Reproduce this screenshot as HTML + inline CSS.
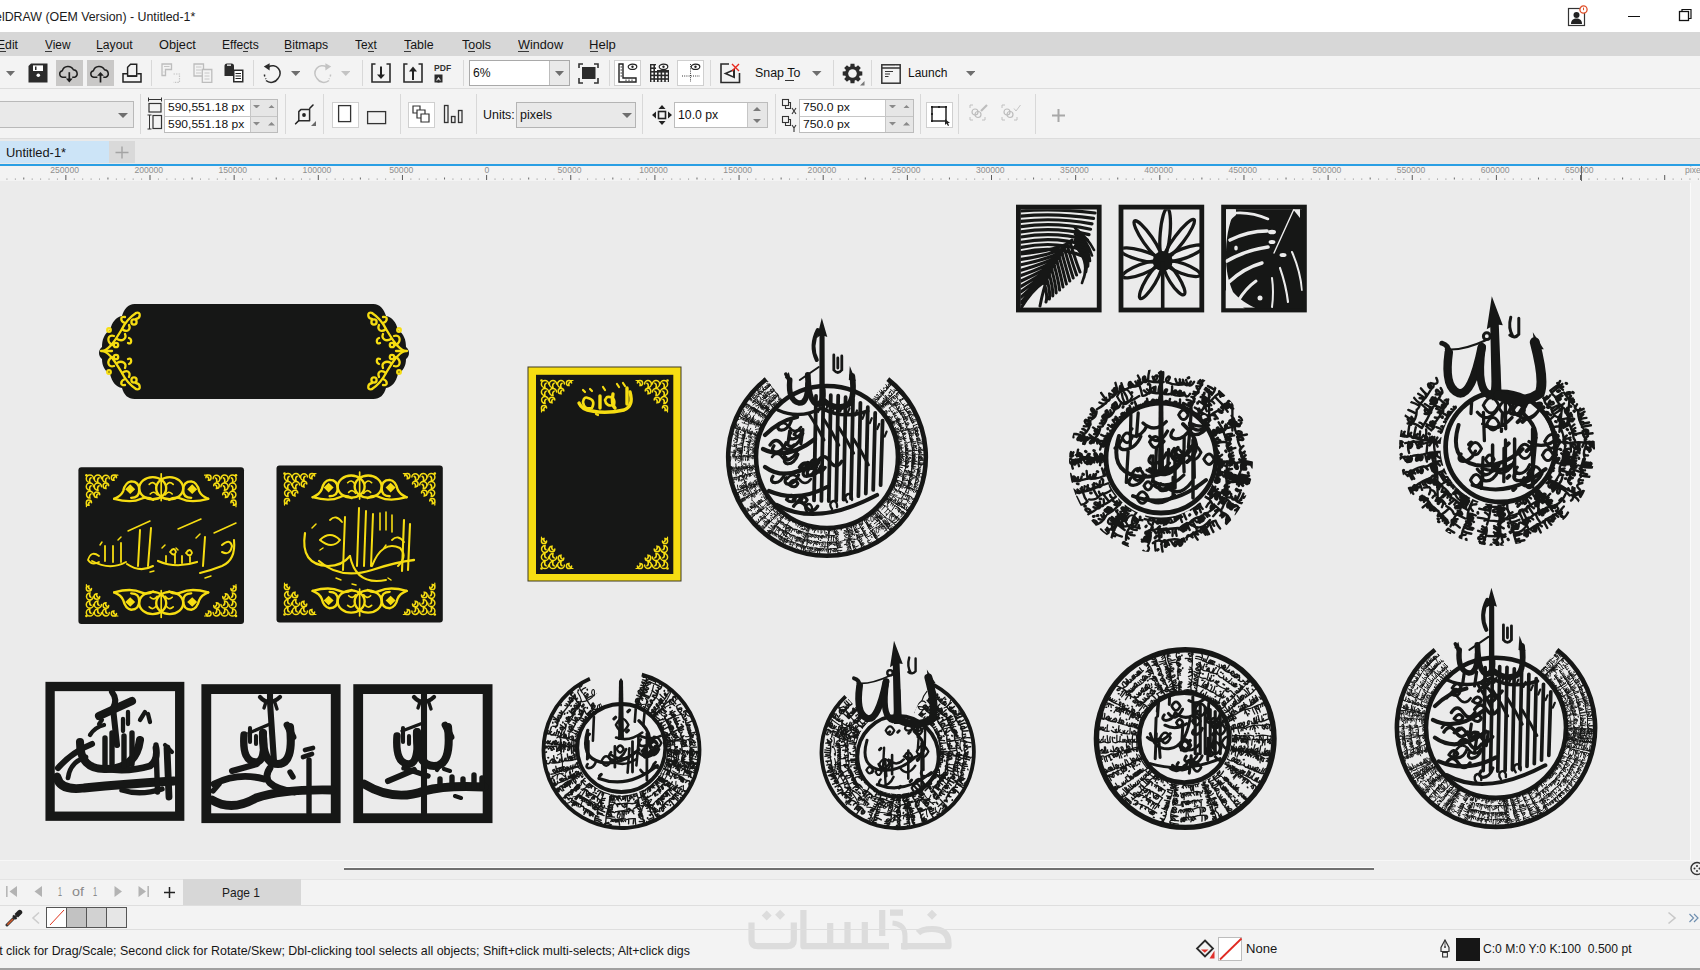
<!DOCTYPE html>
<html><head><meta charset="utf-8">
<style>
*{margin:0;padding:0;box-sizing:border-box}
html,body{width:1700px;height:970px;overflow:hidden;background:#ebebeb;font-family:"Liberation Sans",sans-serif;color:#1a1a1a}
.a{position:absolute;display:block}
.t{position:absolute;white-space:nowrap;line-height:1;transform-origin:0 0}
</style></head><body>
<div class="a" style="left:0px;top:0px;width:1700px;height:32px;background:#ffffff;"></div>
<div class="a" style="left:0px;top:32px;width:1700px;height:24px;background:#d7d7d7;"></div>
<div class="a" style="left:0px;top:56px;width:1700px;height:33px;background:#f3f3f3;"></div>
<div class="a" style="left:0px;top:88px;width:1700px;height:1px;background:#dcdcdc;"></div>
<div class="a" style="left:0px;top:89px;width:1700px;height:50px;background:#f3f3f3;"></div>
<div class="a" style="left:0px;top:138px;width:1700px;height:1px;background:#dcdcdc;"></div>
<div class="a" style="left:0px;top:139px;width:1700px;height:25px;background:#e9e9e9;"></div>
<div class="a" style="left:0px;top:164px;width:1700px;height:2px;background:#2a9fe4;"></div>
<div class="a" style="left:0px;top:166px;width:1700px;height:15px;background:#f3f3f3;"></div>
<div class="a" style="left:0px;top:860px;width:1700px;height:1px;background:#f7f7f7;"></div>
<div class="a" style="left:0px;top:861px;width:1700px;height:18px;background:#efefef;"></div>
<div class="a" style="left:0px;top:879px;width:1700px;height:26px;background:#f3f3f3;"></div>
<div class="a" style="left:0px;top:879px;width:1700px;height:1px;background:#e4e4e4;"></div>
<div class="a" style="left:0px;top:905px;width:1700px;height:1px;background:#dedede;"></div>
<div class="a" style="left:0px;top:906px;width:1700px;height:23px;background:#f3f3f3;"></div>
<div class="a" style="left:0px;top:929px;width:1700px;height:1px;background:#dedede;"></div>
<div class="a" style="left:0px;top:930px;width:1700px;height:38px;background:#f3f3f3;"></div>
<div class="a" style="left:0px;top:968px;width:1700px;height:2px;background:#a0a0a0;"></div>
<div class="t" style="left:-4.79px;top:10.20px;font-size:13px;color:#1b1b1b;transform:scaleX(0.9518);">elDRAW (OEM Version) - Untitled-1*</div>
<svg class="a" style="left:1566px;top:5px;" width="24" height="22" viewBox="0 0 24 22"><rect x="2.5" y="3.5" width="16" height="17" fill="none" stroke="#333" stroke-width="1.2"/><circle cx="10.5" cy="10" r="3" fill="#222"/><path d="M5 19c0-4 2.5-5.5 5.5-5.5S16 15 16 19z" fill="#222"/><circle cx="17.5" cy="4.5" r="3.6" fill="#fff" stroke="#e0502a" stroke-width="1.3"/><rect x="17" y="2.6" width="1" height="2.6" fill="#e0502a"/></svg>
<div class="a" style="left:1628px;top:16px;width:12px;height:1px;background:#111;"></div>
<svg class="a" style="left:1678px;top:8px;" width="16" height="14" viewBox="0 0 16 14"><rect x="1.5" y="3.5" width="9" height="9" fill="none" stroke="#111" stroke-width="1.3"/><path d="M4 3.5V1.5h9v9h-2" fill="none" stroke="#111" stroke-width="1.2"/></svg>
<div class="t" style="left:-2.97px;top:38.82px;font-size:12.5px;color:#141414;transform:scaleX(0.9737);">Edit</div>
<div class="t" style="left:44.54px;top:38.82px;font-size:12.5px;color:#141414;transform:scaleX(0.9473);">View</div>
<div class="t" style="left:96.02px;top:38.82px;font-size:12.5px;color:#141414;transform:scaleX(0.9798);">Layout</div>
<div class="t" style="left:159.03px;top:38.82px;font-size:12.5px;color:#141414;transform:scaleX(1.0215);">Object</div>
<div class="t" style="left:221.53px;top:38.82px;font-size:12.5px;color:#141414;transform:scaleX(0.9682);">Effects</div>
<div class="t" style="left:284.22px;top:38.82px;font-size:12.5px;color:#141414;transform:scaleX(0.9797);">Bitmaps</div>
<div class="t" style="left:355.16px;top:38.82px;font-size:12.5px;color:#141414;transform:scaleX(0.9485);">Text</div>
<div class="t" style="left:404.45px;top:38.82px;font-size:12.5px;color:#141414;transform:scaleX(0.9910);">Table</div>
<div class="t" style="left:461.75px;top:38.82px;font-size:12.5px;color:#141414;transform:scaleX(0.9965);">Tools</div>
<div class="t" style="left:518.14px;top:38.82px;font-size:12.5px;color:#141414;transform:scaleX(1.0127);">Window</div>
<div class="t" style="left:588.65px;top:38.82px;font-size:12.5px;color:#141414;transform:scaleX(1.0460);">Help</div>
<div class="a" style="left:0px;top:51px;width:6px;height:1px;background:#3a3a3a;"></div>
<div class="a" style="left:45px;top:51px;width:7px;height:1px;background:#3a3a3a;"></div>
<div class="a" style="left:97px;top:51px;width:6px;height:1px;background:#3a3a3a;"></div>
<div class="a" style="left:176px;top:51px;width:4px;height:1px;background:#3a3a3a;"></div>
<div class="a" style="left:243px;top:51px;width:5px;height:1px;background:#3a3a3a;"></div>
<div class="a" style="left:285px;top:51px;width:7px;height:1px;background:#3a3a3a;"></div>
<div class="a" style="left:368px;top:51px;width:6px;height:1px;background:#3a3a3a;"></div>
<div class="a" style="left:404px;top:51px;width:7px;height:1px;background:#3a3a3a;"></div>
<div class="a" style="left:468px;top:51px;width:7px;height:1px;background:#3a3a3a;"></div>
<div class="a" style="left:518px;top:51px;width:11px;height:1px;background:#3a3a3a;"></div>
<div class="a" style="left:590px;top:51px;width:8px;height:1px;background:#3a3a3a;"></div>
<svg class="a" style="left:5.800000000000001px;top:70.8px;" width="9" height="5" viewBox="0 0 9 5"><path d="M0 0H9L4.5 5Z" fill="#6e6e6e"/></svg>
<svg class="a" style="left:28px;top:63px;" width="20" height="20" viewBox="0 0 20 20"><path d="M3 0.5H19.5V19.5H0.5V3Z" fill="#2b2b2b"/><rect x="5" y="2.4" width="10" height="5.6" fill="#fff"/><rect x="7" y="3.5" width="1.5" height="3.5" fill="#2b2b2b"/><circle cx="10.3" cy="12.3" r="1.8" fill="#fff"/></svg>
<div class="a" style="left:56px;top:60px;width:27px;height:26px;background:#c9c8c7;"></div>
<div class="a" style="left:87px;top:60px;width:27px;height:26px;background:#c9c8c7;"></div>
<svg class="a" style="left:56px;top:60px;" width="27" height="26" viewBox="56 60 27 26"><path d="M66.3 77.2H62.6A3.3 3.3 0 0 1 62.3 70.7A6 6 0 0 1 73.4 69.8A3.9 3.9 0 0 1 75 77.2H72.2" fill="none" stroke="#1e1e1e" stroke-width="1.45"/><path d="M69.3 72.2V79.5" stroke="#1e1e1e" stroke-width="1.7"/><path d="M65.9 78.6H72.7L69.3 82.6Z" fill="#1e1e1e"/></svg>
<svg class="a" style="left:87px;top:60px;" width="27" height="26" viewBox="87 60 27 26"><path d="M97.4 77.2H93.7A3.3 3.3 0 0 1 93.4 70.7A6 6 0 0 1 104.5 69.8A3.9 3.9 0 0 1 106.1 77.2H103.3" fill="none" stroke="#1e1e1e" stroke-width="1.45"/><path d="M100.5 74.5V82.5" stroke="#1e1e1e" stroke-width="1.7"/><path d="M97.1 75.8H103.9L100.5 71.9Z" fill="#1e1e1e"/></svg>
<svg class="a" style="left:120px;top:61px;" width="24" height="24" viewBox="120 61 24 24"><path d="M127.6 76V67.2L130.6 64.2H136.7V76Z" fill="#f3f3f3" stroke="#222" stroke-width="1.45"/><path d="M127.2 73.7H123V82.1H141V73.7H137.2" fill="none" stroke="#222" stroke-width="1.5"/><path d="M127.4 76.2H137" stroke="#222" stroke-width="1.5"/></svg>
<div class="a" style="left:151px;top:60px;width:1px;height:26px;background:#d8d8d8;"></div>
<svg class="a" style="left:161px;top:63px;" width="20" height="20" viewBox="0 0 20 20"><path d="M1 1H10.5V6.5H4.5V12.5H1Z" fill="none" stroke="#bdbdbd" stroke-width="1.3"/><path d="M3 3.5H8.5M2.5 9H3.5" stroke="#c5c5c5" stroke-width="1"/><path d="M12.5 11H18.5V19.3H12.5" fill="none" stroke="#c5c5c5" stroke-width="1.2" stroke-dasharray="1.5 1"/></svg>
<svg class="a" style="left:192.5px;top:63px;" width="20" height="20" viewBox="0 0 20 20"><path d="M1 1H10.5V13H1Z" fill="none" stroke="#bdbdbd" stroke-width="1.3"/><path d="M3 4H8.5M3 7H8.5M3 10H8.5" stroke="#c8c8c8"/><path d="M9.3 6.5H18.8V19.3H9.3Z" fill="#f3f3f3" stroke="#bdbdbd" stroke-width="1.3"/><path d="M11.5 10H16.5M11.5 13H16.5M11.5 16H16.5" stroke="#c8c8c8"/></svg>
<svg class="a" style="left:224px;top:63px;" width="20" height="20" viewBox="0 0 20 20"><path d="M0.5 3A2.5 2.5 0 0 1 3 0.5H7.5A2.5 2.5 0 0 1 10 3V13H0.5Z" fill="#2b2b2b"/><rect x="3" y="1.5" width="4" height="1.3" fill="#fff"/><path d="M9 6.5H19.5V19.5H9Z" fill="#2b2b2b"/><rect x="10.5" y="8" width="7.5" height="10" fill="#fff"/><path d="M11.5 10.5H17M11.5 13H17M11.5 15.5H17" stroke="#222" stroke-width="1.2"/></svg>
<div class="a" style="left:252.5px;top:60px;width:1px;height:26px;background:#d8d8d8;"></div>
<svg class="a" style="left:262px;top:63px;" width="20" height="21" viewBox="0 0 20 21"><path d="M4 17.5A8 8 0 0 0 16 15.5 7.5 7.5 0 0 0 6.5 4" fill="none" stroke="#2b2b2b" stroke-width="1.5"/><path d="M2.5 11.5A7 7 0 0 0 4 16" fill="none" stroke="#2b2b2b" stroke-width="1.5" stroke-dasharray="2 2"/><path d="M1.8 3.5L7.6 0.3V7.6Z" fill="#2b2b2b"/></svg>
<svg class="a" style="left:290.65px;top:71.0px;" width="9.5" height="5" viewBox="0 0 9.5 5"><path d="M0 0H9.5L4.75 5Z" fill="#6e6e6e"/></svg>
<svg class="a" style="left:312.5px;top:63px;" width="20" height="21" viewBox="0 0 20 21"><path d="M16 17.5A8 8 0 0 1 4 15.5 7.5 7.5 0 0 1 13.5 4" fill="none" stroke="#c3c3c3" stroke-width="1.5"/><path d="M17.5 11.5A7 7 0 0 1 16 16" fill="none" stroke="#c3c3c3" stroke-width="1.5" stroke-dasharray="2 2"/><path d="M18.2 3.5L12.4 0.3V7.6Z" fill="#c3c3c3"/></svg>
<svg class="a" style="left:340.95px;top:71.0px;" width="9.5" height="5" viewBox="0 0 9.5 5"><path d="M0 0H9.5L4.75 5Z" fill="#c3c3c3"/></svg>
<div class="a" style="left:361.5px;top:60px;width:1px;height:26px;background:#d8d8d8;"></div>
<svg class="a" style="left:371px;top:63px;" width="20" height="20" viewBox="0 0 20 20"><path d="M4.5 1H1V19H19V1H15.5" fill="none" stroke="#2b2b2b" stroke-width="1.6"/><path d="M10 3.5V13" stroke="#222" stroke-width="2"/><path d="M6 11.5H14L10 16Z" fill="#222"/></svg>
<svg class="a" style="left:402.5px;top:63px;" width="20" height="20" viewBox="0 0 20 20"><path d="M4.5 1H1V19H19V1H15.5" fill="none" stroke="#2b2b2b" stroke-width="1.6"/><path d="M10 7V17" stroke="#222" stroke-width="2"/><path d="M6 8.5H14L10 3.5Z" fill="#222"/></svg>
<div class="t" style="left:433.5px;top:64px;font-size:9px;font-weight:bold;color:#333;transform:scaleX(0.95)">PDF</div>
<svg class="a" style="left:434px;top:74px;" width="9" height="9" viewBox="0 0 9 9"><rect x="0.5" y="0.5" width="8" height="8" fill="#2b2b2b"/><path d="M2 6.5L4.5 3 7 6.5Z" fill="#fff"/><rect x="3.5" y="5.5" width="2" height="3" fill="#2b2b2b"/></svg>
<div class="a" style="left:462.5px;top:60px;width:1px;height:26px;background:#d8d8d8;"></div>
<div class="a" style="left:469px;top:60px;width:101px;height:26px;background:#ffffff;border:1px solid #a9a9a9;"></div>
<div class="a" style="left:549px;top:61px;width:20px;height:24px;background:#e9e9e9;border-left:1px solid #bdbdbd;"></div>
<svg class="a" style="left:555.0px;top:70.8px;" width="9" height="5" viewBox="0 0 9 5"><path d="M0 0H9L4.5 5Z" fill="#6e6e6e"/></svg>
<div class="t" style="left:473.19px;top:67.32px;font-size:12.5px;color:#111;transform:scaleX(0.9706);">6%</div>
<svg class="a" style="left:578px;top:63px;" width="22" height="21" viewBox="0 0 22 21"><path d="M1 5V1H5M16 1H20V5M20 15V20H16M5 20H1V15" fill="none" stroke="#333" stroke-width="1.6"/><rect x="4" y="4" width="13.5" height="12" fill="#2b2b2b"/></svg>
<div class="a" style="left:608.5px;top:60px;width:1px;height:26px;background:#d8d8d8;"></div>
<div class="a" style="left:614px;top:60px;width:27px;height:26px;background:#ffffff;border:1px solid #cfcfcf;"></div>
<svg class="a" style="left:618px;top:63px;" width="20" height="20" viewBox="0 0 20 20"><path d="M1 1H5V15H18V19H1Z" fill="none" stroke="#222" stroke-width="1.4"/><path d="M2.5 4H4M2.5 7H4M2.5 10H4M2.5 13H4M8 16.5V18M11 16.5V18M14 16.5V18" stroke="#222" stroke-width="0.9"/><ellipse cx="14.5" cy="3.8" rx="4.3" ry="2.6" fill="none" stroke="#222" stroke-width="1.2"/><circle cx="14.5" cy="3.8" r="1.2" fill="#222"/></svg>
<svg class="a" style="left:649px;top:63px;" width="21" height="20" viewBox="0 0 21 20"><path d="M1 1H7V7H20V19H1Z" fill="#2b2b2b"/><rect x="2.4" y="2.4" width="2" height="2" fill="#fff"/><rect x="6.0" y="2.4" width="2" height="2" fill="#fff"/><rect x="2.4" y="6.0" width="2" height="2" fill="#fff"/><rect x="6.0" y="6.0" width="2" height="2" fill="#fff"/><rect x="2.4" y="9.6" width="2" height="2" fill="#fff"/><rect x="6.0" y="9.6" width="2" height="2" fill="#fff"/><rect x="9.6" y="9.6" width="2" height="2" fill="#fff"/><rect x="13.2" y="9.6" width="2" height="2" fill="#fff"/><rect x="16.8" y="9.6" width="2" height="2" fill="#fff"/><rect x="2.4" y="13.2" width="2" height="2" fill="#fff"/><rect x="6.0" y="13.2" width="2" height="2" fill="#fff"/><rect x="9.6" y="13.2" width="2" height="2" fill="#fff"/><rect x="13.2" y="13.2" width="2" height="2" fill="#fff"/><rect x="16.8" y="13.2" width="2" height="2" fill="#fff"/><rect x="2.4" y="16.8" width="2" height="2" fill="#fff"/><rect x="6.0" y="16.8" width="2" height="2" fill="#fff"/><rect x="9.6" y="16.8" width="2" height="2" fill="#fff"/><rect x="13.2" y="16.8" width="2" height="2" fill="#fff"/><rect x="16.8" y="16.8" width="2" height="2" fill="#fff"/><ellipse cx="14.5" cy="3.8" rx="4.3" ry="2.6" fill="#fff" stroke="#222" stroke-width="1.2"/><circle cx="14.5" cy="3.8" r="1.2" fill="#222"/></svg>
<div class="a" style="left:677px;top:60px;width:27px;height:26px;background:#ffffff;border:1px solid #cfcfcf;"></div>
<svg class="a" style="left:681px;top:63px;" width="20" height="20" viewBox="0 0 20 20"><path d="M9.5 1V19M1 13H19" stroke="#333" stroke-width="1" stroke-dasharray="1 1.2"/><ellipse cx="14.5" cy="3.8" rx="4.3" ry="2.6" fill="#fff" stroke="#222" stroke-width="1.2"/><circle cx="14.5" cy="3.8" r="1.2" fill="#222"/></svg>
<div class="a" style="left:710px;top:60px;width:1px;height:26px;background:#d8d8d8;"></div>
<svg class="a" style="left:719.5px;top:63px;" width="21" height="21" viewBox="0 0 21 21"><path d="M9 1H1V19.5H19.5V10" fill="none" stroke="#2b2b2b" stroke-width="1.6"/><path d="M3.5 10.5L15 5.5V15.5Z" fill="#2b2b2b"/><path d="M7.5 10.5L13 8V13Z" fill="#fff"/><path d="M12 1L19 8M19 1L12 8" stroke="#e8281e" stroke-width="1.4"/></svg>
<div class="t" style="left:754.54px;top:67.32px;font-size:12.5px;color:#111;transform:scaleX(0.9919);">Snap To</div>
<div class="a" style="left:785px;top:80px;width:9px;height:1px;background:#333;"></div>
<svg class="a" style="left:812.05px;top:71.0px;" width="9.5" height="5" viewBox="0 0 9.5 5"><path d="M0 0H9.5L4.75 5Z" fill="#6e6e6e"/></svg>
<div class="a" style="left:832.5px;top:60px;width:1px;height:26px;background:#d8d8d8;"></div>
<svg class="a" style="left:841.5px;top:62.5px;" width="23" height="23" viewBox="0 0 23 23"><path d="M20.30 8.51 L20.30 12.49 L17.57 12.69 L17.05 13.95 L18.83 16.03 L16.03 18.83 L13.95 17.05 L12.69 17.57 L12.49 20.30 L8.51 20.30 L8.31 17.57 L7.05 17.05 L4.97 18.83 L2.17 16.03 L3.95 13.95 L3.43 12.69 L0.70 12.49 L0.70 8.51 L3.43 8.31 L3.95 7.05 L2.17 4.97 L4.97 2.17 L7.05 3.95 L8.31 3.43 L8.51 0.70 L12.49 0.70 L12.69 3.43 L13.95 3.95 L16.03 2.17 L18.83 4.97 L17.05 7.05 L17.57 8.31Z" fill="#2b2b2b"/><circle cx="10.5" cy="10.5" r="4.3" fill="#f3f3f3"/><path d="M22.5 18V22.5H18Z" fill="#777"/></svg>
<div class="a" style="left:871.3px;top:60px;width:1px;height:26px;background:#d8d8d8;"></div>
<svg class="a" style="left:881px;top:63.5px;" width="20" height="20" viewBox="0 0 20 20"><rect x="0.8" y="0.8" width="18.4" height="18.4" fill="none" stroke="#333" stroke-width="1.5"/><path d="M1 4H19" stroke="#333" stroke-width="1.5"/><path d="M14 2.3H18" stroke="#fff" stroke-width="0.8" stroke-dasharray="1 0.5"/><path d="M4 7.5H12M4 10H9M4 12.5H7.5" stroke="#333" stroke-width="1.2"/></svg>
<div class="t" style="left:908.04px;top:67.32px;font-size:12.5px;color:#111;transform:scaleX(0.9595);">Launch</div>
<svg class="a" style="left:965.75px;top:71.0px;" width="9.5" height="5" viewBox="0 0 9.5 5"><path d="M0 0H9.5L4.75 5Z" fill="#6e6e6e"/></svg>
<div class="a" style="left:0px;top:101px;width:134px;height:27px;background:#e9e9e9;border:1px solid #b9b9b9;border-left:none;"></div>
<svg class="a" style="left:118.0px;top:113.0px;" width="10" height="5" viewBox="0 0 10 5"><path d="M0 0H10L5.0 5Z" fill="#6e6e6e"/></svg>
<div class="a" style="left:139.5px;top:94px;width:1px;height:40px;background:#d8d8d8;"></div>
<svg class="a" style="left:147px;top:96px;" width="16" height="36" viewBox="0 0 16 36"><path d="M1.5 3.5H14.5" stroke="#333" stroke-width="1"/><path d="M1.5 1.5V5.5M14.5 1.5V5.5" stroke="#333" stroke-width="1"/><rect x="2" y="7.5" width="12" height="8.5" fill="none" stroke="#333" stroke-width="1.2"/><path d="M2.5 19V33" stroke="#333" stroke-width="1"/><path d="M0.5 19H4.5M0.5 33H4.5" stroke="#333"/><rect x="6" y="19.5" width="8.5" height="13" fill="none" stroke="#333" stroke-width="1.2"/></svg>
<div class="a" style="left:163.5px;top:98.5px;width:114.5px;height:34.5px;background:#ffffff;border:1px solid #bcbcbc;"></div>
<div class="a" style="left:249.5px;top:99.5px;width:27.5px;height:32.5px;background:#e6e6e6;border-left:1px solid #c6c6c6;"></div>
<div class="a" style="left:164.5px;top:115.5px;width:112.5px;height:1px;background:#c6c6c6;"></div>
<div class="t" style="left:168.02px;top:101.97px;font-size:11.5px;color:#111;transform:scaleX(1.0451);">590,551.18 px</div>
<div class="t" style="left:168.02px;top:119.07px;font-size:11.5px;color:#111;transform:scaleX(1.0451);">590,551.18 px</div>
<svg class="a" style="left:253.3px;top:104.75px;" width="7" height="3.5" viewBox="0 0 7 3.5"><path d="M0 0H7L3.5 3.5Z" fill="#8a8a8a"/></svg>
<svg class="a" style="left:267.5px;top:104.75px;" width="7" height="3.5" viewBox="0 0 7 3.5"><path d="M0 3.5H7L3.5 0Z" fill="#8a8a8a"/></svg>
<svg class="a" style="left:253.3px;top:122.05px;" width="7" height="3.5" viewBox="0 0 7 3.5"><path d="M0 0H7L3.5 3.5Z" fill="#8a8a8a"/></svg>
<svg class="a" style="left:267.5px;top:122.05px;" width="7" height="3.5" viewBox="0 0 7 3.5"><path d="M0 3.5H7L3.5 0Z" fill="#8a8a8a"/></svg>
<div class="a" style="left:284.5px;top:94px;width:1px;height:40px;background:#d8d8d8;"></div>
<svg class="a" style="left:292px;top:102px;" width="26" height="26" viewBox="292 102 26 26"><path d="M300.8 109.6H309.6V120.8H298.8V111.6Z" fill="none" stroke="#2b2b2b" stroke-width="1.5" stroke-linejoin="round"/><circle cx="304" cy="115" r="1.9" fill="#222"/><path d="M295.6 123.8L298.6 120.8M309.8 108.2L313 105" stroke="#222" stroke-width="1.6" stroke-linecap="round"/><path d="M316 121V126H311Z" fill="#6a6a6a"/></svg>
<div class="a" style="left:323px;top:94px;width:1px;height:40px;background:#d8d8d8;"></div>
<div class="a" style="left:332px;top:101.5px;width:27px;height:26.5px;background:#ffffff;border:1px solid #cfcfcf;"></div>
<svg class="a" style="left:337px;top:104px;" width="16" height="20" viewBox="0 0 16 20"><rect x="1.6" y="1.6" width="12" height="16" fill="none" stroke="#333" stroke-width="1.3"/></svg>
<svg class="a" style="left:366px;top:109px;" width="22" height="17" viewBox="0 0 22 17"><rect x="1.6" y="2.6" width="18" height="12" fill="none" stroke="#333" stroke-width="1.3"/></svg>
<div class="a" style="left:399.5px;top:94px;width:1px;height:40px;background:#d8d8d8;"></div>
<div class="a" style="left:408px;top:101.5px;width:27px;height:26.5px;background:#ffffff;border:1px solid #cfcfcf;"></div>
<svg class="a" style="left:411px;top:104px;" width="22" height="22" viewBox="0 0 22 22"><path d="M2 2H9V9H2Z" fill="none" stroke="#333" stroke-width="1.2"/><path d="M6 6H14V14H6Z" fill="#fff" stroke="#333" stroke-width="1.2"/><path d="M10 10H18V18H10Z" fill="#fff" stroke="#333" stroke-width="1.2"/></svg>
<svg class="a" style="left:442px;top:104px;" width="22" height="22" viewBox="0 0 22 22"><rect x="2.5" y="1.5" width="3.5" height="17" fill="none" stroke="#333" stroke-width="1.3"/><rect x="9.5" y="12.5" width="3.5" height="6" fill="none" stroke="#333" stroke-width="1.3"/><rect x="16.5" y="6.5" width="3.5" height="12" fill="none" stroke="#333" stroke-width="1.3"/></svg>
<div class="a" style="left:475.8px;top:94px;width:1px;height:40px;background:#d8d8d8;"></div>
<div class="t" style="left:482.87px;top:108.92px;font-size:12.5px;color:#111;transform:scaleX(0.9941);">Units:</div>
<div class="a" style="left:516px;top:102px;width:120px;height:26px;background:#e9e9e9;border:1px solid #b4b4b4;"></div>
<div class="t" style="left:519.99px;top:108.92px;font-size:12.5px;color:#111;transform:scaleX(1.0004);">pixels</div>
<svg class="a" style="left:621.8px;top:113.0px;" width="10" height="5" viewBox="0 0 10 5"><path d="M0 0H10L5.0 5Z" fill="#6e6e6e"/></svg>
<div class="a" style="left:642.4px;top:94px;width:1px;height:40px;background:#d8d8d8;"></div>
<svg class="a" style="left:651px;top:104px;" width="22" height="22" viewBox="0 0 22 22"><path d="M11 1L7.5 5H14.5Z M11 21L7.5 17H14.5Z M1 11L5 7.5V14.5Z M21 11L17 7.5V14.5Z" fill="#222"/><rect x="7.5" y="7.5" width="7" height="7" fill="none" stroke="#222" stroke-width="1.6"/></svg>
<div class="a" style="left:673.5px;top:102px;width:94.5px;height:25.5px;background:#ffffff;border:1px solid #bcbcbc;"></div>
<div class="a" style="left:747px;top:103px;width:20px;height:23.5px;background:#e6e6e6;border-left:1px solid #c6c6c6;"></div>
<svg class="a" style="left:752.8px;top:107.0px;" width="8" height="4" viewBox="0 0 8 4"><path d="M0 4H8L4.0 0Z" fill="#7a7a7a"/></svg>
<svg class="a" style="left:752.8px;top:119.3px;" width="8" height="4" viewBox="0 0 8 4"><path d="M0 0H8L4.0 4Z" fill="#7a7a7a"/></svg>
<div class="t" style="left:677.78px;top:109.32px;font-size:12.5px;color:#111;transform:scaleX(0.9815);">10.0 px</div>
<div class="a" style="left:774.5px;top:94px;width:1px;height:40px;background:#d8d8d8;"></div>
<svg class="a" style="left:781px;top:98px;" width="18" height="17" viewBox="0 0 18 17"><rect x="1.5" y="1.5" width="6" height="6" fill="none" stroke="#333" stroke-width="1.1"/><path d="M4.5 7.5V10.5H9.5V4.5H7.5" fill="none" stroke="#333" stroke-width="1.1"/><path d="M11 10L15 16M15 10L11 16" stroke="#333" stroke-width="1.1"/></svg>
<svg class="a" style="left:781px;top:115px;" width="18" height="18" viewBox="0 0 18 18"><rect x="1.5" y="1.5" width="6" height="6" fill="none" stroke="#333" stroke-width="1.1"/><path d="M4.5 7.5V10.5H9.5V4.5H7.5" fill="none" stroke="#333" stroke-width="1.1"/><path d="M11 10L13 13L15 10M13 13V17" fill="none" stroke="#333" stroke-width="1.1"/></svg>
<div class="a" style="left:799px;top:98.5px;width:115px;height:34.5px;background:#ffffff;border:1px solid #bcbcbc;"></div>
<div class="a" style="left:884.6px;top:99.5px;width:28.399999999999977px;height:32.5px;background:#e6e6e6;border-left:1px solid #c6c6c6;"></div>
<div class="a" style="left:800px;top:115.5px;width:113px;height:1px;background:#c6c6c6;"></div>
<div class="t" style="left:803.29px;top:102.27px;font-size:11.5px;color:#111;transform:scaleX(1.0619);">750.0 px</div>
<div class="t" style="left:803.29px;top:119.27px;font-size:11.5px;color:#111;transform:scaleX(1.0619);">750.0 px</div>
<svg class="a" style="left:888.5px;top:104.75px;" width="7" height="3.5" viewBox="0 0 7 3.5"><path d="M0 0H7L3.5 3.5Z" fill="#8a8a8a"/></svg>
<svg class="a" style="left:903.0px;top:104.75px;" width="7" height="3.5" viewBox="0 0 7 3.5"><path d="M0 3.5H7L3.5 0Z" fill="#8a8a8a"/></svg>
<svg class="a" style="left:888.5px;top:122.05px;" width="7" height="3.5" viewBox="0 0 7 3.5"><path d="M0 0H7L3.5 3.5Z" fill="#8a8a8a"/></svg>
<svg class="a" style="left:903.0px;top:122.05px;" width="7" height="3.5" viewBox="0 0 7 3.5"><path d="M0 3.5H7L3.5 0Z" fill="#8a8a8a"/></svg>
<div class="a" style="left:919.5px;top:94px;width:1px;height:40px;background:#d8d8d8;"></div>
<div class="a" style="left:926px;top:101.5px;width:27px;height:26.5px;background:#ffffff;border:1px solid #cfcfcf;"></div>
<svg class="a" style="left:929px;top:104px;" width="22" height="22" viewBox="0 0 22 22"><rect x="3" y="3" width="14" height="14" fill="none" stroke="#222" stroke-width="1.5"/><path d="M2 2h2v2H2zM16 2h2v2h-2zM2 16h2v2H2zM9 2h2v2H9zM2 9h2v2H2z" fill="#222"/><path d="M16 15L16 21L17.5 19.5L19 22L20 21.5L19 19L21 19Z" fill="#222"/></svg>
<div class="a" style="left:958.3px;top:94px;width:1px;height:40px;background:#d8d8d8;"></div>
<svg class="a" style="left:969px;top:104px;" width="22" height="20" viewBox="0 0 22 20"><path d="M1 4V1H4M1 13V16H4M13 16H16V13" fill="none" stroke="#c0c0c0" stroke-width="1"/><circle cx="6" cy="8" r="3" fill="none" stroke="#bdbdbd" stroke-width="1.2"/><circle cx="9" cy="10.5" r="3" fill="none" stroke="#bdbdbd" stroke-width="1.2"/><path d="M12 7L18 1" stroke="#bdbdbd" stroke-width="2.2"/></svg>
<svg class="a" style="left:1001px;top:104px;" width="22" height="20" viewBox="0 0 22 20"><path d="M1 4V1H4M1 13V16H4M13 16H16V13" fill="none" stroke="#c0c0c0" stroke-width="1"/><circle cx="6" cy="8" r="3" fill="none" stroke="#bdbdbd" stroke-width="1.2"/><circle cx="9" cy="10.5" r="3" fill="none" stroke="#bdbdbd" stroke-width="1.2"/><path d="M13 4.5L15 7L19.5 1" fill="none" stroke="#c5c5c5" stroke-width="1"/></svg>
<div class="a" style="left:1034.5px;top:94px;width:1px;height:40px;background:#d8d8d8;"></div>
<svg class="a" style="left:1051px;top:108px;" width="15" height="15" viewBox="0 0 15 15"><path d="M7.5 1V14M1 7.5H14" stroke="#a8a8a8" stroke-width="2"/></svg>
<div class="a" style="left:0px;top:141px;width:109px;height:22px;background:#cce4f7;"></div>
<div class="a" style="left:109px;top:141px;width:26px;height:22px;background:#d9d9d9;"></div>
<svg class="a" style="left:113px;top:145px;" width="18" height="15" viewBox="0 0 18 15"><path d="M9 1.5V13.5M2.5 7.5H15.5" stroke="#a3a3a3" stroke-width="1.4"/></svg>
<div class="t" style="left:6.03px;top:147.37px;font-size:12.2px;color:#161616;transform:scaleX(1.0553);">Untitled-1*</div>
<svg class="a" style="left:0px;top:166px;" width="1700" height="15" viewBox="0 0 1700 15"><rect x="6.44" y="12.5" width="1" height="1.2" fill="#9a9a9a"/><rect x="14.86" y="12.5" width="1" height="1.2" fill="#9a9a9a"/><rect x="23.27" y="11.5" width="1" height="2" fill="#6a6a6a"/><rect x="31.69" y="12.5" width="1" height="1.2" fill="#9a9a9a"/><rect x="40.10" y="12.5" width="1" height="1.2" fill="#9a9a9a"/><rect x="48.52" y="12.5" width="1" height="1.2" fill="#9a9a9a"/><rect x="56.93" y="12.5" width="1" height="1.2" fill="#9a9a9a"/><rect x="65.35" y="9" width="1" height="5" fill="#5a5a5a"/><rect x="73.77" y="12.5" width="1" height="1.2" fill="#9a9a9a"/><rect x="82.18" y="12.5" width="1" height="1.2" fill="#9a9a9a"/><rect x="90.60" y="12.5" width="1" height="1.2" fill="#9a9a9a"/><rect x="99.01" y="12.5" width="1" height="1.2" fill="#9a9a9a"/><rect x="107.43" y="11.5" width="1" height="2" fill="#6a6a6a"/><rect x="115.84" y="12.5" width="1" height="1.2" fill="#9a9a9a"/><rect x="124.26" y="12.5" width="1" height="1.2" fill="#9a9a9a"/><rect x="132.67" y="12.5" width="1" height="1.2" fill="#9a9a9a"/><rect x="141.09" y="12.5" width="1" height="1.2" fill="#9a9a9a"/><rect x="149.50" y="9" width="1" height="5" fill="#5a5a5a"/><rect x="157.91" y="12.5" width="1" height="1.2" fill="#9a9a9a"/><rect x="166.33" y="12.5" width="1" height="1.2" fill="#9a9a9a"/><rect x="174.75" y="12.5" width="1" height="1.2" fill="#9a9a9a"/><rect x="183.16" y="12.5" width="1" height="1.2" fill="#9a9a9a"/><rect x="191.57" y="11.5" width="1" height="2" fill="#6a6a6a"/><rect x="199.99" y="12.5" width="1" height="1.2" fill="#9a9a9a"/><rect x="208.41" y="12.5" width="1" height="1.2" fill="#9a9a9a"/><rect x="216.82" y="12.5" width="1" height="1.2" fill="#9a9a9a"/><rect x="225.24" y="12.5" width="1" height="1.2" fill="#9a9a9a"/><rect x="233.65" y="9" width="1" height="5" fill="#5a5a5a"/><rect x="242.06" y="12.5" width="1" height="1.2" fill="#9a9a9a"/><rect x="250.48" y="12.5" width="1" height="1.2" fill="#9a9a9a"/><rect x="258.89" y="12.5" width="1" height="1.2" fill="#9a9a9a"/><rect x="267.31" y="12.5" width="1" height="1.2" fill="#9a9a9a"/><rect x="275.73" y="11.5" width="1" height="2" fill="#6a6a6a"/><rect x="284.14" y="12.5" width="1" height="1.2" fill="#9a9a9a"/><rect x="292.56" y="12.5" width="1" height="1.2" fill="#9a9a9a"/><rect x="300.97" y="12.5" width="1" height="1.2" fill="#9a9a9a"/><rect x="309.38" y="12.5" width="1" height="1.2" fill="#9a9a9a"/><rect x="317.80" y="9" width="1" height="5" fill="#5a5a5a"/><rect x="326.22" y="12.5" width="1" height="1.2" fill="#9a9a9a"/><rect x="334.63" y="12.5" width="1" height="1.2" fill="#9a9a9a"/><rect x="343.05" y="12.5" width="1" height="1.2" fill="#9a9a9a"/><rect x="351.46" y="12.5" width="1" height="1.2" fill="#9a9a9a"/><rect x="359.88" y="11.5" width="1" height="2" fill="#6a6a6a"/><rect x="368.29" y="12.5" width="1" height="1.2" fill="#9a9a9a"/><rect x="376.71" y="12.5" width="1" height="1.2" fill="#9a9a9a"/><rect x="385.12" y="12.5" width="1" height="1.2" fill="#9a9a9a"/><rect x="393.54" y="12.5" width="1" height="1.2" fill="#9a9a9a"/><rect x="401.95" y="9" width="1" height="5" fill="#5a5a5a"/><rect x="410.37" y="12.5" width="1" height="1.2" fill="#9a9a9a"/><rect x="418.78" y="12.5" width="1" height="1.2" fill="#9a9a9a"/><rect x="427.20" y="12.5" width="1" height="1.2" fill="#9a9a9a"/><rect x="435.61" y="12.5" width="1" height="1.2" fill="#9a9a9a"/><rect x="444.03" y="11.5" width="1" height="2" fill="#6a6a6a"/><rect x="452.44" y="12.5" width="1" height="1.2" fill="#9a9a9a"/><rect x="460.86" y="12.5" width="1" height="1.2" fill="#9a9a9a"/><rect x="469.27" y="12.5" width="1" height="1.2" fill="#9a9a9a"/><rect x="477.69" y="12.5" width="1" height="1.2" fill="#9a9a9a"/><rect x="486.10" y="9" width="1" height="5" fill="#5a5a5a"/><rect x="494.52" y="12.5" width="1" height="1.2" fill="#9a9a9a"/><rect x="502.93" y="12.5" width="1" height="1.2" fill="#9a9a9a"/><rect x="511.35" y="12.5" width="1" height="1.2" fill="#9a9a9a"/><rect x="519.76" y="12.5" width="1" height="1.2" fill="#9a9a9a"/><rect x="528.18" y="11.5" width="1" height="2" fill="#6a6a6a"/><rect x="536.59" y="12.5" width="1" height="1.2" fill="#9a9a9a"/><rect x="545.00" y="12.5" width="1" height="1.2" fill="#9a9a9a"/><rect x="553.42" y="12.5" width="1" height="1.2" fill="#9a9a9a"/><rect x="561.84" y="12.5" width="1" height="1.2" fill="#9a9a9a"/><rect x="570.25" y="9" width="1" height="5" fill="#5a5a5a"/><rect x="578.66" y="12.5" width="1" height="1.2" fill="#9a9a9a"/><rect x="587.08" y="12.5" width="1" height="1.2" fill="#9a9a9a"/><rect x="595.50" y="12.5" width="1" height="1.2" fill="#9a9a9a"/><rect x="603.91" y="12.5" width="1" height="1.2" fill="#9a9a9a"/><rect x="612.33" y="11.5" width="1" height="2" fill="#6a6a6a"/><rect x="620.74" y="12.5" width="1" height="1.2" fill="#9a9a9a"/><rect x="629.15" y="12.5" width="1" height="1.2" fill="#9a9a9a"/><rect x="637.57" y="12.5" width="1" height="1.2" fill="#9a9a9a"/><rect x="645.99" y="12.5" width="1" height="1.2" fill="#9a9a9a"/><rect x="654.40" y="9" width="1" height="5" fill="#5a5a5a"/><rect x="662.82" y="12.5" width="1" height="1.2" fill="#9a9a9a"/><rect x="671.23" y="12.5" width="1" height="1.2" fill="#9a9a9a"/><rect x="679.65" y="12.5" width="1" height="1.2" fill="#9a9a9a"/><rect x="688.06" y="12.5" width="1" height="1.2" fill="#9a9a9a"/><rect x="696.48" y="11.5" width="1" height="2" fill="#6a6a6a"/><rect x="704.89" y="12.5" width="1" height="1.2" fill="#9a9a9a"/><rect x="713.31" y="12.5" width="1" height="1.2" fill="#9a9a9a"/><rect x="721.72" y="12.5" width="1" height="1.2" fill="#9a9a9a"/><rect x="730.14" y="12.5" width="1" height="1.2" fill="#9a9a9a"/><rect x="738.55" y="9" width="1" height="5" fill="#5a5a5a"/><rect x="746.97" y="12.5" width="1" height="1.2" fill="#9a9a9a"/><rect x="755.38" y="12.5" width="1" height="1.2" fill="#9a9a9a"/><rect x="763.80" y="12.5" width="1" height="1.2" fill="#9a9a9a"/><rect x="772.21" y="12.5" width="1" height="1.2" fill="#9a9a9a"/><rect x="780.63" y="11.5" width="1" height="2" fill="#6a6a6a"/><rect x="789.04" y="12.5" width="1" height="1.2" fill="#9a9a9a"/><rect x="797.46" y="12.5" width="1" height="1.2" fill="#9a9a9a"/><rect x="805.87" y="12.5" width="1" height="1.2" fill="#9a9a9a"/><rect x="814.29" y="12.5" width="1" height="1.2" fill="#9a9a9a"/><rect x="822.70" y="9" width="1" height="5" fill="#5a5a5a"/><rect x="831.12" y="12.5" width="1" height="1.2" fill="#9a9a9a"/><rect x="839.53" y="12.5" width="1" height="1.2" fill="#9a9a9a"/><rect x="847.95" y="12.5" width="1" height="1.2" fill="#9a9a9a"/><rect x="856.36" y="12.5" width="1" height="1.2" fill="#9a9a9a"/><rect x="864.78" y="11.5" width="1" height="2" fill="#6a6a6a"/><rect x="873.19" y="12.5" width="1" height="1.2" fill="#9a9a9a"/><rect x="881.61" y="12.5" width="1" height="1.2" fill="#9a9a9a"/><rect x="890.02" y="12.5" width="1" height="1.2" fill="#9a9a9a"/><rect x="898.44" y="12.5" width="1" height="1.2" fill="#9a9a9a"/><rect x="906.85" y="9" width="1" height="5" fill="#5a5a5a"/><rect x="915.26" y="12.5" width="1" height="1.2" fill="#9a9a9a"/><rect x="923.68" y="12.5" width="1" height="1.2" fill="#9a9a9a"/><rect x="932.10" y="12.5" width="1" height="1.2" fill="#9a9a9a"/><rect x="940.51" y="12.5" width="1" height="1.2" fill="#9a9a9a"/><rect x="948.93" y="11.5" width="1" height="2" fill="#6a6a6a"/><rect x="957.34" y="12.5" width="1" height="1.2" fill="#9a9a9a"/><rect x="965.75" y="12.5" width="1" height="1.2" fill="#9a9a9a"/><rect x="974.17" y="12.5" width="1" height="1.2" fill="#9a9a9a"/><rect x="982.59" y="12.5" width="1" height="1.2" fill="#9a9a9a"/><rect x="991.00" y="9" width="1" height="5" fill="#5a5a5a"/><rect x="999.41" y="12.5" width="1" height="1.2" fill="#9a9a9a"/><rect x="1007.83" y="12.5" width="1" height="1.2" fill="#9a9a9a"/><rect x="1016.25" y="12.5" width="1" height="1.2" fill="#9a9a9a"/><rect x="1024.66" y="12.5" width="1" height="1.2" fill="#9a9a9a"/><rect x="1033.08" y="11.5" width="1" height="2" fill="#6a6a6a"/><rect x="1041.49" y="12.5" width="1" height="1.2" fill="#9a9a9a"/><rect x="1049.90" y="12.5" width="1" height="1.2" fill="#9a9a9a"/><rect x="1058.32" y="12.5" width="1" height="1.2" fill="#9a9a9a"/><rect x="1066.73" y="12.5" width="1" height="1.2" fill="#9a9a9a"/><rect x="1075.15" y="9" width="1" height="5" fill="#5a5a5a"/><rect x="1083.57" y="12.5" width="1" height="1.2" fill="#9a9a9a"/><rect x="1091.98" y="12.5" width="1" height="1.2" fill="#9a9a9a"/><rect x="1100.39" y="12.5" width="1" height="1.2" fill="#9a9a9a"/><rect x="1108.81" y="12.5" width="1" height="1.2" fill="#9a9a9a"/><rect x="1117.23" y="11.5" width="1" height="2" fill="#6a6a6a"/><rect x="1125.64" y="12.5" width="1" height="1.2" fill="#9a9a9a"/><rect x="1134.06" y="12.5" width="1" height="1.2" fill="#9a9a9a"/><rect x="1142.47" y="12.5" width="1" height="1.2" fill="#9a9a9a"/><rect x="1150.88" y="12.5" width="1" height="1.2" fill="#9a9a9a"/><rect x="1159.30" y="9" width="1" height="5" fill="#5a5a5a"/><rect x="1167.72" y="12.5" width="1" height="1.2" fill="#9a9a9a"/><rect x="1176.13" y="12.5" width="1" height="1.2" fill="#9a9a9a"/><rect x="1184.55" y="12.5" width="1" height="1.2" fill="#9a9a9a"/><rect x="1192.96" y="12.5" width="1" height="1.2" fill="#9a9a9a"/><rect x="1201.38" y="11.5" width="1" height="2" fill="#6a6a6a"/><rect x="1209.79" y="12.5" width="1" height="1.2" fill="#9a9a9a"/><rect x="1218.21" y="12.5" width="1" height="1.2" fill="#9a9a9a"/><rect x="1226.62" y="12.5" width="1" height="1.2" fill="#9a9a9a"/><rect x="1235.04" y="12.5" width="1" height="1.2" fill="#9a9a9a"/><rect x="1243.45" y="9" width="1" height="5" fill="#5a5a5a"/><rect x="1251.87" y="12.5" width="1" height="1.2" fill="#9a9a9a"/><rect x="1260.28" y="12.5" width="1" height="1.2" fill="#9a9a9a"/><rect x="1268.69" y="12.5" width="1" height="1.2" fill="#9a9a9a"/><rect x="1277.11" y="12.5" width="1" height="1.2" fill="#9a9a9a"/><rect x="1285.53" y="11.5" width="1" height="2" fill="#6a6a6a"/><rect x="1293.94" y="12.5" width="1" height="1.2" fill="#9a9a9a"/><rect x="1302.36" y="12.5" width="1" height="1.2" fill="#9a9a9a"/><rect x="1310.77" y="12.5" width="1" height="1.2" fill="#9a9a9a"/><rect x="1319.18" y="12.5" width="1" height="1.2" fill="#9a9a9a"/><rect x="1327.60" y="9" width="1" height="5" fill="#5a5a5a"/><rect x="1336.01" y="12.5" width="1" height="1.2" fill="#9a9a9a"/><rect x="1344.43" y="12.5" width="1" height="1.2" fill="#9a9a9a"/><rect x="1352.84" y="12.5" width="1" height="1.2" fill="#9a9a9a"/><rect x="1361.26" y="12.5" width="1" height="1.2" fill="#9a9a9a"/><rect x="1369.67" y="11.5" width="1" height="2" fill="#6a6a6a"/><rect x="1378.09" y="12.5" width="1" height="1.2" fill="#9a9a9a"/><rect x="1386.50" y="12.5" width="1" height="1.2" fill="#9a9a9a"/><rect x="1394.92" y="12.5" width="1" height="1.2" fill="#9a9a9a"/><rect x="1403.33" y="12.5" width="1" height="1.2" fill="#9a9a9a"/><rect x="1411.75" y="9" width="1" height="5" fill="#5a5a5a"/><rect x="1420.16" y="12.5" width="1" height="1.2" fill="#9a9a9a"/><rect x="1428.58" y="12.5" width="1" height="1.2" fill="#9a9a9a"/><rect x="1436.99" y="12.5" width="1" height="1.2" fill="#9a9a9a"/><rect x="1445.41" y="12.5" width="1" height="1.2" fill="#9a9a9a"/><rect x="1453.83" y="11.5" width="1" height="2" fill="#6a6a6a"/><rect x="1462.24" y="12.5" width="1" height="1.2" fill="#9a9a9a"/><rect x="1470.65" y="12.5" width="1" height="1.2" fill="#9a9a9a"/><rect x="1479.07" y="12.5" width="1" height="1.2" fill="#9a9a9a"/><rect x="1487.48" y="12.5" width="1" height="1.2" fill="#9a9a9a"/><rect x="1495.90" y="9" width="1" height="5" fill="#5a5a5a"/><rect x="1504.32" y="12.5" width="1" height="1.2" fill="#9a9a9a"/><rect x="1512.73" y="12.5" width="1" height="1.2" fill="#9a9a9a"/><rect x="1521.14" y="12.5" width="1" height="1.2" fill="#9a9a9a"/><rect x="1529.56" y="12.5" width="1" height="1.2" fill="#9a9a9a"/><rect x="1537.98" y="11.5" width="1" height="2" fill="#6a6a6a"/><rect x="1546.39" y="12.5" width="1" height="1.2" fill="#9a9a9a"/><rect x="1554.81" y="12.5" width="1" height="1.2" fill="#9a9a9a"/><rect x="1563.22" y="12.5" width="1" height="1.2" fill="#9a9a9a"/><rect x="1571.63" y="12.5" width="1" height="1.2" fill="#9a9a9a"/><rect x="1580.05" y="9" width="1" height="5" fill="#5a5a5a"/><rect x="1588.47" y="12.5" width="1" height="1.2" fill="#9a9a9a"/><rect x="1596.88" y="12.5" width="1" height="1.2" fill="#9a9a9a"/><rect x="1605.30" y="12.5" width="1" height="1.2" fill="#9a9a9a"/><rect x="1613.71" y="12.5" width="1" height="1.2" fill="#9a9a9a"/><rect x="1622.13" y="11.5" width="1" height="2" fill="#6a6a6a"/><rect x="1630.54" y="12.5" width="1" height="1.2" fill="#9a9a9a"/><rect x="1638.96" y="12.5" width="1" height="1.2" fill="#9a9a9a"/><rect x="1647.37" y="12.5" width="1" height="1.2" fill="#9a9a9a"/><rect x="1655.79" y="12.5" width="1" height="1.2" fill="#9a9a9a"/><rect x="1664.20" y="9" width="1" height="5" fill="#5a5a5a"/><rect x="1672.62" y="12.5" width="1" height="1.2" fill="#9a9a9a"/><rect x="1681.03" y="12.5" width="1" height="1.2" fill="#9a9a9a"/><rect x="1689.45" y="12.5" width="1" height="1.2" fill="#9a9a9a"/><rect x="1697.86" y="12.5" width="1" height="1.2" fill="#9a9a9a"/></svg>
<div class="t" style="left:-33.84px;top:166.32px;font-size:8.6px;color:#8e8e8e;transform:scaleX(1.0000);">300000</div>
<div class="t" style="left:50.27px;top:166.32px;font-size:8.6px;color:#8e8e8e;transform:scaleX(1.0000);">250000</div>
<div class="t" style="left:134.42px;top:166.32px;font-size:8.6px;color:#8e8e8e;transform:scaleX(1.0000);">200000</div>
<div class="t" style="left:218.46px;top:166.32px;font-size:8.6px;color:#8e8e8e;transform:scaleX(1.0000);">150000</div>
<div class="t" style="left:302.61px;top:166.32px;font-size:8.6px;color:#8e8e8e;transform:scaleX(1.0000);">100000</div>
<div class="t" style="left:389.30px;top:166.32px;font-size:8.6px;color:#8e8e8e;transform:scaleX(1.0000);">50000</div>
<div class="t" style="left:484.61px;top:166.32px;font-size:8.6px;color:#8e8e8e;transform:scaleX(1.0000);">0</div>
<div class="t" style="left:557.60px;top:166.32px;font-size:8.6px;color:#8e8e8e;transform:scaleX(1.0000);">50000</div>
<div class="t" style="left:639.21px;top:166.32px;font-size:8.6px;color:#8e8e8e;transform:scaleX(1.0000);">100000</div>
<div class="t" style="left:723.36px;top:166.32px;font-size:8.6px;color:#8e8e8e;transform:scaleX(1.0000);">150000</div>
<div class="t" style="left:807.62px;top:166.32px;font-size:8.6px;color:#8e8e8e;transform:scaleX(1.0000);">200000</div>
<div class="t" style="left:891.77px;top:166.32px;font-size:8.6px;color:#8e8e8e;transform:scaleX(1.0000);">250000</div>
<div class="t" style="left:975.96px;top:166.32px;font-size:8.6px;color:#8e8e8e;transform:scaleX(1.0000);">300000</div>
<div class="t" style="left:1060.11px;top:166.32px;font-size:8.6px;color:#8e8e8e;transform:scaleX(1.0000);">350000</div>
<div class="t" style="left:1144.32px;top:166.32px;font-size:8.6px;color:#8e8e8e;transform:scaleX(1.0000);">400000</div>
<div class="t" style="left:1228.47px;top:166.32px;font-size:8.6px;color:#8e8e8e;transform:scaleX(1.0000);">450000</div>
<div class="t" style="left:1312.56px;top:166.32px;font-size:8.6px;color:#8e8e8e;transform:scaleX(1.0000);">500000</div>
<div class="t" style="left:1396.71px;top:166.32px;font-size:8.6px;color:#8e8e8e;transform:scaleX(1.0000);">550000</div>
<div class="t" style="left:1480.82px;top:166.32px;font-size:8.6px;color:#8e8e8e;transform:scaleX(1.0000);">600000</div>
<div class="t" style="left:1564.97px;top:166.32px;font-size:8.6px;color:#8e8e8e;transform:scaleX(1.0000);">650000</div>
<div class="t" style="left:1685px;top:166.3px;font-size:8.6px;color:#8e8e8e">pixels</div>
<div class="a" style="left:1580.5px;top:166px;width:1px;height:15px;background:#666;"></div>
<div class="a" style="left:1690px;top:181px;width:10px;height:679px;background:#f1f1f1;"></div>
<div class="a" style="left:1690px;top:183px;width:1px;height:677px;background:#fafafa;"></div>
<div class="a" style="left:0px;top:181px;width:1690px;height:2px;background:#ebebeb;"></div>
<div class="a" style="left:344px;top:867px;width:1030px;height:1px;background:#fbfbfb;"></div>
<div class="a" style="left:344px;top:868px;width:1030px;height:2px;background:#707070;"></div>
<svg class="a" style="left:1688px;top:861px;" width="12" height="16" viewBox="0 0 12 16"><circle cx="9" cy="7.5" r="6" fill="none" stroke="#333" stroke-width="1.4"/><circle cx="9" cy="5" r="1" fill="#333"/><circle cx="9" cy="10" r="1" fill="#333"/><circle cx="6.5" cy="7.5" r="1" fill="#333"/><circle cx="11.5" cy="7.5" r="1" fill="#333"/></svg>
<svg class="a" style="left:5px;top:885px;" width="14" height="13" viewBox="0 0 14 13"><rect x="1.2" y="1" width="1.3" height="11" fill="#a9a9a9"/><path d="M12 1V12L4.5 6.5Z" fill="#b3b3b3"/></svg>
<svg class="a" style="left:32px;top:885px;" width="12" height="13" viewBox="0 0 12 13"><path d="M10 1V12L2.5 6.5Z" fill="#b3b3b3"/></svg>
<div class="t" style="left:57.87px;top:886.47px;font-size:12.2px;color:#8a8a8a;transform:scaleX(0.5841);">1</div>
<div class="t" style="left:72.03px;top:886.47px;font-size:12.2px;color:#8a8a8a;transform:scaleX(1.1754);">of</div>
<div class="t" style="left:92.95px;top:886.47px;font-size:12.2px;color:#8a8a8a;transform:scaleX(0.6030);">1</div>
<svg class="a" style="left:113px;top:885px;" width="12" height="13" viewBox="0 0 12 13"><path d="M1.5 1V12L9 6.5Z" fill="#b3b3b3"/></svg>
<svg class="a" style="left:137px;top:885px;" width="14" height="13" viewBox="0 0 14 13"><path d="M1.5 1V12L9 6.5Z" fill="#b3b3b3"/><rect x="10.5" y="1" width="1.3" height="11" fill="#a9a9a9"/></svg>
<svg class="a" style="left:163px;top:886px;" width="13" height="13" viewBox="0 0 13 13"><path d="M6.5 1V12M1 6.5H12" stroke="#222" stroke-width="1.5"/></svg>
<div class="a" style="left:182.5px;top:879px;width:118.5px;height:26px;background:#d7d7d7;"></div>
<div class="t" style="left:221.64px;top:886.87px;font-size:12.2px;color:#1b1b1b;transform:scaleX(0.9825);">Page 1</div>
<svg class="a" style="left:5px;top:909px;" width="18" height="18" viewBox="0 0 18 18"><path d="M2 16L10.5 7.5" stroke="#333" stroke-width="3" stroke-linecap="round"/><path d="M2.8 15.2L7.5 10.5" stroke="#d35a2a" stroke-width="1.6" stroke-linecap="round"/><path d="M9.5 5L13 1.5A2 2 0 0 1 16.5 5L13 8.5Z" fill="#222"/><path d="M8 6.5L11.5 10" stroke="#222" stroke-width="2"/></svg>
<svg class="a" style="left:30px;top:911px;" width="11" height="14" viewBox="0 0 11 14"><path d="M9 1.5L3 7L9 12.5" fill="none" stroke="#cdcdcd" stroke-width="1.6"/></svg>
<div class="a" style="left:45.5px;top:907px;width:81px;height:21px;background:#555;"></div>
<div class="a" style="left:46.5px;top:908px;width:19.5px;height:19px;background:#ffffff;"></div>
<svg class="a" style="left:46.5px;top:908px;" width="20" height="19" viewBox="0 0 20 19"><path d="M3 17L17 2" stroke="#e0341e" stroke-width="1"/></svg>
<div class="a" style="left:67px;top:908px;width:19px;height:19px;background:#c2c2c2;"></div>
<div class="a" style="left:87px;top:908px;width:18.5px;height:19px;background:#d2d2d2;"></div>
<div class="a" style="left:106.5px;top:908px;width:19px;height:19px;background:#e6e6e6;"></div>
<svg class="a" style="left:1666px;top:911px;" width="12" height="14" viewBox="0 0 12 14"><path d="M2.5 1.5L9 7L2.5 12.5" fill="none" stroke="#c8c8c8" stroke-width="1.6"/></svg>
<svg class="a" style="left:1688px;top:912px;" width="12" height="12" viewBox="0 0 12 12"><path d="M1.5 2L5.5 6L1.5 10M6 2L10 6L6 10" fill="none" stroke="#6f8fb0" stroke-width="1.2"/></svg>
<svg class="a" style="left:0px;top:0px;pointer-events:none" width="1700" height="970" viewBox="0 0 1700 970"><g fill="none" stroke="#dcdcdc" stroke-width="6.2" stroke-linejoin="round"><path d="M751.5 922.5V940Q751.5 946.2 758 946.2H787Q793.8 946.2 793.8 940V922.5"/><path d="M803.4 910V946.2H889"/><path d="M830.2 923V943M847.5 922V943M864.8 922V943"/><path d="M882.2 910V936M890 912.6H903"/><path d="M892.5 923Q905 924 905 936V949.4" stroke-width="5"/><path d="M901 946.2H948.5V943Q948.5 929 932 929Q922 929 918 933" /></g><g fill="#dcdcdc"><path d="M766.7 910.5l5 5-5 5-5-5zM780.1 909.8l5 5-5 5-5-5zM932 909.8l5 5-5 5-5-5z"/></g></svg>
<div class="a" style="left:0px;top:929px;width:1700px;height:1px;background:#dedede;"></div>
<div class="a" style="left:0px;top:905px;width:1700px;height:1px;background:#dedede;"></div>
<div class="t" style="left:-6.61px;top:944.56px;font-size:12.8px;color:#161616;transform:scaleX(0.9702);">xt click for Drag/Scale; Second click for Rotate/Skew; Dbl-clicking tool selects all objects; Shift+click multi-selects; Alt+click digs</div>
<svg class="a" style="left:1195px;top:939px;" width="21" height="21" viewBox="0 0 21 21"><path d="M10 1.5L18 9.5L10 17.5L2 9.5Z" fill="none" stroke="#2b2b2b" stroke-width="1.8"/><path d="M6 10.5H13.5L9.8 13.8Z" fill="#e0302a"/><path d="M19.5 11.5V19.5H14.5Z" fill="#e0302a"/></svg>
<div class="a" style="left:1217.5px;top:937px;width:24.5px;height:24px;background:#ffffff;border:1px solid #bdbdbd;"></div>
<svg class="a" style="left:1217.5px;top:937px;" width="25" height="24" viewBox="0 0 25 24"><path d="M2 22.5L23.5 1.5" stroke="#e02a22" stroke-width="1.8"/></svg>
<div class="t" style="left:1245.55px;top:943.16px;font-size:12.8px;color:#161616;transform:scaleX(1.0210);">None</div>
<svg class="a" style="left:1439px;top:939px;" width="12" height="20" viewBox="0 0 12 20"><path d="M6 1L10 8.5V12.5H2V8.5Z" fill="none" stroke="#333" stroke-width="1.2"/><circle cx="6" cy="8" r="1" fill="#333"/><path d="M6 1V7" stroke="#333" stroke-width="0.8"/><rect x="3.6" y="13.5" width="4.8" height="4.5" fill="none" stroke="#333" stroke-width="1.1"/></svg>
<div class="a" style="left:1455.5px;top:937.5px;width:24px;height:23.5px;background:#161616;"></div>
<div class="t" style="left:1483.09px;top:943.16px;font-size:12.8px;color:#161616;transform:scaleX(0.9463);white-space:pre;">C:0 M:0 Y:0 K:100  0.500 pt</div>
<svg class="a" style="left:0;top:0" width="1700" height="970" viewBox="0 0 1700 970"><defs><clipPath id="pl0"><rect x="1020.5" y="209.2" width="77" height="99"/></clipPath><clipPath id="pl1"><rect x="1123.1" y="209.2" width="77" height="99"/></clipPath><clipPath id="pl2"><rect x="1225.7" y="209.2" width="77" height="99"/></clipPath><clipPath id="k1a"><path d="M887.3 379.8A98 98 0 1 1 766.7 379.8L782.7 400.3A72 72 0 1 0 871.3 400.3Z"/></clipPath><clipPath id="k1b"><circle cx="827" cy="457" r="69.5"/></clipPath><clipPath id="k2a"><path d="M1556.5 650.3A98.3 98.3 0 1 1 1435.5 650.3L1452.3 671.9A71 71 0 1 0 1539.7 671.9Z"/></clipPath><clipPath id="k2b"><circle cx="1496" cy="727.8" r="68.5"/></clipPath><clipPath id="f1a"><path clip-rule="evenodd" d="M1069 461a92 92 0 1 0 184 0a92 92 0 1 0 -184 0ZM1104.5 461a56.5 56.5 0 1 0 113 0a56.5 56.5 0 1 0 -113 0Z"/></clipPath><clipPath id="f1b"><circle cx="1161" cy="458" r="53.5"/></clipPath><clipPath id="i1a"><path clip-rule="evenodd" d="M1399 448a98 98 0 1 0 196 0a98 98 0 1 0 -196 0ZM1440.5 448a56.5 56.5 0 1 0 113 0a56.5 56.5 0 1 0 -113 0Z"/></clipPath><clipPath id="i1b"><circle cx="1500.6" cy="447" r="53.5"/></clipPath><clipPath id="f2a"><path d="M641.5 675.6A77 77 0 1 1 590.3 679.7L603.1 708.4A45.5 45.5 0 1 0 633.4 706.1Z"/></clipPath><clipPath id="f2b"><circle cx="621.3" cy="748" r="42.5"/></clipPath><clipPath id="i2a"><path d="M927.1 682.8A75.2 75.2 0 1 1 846.4 697L869 721.2A42.1 42.1 0 1 0 914.1 713.2Z"/></clipPath><clipPath id="i2b"><circle cx="898" cy="756.5" r="39.1"/></clipPath><clipPath id="fta"><path clip-rule="evenodd" d="M1098.2 738.6a87 87 0 1 0 174 0a87 87 0 1 0 -174 0ZM1138.7 738.6a46.5 46.5 0 1 0 93 0a46.5 46.5 0 1 0 -93 0Z"/></clipPath><clipPath id="ftb"><circle cx="1184.2" cy="737.6" r="43.5"/></clipPath></defs><path d="M134.6 304H373.4C380 304 384 309 386 316C392 317 396 322 398 330C404 334 406 340 406 347C410 350 410 356 406 359C406 366 403 371 398 374C396 382 392 387 386 388C384 395 380 399 373.4 399H134.6C128 399 124 395 122 388C116 387 112 382 110 374C105 371 102 366 102 359C98 356 98 350 102 347C102 340 104 334 110 330C112 322 116 317 122 316C124 309 128 304 134.6 304Z" fill="#161716"/><g transform="translate(120 351) scale(1 1)" fill="none" stroke="#f6dd12" stroke-width="2.3" stroke-linecap="round"><path d="M-17 0C-10 -2 -4 -12 2 -22C6 -30 10 -34 16 -38"/><path d="M-17 0C-10 2 -4 12 2 22C6 30 10 34 16 38"/><path d="M-19 0H-8"/><path d="M16 -38C21 -40 21 -33 16 -32"/><path d="M-8 -6C-14 -10 -12 -17 -6 -15"/><path d="M2 -22C7 -18 11 -21 9 -26"/><path d="M5 -28C0 -30 0 -35 5 -34"/><path d="M-3 -12C2 -9 7 -12 5 -17"/><circle cx="14" cy="-29" r="2.6"/><circle cx="-11" cy="-21" r="1.8"/><circle cx="-4" cy="-6" r="2.2"/><path d="M8 -8C12 -6 12 -12 9 -13"/><path d="M16 38C21 40 21 33 16 32"/><path d="M-8 6C-14 10 -12 17 -6 15"/><path d="M2 22C7 18 11 21 9 26"/><path d="M5 28C0 30 0 35 5 34"/><path d="M-3 12C2 9 7 12 5 17"/><circle cx="14" cy="29" r="2.6"/><circle cx="-11" cy="21" r="1.8"/><circle cx="-4" cy="6" r="2.2"/><path d="M8 8C12 6 12 12 9 13"/></g><g transform="translate(388 351) scale(-1 1)" fill="none" stroke="#f6dd12" stroke-width="2.3" stroke-linecap="round"><path d="M-17 0C-10 -2 -4 -12 2 -22C6 -30 10 -34 16 -38"/><path d="M-17 0C-10 2 -4 12 2 22C6 30 10 34 16 38"/><path d="M-19 0H-8"/><path d="M16 -38C21 -40 21 -33 16 -32"/><path d="M-8 -6C-14 -10 -12 -17 -6 -15"/><path d="M2 -22C7 -18 11 -21 9 -26"/><path d="M5 -28C0 -30 0 -35 5 -34"/><path d="M-3 -12C2 -9 7 -12 5 -17"/><circle cx="14" cy="-29" r="2.6"/><circle cx="-11" cy="-21" r="1.8"/><circle cx="-4" cy="-6" r="2.2"/><path d="M8 -8C12 -6 12 -12 9 -13"/><path d="M16 38C21 40 21 33 16 32"/><path d="M-8 6C-14 10 -12 17 -6 15"/><path d="M2 22C7 18 11 21 9 26"/><path d="M5 28C0 30 0 35 5 34"/><path d="M-3 12C2 9 7 12 5 17"/><circle cx="14" cy="29" r="2.6"/><circle cx="-11" cy="21" r="1.8"/><circle cx="-4" cy="6" r="2.2"/><path d="M8 8C12 6 12 12 9 13"/></g><rect x="78.4" y="467.2" width="165.6" height="156.8" rx="3" fill="#161716"/><rect x="276.5" y="465.6" width="166.3" height="156.9" rx="3" fill="#161716"/><g transform="translate(84.9 473.7) scale(1.000 1.000)" fill="none" stroke="#f6dd12" stroke-width="1.5" stroke-linecap="round"><path d="M8.6 5A3.6 3.6 0 1 0 5 8.6Q3.92 5 6.26 4.1"/><path d="M16.6 5A3.6 3.6 0 1 0 13 8.6Q11.92 5 14.26 4.1"/><path d="M24.4 5A3.4 3.4 0 1 0 21 8.4Q19.98 5 22.19 4.15"/><path d="M31.6 4A2.6 2.6 0 1 0 29 6.6Q28.22 4 29.91 3.35"/><path d="M8.6 13A3.6 3.6 0 1 0 5 16.6Q3.92 13 6.26 12.1"/><path d="M16.6 13A3.6 3.6 0 1 0 13 16.6Q11.92 13 14.26 12.1"/><path d="M23.8 12A2.8 2.8 0 1 0 21 14.8Q20.16 12 21.98 11.3"/><path d="M8.4 21A3.4 3.4 0 1 0 5 24.4Q3.98 21 6.1899999999999995 20.15"/><path d="M14.8 21A2.8 2.8 0 1 0 12 23.8Q11.16 21 12.98 20.3"/><path d="M6.6 29A2.6 2.6 0 1 0 4 31.6Q3.2199999999999998 29 4.91 28.35"/><circle cx="1.5" cy="1.5" r="1.3" fill="#f6dd12" stroke="none"/><path d="M33 1.5H30M1.5 33V30" stroke-width="1.2"/></g><g transform="translate(237.5 473.7) scale(-1.000 1.000)" fill="none" stroke="#f6dd12" stroke-width="1.5" stroke-linecap="round"><path d="M8.6 5A3.6 3.6 0 1 0 5 8.6Q3.92 5 6.26 4.1"/><path d="M16.6 5A3.6 3.6 0 1 0 13 8.6Q11.92 5 14.26 4.1"/><path d="M24.4 5A3.4 3.4 0 1 0 21 8.4Q19.98 5 22.19 4.15"/><path d="M31.6 4A2.6 2.6 0 1 0 29 6.6Q28.22 4 29.91 3.35"/><path d="M8.6 13A3.6 3.6 0 1 0 5 16.6Q3.92 13 6.26 12.1"/><path d="M16.6 13A3.6 3.6 0 1 0 13 16.6Q11.92 13 14.26 12.1"/><path d="M23.8 12A2.8 2.8 0 1 0 21 14.8Q20.16 12 21.98 11.3"/><path d="M8.4 21A3.4 3.4 0 1 0 5 24.4Q3.98 21 6.1899999999999995 20.15"/><path d="M14.8 21A2.8 2.8 0 1 0 12 23.8Q11.16 21 12.98 20.3"/><path d="M6.6 29A2.6 2.6 0 1 0 4 31.6Q3.2199999999999998 29 4.91 28.35"/><circle cx="1.5" cy="1.5" r="1.3" fill="#f6dd12" stroke="none"/><path d="M33 1.5H30M1.5 33V30" stroke-width="1.2"/></g><g transform="translate(84.9 617.5) scale(1.000 -1.000)" fill="none" stroke="#f6dd12" stroke-width="1.5" stroke-linecap="round"><path d="M8.6 5A3.6 3.6 0 1 0 5 8.6Q3.92 5 6.26 4.1"/><path d="M16.6 5A3.6 3.6 0 1 0 13 8.6Q11.92 5 14.26 4.1"/><path d="M24.4 5A3.4 3.4 0 1 0 21 8.4Q19.98 5 22.19 4.15"/><path d="M31.6 4A2.6 2.6 0 1 0 29 6.6Q28.22 4 29.91 3.35"/><path d="M8.6 13A3.6 3.6 0 1 0 5 16.6Q3.92 13 6.26 12.1"/><path d="M16.6 13A3.6 3.6 0 1 0 13 16.6Q11.92 13 14.26 12.1"/><path d="M23.8 12A2.8 2.8 0 1 0 21 14.8Q20.16 12 21.98 11.3"/><path d="M8.4 21A3.4 3.4 0 1 0 5 24.4Q3.98 21 6.1899999999999995 20.15"/><path d="M14.8 21A2.8 2.8 0 1 0 12 23.8Q11.16 21 12.98 20.3"/><path d="M6.6 29A2.6 2.6 0 1 0 4 31.6Q3.2199999999999998 29 4.91 28.35"/><circle cx="1.5" cy="1.5" r="1.3" fill="#f6dd12" stroke="none"/><path d="M33 1.5H30M1.5 33V30" stroke-width="1.2"/></g><g transform="translate(237.5 617.5) scale(-1.000 -1.000)" fill="none" stroke="#f6dd12" stroke-width="1.5" stroke-linecap="round"><path d="M8.6 5A3.6 3.6 0 1 0 5 8.6Q3.92 5 6.26 4.1"/><path d="M16.6 5A3.6 3.6 0 1 0 13 8.6Q11.92 5 14.26 4.1"/><path d="M24.4 5A3.4 3.4 0 1 0 21 8.4Q19.98 5 22.19 4.15"/><path d="M31.6 4A2.6 2.6 0 1 0 29 6.6Q28.22 4 29.91 3.35"/><path d="M8.6 13A3.6 3.6 0 1 0 5 16.6Q3.92 13 6.26 12.1"/><path d="M16.6 13A3.6 3.6 0 1 0 13 16.6Q11.92 13 14.26 12.1"/><path d="M23.8 12A2.8 2.8 0 1 0 21 14.8Q20.16 12 21.98 11.3"/><path d="M8.4 21A3.4 3.4 0 1 0 5 24.4Q3.98 21 6.1899999999999995 20.15"/><path d="M14.8 21A2.8 2.8 0 1 0 12 23.8Q11.16 21 12.98 20.3"/><path d="M6.6 29A2.6 2.6 0 1 0 4 31.6Q3.2199999999999998 29 4.91 28.35"/><circle cx="1.5" cy="1.5" r="1.3" fill="#f6dd12" stroke="none"/><path d="M33 1.5H30M1.5 33V30" stroke-width="1.2"/></g><g transform="translate(161.2 488.2) scale(1.000 0.963)" fill="none" stroke="#f6dd12" stroke-width="2.4" stroke-linecap="round"><path d="M-47 11Q-40 8 -38 3Q-36 -6 -30 -7Q-22 -7 -22 2Q-22 10 -30 10"/><path d="M47 11Q40 8 38 3Q36 -6 30 -7Q22 -7 22 2Q22 10 30 10"/><path d="M-47 11Q-30 16 -20 11Q-14 8 -8 12M47 11Q30 16 20 11Q14 8 8 12"/><ellipse cx="-8.5" cy="0" rx="13.5" ry="11.5"/><ellipse cx="8.5" cy="0" rx="13.5" ry="11.5"/><path d="M0 -15V13M-12 -4Q-8 -8 -5 -3M12 -4Q8 -8 5 -3M-11 6Q-7 2 -4 7M11 6Q7 2 4 7" stroke-width="1.7"/><path d="M-31 -4L-26 1L-31 6L-36 1Z" fill="#f6dd12" stroke="none"/><path d="M31 -4L26 1L31 6L36 1Z" fill="#f6dd12" stroke="none"/></g><g transform="translate(161.2 603.0) scale(1.000 -0.963)" fill="none" stroke="#f6dd12" stroke-width="2.4" stroke-linecap="round"><path d="M-47 11Q-40 8 -38 3Q-36 -6 -30 -7Q-22 -7 -22 2Q-22 10 -30 10"/><path d="M47 11Q40 8 38 3Q36 -6 30 -7Q22 -7 22 2Q22 10 30 10"/><path d="M-47 11Q-30 16 -20 11Q-14 8 -8 12M47 11Q30 16 20 11Q14 8 8 12"/><ellipse cx="-8.5" cy="0" rx="13.5" ry="11.5"/><ellipse cx="8.5" cy="0" rx="13.5" ry="11.5"/><path d="M0 -15V13M-12 -4Q-8 -8 -5 -3M12 -4Q8 -8 5 -3M-11 6Q-7 2 -4 7M11 6Q7 2 4 7" stroke-width="1.7"/><path d="M-31 -4L-26 1L-31 6L-36 1Z" fill="#f6dd12" stroke="none"/><path d="M31 -4L26 1L31 6L36 1Z" fill="#f6dd12" stroke="none"/></g><g fill="none" stroke="#f6dd12" stroke-linecap="round" stroke-linejoin="round"><path stroke-width="1.4" d="M205 578l6 -2M150 572l4 -1M176 548l2 2"/><path stroke-width="1.5" d="M128 531L150 521M178 529L201 519M214 533L236 523M196 538l4 -4M162 548l3 -3M118 540l3 -3M100 545l2 -3"/><path stroke-width="1.8" d="M190 562V555M182 563V556M175 563V554M166 562V556M186 553Q190 547 192 553Q190 558 186 553M170 552Q174 546 176 552Q174 557 170 552M121 543V562M113 546V562M105 546V561M99 556Q91 550 88 560Q92 566 99 562"/><path stroke-width="2" d="M222 545Q230 538 232 546Q230 556 222 552M205 537L203 566M151 528L148 566M140 530L138 566M126 562Q110 571 92 561"/><path stroke-width="2.1" d="M234 540Q236 560 222 566Q212 570 200 573M153 566Q140 573 127 564"/><path stroke-width="2.2" d="M197 562Q176 569 158 561"/></g><g transform="translate(283.0 472.1) scale(1.000 1.000)" fill="none" stroke="#f6dd12" stroke-width="1.5" stroke-linecap="round"><path d="M8.6 5A3.6 3.6 0 1 0 5 8.6Q3.92 5 6.26 4.1"/><path d="M16.6 5A3.6 3.6 0 1 0 13 8.6Q11.92 5 14.26 4.1"/><path d="M24.4 5A3.4 3.4 0 1 0 21 8.4Q19.98 5 22.19 4.15"/><path d="M31.6 4A2.6 2.6 0 1 0 29 6.6Q28.22 4 29.91 3.35"/><path d="M8.6 13A3.6 3.6 0 1 0 5 16.6Q3.92 13 6.26 12.1"/><path d="M16.6 13A3.6 3.6 0 1 0 13 16.6Q11.92 13 14.26 12.1"/><path d="M23.8 12A2.8 2.8 0 1 0 21 14.8Q20.16 12 21.98 11.3"/><path d="M8.4 21A3.4 3.4 0 1 0 5 24.4Q3.98 21 6.1899999999999995 20.15"/><path d="M14.8 21A2.8 2.8 0 1 0 12 23.8Q11.16 21 12.98 20.3"/><path d="M6.6 29A2.6 2.6 0 1 0 4 31.6Q3.2199999999999998 29 4.91 28.35"/><circle cx="1.5" cy="1.5" r="1.3" fill="#f6dd12" stroke="none"/><path d="M33 1.5H30M1.5 33V30" stroke-width="1.2"/></g><g transform="translate(436.3 472.1) scale(-1.000 1.000)" fill="none" stroke="#f6dd12" stroke-width="1.5" stroke-linecap="round"><path d="M8.6 5A3.6 3.6 0 1 0 5 8.6Q3.92 5 6.26 4.1"/><path d="M16.6 5A3.6 3.6 0 1 0 13 8.6Q11.92 5 14.26 4.1"/><path d="M24.4 5A3.4 3.4 0 1 0 21 8.4Q19.98 5 22.19 4.15"/><path d="M31.6 4A2.6 2.6 0 1 0 29 6.6Q28.22 4 29.91 3.35"/><path d="M8.6 13A3.6 3.6 0 1 0 5 16.6Q3.92 13 6.26 12.1"/><path d="M16.6 13A3.6 3.6 0 1 0 13 16.6Q11.92 13 14.26 12.1"/><path d="M23.8 12A2.8 2.8 0 1 0 21 14.8Q20.16 12 21.98 11.3"/><path d="M8.4 21A3.4 3.4 0 1 0 5 24.4Q3.98 21 6.1899999999999995 20.15"/><path d="M14.8 21A2.8 2.8 0 1 0 12 23.8Q11.16 21 12.98 20.3"/><path d="M6.6 29A2.6 2.6 0 1 0 4 31.6Q3.2199999999999998 29 4.91 28.35"/><circle cx="1.5" cy="1.5" r="1.3" fill="#f6dd12" stroke="none"/><path d="M33 1.5H30M1.5 33V30" stroke-width="1.2"/></g><g transform="translate(283.0 616.0) scale(1.000 -1.000)" fill="none" stroke="#f6dd12" stroke-width="1.5" stroke-linecap="round"><path d="M8.6 5A3.6 3.6 0 1 0 5 8.6Q3.92 5 6.26 4.1"/><path d="M16.6 5A3.6 3.6 0 1 0 13 8.6Q11.92 5 14.26 4.1"/><path d="M24.4 5A3.4 3.4 0 1 0 21 8.4Q19.98 5 22.19 4.15"/><path d="M31.6 4A2.6 2.6 0 1 0 29 6.6Q28.22 4 29.91 3.35"/><path d="M8.6 13A3.6 3.6 0 1 0 5 16.6Q3.92 13 6.26 12.1"/><path d="M16.6 13A3.6 3.6 0 1 0 13 16.6Q11.92 13 14.26 12.1"/><path d="M23.8 12A2.8 2.8 0 1 0 21 14.8Q20.16 12 21.98 11.3"/><path d="M8.4 21A3.4 3.4 0 1 0 5 24.4Q3.98 21 6.1899999999999995 20.15"/><path d="M14.8 21A2.8 2.8 0 1 0 12 23.8Q11.16 21 12.98 20.3"/><path d="M6.6 29A2.6 2.6 0 1 0 4 31.6Q3.2199999999999998 29 4.91 28.35"/><circle cx="1.5" cy="1.5" r="1.3" fill="#f6dd12" stroke="none"/><path d="M33 1.5H30M1.5 33V30" stroke-width="1.2"/></g><g transform="translate(436.3 616.0) scale(-1.000 -1.000)" fill="none" stroke="#f6dd12" stroke-width="1.5" stroke-linecap="round"><path d="M8.6 5A3.6 3.6 0 1 0 5 8.6Q3.92 5 6.26 4.1"/><path d="M16.6 5A3.6 3.6 0 1 0 13 8.6Q11.92 5 14.26 4.1"/><path d="M24.4 5A3.4 3.4 0 1 0 21 8.4Q19.98 5 22.19 4.15"/><path d="M31.6 4A2.6 2.6 0 1 0 29 6.6Q28.22 4 29.91 3.35"/><path d="M8.6 13A3.6 3.6 0 1 0 5 16.6Q3.92 13 6.26 12.1"/><path d="M16.6 13A3.6 3.6 0 1 0 13 16.6Q11.92 13 14.26 12.1"/><path d="M23.8 12A2.8 2.8 0 1 0 21 14.8Q20.16 12 21.98 11.3"/><path d="M8.4 21A3.4 3.4 0 1 0 5 24.4Q3.98 21 6.1899999999999995 20.15"/><path d="M14.8 21A2.8 2.8 0 1 0 12 23.8Q11.16 21 12.98 20.3"/><path d="M6.6 29A2.6 2.6 0 1 0 4 31.6Q3.2199999999999998 29 4.91 28.35"/><circle cx="1.5" cy="1.5" r="1.3" fill="#f6dd12" stroke="none"/><path d="M33 1.5H30M1.5 33V30" stroke-width="1.2"/></g><g transform="translate(359.65 486.6) scale(1.000 0.963)" fill="none" stroke="#f6dd12" stroke-width="2.4" stroke-linecap="round"><path d="M-47 11Q-40 8 -38 3Q-36 -6 -30 -7Q-22 -7 -22 2Q-22 10 -30 10"/><path d="M47 11Q40 8 38 3Q36 -6 30 -7Q22 -7 22 2Q22 10 30 10"/><path d="M-47 11Q-30 16 -20 11Q-14 8 -8 12M47 11Q30 16 20 11Q14 8 8 12"/><ellipse cx="-8.5" cy="0" rx="13.5" ry="11.5"/><ellipse cx="8.5" cy="0" rx="13.5" ry="11.5"/><path d="M0 -15V13M-12 -4Q-8 -8 -5 -3M12 -4Q8 -8 5 -3M-11 6Q-7 2 -4 7M11 6Q7 2 4 7" stroke-width="1.7"/><path d="M-31 -4L-26 1L-31 6L-36 1Z" fill="#f6dd12" stroke="none"/><path d="M31 -4L26 1L31 6L36 1Z" fill="#f6dd12" stroke="none"/></g><g transform="translate(359.65 601.5) scale(1.000 -0.963)" fill="none" stroke="#f6dd12" stroke-width="2.4" stroke-linecap="round"><path d="M-47 11Q-40 8 -38 3Q-36 -6 -30 -7Q-22 -7 -22 2Q-22 10 -30 10"/><path d="M47 11Q40 8 38 3Q36 -6 30 -7Q22 -7 22 2Q22 10 30 10"/><path d="M-47 11Q-30 16 -20 11Q-14 8 -8 12M47 11Q30 16 20 11Q14 8 8 12"/><ellipse cx="-8.5" cy="0" rx="13.5" ry="11.5"/><ellipse cx="8.5" cy="0" rx="13.5" ry="11.5"/><path d="M0 -15V13M-12 -4Q-8 -8 -5 -3M12 -4Q8 -8 5 -3M-11 6Q-7 2 -4 7M11 6Q7 2 4 7" stroke-width="1.7"/><path d="M-31 -4L-26 1L-31 6L-36 1Z" fill="#f6dd12" stroke="none"/><path d="M31 -4L26 1L31 6L36 1Z" fill="#f6dd12" stroke="none"/></g><g fill="none" stroke="#f6dd12" stroke-linecap="round" stroke-linejoin="round"><path stroke-width="1.5" d="M312 528l4 -4M336 578l5 2M352 584l4 1M388 578l3 2M320 550l3 -2M384 548l2 -3"/><path stroke-width="1.6" d="M380 513V530M386 512V530M392 515V532"/><path stroke-width="1.8" d="M330 520Q336 514 342 522M392 540Q398 534 404 542"/><path stroke-width="2" d="M345 517L343 570M359 508L357 566M366 511L364 566M373 514L371 566M320 540Q330 530 340 540Q332 550 320 540M372 566Q382 540 400 548Q408 556 398 566M350 556Q356 586 386 580"/><path stroke-width="2.1" d="M404 520L402 571M410 524L408 570"/><path stroke-width="2.2" d="M305 533Q300 565 328 566Q342 566 350 556"/><path stroke-width="2.3" d="M319 561Q340 580 372 570Q396 562 414 560"/></g><rect x="528" y="367" width="153" height="214" fill="#f6dd12" stroke="#3e3b22" stroke-width="1"/><rect x="536" y="374.8" width="137.3" height="199.2" fill="#161716"/><g transform="translate(540 379) scale(1.000 1.000)" fill="none" stroke="#f6dd12" stroke-width="1.5" stroke-linecap="round"><path d="M8.6 5A3.6 3.6 0 1 0 5 8.6Q3.92 5 6.26 4.1"/><path d="M16.6 5A3.6 3.6 0 1 0 13 8.6Q11.92 5 14.26 4.1"/><path d="M24.4 5A3.4 3.4 0 1 0 21 8.4Q19.98 5 22.19 4.15"/><path d="M31.6 4A2.6 2.6 0 1 0 29 6.6Q28.22 4 29.91 3.35"/><path d="M8.6 13A3.6 3.6 0 1 0 5 16.6Q3.92 13 6.26 12.1"/><path d="M16.6 13A3.6 3.6 0 1 0 13 16.6Q11.92 13 14.26 12.1"/><path d="M23.8 12A2.8 2.8 0 1 0 21 14.8Q20.16 12 21.98 11.3"/><path d="M8.4 21A3.4 3.4 0 1 0 5 24.4Q3.98 21 6.1899999999999995 20.15"/><path d="M14.8 21A2.8 2.8 0 1 0 12 23.8Q11.16 21 12.98 20.3"/><path d="M6.6 29A2.6 2.6 0 1 0 4 31.6Q3.2199999999999998 29 4.91 28.35"/><circle cx="1.5" cy="1.5" r="1.3" fill="#f6dd12" stroke="none"/><path d="M33 1.5H30M1.5 33V30" stroke-width="1.2"/></g><g transform="translate(669 379) scale(-1.000 1.000)" fill="none" stroke="#f6dd12" stroke-width="1.5" stroke-linecap="round"><path d="M8.6 5A3.6 3.6 0 1 0 5 8.6Q3.92 5 6.26 4.1"/><path d="M16.6 5A3.6 3.6 0 1 0 13 8.6Q11.92 5 14.26 4.1"/><path d="M24.4 5A3.4 3.4 0 1 0 21 8.4Q19.98 5 22.19 4.15"/><path d="M31.6 4A2.6 2.6 0 1 0 29 6.6Q28.22 4 29.91 3.35"/><path d="M8.6 13A3.6 3.6 0 1 0 5 16.6Q3.92 13 6.26 12.1"/><path d="M16.6 13A3.6 3.6 0 1 0 13 16.6Q11.92 13 14.26 12.1"/><path d="M23.8 12A2.8 2.8 0 1 0 21 14.8Q20.16 12 21.98 11.3"/><path d="M8.4 21A3.4 3.4 0 1 0 5 24.4Q3.98 21 6.1899999999999995 20.15"/><path d="M14.8 21A2.8 2.8 0 1 0 12 23.8Q11.16 21 12.98 20.3"/><path d="M6.6 29A2.6 2.6 0 1 0 4 31.6Q3.2199999999999998 29 4.91 28.35"/><circle cx="1.5" cy="1.5" r="1.3" fill="#f6dd12" stroke="none"/><path d="M33 1.5H30M1.5 33V30" stroke-width="1.2"/></g><g transform="translate(540 570) scale(1.000 -1.000)" fill="none" stroke="#f6dd12" stroke-width="1.5" stroke-linecap="round"><path d="M8.6 5A3.6 3.6 0 1 0 5 8.6Q3.92 5 6.26 4.1"/><path d="M16.6 5A3.6 3.6 0 1 0 13 8.6Q11.92 5 14.26 4.1"/><path d="M24.4 5A3.4 3.4 0 1 0 21 8.4Q19.98 5 22.19 4.15"/><path d="M31.6 4A2.6 2.6 0 1 0 29 6.6Q28.22 4 29.91 3.35"/><path d="M8.6 13A3.6 3.6 0 1 0 5 16.6Q3.92 13 6.26 12.1"/><path d="M16.6 13A3.6 3.6 0 1 0 13 16.6Q11.92 13 14.26 12.1"/><path d="M23.8 12A2.8 2.8 0 1 0 21 14.8Q20.16 12 21.98 11.3"/><path d="M8.4 21A3.4 3.4 0 1 0 5 24.4Q3.98 21 6.1899999999999995 20.15"/><path d="M14.8 21A2.8 2.8 0 1 0 12 23.8Q11.16 21 12.98 20.3"/><path d="M6.6 29A2.6 2.6 0 1 0 4 31.6Q3.2199999999999998 29 4.91 28.35"/><circle cx="1.5" cy="1.5" r="1.3" fill="#f6dd12" stroke="none"/><path d="M33 1.5H30M1.5 33V30" stroke-width="1.2"/></g><g transform="translate(669 570) scale(-1.000 -1.000)" fill="none" stroke="#f6dd12" stroke-width="1.5" stroke-linecap="round"><path d="M8.6 5A3.6 3.6 0 1 0 5 8.6Q3.92 5 6.26 4.1"/><path d="M16.6 5A3.6 3.6 0 1 0 13 8.6Q11.92 5 14.26 4.1"/><path d="M24.4 5A3.4 3.4 0 1 0 21 8.4Q19.98 5 22.19 4.15"/><path d="M31.6 4A2.6 2.6 0 1 0 29 6.6Q28.22 4 29.91 3.35"/><path d="M8.6 13A3.6 3.6 0 1 0 5 16.6Q3.92 13 6.26 12.1"/><path d="M16.6 13A3.6 3.6 0 1 0 13 16.6Q11.92 13 14.26 12.1"/><path d="M23.8 12A2.8 2.8 0 1 0 21 14.8Q20.16 12 21.98 11.3"/><path d="M8.4 21A3.4 3.4 0 1 0 5 24.4Q3.98 21 6.1899999999999995 20.15"/><path d="M14.8 21A2.8 2.8 0 1 0 12 23.8Q11.16 21 12.98 20.3"/><path d="M6.6 29A2.6 2.6 0 1 0 4 31.6Q3.2199999999999998 29 4.91 28.35"/><circle cx="1.5" cy="1.5" r="1.3" fill="#f6dd12" stroke="none"/><path d="M33 1.5H30M1.5 33V30" stroke-width="1.2"/></g><g fill="none" stroke="#f6dd12" stroke-width="3.4" stroke-linecap="round" stroke-linejoin="round"><path d="M630 392Q634 406 624 410Q606 414 592 411Q582 410 579 403"/><path d="M627 388V404M613 394Q611 404 615 408M600 396V408"/><path d="M607 397Q616 396 614 405Q606 407 605 400Z" stroke-width="2.6"/><path d="M588 398Q596 400 592 408Q584 410 583 402Q584 396 588 398Z" stroke-width="2.6"/><path d="M617 384l2 3M623 383l2 3M603 387l2 3M590 389l2 2M583 390l2 2M596 414l2 1" stroke-width="2.2"/></g><rect x="1018.4" y="207.1" width="80.8" height="102.9" fill="none" stroke="#161716" stroke-width="4.8"/><rect x="1121" y="207.1" width="80.8" height="102.9" fill="none" stroke="#161716" stroke-width="4.8"/><rect x="1223.6" y="207.1" width="80.8" height="102.9" fill="none" stroke="#161716" stroke-width="4.8"/><g fill="none" stroke="#161716" stroke-linecap="round" stroke-linejoin="round" clip-path="url(#pl0)"><path stroke-width="2.6" d="M1075 228Q1088 238 1094 250M1075 231Q1088.5 242 1092 255.5M1075 234Q1089 246 1090 261M1075 237Q1089.5 250 1088 266.5M1075 240Q1090 254 1086 272M1075 243Q1090.5 258 1084 277.5M1075 246Q1091 262 1082 283"/><path stroke-width="3" d="M1072 240Q1050 255 1040 306M1070 242Q1074 256 1080 272M1067.4 246Q1071.4 260 1076.6 275M1064.8 250Q1068.8 264 1073.2 278M1062.2 254Q1066.2 268 1069.8 281M1059.6 258Q1063.6 272 1066.4 284M1057 262Q1061 276 1063 287M1054.4 266Q1058.4 280 1059.6 290M1051.8 270Q1055.8 284 1056.2 293M1049.2 274Q1053.2 288 1052.8 296M1046.6 278Q1050.6 292 1049.4 299M1044 282Q1048 296 1046 302"/><path stroke-width="3.2" d="M1021 211Q1055 208 1095 213M1021 216.2Q1055 212.6 1093.5 218.4M1021 221.4Q1055 217.2 1092 223.8M1021 226.6Q1055 221.8 1090.5 229.2M1021 231.8Q1055 226.4 1089 234.6M1021 237Q1055 231 1087.5 240M1021 242.2Q1055 235.6 1086 245.4M1021 247.4Q1055 240.2 1084.5 250.8M1021 252.6Q1055 244.8 1083 256.2M1070 242Q1058 250 1021 254M1067.4 246Q1055.4 254 1021 259.4M1064.8 250Q1052.8 258 1021 264.8M1062.2 254Q1050.2 262 1021 270.2M1059.6 258Q1047.6 266 1021 275.6M1057 262Q1045 270 1021 281M1054.4 266Q1042.4 274 1021 286.4M1051.8 270Q1039.8 278 1021 291.8M1049.2 274Q1037.2 282 1021 297.2M1046.6 278Q1034.6 286 1021 302.6M1044 282Q1032 290 1021 308"/></g><g fill="none" stroke="#161716" stroke-width="3.3" clip-path="url(#pl1)"><ellipse cx="28" cy="0" rx="25" ry="4.9" transform="translate(1162.7 261.1) rotate(-85)"/><ellipse cx="26" cy="0" rx="23" ry="4.9" transform="translate(1162.7 261.1) rotate(-125)"/><ellipse cx="27.5" cy="0" rx="24.5" ry="4.9" transform="translate(1162.7 261.1) rotate(-53)"/><ellipse cx="23.5" cy="0" rx="20.5" ry="4.9" transform="translate(1162.7 261.1) rotate(-165)"/><ellipse cx="23" cy="0" rx="20" ry="4.9" transform="translate(1162.7 261.1) rotate(-20)"/><ellipse cx="23" cy="0" rx="20" ry="4.9" transform="translate(1162.7 261.1) rotate(159)"/><ellipse cx="21.5" cy="0" rx="18.5" ry="4.9" transform="translate(1162.7 261.1) rotate(20.5)"/><ellipse cx="23.3" cy="0" rx="20.3" ry="4.9" transform="translate(1162.7 261.1) rotate(121)"/><ellipse cx="21.4" cy="0" rx="18.4" ry="4.9" transform="translate(1162.7 261.1) rotate(57.5)"/></g><circle cx="1162.7" cy="261.1" r="10" fill="#161716"/><path d="M1162.7 261.1V309" stroke="#161716" stroke-width="3.6"/><g clip-path="url(#pl2)"><path d="M1235 208H1304V311H1262C1250 306 1240 300 1233 292C1228 280 1226 270 1226 255C1226 240 1228 225 1235 210Z" fill="#161716"/><g fill="none" stroke="#ebebeb" stroke-linecap="round"><path d="M1230 240Q1248 231 1267 231" stroke-width="3.6"/><path d="M1227 261Q1246 250 1268 247" stroke-width="3.6"/><path d="M1229 282Q1244 268 1262 263" stroke-width="3.4"/><path d="M1238 301Q1246 288 1256 281" stroke-width="3"/><path d="M1236 213Q1252 212 1268 219" stroke-width="2.6"/><path d="M1294 209L1274 253" stroke-width="1.4"/><path d="M1292 252Q1300 270 1302 290" stroke-width="2"/><path d="M1280 268Q1286 285 1288 302" stroke-width="2.2"/><path d="M1272 278Q1274 292 1272 307" stroke-width="2"/></g><g fill="#ebebeb"><ellipse cx="1272" cy="232" rx="4" ry="2.3"/><ellipse cx="1272" cy="242" rx="3.4" ry="2"/><ellipse cx="1283" cy="255" rx="3.5" ry="2"/><ellipse cx="1236" cy="248" rx="1.8" ry="2.5"/><ellipse cx="1260" cy="298" rx="2.5" ry="2.5"/><path d="M1292 208H1300V218Z"/><path d="M1226 209H1236V215L1228 222Z"/><path d="M1225 290Q1236 300 1245 309H1225Z"/></g></g><path d="M887.8 379.1A98.8 98.8 0 1 1 766.2 379.1" fill="none" stroke="#161716" stroke-width="4.6"/><circle cx="827" cy="457" r="71" fill="none" stroke="#161716" stroke-width="4.6"/><g fill="none" stroke="#161716" stroke-linecap="round" stroke-linejoin="round" clip-path="url(#k1a)"><path stroke-width="0.8" d="M901.3 457.3Q898.5 461.4 897.8 466.2M899.6 459.6Q903.3 460.8 906.8 462.5M903 462.7Q893.1 463.7 899.9 469.8M898.5 463.6Q902.4 464.9 906.1 466.9M897.8 469.4Q892.5 476.6 892.8 485.3M896.9 469.2Q902.2 474.9 902.2 471.2Q900.1 467.4 896.9 469.2M896.1 472.2Q901.1 473.8 906.3 474.6M897.9 481.1Q888 482 894.8 488.2M892.6 484.5Q897.8 485.6 902.5 488.3M891.9 486.4Q888.9 490.1 890.1 495M890.4 492.7Q893.5 494.9 897.1 495.5M913.6 457Q911 466.2 911.8 475.8M917 457.5Q908.2 459.6 915.1 464.4M912.8 460.4Q914.5 462 916.5 461.4M912.4 463.3Q916.9 465 921.7 464M911.8 468Q915.5 469.8 919.4 469.7M915.1 471.8Q906.3 473.9 913.2 478.6M910.8 475.6Q916.3 480.1 915.8 476.7Q913.4 473.6 910.8 475.6M910.2 477Q907.9 478.3 911.3 480.3M914.3 477.6Q905.5 479.7 912.4 484.4M910.9 480.4Q906.7 486.9 904.6 494.2M908.8 483.1Q910 485.2 912.1 485.1M905.3 491.4Q906.4 493.5 908.5 493.3M904.2 494.8Q900 497.1 901.4 501.8M902.5 497.8Q906.5 499.3 910 501.7M888.5 494.6Q894.9 495.6 897.7 501.8M895.6 499.2Q895.7 501.8 893.7 502.9M900 502.5Q906.6 503.6 909.7 509.7M897.8 505.7Q906 500.2 904.7 509.3M907.5 512.5Q915.7 506.9 914.4 516M877.2 508.9Q882.6 516.8 891.2 521.2M877.3 508.7Q880.1 506 882.1 502.5M890 515.3Q886.9 523.5 894.4 520.6M891.7 516.8Q888.5 525 896.1 522.1M892.3 521.7Q893.2 525.3 897.3 525.4M892 522.1Q894.7 518 898.8 515.4M876.4 509.5Q886 515.2 889.9 525.7M874.1 511.5Q883.1 508.4 879.6 516.5M889.8 523.8Q887.4 531 886 527.7Q886.3 523.5 889.8 523.8M891.9 526.8Q894.8 526.1 893.9 528.8M870.7 515.7Q862.6 518.1 856.5 524.2M870.8 515.8Q870.3 523.8 873.1 521.2Q874.4 516.9 870.8 515.8M869.7 521.1Q862 514.5 862.2 523.9M865.4 518.7Q866.8 522.1 868.2 525.6M853.8 525.9Q851.2 523.6 851.4 526.4M851.3 526.2Q845.4 526.4 840 528.8M851.3 526.2Q852.2 530.5 852.4 535.1M838.2 528.2Q833.7 528.2 829.6 530.7M834.6 529.3Q833.6 531.4 834.8 533M878.8 526.6Q872.9 527.5 869.3 532.8M878.6 526.2Q878.2 528.7 880 530M876.3 527.4Q875.8 535 878.4 532.5Q879.7 528.5 876.3 527.4M872.6 529.3Q872.2 537 874.8 534.4Q876 530.4 872.6 529.3M866 533.4Q859.5 533.6 856.2 539.5M859.4 536.4Q858.9 544 861.5 541.5Q862.7 537.5 859.4 536.4M857.1 537.6Q856.8 540.1 858.6 541.4M855.7 539.3Q846 538 837.5 543.2M847.3 540Q844.5 547.1 847.8 545.5Q850.2 542 847.3 540M840.2 541.3Q839.1 543.6 840.5 545.4M836.5 542.9Q832.6 539.8 830.3 544.7M829.1 529.1Q830.6 534.1 827.9 538.9M825.6 529Q832.8 532.1 826.2 535.1M828.7 534.4Q827 535.5 825.4 534.7M827.6 541.2Q828.7 546.3 827.1 551.2M828.2 546.7Q824.1 546.6 820 546.8M827.6 551.7Q828.7 553.5 827.3 555.1M809.4 527Q806.8 535.2 807.1 543.9M806.7 545.2Q803.2 548.4 806.3 552.8M805.5 550.5Q810.2 550.8 814.7 551.8M808.9 526.9Q806.5 535.8 801.8 544M807.4 530.2Q804.2 529.4 800.8 529M801.9 535.5Q808.5 541.1 800.6 542.2M800.7 539.2Q807.3 544.7 799.4 545.9M803.3 542.6Q799.5 540.8 795.1 540.5M801.6 546.4Q802.4 549.4 800.2 551.4M797.6 548.5Q804.3 554 796.3 555.1M791 519.5Q785.3 524.5 785.9 532.6M791.5 527.5Q781.4 526.6 787 534M790.1 530.3Q780.1 529.3 785.7 536.8M785 531.2Q789 532.4 791.9 535.7M784 534.9Q779.8 537.9 779.9 543M783.3 534.5Q787.5 536 790.6 539.5M782 537.1Q783.2 539.4 785.5 539.4M781 539.2Q782.1 541.6 784.4 541.6M789.5 520.3Q783 511.8 773.7 506.1M782.1 512.4Q777.5 515.1 774.4 519.3M779.2 509.5Q775.2 512.6 771.4 515.7M777.8 508.1Q775.3 508.4 774.6 510.5M773.2 504.1Q771.1 498.5 765.2 496.6M771.4 501.6Q768.9 501.9 768.2 504.1M769.8 500Q766.3 502.9 763.7 506.5M765 495.3Q766.4 492.4 762.6 494.7M782.6 531.9Q775.3 523.3 765.5 518.1M778.5 533.2Q781.5 523.2 772.8 527.4M769.1 520.4Q761.5 523.3 765.1 524.8Q769.6 524.2 769.1 520.4M765.1 518.2Q764.6 511.9 758.9 509.6M765.7 517.8Q761.8 519.1 758.9 521.6M757.6 513.5Q762.4 505.5 753.9 507.1M757.7 507.1Q755.6 503.2 752.2 500.3M754.5 509.5Q759.4 501.5 750.9 503.2M763.9 493.7Q764.1 489.1 761 485.3M760 494.6Q767.3 489.6 759.3 487.7M759.3 491.7Q766.6 486.6 758.6 484.7M761.5 483.3Q761.1 474.7 757.2 466.9M760.5 480.7Q753.9 478.5 755.5 481.4Q758.8 483.5 760.5 480.7M759.5 476.2Q752.8 473.9 754.5 476.9Q757.8 478.9 759.5 476.2M756.8 464.9Q758.4 459.7 754.7 455.9M753.7 453Q755.7 452.1 753.9 452M750.5 453.8Q757.8 448.8 749.8 446.9M751.9 500.4Q752.7 494.6 747.6 491.1M747.2 496.5Q753.2 491 745.7 490.3M749.6 493.3Q746.6 494 744.1 496M746.8 488.4Q747.6 483.5 744.4 480.2M747.5 488.1Q741.2 487 743.1 489.4Q746.3 490.8 747.5 488.1M746.6 485.9Q740.3 484.8 742.2 487.2Q745.5 488.6 746.6 485.9M742.9 485.5Q748.8 479.9 741.3 479.3M745.4 482.6Q743.3 482.1 742.1 483.5M741.3 481.5Q747.2 476 739.7 475.3M742.9 478Q744.3 476.7 742.1 476.9M742.8 476.6Q743.3 471.8 741.2 467.2M739.3 476.8Q747.2 473 739.7 470M741.6 464.9Q743.4 457.8 740.2 451.2M738.2 462.7Q746.1 458.9 738.6 455.9M741.6 459.6Q735.4 456.5 736.6 459.6Q739.5 462.1 741.6 459.6M737.6 454.9Q745.4 451.1 737.9 448M740.9 451.6Q734.8 448.4 735.9 451.5Q738.9 454 740.9 451.6M753.4 451.9Q757.4 447.7 755.6 442M751.6 443.9Q762.1 442.8 754.8 436.3M756.2 440Q762.5 432.9 761.6 423.8M757.1 440.2Q751.4 434.1 751.5 438.1Q753.8 442.1 757.1 440.2M755.5 429.6Q766 428.6 758.7 422M741.3 451.2Q743.3 447.6 742.4 443.2M740.9 451.1Q736.6 446.6 736.7 449.6Q738.4 452.6 740.9 451.1M738.3 448.4Q746.1 447.6 740.7 442.7M739.5 443.9Q747.4 443 741.9 438.2M742.9 441Q745.9 436.7 745.5 431.4M744.2 439Q741 438 737.6 437.5M745.1 435.9Q741.8 435.7 738.9 433.8M746.3 430.8Q749.7 424.8 749.1 417.7M748.2 424.5Q745.1 423.9 742.1 422.6M749 421.9Q745.9 420.4 742.8 419.4M746.3 419.3Q754.1 418.5 748.7 413.6M767 417.1Q761.1 410.2 752.1 408.3M765.3 419.8Q767 409.9 759.1 414.9M758.6 415.8Q760.3 405.8 752.4 410.9M755.5 413.9Q757.1 404 749.3 409M752 407.5Q749.5 403.6 744.7 403.7M752.2 407.1Q750 410.5 748.6 414.4M745.3 403Q738.2 406.7 741.9 407.6Q746.2 406.6 745.3 403M773.5 408.6Q769 401.1 760.4 398.7M768.4 409.7Q771.5 399.9 762.8 403.9M767.9 403.9Q765.7 406.9 763 409.7M760.3 403.3Q763.4 393.4 754.7 397.4M758.4 396.1Q757.4 392.3 753.1 392.4M758.3 396.2Q756.7 399.8 753.7 402.2M753.3 397.6Q756.4 387.8 747.7 391.8M774 408.1Q767.8 401.7 762.1 394.9M775.1 403.7Q767.5 406.8 770.1 399.7M770.3 403.6Q771.8 400.7 775 399.7M768.7 401.9Q770.4 395.7 771.8 398.4Q771.7 402 768.7 401.9M766.8 399.9Q769.5 397.2 772.7 395.1M764.9 397.8Q766.5 391.6 767.9 394.3Q767.8 397.9 764.9 397.8M763.3 396.2Q765 389.9 766.4 392.7Q766.3 396.3 763.3 396.2M761.6 394.5Q757.5 393.1 756.5 388.8M757.9 390.5Q759.6 384.2 761 387Q760.9 390.6 757.9 390.5M759.1 386.8Q751.5 389.9 754.1 382.7M781.3 401.2Q777.8 399.6 778.3 395.1M782.5 396.8Q774.9 398.7 778.3 392.3M777.1 394.5Q772.1 388.9 769.2 381.8M769.7 384.4Q770.3 382.5 772.1 382.2M768.3 381.5Q765.4 382.1 767.3 379.2M767.8 381.8Q770.2 376.1 771.2 378.9Q770.7 382.3 767.8 381.8M868.7 396.1Q873.4 404.6 881.8 409.7M871.1 394Q867.1 402 875.1 399.8M871 399.4Q878 398.1 875.1 396.3Q871.1 396.1 871 399.4M875.8 399.1Q871.7 407.2 879.8 404.9M882.3 411Q884.6 418.5 891.4 421.9M886.8 411.4Q882.8 419.4 890.8 417.2M889.4 419.7Q891.7 419.5 892.5 417.6M875.8 385.6Q879.6 394.4 888.6 398.6M877.3 387.6Q879.9 387.3 880.7 385.2M888.8 400.8Q892 408 899.6 411.3M892.1 397.8Q887.7 406.6 896.4 404.1M892.4 404.3Q896.1 402.7 898.1 399.3M893.9 405.9Q901.6 404.5 898.4 402.5Q894.1 402.3 893.9 405.9M899.5 406Q895.1 414.8 903.9 412.4M901.2 407.9Q896.8 416.7 905.6 414.3M901.5 413.2Q900 416.4 902.9 415.6M891 423.9Q895.3 419.3 901.4 418.9M892.4 427Q891.9 417.3 898.9 423M896.5 420.7Q902.9 425 899.2 425.6Q895.3 424.1 896.5 420.7M903.6 418.6Q908.6 414.5 915.1 413.9M907.6 420.1Q907.1 410.5 914.1 416.1M914.3 412.7Q920.6 417 917 417.6Q913 416 914.3 412.7M895 432.9Q905.6 428.2 917.6 428.6M895.1 433.3Q901.1 438.9 897.2 438.8Q893.3 436.6 895.1 433.3M908.5 429.6Q914.5 435.1 910.6 435.1Q906.6 432.9 908.5 429.6M913.5 432.6Q914.5 422.4 920.9 429.5M918 428Q918.6 425.2 920.3 426.8M899 452.9Q905.8 453.2 912.2 450.9M901.2 452.5Q902.1 448.1 900.9 443.9M914 450.4Q918.3 451.2 922.4 449.2M914 451Q913.2 447.6 913.7 444M919.1 446.4Q923.6 454.8 926.6 446.5M924.2 449.1Q924.8 451.5 924.7 448.2M924.3 449.7Q923.6 445.4 922.5 441.1M899.1 453.9Q906.9 453.5 914.6 455.9M902 454.5Q903.6 456.7 902.4 458.9M913.6 454.8Q915.1 457 914 459.2M915.5 454.5Q920.3 452.7 925.1 455.4M897.2 473.4Q903.2 476.7 910 474.7M907.1 471.9Q908.7 479.7 913 473.8M909.6 475.7Q913.8 471 910.8 471.3Q907.9 473.3 909.6 475.7M912.8 475.5Q917.5 478.5 923 476.8M916 476.8Q916.9 473 918.1 469.3M918.4 477.2Q919.9 475.8 919.3 474M894.1 483.4Q903.8 488.6 914.9 489.5M894.1 483.4Q895.9 478.7 898 474M897.4 480.2Q898 490 904.3 483.5M900.6 485.5Q901.8 481.4 904 477.7M905.6 482.8Q906.1 492.6 912.5 486.1M907.8 487.8Q913.7 482.8 910 482.7Q906.2 484.6 907.8 487.8M913.5 489.7Q915.6 488.2 915.2 485.9M916.7 490.1Q917.3 492.5 919.1 490.6M889.7 492.6Q897.1 499 907.1 499.8M907.4 501.5Q909.1 505.1 913.3 503.5M907.5 501.4Q909.4 500.4 909.4 498.4"/><path stroke-width="1" d="M899.8 457Q897.6 461.4 898.2 466.3M902.2 457.4Q896.1 458.7 900.7 462.1M899.3 459.2Q900.4 460.3 901.8 459.9M901.6 461Q895.5 462.2 900.1 465.7M898.8 462Q899.9 463.1 901.3 462.7M898.4 464.2Q901.6 465.7 905 465.7M898.1 466.9Q897.1 469.4 897.2 472.1M898 466.9Q900.2 467.4 902.5 467.7M900.1 469.8Q894 471 898.6 474.4M899.7 471.9Q893.6 473.2 898.3 476.6M897.5 473.4Q894.3 476.8 896.4 481M896.9 473.3Q900.6 476.5 900.3 474.2Q898.7 472 896.9 473.3M896.6 475Q899.2 474.9 901.6 476.3M896.3 476.8Q897.4 478 898.7 477.6M895.7 479.9Q898.9 480.6 902.1 481.8M906.1 457Q905.3 462.6 905.5 468.2M906 458.4Q909.7 461 909.3 458.9Q907.6 457 906 458.4M908.3 459.8Q902.8 461.4 907.3 464.1M905.8 461.4Q909.4 464.1 909 461.9Q907.4 460 905.8 461.4M908 463Q902.5 464.6 907.1 467.4M905.4 465.3Q909.1 468 908.7 465.8Q907.1 463.9 905.4 465.3M907.7 467.2Q902.2 468.8 906.7 471.6M905.5 470.3Q903.3 470.1 905.5 470.4M904.8 470.3Q901.8 475.1 902.5 480.8M905 470.4Q908 471 911 471.8M904.7 471.7Q907.5 472.2 910.2 473.4M906.7 474Q900.6 474.8 904.9 478.5M906 476.6Q899.9 477.3 904.2 481M903 477.9Q904 479.2 905.4 478.9M902.7 479.4Q905.6 480.9 909 480.8M901.7 482.4Q900 482.4 902.5 483.5M901.9 482.4Q905.2 485.9 905.2 483.6Q903.8 481.3 901.9 482.4M912.6 457Q911.1 462.1 912 467.4M912.6 457Q913.6 457.8 914.6 457.4M914.5 458.8Q909.9 460.1 913.7 462.4M912.4 459.8Q915.4 462 915.1 460.2Q913.7 458.7 912.4 459.8M912.3 460.8Q914.5 461.5 916.7 461.4M912.2 462.1Q913.1 462.9 914.1 462.5M912.1 463.3Q914 463.5 916 463.3M914 464.6Q909.4 465.9 913.2 468.2M911.9 466Q913.8 466.8 915.8 466.9M911.5 468.7Q911.3 470 911.4 471.5M911.7 468.7Q912.6 469.5 913.6 469.1M911.3 471.4Q910.3 474.3 910.2 477.4M913.3 471.9Q908.6 472.5 911.9 475.4M910.7 474.1Q911.5 475.1 912.6 474.9M912.1 476.5Q907.4 477.1 910.7 480M909.6 478.9Q907.5 481.9 908.4 485.7M911.4 479.4Q906.7 479.9 910 482.8M911 481Q906.3 481.5 909.6 484.4M908.7 482Q911.3 484.7 911.2 483Q910.2 481.2 908.7 482M908.4 483.1Q911 485.8 911 484Q909.9 482.2 908.4 483.1M907.9 485.1Q908.7 486 909.7 485.8M919.2 457Q917.1 461.8 918.4 466.8M919.1 457Q922.9 459.8 922.5 457.6Q920.8 455.6 919.1 457M919 458.3Q922.8 461 922.4 458.9Q920.7 456.9 919 458.3M918.9 460.1Q921.8 460.5 924.6 460.9M918.7 462.6Q920.8 462.6 922.9 463.3M918.5 464.1Q921.6 464.7 924.7 464.7M920.8 466.7Q915.1 468.4 919.8 471.2M918.7 467.5Q916.3 469.9 918.6 472.6M920.7 467.7Q915 469.4 919.7 472.2M920.5 469.7Q914.9 471.4 919.5 474.2M920.4 471.1Q914.7 472.8 919.4 475.6M917.8 472.5Q915.7 478.7 915 485.2M917.8 472.5Q920.1 473.2 922.3 474M919.7 475Q913.9 475.7 918 479.2M916.4 478.2Q917.3 479.4 918.6 479.1M916 479.8Q919.2 483.1 919.1 480.9Q917.8 478.7 916 479.8M917.8 482.4Q911.9 483.1 916 486.7M915 483.4Q918.2 486.8 918.2 484.6Q916.8 482.4 915 483.4M914.1 486.5Q912.6 486.7 914.1 487.7M914.2 486.5Q917.4 489.9 917.4 487.6Q916.1 485.4 914.2 486.5M894.9 481.2Q898.6 482.4 901.8 485.1M894.8 481.5Q894.2 484.3 892.8 486.8M895.9 481.9Q895 484.7 894.4 487.5M899.2 483.3Q899.6 484.7 898.6 485.6M901.4 484.1Q900.7 487.2 898.8 489.7M903.3 485Q909.5 486.2 914.5 490.3M903.3 484.9Q903.7 486.4 902.7 487.2M904.7 488Q908.6 483.9 909.1 489.2M907.5 486.6Q907 489.5 905.6 492M909.5 487.4Q909.1 490.5 907.8 493.3M911.2 488.1Q911.6 489.5 910.6 490.4M912.7 488.7Q913.1 490.1 912.1 491M915.6 490Q917.7 489.5 918.6 491.8M914.8 492.1Q918.7 487.9 919.1 493.2M916.8 490.3Q917.2 491.8 916.2 492.7M918 490.8Q918.3 492.3 917.3 493.1M892.3 487.5Q895.1 487.5 896.6 490.3M892.3 487.4Q892.6 491.3 891.3 490Q890.6 488 892.3 487.4M893.2 490.2Q896.9 486.9 896.8 491.4M896 489.3Q895.2 491.1 894.1 492.7M897.8 490.6Q901.8 491.2 904.7 494M897 492.1Q900.7 488.9 900.6 493.4M899.7 491.2Q899.9 492.4 899 493.1M900.8 491.8Q901 493 900.1 493.7M901.7 494.5Q905.4 491.3 905.3 495.8M904.1 493.5Q903.2 495.5 902.2 497.5M906.3 494.7Q910.4 495.2 913 498.5M905.4 496.4Q909.1 493.2 909 497.7M907.9 495.4Q906.9 497.4 906.4 499.7M909.8 496.4Q908.4 498.1 907.8 500.3M911.5 497.2Q911.7 498.5 910.8 499.1M911.9 499.7Q915.6 496.5 915.5 501M914.3 498.5Q915.4 497.9 915.4 499.3M914.3 498.7Q913.7 500.6 912.4 502.1M886.5 497.6Q888.6 499.9 891.6 500.7M887.8 495.6Q886.6 501.4 891.3 498.6M889.3 496.6Q888.2 502.4 892.8 499.6M890.8 497.5Q889.7 503.3 894.3 500.5M890.7 500.4Q892.5 498.2 893.8 495.7M892.6 501.7Q897.1 506.1 903.4 507.5M892.7 501.6Q894.1 501.1 894.3 499.7M895.4 500.4Q894.3 506.2 898.9 503.4M896.2 503.8Q898.5 501.5 899.3 498.2M897.5 504.7Q901.7 502.6 899.5 502Q897 502.5 897.5 504.7M898.8 505.5Q900.4 502.9 902.4 500.6M901.3 504.2Q900.2 510 904.8 507.1M901.8 507.4Q903.4 505.6 904.8 503.7M903.7 508.1Q905.4 510.9 908.8 511M903.5 508.4Q904.3 506.3 905.5 504.5M906.4 507.4Q905.3 513.2 910 510.4M906.8 510.5Q907.8 508.4 909.8 506.9M885.9 498.5Q890.6 501 894 505.3M884.5 500.3Q889.2 497.5 888.2 502.4M887.4 499.7Q886.3 502.2 883.9 503.7M888.7 500.7Q888.3 505 887.1 503.3Q886.7 500.9 888.7 500.7M890 501.7Q888.8 503.5 887.1 504.8M891.8 503Q891.8 504.4 890.6 505M893.4 504.2Q893.4 505.6 892.2 506.2M894.9 505.6Q899.7 507 902 511.6M895 505.5Q893.7 508.1 891.9 510.3M895.4 508.6Q900 505.7 899.1 510.7M898.5 508.1Q898.5 509.6 897.4 510.1M900.1 509.4Q899.7 513.6 898.4 512Q898.1 509.6 900.1 509.4M900.4 512.4Q905 509.6 904.1 514.5M902.6 511.4Q904.8 512.6 906.4 514.5M902.7 511.3Q902.3 515.6 901 514Q900.7 511.6 902.7 511.3M904.2 512.5Q902.7 515 900.6 517.1M904.4 515.5Q909 512.6 908.1 517.6M881.7 503.8Q887.1 505.8 889.8 510.7M882 503.5Q881.2 508 880 506.2Q879.9 503.6 882 503.5M883.6 505Q881.5 506.5 880 508.5M884.8 506.1Q883.8 508.4 881.8 509.7M887.9 508.9Q886.5 511.1 884.6 512.8M890.4 511Q894.2 513.3 896.3 517.4M890.3 511.1Q888.2 513.4 886.2 515.7M890.1 514.2Q895.3 511.6 893.8 516.7M892.9 513.5Q892 517.9 890.9 516.1Q890.8 513.6 892.9 513.5M892.7 516.5Q897.9 514 896.4 519.1M894.3 518Q899.4 515.4 898 520.5M897.3 517.3Q900.1 518.1 900.8 521.2M897.2 517.4Q897.1 518.9 895.9 519.4M898.8 518.9Q897.3 521.8 894.4 523.3M899 522.3Q904.1 519.7 902.7 524.8M874 511.6Q877.1 517 882.5 520.2M873.7 511.9Q875.1 511.7 875.6 510.5M875 513.3Q877 511.5 878.7 509.5M877.5 512.6Q875.1 517.6 880 516.2M878.4 513.6Q876 518.5 880.9 517.1M879.8 515Q877.3 520 882.2 518.6M879.1 517.7Q883.4 516.8 881.6 515.7Q879.1 515.6 879.1 517.7M880.2 518.9Q884.5 518.1 882.7 517Q880.3 516.9 880.2 518.9M882.7 521Q883.2 524.3 886.5 525M884.1 519.7Q881.6 524.7 886.6 523.3M883.4 522.4Q887.7 521.6 885.9 520.5Q883.5 520.4 883.4 522.4M884.7 523.8Q889 522.9 887.2 521.8Q884.7 521.7 884.7 523.8M886 525.2Q890.3 524.4 888.5 523.3Q886.1 523.2 886 525.2M887 525.5Q887.8 529.5 891.3 531M886.6 525.9Q888.3 524.4 890.1 523M889.2 525.3Q886.7 530.2 891.7 528.8M888.3 527.7Q890.4 526.1 892.4 524.3M891.1 527.4Q888.6 532.4 893.6 530.9M892.1 528.4Q889.6 533.4 894.5 532M873.1 512.4Q877.2 516.3 879.6 521.4M873 512.4Q872.6 513.9 871.3 514.1M874 513.7Q872.4 518 871.6 516Q872 513.5 874 513.7M873.7 517.2Q879.2 515.5 876.9 520.3M876.7 517.2Q875.1 521.4 874.3 519.4Q874.6 516.9 876.7 517.2M876.3 520.5Q881.8 518.9 879.5 523.7M879.2 520.4Q876.5 521.9 874.2 523.8M880.5 522.1Q884.8 525.4 886.8 530.5M880.5 522.2Q878 523.5 876.1 525.4M881.8 523.8Q880.2 528.1 879.4 526.1Q879.7 523.6 881.8 523.8M882.8 525.1Q881.1 526.9 878.9 528M883.6 526.1Q882 530.4 881.2 528.4Q881.5 525.9 883.6 526.1M884.7 527.7Q884.4 529.1 883.1 529.3M886.2 529.6Q885.8 531 884.5 531.2M887.9 531.8Q889.1 531.9 888.2 533.5M887.9 531.8Q887.5 533.2 886.2 533.5M887 534.4Q892.4 532.8 890.1 537.6M863.7 519Q863.9 522.3 867.1 523.8M863.5 519.1Q864.9 519.2 865.5 518.2M864.5 520.6Q867.1 519.7 868.9 517.6M866.9 520.4Q863.8 524.7 868.7 524.1M867.9 521.9Q864.7 526.1 869.6 525.6M867.2 525.3Q869.4 530.2 873.7 533.8M867.4 525.2Q869.4 524.5 871.1 523.5M868.1 526.2Q872.3 526.2 870.8 524.8Q868.5 524.3 868.1 526.2M868.8 527.3Q872.9 527.2 871.4 525.9Q869.2 525.4 868.8 527.3M869.8 528.9Q871.8 528.2 873.4 526.7M872.7 529.4Q869.6 533.7 874.5 533.2M874.2 531.7Q871.1 536 876 535.5M873.1 534.6Q874.3 538.5 878.2 540.6M875.2 533.3Q872.1 537.6 876.9 537.1M875.8 534.2Q872.7 538.5 877.5 538M876.4 535.2Q873.3 539.5 878.2 539M875.5 537.9Q877.2 536.2 879.2 535.2M876.7 539.8Q878.1 539.9 878.7 538.8M877.5 540.9Q879.8 539.9 881.7 538.1M858.3 521.9Q859.5 526.5 862.5 530.2M858 522Q859.6 522.3 860.4 521.1M859.2 524.3Q864.1 524.6 862.5 523Q859.9 522.2 859.2 524.3M862.1 524.3Q858 528.9 863.7 528.8M863.2 526.4Q859.1 531.1 864.8 531M863.9 527.8Q859.8 532.4 865.6 532.3M863.2 531.5Q864.3 536.2 868.1 539.5M865.3 530.4Q861.2 535.1 866.9 535M865.2 535.7Q866.7 536 867.6 534.8M866.1 537.4Q869.3 536.7 871.8 534.4M867.7 540.9Q867.5 543.7 870.9 544.6M867.9 540.9Q869.4 541.1 870.3 539.9M869 542.9Q870.5 543.2 871.4 542M852.7 524.3Q853.5 528.7 856.5 532.2M852.3 524.5Q853.9 524.8 854.8 523.8M852.9 525.8Q857.7 526.5 856.2 524.7Q853.7 523.7 852.9 525.8M856.1 526.8Q851.6 531.1 857.3 531.4M856.6 528Q852.2 532.3 857.9 532.7M854.8 530.4Q857.7 528.8 860.7 527.6M855.5 532.1Q860.3 532.8 858.9 531Q856.4 530 855.5 532.1M856.3 534.5Q857.3 540.2 861.4 544.7M858.9 533.5Q854.4 537.7 860.1 538.1M857 535.6Q859.4 535.1 861.7 534.2M857.7 537.4Q860.3 536.5 863 536M861.1 538.8Q856.7 543.1 862.4 543.5M861.8 540.5Q857.4 544.8 863.1 545.2M860.5 544Q865.3 544.7 863.9 542.9Q861.4 541.9 860.5 544M861.3 545.2Q860.4 547.4 863 548.2M861.1 545.3Q862.6 545.7 863.5 544.6M864 545.6Q859.5 549.9 865.2 550.3M846.9 526.2Q846 529.2 848.7 531M846.5 526.4Q850.5 527.3 849.4 525.7Q847.4 524.7 846.5 526.4M847.2 528.4Q849.7 528.3 852 527.2M847.9 530.5Q851.8 531.4 850.7 529.8Q848.7 528.8 847.9 530.5M848.3 531.6Q848.7 534.4 850.2 536.9M848.2 531.6Q850.5 531.2 852.6 530.2M848.7 533Q850.9 531.9 853.4 531.8M849.1 534.3Q850.9 533.8 852.8 533.4M849.4 535.4Q852.1 534.6 854.9 534M849.9 536.8Q851.2 537.2 852 536.4M850 537.5Q849.9 540.6 852.3 542.9M852.5 537.8Q848.5 541.1 853.2 541.8M851.6 542Q855.5 543 854.5 541.4Q852.5 540.4 851.6 542M852.4 543.7Q852.8 547.1 854.5 550.1M854.2 543.1Q850.2 546.3 854.9 547M852.8 545.6Q854 546.1 854.9 545.2M853.3 547.3Q856 547.2 858.3 545.9M855.8 548.1Q851.8 551.3 856.5 552M854.1 549.9Q858.1 550.9 857 549.3Q855 548.2 854.1 549.9M845.3 526.7Q847.9 529.5 847.2 533.2M845.9 526.5Q843.5 527.4 841.1 528M846.6 529.8Q845.6 531 844.2 530.7M847 531.6Q843.6 535 843.7 532.7Q845.2 530.5 847 531.6M848 534.4Q850.5 538.9 849.8 544.1M847.7 534.5Q844.3 537.9 844.4 535.6Q845.8 533.3 847.7 534.5M845.8 537.5Q851.8 538.4 847.5 542M849 540Q848 541.2 846.6 540.9M846.9 542.1Q852.9 543 848.6 546.6M849.9 543.9Q847 544 844.3 544.7M850.1 546.3Q851.8 548.9 851.1 552M850.4 546.2Q847 549.6 847.1 547.3Q848.5 545.1 850.4 546.2M850.8 548Q847.4 551.4 847.5 549.1Q848.9 546.8 850.8 548M851.4 550.3Q849 550.9 846.6 551.1M834.8 528.6Q834.3 532.1 836.1 535.2M834.6 528.7Q837.2 527.9 840 528.5M837.1 530.2Q832.3 532.9 837.2 534.6M835.1 532.2Q839.1 533.9 838.2 532Q836.3 530.6 835.1 532.2M835.4 534.2Q839.4 535.9 838.5 534Q836.6 532.6 835.4 534.2M836.1 536.3Q835.1 542.8 837.8 548.8M838 536.1Q833.1 538.8 838 540.4M835.9 538.2Q837.2 538.9 838.3 538.2M838.5 539.7Q833.7 542.4 838.5 544M836.4 541.7Q837.7 542.4 838.8 541.7M836.7 543.2Q839.5 543.6 842.1 542.8M836.9 545.1Q841 546.9 840.1 545Q838.2 543.5 836.9 545.1M837.2 546.6Q841.2 548.4 840.3 546.5Q838.4 545 837.2 546.6M837.3 547.9Q839.8 547.7 842.2 547.2M837.6 550.3Q837.3 552.5 838.6 554.3M837.7 550.3Q839.8 550.7 841.9 550.4M838 552.3Q839.2 553 840.3 552.2M838.2 553.9Q839.5 554.6 840.5 553.9M834.3 529.1Q829.6 528 824.8 529.2M834.3 529.3Q834.2 531.2 834 533.2M833.2 529.2Q832.4 530.1 832.8 531.2M831.2 531Q829.8 526.4 827.5 530.2M830 528.9Q827.7 532 829.5 531.6Q831.1 530.3 830 528.9M828.9 528.8Q828.8 531.4 828.4 533.9M825 528.5Q824.4 531 824.9 533.5M823.3 528.2Q818.3 526.9 813 528.1M823.1 530.4Q821.7 525.8 819.4 529.6M821.7 528.3Q820.8 530.8 821 533.4M820.4 528.2Q819.6 529.1 820 530.1M818.3 528Q817.6 530 818.1 532.2M816.3 527.8Q814.1 530.9 815.8 530.5Q817.4 529.2 816.3 527.8M814.9 527.7Q815 530.2 814.2 532.7M813.6 527.6Q811.3 530.7 813.1 530.3Q814.7 528.9 813.6 527.6M812.4 527.9Q810.3 526.4 808.1 527.2M812.2 529.5Q810.8 524.9 808.5 528.7M810.3 527.3Q809.5 528.3 809.9 529.3M809.1 527.2Q808.6 529.1 808.8 530.9M834.9 535.5Q829.8 534.8 824.7 536.2M835 537.7Q833.2 533.3 831.2 537.3M833.3 535.8Q833.6 538.3 833.6 540.9M831.5 535.8Q831.9 538.2 831.1 540.6M829.9 535.8Q829.2 536.8 829.7 537.8M828.3 535.8Q828.7 538.3 828.6 540.8M826.4 535.8Q825.7 536.8 826.2 537.8M825.1 537.8Q823.3 533.4 821.4 537.4M824 536.1Q822.3 534.4 820.6 536.4M824.1 537.8Q822.3 533.4 820.4 537.4M822.4 535.9Q820.5 539.1 822.2 538.6Q823.7 537.1 822.4 535.9M821.3 537.9Q819.6 533.4 817.6 537.4M820.5 536.2Q816 534.5 811.2 534.7M820.6 535.9Q819.6 536.8 820 537.9M818.9 535.6Q817.8 537.5 818.5 539.6M817.3 535.3Q816.4 536.2 816.7 537.3M815.9 535.1Q813.2 538.1 815.2 537.9Q817 536.6 815.9 535.1M814.2 534.8Q813.2 535.7 813.6 536.8M812.6 534.5Q809.9 537.5 811.8 537.3Q813.6 536 812.6 534.5M811 534.1Q808.9 532.7 806.4 533.9M810.9 534.2Q808.3 537.2 810.2 537Q812 535.7 810.9 534.2M809.2 533.9Q808.4 536 808 538.2M807.3 533.6Q804.7 536.6 806.6 536.4Q808.4 535.1 807.3 533.6M835.6 542.3Q831.1 541.6 826.5 542.8M835.6 542.2Q833.2 546.1 835.3 545.5Q837.1 543.7 835.6 542.2M833.6 544.6Q831.5 539.3 829.1 544.1M832 544.6Q829.9 539.3 827.5 544.1M829.9 542.3Q827.5 546.2 829.6 545.6Q831.4 543.8 829.9 542.3M827.4 542.3Q827.2 545.2 827.8 548.1M825.3 542Q822.7 541.4 820.1 542.8M825.3 542.3Q825.2 545 824.7 547.7M822.8 542.3Q820.5 546.2 822.6 545.6Q824.3 543.8 822.8 542.3M820 542.5Q817.1 540.2 813.5 541.6M819.7 544.7Q818.6 539.2 815.5 543.3M817.7 542Q814.8 545.3 816.9 545Q818.9 543.6 817.7 542M816.1 544Q815 538.5 811.9 542.7M814.5 541.4Q813.7 543.7 813.2 546M811.7 541Q808.5 538.8 804.7 540M811.8 540.9Q808.8 544.2 810.9 544Q812.9 542.6 811.8 540.9M809.9 543Q808.8 537.5 805.8 541.7M808.6 542.7Q807.5 537.2 804.4 541.4M807.6 540.2Q807.1 542.4 807 544.7M836.2 548.4Q832.2 548 828.2 549.6M836.2 548.7Q834 552.5 836 551.9Q837.7 550.1 836.2 548.7M834.4 548.7Q832.2 552.5 834.2 551.9Q835.9 550.1 834.4 548.7M832.6 551Q830.6 545.9 828.3 550.5M830.6 548.7Q831.2 550.9 830.3 553M828.5 548.8Q827.9 551 828.9 553.3M826.5 549.2Q823 548 819.5 549.1M826.5 548.8Q825.6 549.9 826.2 551.1M824.5 551.1Q822.4 545.9 820.2 550.6M822.6 551.1Q820.5 546 818.2 550.6M821.2 551.1Q819.1 546 816.9 550.6M819.8 548.8Q819.8 551.3 819.6 553.7M819.5 548.9Q816 546.8 811.8 548.2M819.2 551Q818.1 545.9 815.3 549.7M818 548.6Q817.6 550.9 817.5 553.3M816.5 548.3Q813.8 551.4 815.7 551.2Q817.6 549.9 816.5 548.3M815.2 548.1Q814.3 549 814.6 550.2M813 549.9Q811.9 544.8 809.1 548.7M812.2 547.6Q809.5 550.7 811.5 550.4Q813.3 549.1 812.2 547.6M810.6 547.7Q808.5 545.9 805.9 546.8M810.6 547.3Q810.2 549.9 809.4 552.4M809.3 547.1Q808.3 548 808.7 549.1M807.7 549Q806.7 543.9 803.9 547.8M805.2 546.4Q804.3 545.3 803.1 546.1M805.2 546.4Q802.5 549.4 804.4 549.2Q806.3 547.9 805.2 546.4M803.9 546.1Q803.5 548.3 803.4 550.5M808.1 527.2Q805.3 525.5 802.1 524.6M808.1 527.2Q807 529 806.3 531M806.9 526.6Q806.3 528.2 805 529.5M805.5 525.9Q804.8 528.1 803.5 530M803.2 524.8Q800.1 526.8 801.8 527.1Q803.7 526.4 803.2 524.8M801.9 524.3Q800.4 522.4 798.1 522.5M801.9 524.2Q801 526.1 799.6 527.7M800.7 523.6Q799.6 524.2 799.6 525.3M799.1 522.9Q798.2 524.8 797.7 526.9M797.6 522.1Q795.4 520.1 792.2 520.3M795.6 523.4Q796 518.7 792.5 521.4M794.1 522.7Q794.5 518 791 520.7M792.6 522Q793 517.3 789.6 520M791 519Q788.8 516.5 785.3 516.6M791 519Q787.9 521 789.6 521.3Q791.6 520.6 791 519M789.4 518.3Q786.3 520.3 788.1 520.6Q790 519.9 789.4 518.3M787.6 517.4Q786.6 518 786.6 519.1M786.6 517Q783.5 519 785.3 519.3Q787.2 518.6 786.6 517M806.3 533.8Q803.7 531.4 800.2 531.4M806.4 533.4Q806 535.6 804.8 537.6M805.3 533Q805 535 803.6 536.6M803.4 534.6Q803.3 529.4 799.7 532.7M801.5 533.9Q801.4 528.7 797.8 532M801 531.4Q799.9 532.2 800 533.4M799.9 531.2Q797.5 528.7 793.9 529.2M800 531Q796.7 533.6 798.7 533.8Q800.8 532.8 800 531M798.6 530.6Q795.4 533.1 797.4 533.3Q799.5 532.3 798.6 530.6M796.5 532.1Q796.4 526.8 792.8 530.2M795.4 529.4Q794.2 530.1 794.4 531.3M793 528.7Q789.5 524.8 784.2 524M793.1 528.5Q791.6 530.3 790.9 532.6M791.9 527.8Q790 529.6 788.8 531.8M790.8 527.2Q787.1 529.2 789 529.7Q791.3 529.1 790.8 527.2M789.4 526.4Q785.7 528.3 787.6 528.9Q789.9 528.3 789.4 526.4M787.1 525Q783.3 526.9 785.3 527.5Q787.5 526.9 787.1 525M786 524.3Q784.4 526 783.1 527.8M783.8 525.6Q784.6 520.3 780.5 523M783.5 522.9Q782.5 521.5 780.5 521.9M783.5 522.9Q782.2 523.4 782.1 524.6M781.1 524Q782 518.7 777.8 521.4M804.6 540Q801 537 796.2 537.4M804.8 539.7Q804.3 542.2 802.4 544.2M802.3 541.6Q802.2 535.3 797.9 539.3M800.9 541.1Q800.8 534.7 796.5 538.8M799.6 540.6Q799.5 534.3 795.2 538.3M799.1 537.6Q795.2 540.7 797.6 540.9Q800.1 539.7 799.1 537.6M797.5 537Q796.6 539.7 795.7 542.5M796.1 536.5Q793.3 535 790.2 534.6M795.1 539Q795 532.6 790.7 536.7M793.5 535.6Q792.2 538.6 791.2 541.7M790.2 537.2Q790.1 530.8 785.8 534.8M790.3 534.3Q786.9 530.4 781.3 530M787.4 532.7Q786.6 534.8 785.4 536.8M786 531.8Q781.9 534 784 534.5Q786.5 533.9 786 531.8M783.4 533.1Q784.3 527.4 779.8 530.3M783.5 530.4Q782.5 533.4 780.3 535.7M780.2 528.5Q779.4 526.2 776.7 527.2M780.2 528.4Q776.2 530.6 778.3 531.1Q780.7 530.5 780.2 528.4M778.1 527.2Q776.5 529.8 774.6 532.3M803.1 545.9Q799.7 544 795.7 543.6M803.1 546Q800.2 548.3 801.9 548.4Q803.8 547.5 803.1 546M800.7 547.2Q800.6 542.5 797.4 545.5M799.1 546.6Q799.1 541.9 795.9 544.9M798.6 544.4Q797.6 545 797.7 546.1M797.4 543.9Q796.3 545.6 796.2 547.7M794.8 542.8Q791.3 541.3 787.5 540.4M794.1 544.8Q794 540.1 790.9 543.1M793.5 542.4Q792.7 544.4 792.1 546.5M791.1 541.6Q790.3 543.1 789.7 544.8M789.2 542.9Q789.1 538.3 785.9 541.2M787.3 542.3Q787.2 537.6 784.1 540.6M787.5 540.3Q786 537.3 782.3 538.1M787.5 540.3Q783.3 542.5 785.5 543.1Q788.1 542.4 787.5 540.3M785.8 539.3Q783.9 541.6 782.2 544.1M784.7 538.6Q780.4 540.8 782.7 541.4Q785.2 540.7 784.7 538.6M781.9 539.9Q782.9 533.9 778.2 536.9M781.4 537.3Q777.7 533.9 772.9 532.4M781.7 536.8Q777.5 539.1 779.7 539.7Q782.3 539 781.7 536.8M778.9 538.1Q779.8 532.1 775.1 535.1M776.8 536.8Q777.8 530.9 773.1 533.9M775.3 535.9Q776.2 530 771.5 533M775.4 533.1Q774 533.7 773.9 535.1M772.4 534.3Q773.4 528.3 768.7 531.3M784.5 515.2Q783.2 518.1 780.5 520M783 514Q785.6 518.5 780.9 517.5M783.2 517.2Q780.7 515.9 779 513.5M782.5 518.1Q780.9 516.6 779.3 515.3M780.1 517.7Q782.7 522.1 778 521.2M780.5 521Q779.1 523.7 776.4 525.3M777.9 520.5Q780.5 524.9 775.8 524M776.6 522Q779.3 526.5 774.6 525.6M777.5 524.4Q776.1 524.4 775.6 523.3M775.4 526.4Q774.2 530.8 770.4 533.3M774 525.4Q776.7 529.8 772 528.9M775 527.6Q772.9 526.8 771.2 525.3M774.2 528.6Q772.1 527.7 770.6 526M772.9 530.3Q770.9 528.3 768.3 527M771.6 531.9Q767.5 531.5 769.1 530.3Q771.4 530 771.6 531.9M770.8 533Q766.7 532.5 768.3 531.4Q770.6 531.1 770.8 533M770.3 533.6Q770.4 535.4 768.4 535.6M770.3 533.6Q766.2 533.1 767.8 532Q770.1 531.7 770.3 533.6M769.2 535.1Q767.3 534.1 766 532.6M779.9 511.6Q778.5 515.5 774.2 516.7M779.9 511.5Q775.4 510.6 777.3 509.5Q779.8 509.4 779.9 511.5M777 511.1Q779.5 516.2 774.4 514.7M777.6 513.9Q775.6 512.1 773.3 510.6M774.7 513.6Q777.1 518.7 772.1 517.2M774.1 518Q771.3 521.4 767.4 523.7M770.8 517.7Q773.3 522.9 768.2 521.4M769.2 519.5Q771.6 524.6 766.6 523.1M769.4 522.7Q765 521.8 766.8 520.7Q769.3 520.6 769.4 522.7M768.2 524Q766.5 522.1 764.5 520.6M767.2 524.7Q765.2 528.1 761.9 530.2M767.4 524.9Q765.3 522.7 763 520.8M766.3 526.1Q764.8 525.9 764.3 524.7M764.7 527.7Q760.3 526.8 762.1 525.7Q764.6 525.6 764.7 527.7M763.4 529.1Q761.5 526.7 759.1 525M762.3 530.3Q757.9 529.4 759.7 528.3Q762.2 528.2 762.3 530.3M775.2 507.1Q774.1 509.9 771.1 510.6M773.6 505.3Q775.9 511.2 770.5 509.1M774.1 508.5Q769.3 507.1 771.4 506Q774.2 506.2 774.1 508.5M770.3 511.4Q766.8 517 760.4 519.5M770.6 511.6Q768.7 509.6 766.5 507.7M767.9 514.1Q766.3 513.8 765.9 512.4M766.3 515.4Q764.7 512.6 761.5 511.2M764.6 517Q763 516.7 762.7 515.3M762.7 518.7Q757.9 517.3 760.1 516.3Q762.8 516.4 762.7 518.7M760.1 521Q758.5 523.3 755.9 524.4M758.4 519.1Q760.6 525 755.2 522.9M758.3 522.7Q756.7 522.4 756.3 521M755.5 521.8Q757.7 527.6 752.3 525.5M771.4 502.9Q770.1 505.4 767 505.6M770 501Q771.5 506.4 766.9 504.1M770.1 503.8Q768.4 501.7 766.4 500M768.6 504.9Q767.6 503 765.5 501.9M766.2 506.5Q764.3 508.9 761.4 509.8M763 506.3Q764.6 511.7 759.9 509.4M763.5 508.8Q761.3 506.8 759.7 504.5M761 507.8Q762.5 513.2 757.9 510.9M761 510.1Q759.2 513.6 755.2 514.2M761.3 510.5Q760.2 508.3 758.4 506.5M760.3 511.3Q758.9 510.9 758.6 509.6M757.6 510.4Q759.1 515.8 754.5 513.5M757.4 513.5Q756 513.1 755.8 511.8M754.3 515.2Q753.2 517.8 750.5 518.4M754.6 515.6Q750.5 514 752.5 513.2Q754.9 513.5 754.6 515.6M752 514.6Q753.6 520 748.9 517.7M750.7 515.7Q752.2 521.1 747.6 518.8M749.4 516.7Q750.9 522 746.3 519.8M767.8 498Q765.1 500.8 761.4 502.1M767.8 498.1Q766.8 496.4 765.6 494.7M766.8 498.8Q763.4 497.2 765.1 496.7Q767.2 497.1 766.8 498.8M765.5 499.6Q763.8 498.2 763.6 495.9M762.5 501.6Q759.1 500 760.8 499.4Q762.8 499.9 762.5 501.6M761.1 502.7Q757.4 505.4 753.2 507.4M761 502.5Q757.6 500.9 759.3 500.4Q761.4 500.8 761 502.5M759.9 503.2Q758.7 502.8 758.6 501.7M758.9 503.9Q755.5 502.3 757.2 501.8Q759.2 502.2 758.9 503.9M754.6 504.3Q755.6 508.9 751.8 506.7M754.6 506.6Q751.2 505 752.9 504.5Q755 504.9 754.6 506.6M752.5 507.6Q749.9 510.9 745.9 512.1M752.7 507.8Q749.3 506.2 751 505.7Q753.1 506.1 752.7 507.8M751.8 508.4Q748.4 506.8 750.2 506.3Q752.2 506.7 751.8 508.4M749 510.2Q745.6 508.6 747.3 508.1Q749.4 508.5 749 510.2M747.6 511.1Q745.9 509.6 745.1 507.5M746.4 511.9Q743.1 510.2 744.8 509.7Q746.8 510.2 746.4 511.9M762.1 488.3Q757.8 489.4 754.7 493M762.2 488.4Q762 489.6 762.9 490.3M760.9 489.1Q760.7 490.3 761.6 491M759.3 489.9Q759.1 491.2 760 491.8M758.4 492.6Q754.8 489.5 754.9 494M755.8 491.8Q755.6 495.6 756.9 494.3Q757.5 492.3 755.8 491.8M753.8 493.1Q749.7 494.6 746.3 497.6M753.7 492.9Q755 494.5 755.1 496.7M752.7 493.4Q753.1 495.6 754.2 497.4M751.6 494Q751.4 497.8 752.7 496.5Q753.3 494.5 751.6 494M751.2 496.5Q747.6 493.4 747.7 497.8M749.6 497.4Q746 494.2 746.1 498.7M748.2 498.1Q744.6 494.9 744.7 499.4M744.7 497.5Q741.4 498 739.5 501M745.7 499.4Q742.1 496.3 742.2 500.7M743.1 498.5Q742.9 502.3 744.2 501.1Q744.8 499 743.1 498.5M741.8 499.2Q741.6 503 742.9 501.8Q743.5 499.7 741.8 499.2M740.5 499.9Q740.3 503.7 741.6 502.5Q742.2 500.4 740.5 499.9M739.5 500.5Q739.2 504.2 740.5 503Q741.2 501 739.5 500.5M759.8 483.1Q756.2 484.2 753.1 486.8M759.8 483Q759.5 484.5 760.5 485.3M758.4 483.6Q758.6 486.1 760.6 487.7M758.1 486.4Q754 482.3 753.7 487.6M756.3 487.1Q752.3 483.1 752 488.4M754.2 485.5Q754.9 488.1 756.2 490.5M751.5 486.4Q747.5 486.5 745 490.2M751.6 486.6Q751.3 488 752.3 488.9M750.4 487.1Q750.1 488.6 751.1 489.4M749 487.7Q749.8 490.2 751.4 492.4M747 488.6Q746.4 493 748.1 491.7Q749 489.3 747 488.6M744.4 490.1Q739.6 490.4 736.2 494M742.9 490.4Q744.1 492.7 745.1 495.2M741.5 491Q742.7 493.3 743.6 495.6M741 493.8Q737 489.7 736.7 495M737.9 492.5Q738.5 495.5 740 498.1M736.2 493.2Q735.5 497.7 737.2 496.4Q738.1 494 736.2 493.2M759.7 482.9Q756.8 485.4 752.7 484.6M759.7 482.6Q758.4 481.7 758.6 480.4M757.4 480.8Q757.1 486.7 753.2 482.8M756.5 483.7Q752.9 480.6 755.1 480.5Q757.5 481.7 756.5 483.7M753.3 482.1Q753.1 488.1 749.1 484.2M751.7 484.7Q748.8 486.8 745 486.6M751.9 485.2Q748.3 482.2 750.5 482.1Q752.9 483.3 751.9 485.2M750.7 485.7Q749.4 484.8 749.6 483.4M748.6 483.7Q748.3 489.7 744.3 485.8M746.4 487.1Q745 484.2 744.6 480.9M744.6 487.1Q740.5 491 734.7 490.1M744 485.3Q743.7 491.3 739.8 487.4M743 488.2Q739.4 485.2 741.6 485.1Q744 486.3 743 488.2M741.7 488.7Q738.1 485.6 740.4 485.5Q742.7 486.7 741.7 488.7M738.5 489.8Q737.3 487.7 737.4 485.1M736.1 490.6Q734.8 489.7 735 488.3M756.6 472.5Q752.6 472.6 749 474.3M756.5 472.1Q756.1 473.2 756.8 474.1M754.9 472.5Q754.4 473.6 755.1 474.5M753.3 475Q750.5 471 749.5 475.4M751.4 475.5Q748.5 471.5 747.6 475.9M749.7 473.8Q748.6 477.5 750.2 476.5Q751.3 474.7 749.7 473.8M747.3 474.4Q744.8 474.4 742.8 476.3M747.8 476.4Q744.9 472.4 744 476.8M746.1 474.7Q746.2 477.1 746.9 479.3M744.4 475.1Q744.3 477.3 745.6 479.2M743 475.5Q743.8 477.4 744.1 479.5M742 475.8Q739.6 475.1 737.8 477.2M742.5 477.7Q739.7 473.7 738.7 478.1M739.1 476.5Q739.5 478.4 739.7 480.4M737.8 476.8Q738.5 479 738.8 481.4M736.2 477.1Q733.6 477.2 731.4 478.7M736.2 477.2Q735 480.9 736.6 480Q737.7 478.1 736.2 477.2M734.5 477.6Q734 478.8 734.7 479.7M732.9 478Q733.7 480.4 734.3 482.7M755.6 466.8Q748.5 466.6 742 469.4M754.3 469.6Q751.1 464.4 749.5 469.8M751.8 467.4Q750 471.9 752.1 470.9Q753.6 468.7 751.8 467.4M749.9 467.8Q749.2 469.2 750 470.3M749.1 470.5Q745.9 465.3 744.3 470.7M746.9 468.3Q747.8 471.4 748.2 474.6M741 469.2Q738.1 468.4 735.7 470.5M741 469.3Q740.3 470.7 741.2 471.9M738.6 469.8Q736.8 474.2 738.9 473.2Q740.4 471 738.6 469.8M736.9 470.1Q735.1 474.5 737.1 473.5Q738.7 471.3 736.9 470.1M735.2 471Q732.3 469.4 730.1 471.9M735.1 470.4Q735.3 472.9 736.2 475.4M733.2 470.7Q732.5 472.1 733.3 473.2M731.3 471Q730.6 472.4 731.5 473.6M755.6 466.3Q750.7 468.7 745.5 467.3M755.6 466.8Q755.1 464.3 755.4 461.8M754.1 466.9Q753.3 466.1 753.7 465.1M752.4 465.2Q751.1 469.7 748.8 466M750.3 465.4Q749.1 469.9 746.8 466.2M749.5 467.4Q749 465.4 749.1 463.3M747.8 465.6Q746.5 470.1 744.2 466.5M746.7 467.7Q746 465.7 745.8 463.7M745.5 465.9Q744.3 470.4 742 466.7M744.5 468.1Q742.4 468.8 740.2 468.2M743.2 468Q741 465.1 742.7 465.4Q744.3 466.7 743.2 468M741.7 466.2Q740.4 470.7 738.1 467.1M740 466.4Q738.8 470.9 736.5 467.2M738.7 468.4Q734.9 469.8 730.9 468.9M738.5 466.6Q737.2 471.1 734.9 467.4M736.7 468.7Q735.9 466.3 735.8 463.8M735.4 466.9Q734.2 471.4 731.9 467.7M733.4 467.1Q732.2 471.6 729.9 467.9M732.5 469.1Q730.2 466.2 732 466.5Q733.5 467.8 732.5 469.1M731.3 469.2Q729 466.3 730.7 466.6Q732.3 467.9 731.3 469.2M755 456.1Q750.6 455.2 746.2 456.7M753.2 456.1Q751.3 459.4 753.1 458.8Q754.5 457.3 753.2 456.1M751.6 458.1Q749.7 453.7 747.8 457.7M750 456.2Q749.3 457.2 749.8 458.2M748.4 456.2Q748.1 458.3 748.8 460.3M747.2 456.3Q747.7 458.5 747.4 460.7M745.1 456.1Q741.7 455.9 738.3 456.9M745.1 456.3Q745.5 458.3 745.5 460.4M743.1 456.4Q742.9 458.4 743.1 460.4M741.1 456.4Q739.2 459.7 740.9 459.1Q742.4 457.6 741.1 456.4M739.4 458.4Q737.6 454 735.7 458M737.1 456.4Q734.6 455.4 732.2 456.8M737.1 458.5Q735.3 454.1 733.4 458.1M735.1 456.6Q734.8 458.7 735.6 460.9M730.8 457.1Q729.8 455.3 729 457.2M730.8 456.7Q731.2 459 730.3 461.3M754.1 456Q755.9 449.5 755.8 442.7M754.4 456.1Q751.4 455 748.3 454.7M752.3 453.3Q758.1 452 753.6 448.8M755.1 451.2Q751.5 448.2 751.8 450.4Q753.4 452.5 755.1 451.2M753 448.9Q758.8 447.7 754.3 444.5M755.7 447.6Q753.5 446.7 751 447.1M756 445.5Q752.4 442.5 752.7 444.7Q754.2 446.8 756 445.5M753.9 443Q759.7 441.7 755.2 438.5M756.3 442Q758.4 439.1 756.6 435.7M754.1 441.6Q759.9 440.3 755.4 437.1M756.9 439.5Q755.9 438.4 754.5 438.9M755 435.9Q760.8 434.6 756.3 431.5M748.1 456Q749.1 450.4 749.1 444.7M747.9 456Q745.4 455.4 742.9 455.3M746.1 453.6Q751 452.5 747.2 449.8M746.4 452.1Q751.3 451 747.5 448.3M749.1 447.7Q746.6 446.8 744 446.4M747.3 446.3Q752.2 445.2 748.4 442.5M747.5 444.7Q752.4 443.7 748.6 441M749.7 443.2Q752 438.8 750.8 433.8M747.8 442.9Q752.7 441.9 748.9 439.2M750 442.2Q748.2 441.2 746.1 441.4M750.7 437.4Q747.7 434.8 748 436.7Q749.3 438.5 750.7 437.4M749 435.3Q753.9 434.2 750.1 431.5M751.3 434.1Q749.2 433 746.9 432.9M741.3 455.9Q742.5 451.3 742.5 446.6M739.3 455.6Q744.3 454.5 740.4 451.7M739.6 453.7Q744.5 452.6 740.7 449.8M741.9 452.2Q738.9 449.6 739.1 451.5Q740.4 453.3 741.9 452.2M742.2 450.5Q739.7 450.4 737.2 450.1M742.5 448.9Q740.6 448.6 738.7 448.2M742.5 445.4Q743.9 442.3 743.8 438.9M743 445.5Q740.4 444.9 737.7 444.6M743.2 444Q742.3 443 741.2 443.4M743.4 442.6Q742.5 441.7 741.4 442M741.6 440.4Q746.6 439.3 742.8 436.6M741.9 439Q746.8 437.9 743 435.1M744 438.2Q745.2 435.2 744.5 431.9M742 437.9Q747 436.8 743.2 434.1M744.4 436.6Q743.4 435.7 742.3 436.1M742.5 434.8Q747.5 433.7 743.6 430.9M734.6 455.8Q736.3 453.1 735 449.9M732.8 455.5Q737.7 454.4 733.9 451.7M733 454.2Q737.9 453.2 734.1 450.5M735.3 452.8Q733.1 452.1 730.7 452M735.6 451.4Q734.6 450.4 733.5 450.8M735.9 449.1Q737.6 447 736.4 444.3M736.2 447.1Q734 446.2 731.6 445.9M736.4 445.6Q733.4 443 733.7 444.9Q735 446.7 736.4 445.6M736.7 442.9Q738.2 438.3 737.8 433.4M734.8 442.6Q739.7 441.5 735.9 438.8M737.4 439.4Q734.4 436.8 734.6 438.7Q735.9 440.5 737.4 439.4M735.7 437.2Q740.6 436.1 736.8 433.4M737.9 436.4Q734.9 433.8 735.1 435.7Q736.4 437.5 737.9 436.4M738.3 433.8Q735.3 431.2 735.5 433.1Q736.8 434.9 738.3 433.8M738.2 432.1Q739.5 431.3 738.7 430.1M738.5 432.2Q735.5 429.6 735.7 431.5Q737.1 433.3 738.5 432.2M736.7 430.3Q741.6 429.2 737.8 426.5M758.2 435.8Q754.9 436.1 752.6 433.5M758.7 434.1Q755.6 437.8 755.1 433.4M757.5 433.7Q754.4 437.4 753.8 433M755.4 435.1Q755.7 433 757 431.3M754.1 434.6Q753.7 433.5 754.5 432.7M751.7 434Q749.2 433.3 747.1 431.6M751.8 433.8Q751 430.2 752.5 431.2Q753.4 433.1 751.8 433.8M751.2 431.6Q748.2 435.2 747.6 430.8M748.9 432.9Q749.2 430.4 750.7 428.3M747.3 432.3Q746.5 428.6 747.9 429.6Q748.9 431.5 747.3 432.3M745.5 431.5Q742.7 431.4 740.4 429.6M745.4 431.6Q745.1 430.5 745.9 429.7M743.9 431.1Q743.1 427.4 744.6 428.5Q745.5 430.4 743.9 431.1M742 430.4Q742.3 428.5 743.5 426.9M739.6 429.5Q736.1 429.8 733.7 426.9M739.6 429.6Q738.8 425.9 740.2 427Q741.1 428.9 739.6 429.6M739.1 427.4Q736 431 735.5 426.6M736.8 428.7Q737.1 426.1 738.6 424M735.5 428.2Q736.7 426.1 736.8 423.7M734.5 427.9Q734.1 426.7 734.9 425.9M761.8 426.5Q759.4 423.9 755.9 424.1M762 426Q761.7 427.8 760.3 429.2M760.9 425.6Q759.6 427.5 759.1 429.8M758.8 426.8Q758.9 422.1 755.6 424.9M757.3 426.1Q757.5 421.4 754.1 424.2M756.8 423.8Q756.2 425.7 755.6 427.5M755.2 422.9Q753 420.8 749.7 421.1M754.4 424.9Q754.5 420.2 751.2 423M753.9 422.6Q752.9 423.2 752.9 424.3M752.3 421.9Q749.2 424 751 424.2Q752.9 423.5 752.3 421.9M750.7 421.2Q747.7 423.3 749.5 423.6Q751.4 422.8 750.7 421.2M749 420.6Q746.4 418.4 742.9 418.2M748.3 422.3Q748.5 417.6 745.1 420.4M747.4 419.7Q746.4 420.4 746.4 421.4M746.3 419.3Q745.9 421.2 744.4 422.7M744 420.4Q744.2 415.7 740.8 418.5M743.7 418.1Q742.6 418.8 742.7 419.8M741.8 417.7Q740.3 415.8 738 416M741.1 419.2Q741.3 414.5 738 417.3M739.2 416.2Q738 418.5 737.1 420.8M762.2 425.5Q759.1 425 756.7 423.2M763.1 423.7Q758.4 427.9 758.5 422M759.9 425Q760.5 422 762.6 419.8M757.8 423.9Q757.4 418.9 759.2 420.6Q760 423.2 757.8 423.9M756.3 422.5Q751.1 422.1 747.7 418.4M757.3 420.7Q752.5 424.9 752.6 419M755.4 419.7Q750.6 423.9 750.7 418M752.3 421Q751.9 416 753.7 417.7Q754.5 420.3 752.3 421M751.1 420.4Q752.8 417.8 754.3 415.2M750.2 417Q745.4 421.2 745.5 415.3M746.5 417.7Q743.2 417.2 741.2 414.3M746.3 417.9Q746 412.9 747.7 414.6Q748.5 417.2 746.3 417.9M744.2 416.8Q744.7 414.4 746.6 412.8M742.7 416.1Q743.8 413.8 744.4 411.3M741.2 415.2Q743 412.5 743.9 409.3M739 413.9Q738.4 414.9 739.2 413.3M738.9 414.1Q740.6 411.4 741.7 408.5M767.4 416.5Q762.8 413.3 757.5 411M765.9 419Q767 412.8 762.1 415.9M765.1 415.5Q760.7 417.7 763 418.3Q765.6 417.7 765.1 415.5M762.8 414Q758.4 416.2 760.7 416.9Q763.4 416.3 762.8 414M759.6 415.1Q760.8 409 755.9 412M757.7 413.9Q758.8 407.7 753.9 410.8M756.5 413.1Q757.6 407 752.7 410M756.7 409.9Q755.1 407 751.6 407.5M755.2 412.3Q756.3 406.2 751.4 409.2M755.2 409.3Q750.8 411.5 753.1 412.2Q755.8 411.6 755.2 409.3M753 408Q751.4 410.3 749.7 412.5M750.9 407.1Q748.4 404.6 744.8 403.8M751.1 406.8Q749.7 408.8 748 410.7M749.2 405.6Q744.8 407.8 747.1 408.5Q749.8 407.8 749.2 405.6M747.2 404.4Q742.8 406.6 745.1 407.2Q747.8 406.6 747.2 404.4M746.1 403.6Q744.6 404.2 744.4 405.7M770.4 412.5Q766.6 409.3 762.4 406.7M770.4 412.5Q769.2 412.8 769 413.9M769.1 411.5Q767.9 411.9 767.7 412.9M768.3 410.9Q767.3 412.6 766.2 414.2M767.3 410.2Q763.9 411.6 765.5 412.2Q767.6 411.9 767.3 410.2M766.4 409.5Q765.1 411.3 764 413.2M763.9 410.2Q765.1 405.6 761.3 407.6M762.8 409.4Q764 404.8 760.2 406.8M763.2 407.2Q759.7 408.6 761.4 409.2Q763.4 408.9 763.2 407.2M761.6 406.6Q760.8 404.3 758.5 404.1M760.7 407.8Q761.9 403.3 758 405.3M760.2 405.1Q758.7 406.5 757.9 408.4M758.8 404.1Q757.7 404.4 757.5 405.5M757.9 403.8Q756.4 400.8 753.1 400.5M756.8 402.6Q755.6 402.9 755.4 404M755.7 401.8Q754.7 403.7 753.1 405.3M754.3 400.8Q750.9 402.2 752.6 402.8Q754.6 402.5 754.3 400.8M752.2 399.8Q751.3 397.8 749.2 397.3M751.3 401Q752.5 396.5 748.7 398.5M750.3 400.3Q751.5 395.7 747.7 397.7M749.3 399.5Q750.5 395 746.7 397M749.6 397.3Q746.2 398.7 747.8 399.4Q749.9 399 749.6 397.3M770.4 412.5Q765.7 409.4 762.2 405M770.3 412.5Q770.4 411.2 771.5 410.8M769.5 411.8Q770.8 409.9 772.3 408.3M769.8 409.4Q765.4 411.8 766.5 407.3M767.2 409.8Q767.8 405.9 768.8 407.5Q769 409.7 767.2 409.8M766.3 409.1Q766.9 405.2 767.9 406.7Q768.1 408.9 766.3 409.1M765 408Q765.5 404 766.6 405.6Q766.8 407.8 765 408M765.1 405.4Q760.7 407.7 761.8 403.2M764.3 404.7Q759.9 407.1 761 402.6M760.8 404.3Q758.1 403.3 756.9 400.5M760.7 404.4Q762.4 402.7 763.5 400.6M760.6 401.6Q756.2 403.9 757.3 399.4M757.9 402Q758 400.7 759.1 400.3M755.4 399.6Q752.6 399 751.6 396.2M755.3 399.7Q755.3 398.5 756.4 398M754 398.7Q755.6 396.9 756.9 394.8M751.7 396.7Q751.8 395.4 752.8 395M750.6 395.7Q750.3 396 750.8 395.3M750.6 395.8Q752.2 394.5 753.4 392.8M773.5 408.2Q777.3 406.5 779.1 402.3M773.4 408Q773.3 406.4 772 405.9M774.9 406.7Q774.2 402 772.9 403.9Q772.7 406.5 774.9 406.7M776.8 405.1Q776.1 400.4 774.8 402.3Q774.6 404.9 776.8 405.1M777.2 401.5Q782.5 404.5 781.2 399M780.9 402.1Q784.9 399.8 787.6 395.8M780.7 401.9Q780 397.1 778.7 399Q778.5 401.7 780.7 401.9M780.6 398.7Q785.9 401.6 784.6 396.2M783.2 399.8Q781.7 397.3 780.1 394.9M783.4 396.3Q788.7 399.3 787.5 393.8M784.9 395.1Q790.2 398.1 788.9 392.6M768.5 403.6Q772.9 401.4 775.7 397.2M768.7 400.2Q774.1 403.2 772.8 397.6M771.9 397.5Q777.3 400.5 776 394.9M775.2 398.1Q774.5 393.2 773.1 395.2Q772.9 397.9 775.2 398.1M776.2 396.5Q780.3 394.7 783.1 391.5M776.6 396.9Q776.5 395.3 775.2 394.8M778.1 395.7Q777.1 393.3 775.3 391.7M779.1 394.8Q778.4 389.9 777.1 391.9Q776.9 394.6 779.1 394.8M778.7 391.8Q784.2 394.8 782.9 389.2M782 392.4Q779.8 389.9 777.5 387.5M783.3 390.9Q784.9 391.4 784.4 389.3M783.5 391.2Q783.4 389.5 782.1 389M784.7 390.1Q782.9 387.8 780.8 385.7M763.4 398.8Q766.9 398.8 767.5 395.4M762.2 397.4Q767.3 400.2 766 395M765.4 397.9Q765.3 396.4 764.1 395.9M767.1 396.4Q765.1 394.7 763.9 392.3M769.2 394.5Q772.4 393 774.5 390.1M769.3 394.6Q768.7 390.1 767.4 391.9Q767.2 394.4 769.3 394.6M769.5 391.4Q774.5 394.2 773.3 389M772.3 392.1Q771.7 387.6 770.4 389.4Q770.2 391.9 772.3 392.1M772.4 388.9Q777.5 391.7 776.3 386.5M774.6 389.6Q778 388.8 779.3 385.5M773.4 388.1Q778.4 390.9 777.2 385.7M776.2 388.9Q774.5 386.3 772 384.3M777.8 387.5Q777.2 383 776 384.8Q775.7 387.3 777.8 387.5M779.4 386.2Q778.7 381.7 777.5 383.5Q777.3 386 779.4 386.2M781.1 384.7Q782.1 385.6 781.3 384.2M779.6 383Q784.6 385.7 783.4 380.5M758.7 394.5Q762.5 393.7 764 389.9M759 394.9Q758.9 393.5 757.8 393M760.1 393.9Q759.6 389.8 758.4 391.4Q758.2 393.7 760.1 393.9M759.8 391.3Q764.4 393.8 763.3 389.1M762.1 392.2Q762.1 390.8 761 390.4M762.4 389.1Q767 391.7 765.9 386.9M764.5 389.9Q767.7 389.5 768.8 386.5M764.7 390.1Q762.8 388.2 761.7 385.7M764.5 387.4Q769.1 390 767.9 385.2M765.5 386.6Q770.1 389.1 769 384.4M766.7 385.6Q771.3 388.1 770.2 383.4M768.9 386.1Q773.1 384 776.1 380.4M769.1 386.4Q768.3 384.5 766.8 383.2M768.6 384Q773.2 386.5 772.1 381.8M770 382.8Q774.6 385.4 773.4 380.7M770.8 382.1Q775.4 384.7 774.3 379.9M774.8 381.7Q774.2 377.6 773.1 379.2Q772.9 381.5 774.8 381.7M776.4 380Q777.6 379.9 777.7 378.5M775.2 378.5Q779.8 381 778.6 376.3M777.6 379.3Q777 375.2 775.8 376.9Q775.6 379.2 777.6 379.3M874.9 403.2Q878.6 401.3 879.6 397.2M875.2 403.4Q874.9 402.2 873.8 401.9M876.2 402.1Q876 400.9 874.9 400.7M875.9 399.4Q880.5 401 878.7 396.9M878.7 399.3Q877.4 395.6 876.7 397.3Q876.9 399.4 878.7 399.3M880.2 397.1Q882.8 395.9 883.4 392.9M880.4 397.2Q878.8 395.9 877.3 394.5M881.3 396.1Q881 394.9 879.9 394.6M880.5 393.9Q885.1 395.4 883.3 391.3M883.2 393.8Q882 390.2 881.2 391.9Q881.4 394 883.2 393.8M883.9 392.6Q886.7 390.9 888.1 387.9M884 392.8Q882.5 391.3 880.8 389.9M883.5 390.3Q888.1 391.8 886.3 387.7M885.8 387.6Q890.4 389.1 888.6 385M888.1 388Q887.8 386.8 886.7 386.5M888.1 387.3Q891.2 386.4 891.7 383.4M888.4 387.5Q886.8 386.5 885.8 384.7M888.2 384.7Q892.8 386.3 891 382.1M888.9 383.8Q893.5 385.4 891.7 381.3M891.2 384.1Q890 380.5 889.3 382.2Q889.5 384.3 891.2 384.1M879.5 407.6Q883 405.4 884.8 401.4M879.5 407.7Q878.5 403.5 877.5 405.3Q877.5 407.7 879.5 407.7M879 405Q884 407.1 882.3 402.4M881.5 405.6Q879.8 404 877.9 402.6M880.7 403.2Q885.7 405.3 884.1 400.6M884 403.1Q883.7 401.7 882.6 401.4M883.2 400.7Q888.2 402.9 886.5 398.1M885.7 401.1Q888.8 400.3 889.5 397.1M885.8 401.3Q884 400.2 883.2 398.1M886.8 400.3Q885.8 396.1 884.8 397.9Q884.8 400.3 886.8 400.3M888.3 398.8Q886.7 397.3 885.5 395.4M888.1 395.7Q893.1 397.9 891.5 393.1M890.1 396.4Q893.7 394.2 895.6 390.3M890.3 396.7Q890.1 395.3 888.9 394.9M894.2 392.8Q893 390.6 890.5 389.6M893.9 389.9Q898.9 392 897.3 387.3M897 390.3Q897.8 390.1 897.2 388.6M896.8 390.1Q896.6 388.7 895.4 388.3M880 408.2Q882.1 404.8 886 403.4M881.4 409.8Q879.6 404.8 884.2 406.7M882.9 408.5Q881.2 403.4 885.7 405.3M884 407.5Q882.3 402.5 886.8 404.4M885.7 406.1Q884 401 888.5 403M886.9 405.1Q885.2 400 889.7 401.9M886.6 402.2Q890 398 894.8 395.4M886.7 402.3Q890.7 403.6 888.9 404.5Q886.5 404.3 886.7 402.3M887.7 401.5Q889.7 403.4 891.5 405.4M888.5 400.8Q889.9 402.8 891.8 404.5M889.8 399.7Q891.1 400 891.4 401.2M891.2 398.5Q892.6 400.4 894.2 402M893 397Q897 398.3 895.1 399.1Q892.8 398.9 893 397M894.5 395.6Q896.6 396.8 897.8 398.7M895.9 395.1Q896.7 391.9 900.1 391.7M897.1 396.4Q895.3 391.3 899.9 393.3M897 393.5Q898.3 393.8 898.6 395M898.4 392.3Q899.8 393.7 901.3 394.9M899.5 391.4Q900.8 391.7 901.1 392.9M884.5 411.9Q885.3 415.5 888.4 417.7M884.1 412.1Q888.4 412 886.9 410.7Q884.5 410.2 884.1 412.1M887.2 412.8Q884.1 417.2 889 416.7M889.4 416.2Q886.2 420.5 891.2 420M888.3 419Q888.7 422.1 892.2 423.2M888.5 418.9Q890.4 417.5 892.7 416.6M891.1 418.8Q887.9 423.1 892.9 422.6M891.9 420.1Q888.8 424.5 893.7 424M891 422.7Q895.2 422.6 893.7 421.3Q891.4 420.8 891 422.7M891.4 423.7Q893.2 429.7 896.7 435.1M891.5 423.6Q896.4 424.4 894.9 422.6Q892.4 421.5 891.5 423.6M894.7 424.6Q890.2 428.9 895.9 429.4M895.7 427.1Q891.2 431.4 896.9 431.9M893.8 429.3Q896.3 428.9 898.6 428M894.3 430.6Q896.9 430.2 899.2 429.3M894.9 432.1Q898.4 431.7 901.3 430M895.7 433.9Q900.5 434.7 899.1 432.9Q896.6 431.8 895.7 433.9M889.5 408Q890.8 411.9 894.1 414.6M889.2 408.1Q891.4 406.4 893.8 405M891.5 411.6Q892.8 411.7 893.4 410.7M894.4 412.2Q891.4 416.3 896.1 415.8M893.2 414.3Q897.3 414.2 895.8 412.9Q893.6 412.5 893.2 414.3M894.3 416.4Q894.7 418.8 897.3 419.9M894.5 416.3Q895.8 416.4 896.4 415.3M897.5 417Q894.5 421.1 899.2 420.6M896.7 419.7Q900.7 419.6 899.3 418.3Q897.1 417.8 896.7 419.7M897.8 420.4Q897 423.6 900 425.3M899.5 419.7Q895.3 423.7 900.6 424.1M900.1 421.1Q895.9 425 901.2 425.5M900.8 423Q896.6 427 901.9 427.4M899.1 425.1Q901.3 424 903.7 423.1M900.2 426.3Q900.1 431 902.9 434.4M899.7 426.5Q901.1 426.9 902 425.9M900.4 428.4Q904.9 429.1 903.6 427.4Q901.2 426.4 900.4 428.4M903.4 429.3Q899.2 433.3 904.5 433.7M901.8 431.7Q904.2 430.2 907 430M902.7 433.9Q907.1 434.7 905.8 433Q903.5 432 902.7 433.9M894.9 403.7Q896.9 410 901.2 414.7M894.3 404.1Q899.3 404 897.5 402.4Q894.8 401.8 894.3 404.1M895.5 405.9Q897.2 406.1 897.9 404.8M898.9 406.4Q895.2 411.5 901 410.8M897.4 408.9Q899.1 409 899.8 407.8M899.5 412.1Q901.8 410.2 904.8 409.4M900.7 413.9Q905.7 413.8 903.9 412.3Q901.2 411.7 900.7 413.9M902.5 416.4Q902 417.5 903.1 417.6M902.3 416.5Q904 416.6 904.7 415.4M903.2 417.6Q903.3 420.6 905.2 422.9M903.1 417.6Q907.7 418.4 906.3 416.7Q903.9 415.6 903.1 417.6M903.9 419.6Q908.5 420.4 907.1 418.7Q904.7 417.6 903.9 419.6M906.8 420.2Q902.4 424.3 907.9 424.7M905.6 423.9Q905.8 428.9 909.6 432.4M905.6 423.9Q910.2 424.7 908.8 422.9Q906.5 421.9 905.6 423.9M908.5 424.6Q904.2 428.7 909.7 429.1M908.1 430.2Q910.4 429.2 912.7 428.2M908.7 431.6Q911.6 430.7 914.4 429.6M899.5 400Q901 403.9 904.5 406.4M899.5 400.1Q901.8 399.3 903.7 397.8M900.1 401Q901.9 399.9 903.7 398.8M902.5 404.8Q903.9 404.9 904.5 403.8M903.7 406.7Q905.8 404.8 908.5 403.9M903.9 407.3Q905.4 411.6 909.2 414.4M904.1 407.2Q906.1 405.4 909 404.7M907.1 407.8Q903.9 412.2 908.9 411.7M906.1 410.4Q908.1 408.6 910.6 407.7M907.4 412.3Q911.6 412.2 910.1 410.9Q907.8 410.4 907.4 412.3M908 413.4Q912.3 413.3 910.8 412Q908.5 411.5 908 413.4M908.9 414.6Q909.7 419.7 912.8 423.8M911.1 413.7Q906.8 417.8 912.3 418.3M912.1 416Q907.7 420.1 913.2 420.5M912.9 418.1Q908.6 422.2 914.1 422.7M911.2 420.4Q914.4 419.7 917.4 418.7M911.9 422.3Q913.9 420.9 916.4 420.8M913.3 425.9Q913.7 428.5 915.5 430.7M913.3 425.8Q915.9 424.8 918.3 423.8M916.6 427.3Q912.2 431.3 917.8 431.8M917.5 429.4Q913.1 433.5 918.6 434M896.6 436.3Q896.4 440.8 898.9 444.7M896.6 436.3Q900.1 437.6 899.3 436Q897.6 434.9 896.6 436.3M896.9 437.5Q899.5 437.6 902 437M897.2 439Q899.3 439.3 901.1 437.9M897.4 440.3Q899.8 439.8 902.2 439.1M897.7 441.7Q899.8 441.5 901.8 441.1M899.8 442.3Q895.8 444.9 900.1 446M900 443.4Q896 445.9 900.3 447M898.4 445.5Q898.2 447.6 899.8 449.4M898.5 445.5Q900.6 445.2 902.8 444.9M898.8 447.4Q902.3 448.7 901.5 447.1Q899.8 446 898.8 447.4M899.1 448.6Q901.1 448.1 903.3 447.9M899.1 449.5Q897.7 452 900 454.4M899.3 449.5Q900.4 450.4 901.5 449.8M901.5 452.3Q896.5 454.3 901 456.5M899.5 454.8Q898.4 458.9 899.5 463M899.3 454.8Q902.9 457 902.4 455Q900.7 453.4 899.3 454.8M899.3 456.1Q901.9 456.4 904.4 456.5M899.4 458.2Q901.6 457.8 903.8 458.2M899.4 459.3Q900.5 460.1 901.6 459.6M899.4 461.3Q900.5 462.1 901.6 461.5M899.4 463Q900.5 463.8 901.6 463.2M902.9 434.4Q903.1 437.9 904.9 441.1M905.3 434Q900.2 437.2 905.6 438.7M905.8 436.5Q900.7 439.8 906.1 441.2M903.7 438.8Q905.1 439.5 906.2 438.6M905.1 442.8Q904.4 446 906.3 448.8M904.5 442.9Q907.6 443.2 910.3 441.9M907.3 443.8Q902.2 447.1 907.6 448.6M907.5 445.2Q902.5 448.4 907.8 449.9M907.8 446.5Q902.7 449.7 908.1 451.2M905.8 448.9Q905.4 453.4 906.6 458M908.3 448.8Q902.6 451.1 907.7 453.6M905.7 450.7Q908.5 450.1 911.2 450.3M908.3 452.1Q902.6 454.3 907.7 456.8M905.8 453.5Q907.1 454.5 908.3 453.8M905.8 455.7Q907.1 456.6 908.3 455.9M905.8 457.7Q908.3 458.4 910.9 457.9M905.7 459.5Q904.9 461.5 906.7 463.6M905.9 460.9Q908.3 460.8 910.8 461.4M908.4 462.8Q902.7 465.1 907.8 467.6M909.1 432.6Q909 437.6 911.3 442.1M911 432.2Q907 434.8 911.3 436M909.3 433.8Q911.9 433.4 914.5 433.1M909.6 435.3Q911.6 435.4 913.5 435M911.8 436.2Q907.8 438.7 912.1 439.9M912.1 437.3Q908 439.9 912.3 441.1M910.3 438.7Q911.4 439.2 912.3 438.6M910.5 439.7Q914.1 441 913.2 439.4Q911.5 438.3 910.5 439.7M910.9 441.5Q914.4 442.8 913.6 441.2Q911.8 440.1 910.9 441.5M911.3 442.4Q910.2 445.3 912.4 447.6M911.1 442.5Q913.4 441.5 916 441.7M911.4 444.2Q913.6 443.6 915.8 443.2M911.7 445.9Q913.9 445.3 916.3 445.6M912 447.3Q914.5 447.1 916.9 446.1M912.2 448.1Q910.9 448.4 912.8 448.1M912.2 448.1Q914.1 448.2 915.9 447.6M912.7 448.2Q911.9 450.7 912.6 453.3M912.2 449.5Q913.3 450.3 914.4 449.7M912.2 450.7Q914.4 450.4 916.5 450.4M914.4 451.8Q909.6 453.7 913.9 455.8M912.2 453.1Q915.8 455.2 915.2 453.3Q913.6 451.7 912.2 453.1M912.5 454.6Q911.6 458.5 912.7 462.5M912.3 454.6Q915.8 456.7 915.2 454.8Q913.6 453.2 912.3 454.6M912.3 455.9Q915.8 458 915.2 456.1Q913.6 454.5 912.3 455.9M912.3 459Q915.8 461.1 915.3 459.3Q913.6 457.7 912.3 459M914.5 460.3Q909.7 462.3 914 464.4M914.5 462.3Q909.7 464.2 914 466.3M912.2 463.6Q911.4 463.9 912.8 464.1M914.5 463.6Q909.7 465.5 914 467.6M915.6 430.7Q914.6 434.1 916.7 436.8M915.3 430.7Q918.9 432.1 918.1 430.5Q916.3 429.3 915.3 430.7M917.7 432.4Q913.6 435 917.9 436.2M916.1 434.7Q919.7 436 918.9 434.4Q917.1 433.2 916.1 434.7M916.4 436.1Q917.5 436.6 918.4 435.9M916.6 438.4Q916.8 442.4 918.9 446M916.8 438.4Q920.4 439.7 919.6 438.1Q917.8 436.9 916.8 438.4M917.1 439.8Q920.7 441.1 919.9 439.5Q918.1 438.3 917.1 439.8M917.4 441.1Q919.3 441.2 921 440.1M917.7 442.7Q919.7 442.6 921.7 442M918 444.3Q920.4 443.4 923.1 443.7M919 447.5Q917.6 450.8 919.5 454.1M918.7 447.5Q919.8 448.3 920.9 447.8M920.9 448.6Q916 450.6 920.4 452.7M918.7 450.2Q921.5 450.6 924.4 450.1M918.7 451.9Q922.3 454.1 921.7 452.2Q920.1 450.6 918.7 451.9M918.9 454.8Q917.9 458.3 919 461.8M918.7 454.8Q921 455.4 923.2 454.8M918.8 456.6Q922.3 458.8 921.8 456.9Q920.1 455.2 918.8 456.6M918.8 458.8Q921.3 459.2 923.8 459.1M921 460.3Q916.1 462.3 920.5 464.4M919 462.8Q917.7 463.8 919.1 464.6M918.8 464.4Q922.4 466.6 921.8 464.7Q920.2 463 918.8 464.4M889.8 481.4L890 482.3M907.1 478.8L907.2 479.7M913.5 491.2L913.6 492.1M906.3 503.2L906.4 504.1M885.2 499.5L885.6 500.3M887.9 533.8L888.1 534.7M868.8 527.4L868.3 528.2M854.9 535L854.2 535.5M854.8 546.8L854.1 547.3M849.7 536L849 536.5M822.3 531.9L821.9 532.5M823.2 549.6L822.9 550.2M814.4 542.8L814.6 543.6M759.4 500.8L758.5 500.6M768.4 530.7L767.5 530.5M751 472.3L750.5 471.7M745.1 500.2L744.5 499.7M745.2 464.6L744.7 463.9M757.6 453L757.4 452.1M883 401.5L883.7 401.8M876.5 391.9L877.3 392.3M896.6 396.7L897.4 397M901.7 438.1L902.7 438.3M906.3 446L907 445.5M912.2 479.1L912.9 478.8"/><path stroke-width="1.3" d="M893.7 478.3L893.9 478.8M909.7 457.3L909.9 457.8M908.6 470.5L908.8 471M914.4 470.6L914.6 471M909.5 472L909.6 472.4M921.5 477.9L921.6 478.4M896.3 485.9L896.6 486.3M887.6 505.8L887.8 506.3M886.2 513.8L886.4 514.3M884.8 517.1L885.3 517.3M870.1 532.9L870.5 533.2M862.2 534.9L862.7 535.3M871.5 536.9L872 537.2M873 542.4L873.4 542.7M848.3 538L848.7 538.4M854.1 539.3L854.4 539.6M841.3 529.3L841.2 529.9M844.9 539.2L844.8 539.8M826.6 532.7L826.2 532.8M820.7 540.3L820.2 540.5M806.3 537.9L805.8 538.1M805.7 550.8L805.3 550.9M802.4 528.7L802 528.7M796.3 524.8L795.9 524.8M786.4 528.4L785.9 528.4M787.9 538.5L787.3 538.5M786.8 536.5L786.3 536.5M791 544.6L790.6 544.7M780.6 513.5L780.1 513.7M777.8 518.9L777.3 519.1M771.7 513.3L771.2 513.5M771.3 515.4L770.8 515.6M769.9 507L769.3 507.2M766.7 509.8L766.2 510M767.5 508.3L767 508.4M762 497.2L761.6 497.2M758.2 506.3L757.8 506.4M751.6 503.9L751.1 503.9M751.4 510.7L751 510.7M754.8 490.4L754.4 490.8M744 487.6L743.7 488M745.7 493L745.3 493.4M746.4 481.8L745.9 481.8M740.5 491.4L739.9 491.3M741.3 480.1L741 480.4M732.5 482.3L732.1 482.6M756.3 470.5L755.8 470.8M745.3 473.7L744.9 474M743.4 472.8L742.9 473.1M744.1 464.1L743.7 463.9M754.9 454.3L754.5 454.5M733.2 454.9L732.8 455.1M759.3 438.3L759.1 437.7M744.5 450.3L744.4 449.9M750.7 449.6L750.5 449.2M752 441.3L751.8 440.8M746.3 438.7L746.2 438.2M744.5 448L744.3 447.5M740.7 432.3L740.6 431.9M737.7 449.4L737.6 449M734 440.8L733.9 440.4M734 434.4L733.8 433.9M739 419.3L738.5 419.3M756.4 405.9L756 405.8M754.9 395.4L754.7 394.9M766.1 400.7L766.3 400.1M769 396.5L769.3 396M770.6 379.5L770.8 379M876.8 395.2L876.9 394.7M883.8 388.4L883.9 388M889.3 393L889.4 392.5M890.2 392L890.4 391.5M884.6 416.5L885.1 416.8M888.9 410.9L889.3 411.2M896.7 412L897.2 412.3M905.2 428.6L905.6 428.9M899.6 403.9L900 404.2M902.6 451.1L902.8 451.5M902.6 454.1L902.9 454.5M903.6 459.5L903.9 460M916.5 448.2L916.7 448.6M910.4 457.7L910.6 458.1M923.2 462.8L923.4 463.2"/></g><g fill="none" stroke="#161716" stroke-linecap="round" stroke-linejoin="round" clip-path="url(#k1b)"><path stroke-width="2.2" d="M818 412l2 -5M825.4 411.1l2 -5M832.8 411.1l2 -5M840.2 411.7l2 -5M847.6 413.2l2 -5M855 415.5l2 -5M862.4 418.8l2 -5M869.8 423.2l2 -5M877.2 429l2 -5M884.6 436.6l2 -5"/><path stroke-width="2.4" d="M807 512c-6 -8 6 -12 5 -2M832 509c-6 -8 6 -12 5 -2M847 502c-6 -8 6 -12 5 -2"/><path stroke-width="2.6" d="M777 427q6 -8 12 0q6 8 12 0M772 457q5 -7 10 0q5 7 10 0M787 479q6 -8 12 0q6 8 12 0"/><path stroke-width="3" d="M809 414Q817 426 824 440M823.8 419.1Q831.8 431.1 838.8 445.1M838.6 427.2Q846.6 439.2 853.6 453.2M853.4 438.8Q861.4 450.8 868.4 464.8M788.9 484.6q5 -8 9 -1q-3 6 -9 1M799.3 467.3q5 -8 9 -1q-3 6 -9 1M794 434.4q5 -8 9 -1q-3 6 -9 1M793.1 499.9q5 -8 9 -1q-3 6 -9 1M809.7 463.5q5 -8 9 -1q-3 6 -9 1M786.4 499.5q5 -8 9 -1q-3 6 -9 1M798.3 500.9q5 -8 9 -1q-3 6 -9 1"/><path stroke-width="3.2" d="M785.4 453c-6 8 8 10 12 -3M773 476.3c-6 8 8 10 12 -3M785.9 457.4c-6 8 8 10 12 -3M790.8 432.5c-6 8 8 10 12 -3M804.6 470c-6 8 8 10 12 -3M774 445.7c-6 8 8 10 12 -3M789 439.9c-6 8 8 10 12 -3M787.7 444.8l2 -14M808.7 469.3c-6 8 8 10 12 -3M779.3 423.8c-6 8 8 10 12 -3M807.8 462.4c-6 8 8 10 12 -3M800.9 443.7l2 -14M786.6 477.8c-6 8 8 10 12 -3"/><path stroke-width="3.4" d="M770.1 445q6 -9 12 0q6 9 12 0M817.8 461.3q6 -9 12 0q6 9 12 0M801 467.5q6 -9 12 0q6 9 12 0M793.6 506.2q6 -9 12 0q6 9 12 0"/><path stroke-width="3.8" d="M816 396L814 500.4M823.4 395.1L821.4 500.9M830.8 395.1L828.8 501M838.2 395.7L836.2 500.6M845.6 397.2L843.6 499.6M853 399.5L851 498.2M860.4 402.8L858.4 496.2M867.8 407.2L865.8 493.5M875.2 413L873.2 489.9M882.6 420.6L880.6 485.1"/><path stroke-width="4.2" d="M765 435Q779 421 797 417M763 449Q787 461 815 439M765 467Q787 483 817 461M769 491Q797 503 827 487M777 505Q817 527 877 495"/></g><g transform="translate(821.8 318) scale(1.0)"><path d="M0 0L5.5 19L2.8 18L3 88H-2.5L-2.3 18L-5 20Z" fill="#161716"/><g fill="none" stroke="#161716" stroke-linecap="round"><path d="M-4 12Q-12 28 -5 42" stroke-width="4"/><path d="M12 37V52Q16 57 20 52V38M16 40V50" stroke-width="2.8"/><path d="M30.5 58Q33 80 27 86Q15 94 1 82" stroke-width="5.8"/><path d="M-14 57Q-13 84 -5 86Q2 87 1 72" stroke-width="5.8"/><path d="M-32 62Q-34 82 -23 85Q-14 86 -14 66" stroke-width="5.4"/><path d="M-32 64L-36 56" stroke-width="3.5"/><path d="M-22 62L-3 49" stroke-width="2"/><path d="M-44 92Q-22 102 0 90Q20 102 46 93" stroke-width="3.5"/></g><path d="M28 48L34 63L27 62Z" fill="#161716"/><path d="M-33 54L-37 60L-31 62Z" fill="#161716"/></g><path d="M1557 649.7A99.1 99.1 0 1 1 1435 649.7" fill="none" stroke="#161716" stroke-width="4.6"/><circle cx="1496" cy="727.8" r="70" fill="none" stroke="#161716" stroke-width="4.6"/><g fill="none" stroke="#161716" stroke-linecap="round" stroke-linejoin="round" clip-path="url(#k2a)"><path stroke-width="0.8" d="M1566.6 736.9Q1570.8 739.4 1575.3 736.6M1566.5 737Q1570.3 731.7 1567.3 732.4Q1564.6 734.8 1566.5 737M1569.1 733.8Q1571.6 741.6 1575.4 735.1M1571.9 737.4Q1575.6 732.1 1572.6 732.7Q1569.9 735.1 1571.9 737.4M1574.9 737.6Q1575.4 734.3 1574.7 730.9M1577.8 738.1Q1583.7 739.4 1589.8 738.1M1577.8 737.8Q1581.6 732.5 1578.6 733.1Q1575.8 735.5 1577.8 737.8M1580.3 737.9Q1579.9 734.8 1580.3 731.8M1582.4 738.1Q1583.8 736.5 1583.1 734.7M1584.6 734.8Q1587.1 742.6 1590.9 736.1M1590.8 738.3Q1592.2 739.5 1593.8 738.2M1590.7 738.6Q1592 735.3 1591.2 731.8M1593.4 738.8Q1594.6 735.3 1594.7 731.6M1566.5 737.4Q1574.8 737.5 1582.3 741.3M1565.8 740.8Q1570.2 734 1572.1 741.2M1571.7 738.5Q1572.6 740.4 1571.4 741.9M1580.2 740.3Q1582.4 746.2 1579.7 744.8Q1577.8 741.9 1580.2 740.3M1583.5 741.7Q1588.6 739.9 1592.6 743.1M1585.5 741.3Q1584.6 745.4 1583.5 749.4M1587.4 741.7Q1587.6 745 1585.9 747.8M1561.7 755.1Q1569 759 1577.3 760.1M1561.6 755.3Q1567.6 750.4 1563.9 750.2Q1560.1 752.1 1561.6 755.3M1568.5 757.7Q1570.6 756.2 1570.3 754M1573.6 759.4Q1575.4 756.1 1576.9 752.7M1576.8 760.5Q1578.7 757.2 1578.9 753.3M1578.3 760.4Q1581.5 764.3 1586.4 763.1M1562.7 756Q1557.2 759.1 1555.4 765.3M1556.1 763.8Q1559 767.9 1563.6 770M1554.7 765.8Q1548.1 771.3 1544 778.8M1551.9 768.9Q1552.4 771.3 1554.5 771.8M1550.3 770.8Q1553.4 772.5 1556.1 774.7M1548.7 772.7Q1551.1 779.7 1552.5 776.5Q1552.1 772.4 1548.7 772.7M1542 780.9Q1538.1 783.9 1536.2 788.6M1543.1 785.5Q1534.3 782.5 1537.8 790.4M1575 761.1Q1569.9 767.9 1566.8 775.9M1578 763Q1570.2 761.6 1574.1 767.8M1576.8 765Q1569 763.6 1572.9 769.8M1575.5 767.1Q1567.7 765.7 1571.6 772M1570.5 769.1Q1573.3 770.4 1575.3 773.1M1568.8 771.8Q1569.6 773.7 1571.4 773.8M1567 774.7Q1569.8 775.9 1571.7 778.4M1565.9 776.8Q1562.6 778.9 1562.9 783.3M1564.4 779Q1567.3 784.6 1568.1 781.7Q1567.3 778.3 1564.4 779M1563.4 780.7Q1564.2 782.6 1566 782.7M1561.8 782.5Q1553.7 787.9 1548.8 796.9M1557.8 786.7Q1560 791.4 1564.5 794.1M1552.6 791.4Q1555.6 793.6 1557.8 796.7M1550.1 793.5Q1553.4 797.9 1557 801.9M1547.3 797.4Q1543 796 1544.1 800.6M1549.5 799.8Q1540.3 795.2 1542.8 804.4M1543.5 799.5Q1545.8 802.7 1549.3 804.9M1535.3 787.1Q1540.4 793.9 1542.9 802.3M1532.4 788.8Q1540.5 787.5 1536.3 793.9M1537.1 790.1Q1534.2 791.2 1532.2 794M1535.2 793.7Q1543.4 792.5 1539.2 798.8M1539.4 794.1Q1536 796.1 1533 798.6M1539.4 800.9Q1547.5 799.6 1543.3 806M1543.7 803.3Q1547.3 806.5 1548.3 811.1M1547.7 808.5Q1544.7 809.7 1542.5 812.2M1528.1 791.3Q1531.4 797.3 1533.2 803.9M1528 791.3Q1524.3 793 1520.3 794.1M1533.3 803.6Q1529.1 804.5 1525.3 806.4M1533.8 806.7Q1538.4 810.6 1538.3 816.6M1532.9 811.2Q1541 810.9 1536.1 816.7M1537 812.4Q1533.7 814.2 1530.3 815.8M1538.3 815.4Q1534.9 816.4 1531.8 818.1M1511.7 797.2Q1512.7 804 1515.7 810.2M1516.1 798.6Q1508.6 804.4 1517.3 806M1513.3 803Q1520.6 805 1518.6 801.9Q1515 799.9 1513.3 803M1516.5 810.6Q1516.9 817.3 1519.9 823.2M1515.6 810.9Q1522.9 812.9 1521 809.8Q1517.3 807.8 1515.6 810.9M1502.8 798.7Q1503.1 809.5 1507.3 819.8M1508.6 805Q1499.9 810.2 1508.9 812.9M1509.2 808.5Q1500.5 813.6 1509.4 816.4M1506.5 820.9Q1505.5 823.4 1509 825.3M1507 820.8Q1512.2 818.9 1517.9 820.2M1511.6 822.9Q1502.9 828.1 1511.8 830.8M1503.6 800.3Q1499.2 798.3 1494.5 799.3M1503.7 799.8Q1498.3 806.1 1502.2 805.6Q1506 802.9 1503.7 799.8M1493 798.3Q1488.6 794.9 1483.4 796.7M1492.4 802.5Q1490.1 792.2 1484.4 800.2M1488.5 797.5Q1483.1 803.8 1487.1 803.3Q1490.8 800.6 1488.5 797.5M1481.9 797.1Q1474.9 794 1467.2 795.1M1505.1 812.9Q1501 810.6 1496.8 813.9M1505.1 813.3Q1501.1 819.5 1504.5 818.6Q1507.4 815.8 1505.1 813.3M1502.8 817.1Q1499.6 808.4 1495.6 816M1500.1 813.2Q1498.6 815.1 1499.6 817M1496.8 813.1Q1496.8 816.9 1497.3 820.6M1493.9 813.5Q1488.5 811.9 1483 814.1M1490.2 816.8Q1487 808.1 1483.1 815.7M1488.2 813Q1487.8 816.3 1487.9 819.7M1483.2 812.4Q1476.2 808.6 1467.8 810M1483.1 812.8Q1481.2 817.5 1481.1 822.7M1480.4 812.1Q1479 816.5 1478.1 821M1474.7 810.4Q1468.7 815.9 1472.6 815.9Q1476.5 813.7 1474.7 810.4M1465.6 808.9Q1464.3 805.7 1461.6 807.7M1459.7 789Q1453.1 795.1 1451.9 804M1463.2 790.8Q1453.2 789.7 1458.7 797.3M1456.9 793.9Q1461.1 795.1 1464.8 797.3M1451.4 804.8Q1448 808.4 1447.3 813.3M1455.1 806.7Q1445 805.6 1450.5 813.1M1449.7 807.8Q1453.9 814.7 1454.6 810.9Q1453.3 806.7 1449.7 807.8M1451.8 812.9Q1441.8 811.8 1447.3 819.4M1459.2 788.7Q1457.3 794 1452.5 797.2M1452.5 797.8Q1450.1 802.7 1445.5 806.1M1452.6 797.8Q1449.8 795.3 1446.1 794M1447.2 805.5Q1445 805.6 1444 803.9M1445.1 807.3Q1445 809.7 1442.9 810.6M1444 810.1Q1440.4 808.7 1437.9 805.9M1451.2 783.1Q1447.1 789.6 1440.2 793.5M1446.8 783.1Q1450.2 790.1 1443.2 788.1M1443.7 786.4Q1447.2 793.4 1440.2 791.4M1444.5 790.3Q1438.4 789.1 1440.9 787.6Q1444.4 787.4 1444.5 790.3M1439.5 795.9Q1436.6 800 1432.2 802.7M1439.4 795.8Q1436.6 793.1 1433.7 790.6M1434.8 796Q1438.3 803.1 1431.3 801M1433.1 802.7Q1430.3 799.8 1427.3 797.3M1438.7 769.9Q1431.9 774.2 1427.2 781M1435.2 772.3Q1438.1 775.2 1439.7 779M1430.2 776.5Q1431.3 784.6 1433.5 781.4Q1433.9 776.8 1430.2 776.5M1425.1 780.2Q1419.3 781.3 1417.6 787.3M1419.4 785.4Q1421.6 789.2 1424.2 792.8M1433.4 761.6Q1425.8 765.6 1419.4 771.4M1433.2 766.4Q1425.6 760.8 1426.4 769.5M1427.8 765.2Q1429.8 769 1432.5 772.4M1424.6 767.2Q1424.7 774.7 1427.1 772Q1428 768 1424.6 767.2M1422.4 768.6Q1422.5 776.1 1424.9 773.4Q1425.8 769.3 1422.4 768.6M1420.4 769.8Q1420.5 777.3 1422.9 774.7Q1423.8 770.6 1420.4 769.8M1417.3 772.4Q1412.4 772.1 1410.9 777.1M1417 772Q1417 779.5 1419.4 776.8Q1420.4 772.7 1417 772M1414.2 773.7Q1416.7 777 1418.2 781M1433 760.7Q1423.7 767.3 1413 770.8M1433.3 761.5Q1431.9 758 1430.1 754.6M1429.8 763.1Q1423 758.5 1426.9 757.9Q1431.2 759.5 1429.8 763.1M1427.7 764.1Q1420.9 759.5 1424.7 758.9Q1429 760.5 1427.7 764.1M1422.3 766.6Q1419.9 765.3 1420 762.9M1417 764.2Q1417.6 774.6 1410.1 768.6M1411.7 771.6Q1411.2 774.5 1408 771.8M1411.7 771.4Q1409.8 767.4 1407.8 763.5M1409 772.7Q1406.7 768.7 1404.2 764.9M1426.7 744.1Q1418.7 746.1 1411.2 750M1426.8 744.5Q1425.2 750.9 1427.8 749.2Q1429.5 745.9 1426.8 744.5M1423.8 745.4Q1425.6 748.9 1426.7 752.5M1421.8 746.1Q1422.8 749.1 1422.7 752.5M1419.4 750.4Q1414.2 743.9 1413 751.5M1416.3 747.8Q1414.7 754.2 1417.3 752.4Q1419 749.2 1416.3 747.8M1410 749.5Q1405.6 749.8 1402.1 752.8M1410.1 749.7Q1411.5 753.1 1411.8 756.8M1406.8 750.7Q1406 752.8 1407.4 754.2M1402.3 752.1Q1401.6 754.2 1402.9 755.5M1425.2 735.1Q1416.7 734.9 1408.8 738.5M1425.9 739Q1421.4 731.5 1419 739.3M1407.2 738.1Q1402.6 737.9 1398.4 740.3M1405.1 738.9Q1406.3 742.1 1405.3 745.5M1403 739.3Q1401.9 741.3 1403.1 743M1399.2 740Q1396.6 746.4 1399.6 745Q1401.8 741.8 1399.2 740M1425.2 734.9Q1418.4 736.6 1411.5 734.6M1413.1 735.8Q1413.3 730.8 1411.9 725.9M1408.2 735.6Q1403.2 737.9 1398 736.2M1425.7 717Q1418.2 714 1410.2 715.9M1423.5 716Q1419.3 721.4 1422.6 720.8Q1425.5 718.4 1423.5 716M1419.7 719.2Q1417.4 710.8 1413.1 717.6M1417.6 719Q1415.3 710.6 1411 717.4M1412.5 714.8Q1412.2 718.8 1410.7 722.7M1408.3 715.2Q1403.6 712.5 1398.6 713.8M1404.9 717.7Q1402.6 709.3 1398.3 716.1M1401.7 713.8Q1400.4 716.9 1401.5 720.4M1426.3 713.7Q1419.7 714 1413.9 710.9M1414.4 711.1Q1413.5 709.1 1414.8 707.6M1411.2 710Q1405.1 710.1 1400 706.4M1411.1 710.2Q1411.1 705.8 1413.2 701.8M1406.4 709Q1404.5 702.7 1407.2 704.3Q1409 707.5 1406.4 709M1428.9 704Q1421.6 702.3 1416.1 696.7M1426.2 702.3Q1425.6 699.9 1427.3 698.5M1424.2 701.4Q1426.2 698.3 1427.6 694.8M1423.9 697Q1417.3 703.7 1416.8 695M1420.4 699.7Q1422.3 696.8 1422.6 693.2M1419.6 695.1Q1412.9 701.8 1412.5 693.1M1412.7 696.4Q1408 695.4 1404.5 691.6M1414.2 692.8Q1407.6 699.5 1407.1 690.8M1407.1 689.7Q1400.4 696.4 1400 687.7M1433 694.7Q1424 690.9 1416.8 684.3M1433.2 694.4Q1435.6 691 1436.8 686.8M1414.6 682Q1410.9 683.2 1410.5 679.2M1443.7 679.5Q1437.6 672.8 1429.1 669M1431.9 675.2Q1434.7 666.6 1427.1 670.1M1431.5 670.1Q1429.3 670.6 1428.8 672.7M1429.6 668.5Q1422.9 670.8 1426 672.2Q1429.9 671.7 1429.6 668.5M1428.6 668.3Q1427 663.5 1421.7 663.3M1425.6 665.3Q1418.9 667.7 1422 669Q1426 668.6 1425.6 665.3M1421.1 666.4Q1423.8 657.9 1416.2 661.3M1443.9 679.4Q1435.3 674.6 1430.8 665.8M1441 677.1Q1444.6 674 1447.9 670.5M1433.2 669Q1435.2 661.3 1437 664.6Q1436.9 669.1 1433.2 669M1429.2 664.8Q1425.4 663.9 1425.7 659M1429.2 664.8Q1432.9 661.2 1436.4 657.3M1427.2 662.8Q1429.2 655.1 1431 658.4Q1430.9 662.9 1427.2 662.8M1427.7 657.2Q1418.4 661.1 1421.5 652.3M1457 668.4Q1453.4 662 1448 657M1457.2 668.1Q1453.1 669.6 1450.8 673.4M1449.7 658Q1446.3 659.4 1443.4 661.4M1447.3 655.7Q1446.6 649.2 1440.8 646.4M1447.8 655.4Q1440.5 656 1443.3 658.2Q1447.3 658.7 1447.8 655.4M1442.6 654.9Q1447.5 647.1 1439.1 648.6M1438.2 649Q1443.1 641.2 1434.7 642.7M1457.5 668Q1451.3 661.8 1450 652.9M1457.2 668.1Q1460.7 666.6 1463.8 664.5M1452.4 659.6Q1455.4 657.8 1458.1 655.6M1447.7 651.5Q1444.1 648.9 1444.8 643.8M1447.8 651.5Q1451.3 645.2 1452.1 648.5Q1451.1 652.4 1447.8 651.5M1447.8 643.7Q1438.8 645 1443.5 638M1537.8 670.2Q1544 661.8 1547.9 651.8M1537.7 670.2Q1536.8 667.6 1534.3 667.4M1539.7 667Q1536.1 665.2 1533.2 662.4M1542.4 662.8Q1538.7 655.3 1537.6 659.1Q1538.6 663.6 1542.4 662.8M1545.6 657.7Q1544.7 655.1 1542.2 654.9M1550.1 649.3Q1554.2 650.1 1551.3 646.5M1550.7 649.7Q1546.8 647.5 1543.9 643.9M1544.2 675.5Q1548.9 674.3 1549.3 669.5M1542.1 673.8Q1549.6 676.3 1546.6 669.6M1550.3 669.3Q1556.7 665 1558.7 656.9M1547.6 667.1Q1555.1 669.6 1552.1 663M1553.2 665.4Q1552.7 663.5 1551 663.1M1559.2 658.2Q1558.7 656.2 1556.9 655.8M1560.4 657.2Q1562.3 656.9 1561.6 654.5M1544.9 676.2Q1547.9 671.2 1552.9 668.4M1550.4 676.1Q1546.6 666.7 1555.4 669.9M1552 668.9Q1554.5 669.3 1555.2 671.5M1554.2 668.1Q1558.1 661.3 1564.8 657.4M1561.7 659.7Q1564 662.9 1567.9 664.6M1555.8 689.3Q1562.8 685.8 1568.2 680.1M1560.7 686.1Q1559.3 682.6 1557 679.7M1562.5 684.9Q1561.5 681.7 1559.2 679.5M1569.9 679.6Q1574.7 677.5 1577.4 672.6M1569.9 679.5Q1569.4 673.3 1567.6 675.6Q1567 679 1569.9 679.5M1576 671Q1582.6 675.2 1581.4 668M1560.5 697.7Q1568.7 693.4 1576.1 687.8M1563.1 695.9Q1562.1 691.5 1558.9 688.4M1564.6 690.9Q1571.4 696.5 1571 688.4M1568.6 692.9Q1568.9 685.9 1566.5 688.3Q1565.5 692 1568.6 692.9M1578.3 686.6Q1582.8 688.1 1584.2 684.1M1581.3 685.8Q1579 682.9 1577.3 679.7M1583.3 684.7Q1581.6 681.5 1579.9 678.3M1563.8 706.3Q1570.3 705.4 1575.1 700.4M1567 704.6Q1566.6 699.9 1564.1 696.1M1569.6 703.6Q1571 695.3 1567.9 697.8Q1566 702 1569.6 703.6M1578.2 699.4Q1584.3 699.3 1588.5 694.4M1584.2 697.8Q1582.7 692.6 1581.4 687.4M1563.8 706.5Q1568.4 702.8 1574.1 703.8M1567.6 705.2Q1573.1 710.5 1569.5 710.4Q1565.8 708.2 1567.6 705.2M1569.9 704.6Q1570.6 709.1 1572.9 713.3M1576.2 702.7Q1582 700.5 1588.3 700.7M1577.3 706.9Q1578.5 697.3 1584.4 704.1M1588.8 704Q1590 694.4 1595.9 701.2M1566.1 715.6Q1571.9 712.8 1578.2 714.9M1569.3 714.8Q1570.7 718.9 1571.2 723.1M1580.1 713.2Q1586.4 710.4 1593.1 712.2M1588.6 712.5Q1592.5 717.4 1589.6 716.9Q1586.8 714.8 1588.6 712.5M1591.6 715.5Q1593.6 707.8 1597.6 714M1566.9 733.3Q1571 735.3 1575.1 733M1566.9 733.4Q1568.2 728.8 1567.3 724.3M1572.6 729.7Q1575.8 738.2 1579.6 730.8M1578.2 732.9Q1585.7 734.7 1593.2 733.4M1581.7 733.6Q1581.5 729.1 1582.6 724.6M1589 733.7Q1592.8 727.7 1589.5 728.6Q1586.7 731.3 1589 733.7M1592.3 730Q1595.4 738.5 1599.3 731M1565.6 742.5Q1569.9 744.9 1574.8 742.8M1566.2 738.3Q1568.5 748.4 1574 740.5M1572.7 739.2Q1575 749.4 1580.5 741.5M1575.8 743Q1580.6 747.5 1586.5 745M1576.3 739.8Q1578.6 749.9 1584.1 742M1582.2 745Q1584 740.4 1583.4 735.4M1589.9 745.1Q1590.9 747.9 1592.6 746.3"/><path stroke-width="1" d="M1567 728.3Q1569.9 727.6 1572.6 729M1567.1 728.2Q1566.7 730.6 1566.7 733M1569 728.2Q1569.8 729.5 1569.2 730.7M1571 728.3Q1573.3 732.3 1571.2 731.6Q1569.5 729.8 1571 728.3M1573.6 728.7Q1577.9 728 1582 729.5M1574.9 728.5Q1575.8 729.7 1575.1 730.9M1576.4 728.6Q1576.2 731.3 1575.9 734M1578.3 731.1Q1580.7 725.7 1582.8 730.6M1580.2 731.1Q1582.6 725.8 1584.8 730.7M1583.7 729.2Q1589.1 727.6 1594.3 729.8M1583.7 728.9Q1586 732.9 1583.9 732.2Q1582.2 730.3 1583.7 728.9M1585.1 728.9Q1585.4 731.5 1584.7 734.1M1587.4 731.4Q1589.8 726.1 1592 731M1589.3 731.5Q1591.6 726.2 1593.8 731.1M1591.9 729.2Q1592.1 731.6 1591.6 734M1593.5 729.3Q1593.5 732.4 1593.5 735.4M1566.1 739.5Q1568.6 740.8 1571.5 739.5M1566.4 737.2Q1567.8 742.9 1570.8 738.4M1568.4 739.9Q1569.6 737.7 1568.9 735.2M1569.6 740.1Q1570.1 737.6 1570.2 735.1M1571.5 737.9Q1572.9 743.6 1576 739.1M1572.1 740.2Q1576.5 742.2 1581.3 740.9M1572.4 738Q1573.8 743.7 1576.8 739.2M1575.2 740.8Q1576.3 739.7 1575.8 738.5M1577.6 741.1Q1578.3 738.4 1579.1 735.6M1580.7 741.5Q1581.5 738.9 1581.9 736.3M1581.7 741.4Q1585.9 743.1 1590.5 741.9M1582 739.3Q1583.4 744.9 1586.4 740.5M1584.1 742Q1584.8 739.5 1585.2 737M1585.9 742.2Q1587 741.1 1586.5 739.9M1588.4 740.1Q1589.8 745.8 1592.9 741.3M1590.6 740.4Q1592 746.1 1595 741.6M1592.4 742.5Q1592.6 743.8 1593.2 742.5M1592.3 743Q1592.5 740.4 1593.1 737.8M1564.8 745.7Q1569.8 747.4 1575.2 747.7M1565.3 743.2Q1566.2 749.1 1569.7 744.8M1567.1 743.6Q1568 749.5 1571.5 745.2M1570.9 744.4Q1571.8 750.3 1575.3 746M1573.9 747.6Q1577.1 744.2 1574.9 744.4Q1572.7 745.8 1573.9 747.6M1576.1 748.1Q1582.7 749.9 1589.3 750.9M1576.1 748.1Q1577.3 745.3 1577.3 742.3M1578.5 748.6Q1579.3 746.3 1579.7 744M1581.3 746.7Q1582.2 752.6 1585.7 748.3M1583.2 749.7Q1586.4 746.3 1584.2 746.4Q1582 747.8 1583.2 749.7M1585.8 747.7Q1586.7 753.6 1590.2 749.3M1587.3 748Q1588.2 753.9 1591.7 749.6M1589.2 751Q1589.6 748.5 1590.1 746M1590.9 751Q1590.8 753 1591.5 751.4M1590.8 751.3Q1592.1 748.7 1592.2 745.9M1564.5 746.7Q1569.9 746.9 1574.4 750.3M1564.6 746.3Q1565.8 751.1 1563.8 749.8Q1562.6 747.4 1564.6 746.3M1565.7 749.4Q1569.6 744.5 1570.6 750.2M1570.3 748.1Q1568.7 751.1 1568.3 754.5M1570.9 751Q1574.8 746.1 1575.7 751.8M1574.1 749.3Q1574 752.1 1573 754.7M1575.9 750.2Q1579.1 749.2 1581.2 752M1576 749.9Q1575.8 753.2 1574.5 756.2M1577.6 750.4Q1578.8 755.1 1576.8 753.8Q1575.6 751.4 1577.6 750.4M1579.1 753.6Q1583 748.7 1583.9 754.4M1582.1 752.1Q1586.9 751.6 1590.6 754.7M1582.2 751.8Q1581.6 754.5 1580.3 757.1M1584.5 752.5Q1584.4 755.1 1583.5 757.5M1586.5 753.1Q1585.5 755.8 1584.5 758.5M1587 756Q1590.9 751.1 1591.8 756.8M1589.1 754Q1588.8 756.3 1588.4 758.6M1563.9 752.2Q1560.4 756.3 1559.7 761.7M1563.5 752Q1565.2 753.4 1567.1 754.6M1561.7 755.7Q1564.3 759.7 1564.7 757.5Q1563.8 755 1561.7 755.7M1563.4 758.1Q1557.4 757.6 1560.8 762M1560.1 759.3Q1562.6 761.2 1565.9 761.7M1559.4 760.7Q1562 764.7 1562.4 762.4Q1561.5 759.9 1559.4 760.7M1558.8 761.7Q1556.8 762.3 1558.1 764.6M1558.9 761.7Q1561.5 762.3 1563.4 764.5M1557.8 764Q1560.5 768 1560.8 765.7Q1559.9 763.2 1557.8 764M1557.9 764.6Q1554.2 767.4 1552.4 771.7M1557.7 764.4Q1559.9 765.5 1561.8 767.3M1558.1 767.3Q1553.2 766 1555.3 770.2M1555.7 767.1Q1557.2 770.8 1557.9 769Q1557.5 766.8 1555.7 767.1M1554.8 768.3Q1555.2 769.5 1556.4 769.7M1553.9 769.4Q1554.3 770.7 1555.5 770.9M1552.8 771.1Q1554.6 772.5 1556.7 773.6M1551.7 772.2Q1549.5 772.9 1550.3 775.8M1551.9 772.3Q1553.4 776 1554.1 774.2Q1553.7 772 1551.9 772.3M1551.2 773.3Q1552.7 777 1553.3 775.2Q1553 773 1551.2 773.3M1551.9 775.8Q1547 774.5 1549.2 778.7M1570.2 754.5Q1566.3 758.4 1565.8 763.9M1572.2 755.4Q1566.1 755 1569.6 759.4M1569.2 755.9Q1571.8 759.9 1572.2 757.6Q1571.3 755.1 1569.2 755.9M1568.4 757.6Q1569.1 759 1570.5 758.9M1569.9 760.1Q1563.9 759.7 1567.4 764.2M1567.1 760.3Q1569.5 760.8 1571.5 762.4M1566.3 761.9Q1567 763.3 1568.5 763.3M1565.1 764.1Q1563.6 765.6 1564.2 768.1M1565.3 764.1Q1567.9 768.2 1568.3 765.9Q1567.4 763.4 1565.3 764.1M1566.5 767.5Q1560.4 767 1563.9 771.5M1563.9 768.1Q1560.2 770 1559.8 774.4M1563.5 767.8Q1565.2 771.8 1565.9 769.9Q1565.5 767.5 1563.5 767.8M1562.2 769.6Q1563.8 771.3 1565.9 772.1M1562.7 772.7Q1557.5 771.3 1559.8 775.8M1560 772.7Q1562.4 774.1 1564.4 776.1M1558.3 774.9Q1555.9 776.9 1555.4 780.3M1558.3 775Q1558.7 776.3 1560 776.5M1559.4 777.3Q1554.1 775.9 1556.5 780.4M1558.2 778.9Q1553 777.5 1555.3 782M1555.6 778.7Q1557.5 780 1559.5 781.1M1576.7 756.8Q1574.3 759 1574.2 762.4M1576.3 756.7Q1577.1 758.1 1578.5 758M1575.4 758.6Q1578.1 762.7 1578.5 760.4Q1577.6 757.8 1575.4 758.6M1574.5 760.6Q1577.2 764.7 1577.5 762.4Q1576.6 759.8 1574.5 760.6M1572.7 763.7Q1569.5 766.8 1569.5 771.4M1572.9 763.8Q1575.6 764.6 1578.1 765.8M1571.8 766.2Q1572.6 767.6 1574 767.6M1570.7 768.5Q1571.5 769.9 1572.9 769.9M1569.6 771.4Q1566.6 774.5 1564.7 778.3M1569.4 771.3Q1569.8 772.7 1571.1 772.9M1568.5 772.5Q1569.8 774.5 1571.8 775.6M1569.4 775.3Q1564 773.8 1566.4 778.4M1566.6 775.2Q1567 776.6 1568.3 776.8M1564 778.4Q1560.9 780.7 1560.1 784.6M1564.1 778.5Q1566.4 779.9 1568.2 782.2M1563.3 779.6Q1565 783.7 1565.7 781.8Q1565.4 779.3 1563.3 779.6M1562.3 781Q1564.3 782.3 1565.8 784.1M1582.9 759Q1581.2 761 1580.9 763.6M1585 760Q1579 759.6 1582.4 763.9M1581.3 762Q1583.9 765.9 1584.3 763.7Q1583.4 761.2 1581.3 762M1580.5 764.5Q1578.2 766.9 1577.9 770.2M1580.2 764.3Q1582.8 768.3 1583.1 766.1Q1582.2 763.6 1580.2 764.3M1581.3 767.7Q1575.4 767.3 1578.8 771.6M1578.2 768.6Q1580.8 772.5 1581.1 770.3Q1580.2 767.8 1578.2 768.6M1577 771.6Q1575.2 772.7 1576 775.1M1576.8 771.5Q1579.4 775.4 1579.8 773.2Q1578.9 770.7 1576.8 771.5M1575.6 775Q1572.4 776.8 1571.7 780.4M1575.3 774.8Q1577.3 777.4 1580.2 778.9M1574.1 776.5Q1576.2 777.9 1578.4 779.2M1575.1 779.4Q1569.1 777.8 1571.7 782.9M1571.9 779.4Q1573.3 781.5 1575.6 782.3M1570.8 781.2Q1567.7 784.1 1566.3 788.2M1569.5 782.8Q1571.3 787.2 1572.1 785.1Q1571.7 782.4 1569.5 782.8M1568.6 784Q1571.5 785.3 1573.5 787.9M1567.2 785.9Q1567.6 787.4 1569 787.6M1566.4 786.9Q1568.1 788.7 1570.2 789.8M1565.7 789Q1564.3 788.3 1565.1 789.1M1565.2 788.7Q1566.6 790.8 1569.4 791.2M1549.6 775.3Q1546.6 777.5 1544 780.2M1549.6 775.4Q1550.2 779.2 1551.2 777.7Q1551.4 775.5 1549.6 775.4M1548.3 776.4Q1548.9 780.3 1549.9 778.8Q1550.1 776.6 1548.3 776.4M1546.8 777.7Q1546.8 779 1547.9 779.5M1547 780.2Q1542.6 777.8 1543.7 782.3M1544.6 779.5Q1545.2 783.4 1546.2 781.8Q1546.4 779.7 1544.6 779.5M1543.5 780.5Q1539.5 782.4 1537.2 786.3M1544.8 782Q1540.5 779.6 1541.5 784.1M1541.9 781.8Q1543.2 783.2 1544.6 784.6M1540.6 782.8Q1540.7 784.1 1541.7 784.6M1539.5 783.7Q1540.8 785.7 1542.8 787.1M1539.4 786.5Q1535 784.1 1536.1 788.6M1538.3 787.4Q1533.9 785 1535 789.5M1536 786.5Q1533.9 787.4 1532.8 789.5M1536.1 786.6Q1536.7 790.4 1537.7 788.9Q1537.9 786.7 1536.1 786.6M1534.9 787.5Q1535.5 791.4 1536.5 789.9Q1536.7 787.7 1534.9 787.5M1534.6 790.5Q1530.3 788 1531.3 792.5M1554.8 780Q1550.7 781.9 1548.2 785.9M1556.1 781.5Q1551.7 779 1552.8 783.5M1553.5 780.9Q1554.1 784.8 1555.2 783.2Q1555.4 781 1553.5 780.9M1552.7 781.5Q1553.6 783.6 1555.1 785M1551.4 782.6Q1551.5 783.9 1552.5 784.4M1550.3 783.6Q1550.8 787.5 1551.9 785.9Q1552.1 783.7 1550.3 783.6M1548.6 784.9Q1548.7 786.2 1549.8 786.7M1547.5 786.5Q1544.1 787 1542.8 790.1M1548.6 787.7Q1544.2 785.3 1545.2 789.8M1546.1 787.1Q1547.7 788.4 1548.3 790.7M1545.3 787.7Q1546.5 790 1548.8 791.5M1543.1 789.5Q1544.2 792 1546.4 793.6M1542.5 790.2Q1539.3 791.9 1537.4 794.9M1542.4 790.1Q1542.9 794 1544 792.5Q1544.2 790.3 1542.4 790.1M1541.4 790.9Q1542.9 793.1 1544.9 794.9M1539.8 792.3Q1539.9 793.5 1540.9 794M1540.2 794.6Q1535.8 792.2 1536.8 796.7M1539.3 795.3Q1535 792.9 1536 797.4M1560.1 784.7Q1557.8 785.6 1556.6 787.8M1559.9 784.4Q1560.4 788.2 1561.4 786.7Q1561.6 784.6 1559.9 784.4M1555.3 788.4Q1552.2 790.4 1550.1 793.4M1555.2 788.3Q1555.3 789.5 1556.3 790M1552.7 790.3Q1554.3 791.7 1555.4 793.5M1551.2 791.6Q1552.2 793.8 1553.8 795.4M1551.4 794Q1547.2 791.6 1548.2 796M1548.5 793.6Q1545.4 795.3 1543.3 798.2M1548.6 793.7Q1550.5 795.4 1551.7 797.6M1547.9 794.3Q1548.4 798.1 1549.4 796.6Q1549.6 794.5 1547.9 794.3M1546.4 795.6Q1546.4 796.8 1547.5 797.3M1543.1 799Q1540.6 799.1 1540 801.5M1542.7 798.6Q1544.1 800.8 1545.9 802.6M1543.1 800.8Q1539 798.5 1540 802.8M1541.1 799.9Q1542.9 801.6 1544.3 803.5M1565.4 789.3Q1560.8 791.6 1558.1 795.9M1565 788.9Q1566 793.7 1567.2 791.7Q1567.2 789 1565 788.9M1564.5 793Q1558.8 790.4 1560.5 795.9M1563.4 794.1Q1557.7 791.5 1559.4 797M1561.7 795.6Q1556.1 793 1557.8 798.5M1558.8 794.9Q1561.1 797.1 1563.3 799.3M1556.2 797Q1554.4 796.8 1555.3 799.3M1556.4 797.2Q1557.7 799.6 1559.9 801M1554.9 799Q1551.3 800.4 1548.8 803.4M1554.8 798.8Q1555 802.8 1556.2 801.3Q1556.6 799.1 1554.8 798.8M1553.9 799.4Q1553.9 800.7 1554.9 801.3M1552.2 800.6Q1552.5 804.6 1553.7 803.1Q1554.1 800.9 1552.2 800.6M1551.1 801.4Q1551.1 802.7 1552.1 803.2M1549.6 802.4Q1549.9 806.4 1551.1 804.9Q1551.5 802.7 1549.6 802.4M1547.7 804.1Q1544.4 804.2 1543.5 807.4M1548.7 805.6Q1544.5 802.8 1545.2 807.5M1546.9 806.9Q1542.7 804.1 1543.4 808.8M1544.7 805.9Q1545 809.9 1546.2 808.4Q1546.6 806.2 1544.7 805.9M1543.8 806.5Q1545 808.8 1546.7 810.7M1527.8 791.3Q1529.8 796.7 1532.9 801.5M1527.4 791.6Q1530 791 1532.2 789.6M1528.4 793.4Q1532.3 793.6 1531 792.3Q1528.9 791.7 1528.4 793.4M1528.9 794.5Q1530.4 793.2 1532 792.4M1531.5 794.7Q1528.2 798.6 1532.9 798.4M1530.5 797.3Q1531.8 797.5 1532.4 796.6M1531.2 798.7Q1532.5 798.9 1533.2 798M1533.6 798.7Q1530.3 802.5 1535 802.4M1534.5 800.4Q1531.2 804.2 1535.9 804.1M1533.3 802.2Q1534.1 805.8 1537.1 808.1M1533.1 802.3Q1534.4 802.5 1535.1 801.5M1533.8 803.6Q1535.9 802.5 1538.1 801.9M1534.7 805.2Q1536 805.4 1536.7 804.5M1537.2 805.3Q1533.9 809.2 1538.6 809M1536.3 808.1Q1540.3 808.3 1538.9 806.9Q1536.8 806.3 1536.3 808.1M1536.9 809Q1538 812.6 1540.7 815.4M1538.6 808Q1535.3 811.9 1540 811.7M1537.6 810.5Q1541.6 810.7 1540.2 809.4Q1538.1 808.8 1537.6 810.5M1538.6 812.4Q1540.5 810.8 1542.7 809.9M1539.3 813.6Q1543.2 813.8 1541.9 812.5Q1539.8 811.8 1539.3 813.6M1540.3 815.5Q1542.5 814.2 1544.6 812.7M1522.1 793.9Q1523.4 798.7 1525.9 803M1524.2 793Q1519.8 797.3 1525.5 797.6M1522.5 795.4Q1525.3 794.2 1528.4 793.5M1525.7 796.6Q1521.4 800.9 1527 801.2M1524 799Q1525.6 799.4 1526.5 798.3M1524.7 800.7Q1527.6 800.2 1530.1 799.1M1527.9 801.6Q1523.6 805.9 1529.2 806.2M1526.5 804.9Q1527.4 808.1 1529.8 810.5M1526.6 804.9Q1528.1 805.2 1529 804.2M1529.8 806Q1525.5 810.3 1531.1 810.6M1528.2 808.7Q1531.3 808.2 1533.8 806.5M1528.8 810.1Q1533.6 810.8 1532.2 809Q1529.7 808 1528.8 810.1M1529.5 811.3Q1529.3 814.7 1532.1 816.8M1531.7 810.3Q1527.4 814.6 1533 814.9M1532.4 811.9Q1528 816.2 1533.7 816.5M1530.7 814.5Q1533.2 813.2 1536.1 812.8M1531.8 816.9Q1534.5 815.4 1537.7 815M1532.9 818.6Q1531.7 819.3 1533.3 818.8M1534.9 817.7Q1530.6 822 1536.2 822.3M1516.5 795.8Q1516.5 800 1519.2 803.3M1516.1 795.9Q1520.4 796.9 1519.2 795.2Q1517 794.1 1516.1 795.9M1516.7 797.7Q1518.6 796.8 1520.5 796.1M1517.1 798.8Q1518.4 799.2 1519.3 798.3M1517.7 800.5Q1519 800.9 1519.9 800M1518.3 802.4Q1520.3 801.7 1522.2 800.8M1519.2 805.3Q1519.7 810.9 1523.2 815.5M1519.3 805.2Q1521.5 805.1 1523.6 804.4M1519.7 806.4Q1521.8 805.4 1524.2 805.3M1520.1 807.6Q1522.7 806.3 1525.7 806.1M1520.7 809.4Q1523.2 808.2 1526.1 807.9M1521.3 811.3Q1523.6 810.3 1525.9 809.4M1522 813.3Q1526.2 814.3 1525 812.6Q1522.9 811.5 1522 813.3M1522.5 815Q1523.9 815.4 1524.8 814.5M1523.3 817.2Q1522.7 820 1525.3 821.7M1523.3 817.2Q1524.6 817.6 1525.5 816.7M1523.9 818.9Q1526.6 817.7 1529.4 816.9M1524.3 820.3Q1527 819.3 1529.8 818.4M1510.2 797.4Q1510.7 803.1 1513.4 808.3M1510.3 797.4Q1511.7 798 1512.7 797.1M1510.8 799.7Q1512.2 800.3 1513.3 799.4M1511.1 801Q1513.8 800.7 1516.2 799.3M1511.5 802.3Q1512.9 802.9 1513.9 802M1514.1 803Q1509.3 806.3 1514.6 807.5M1512.2 805.1Q1516.6 806.5 1515.5 804.6Q1513.3 803.3 1512.2 805.1M1514.8 805.9Q1510 809.2 1515.3 810.4M1515.3 807.7Q1510.5 811.1 1515.8 812.3M1513.4 809.7Q1513.2 814.8 1515.7 819.2M1515.6 809.2Q1510.8 812.5 1516.1 813.7M1516.1 811.1Q1511.3 814.4 1516.6 815.6M1514.1 813.1Q1515.5 813.7 1516.5 812.8M1514.7 815.4Q1516.7 814.3 1518.9 814.5M1515 816.9Q1517.4 816.9 1519.5 816.3M1515.4 818.4Q1519.8 819.9 1518.7 817.9Q1516.5 816.6 1515.4 818.4M1516.5 821.1Q1515.3 822.8 1517.1 823.8M1516.1 821.2Q1518.5 820.5 1520.9 819.6M1518.8 822Q1514 825.3 1519.3 826.5M1519.1 823.3Q1514.3 826.7 1519.6 827.9M1504.3 798.4Q1503.8 803.4 1506.6 808M1506.5 798Q1501.9 800.7 1506.6 802.2M1504.6 799.9Q1508.4 801.5 1507.6 799.7Q1505.7 798.3 1504.6 799.9M1504.8 801.6Q1508.7 803.2 1507.9 801.4Q1506 800 1504.8 801.6M1505.1 803.6Q1509 805.3 1508.2 803.4Q1506.3 802.1 1505.1 803.6M1505.3 804.9Q1509.2 806.6 1508.4 804.8Q1506.5 803.4 1505.3 804.9M1505.6 806.4Q1507.9 805.8 1510.3 805.6M1508 807.3Q1503.3 810 1508.1 811.5M1506.4 808.4Q1504.8 812.2 1507.1 815.3M1508.1 808.2Q1503.5 810.8 1508.2 812.4M1508.5 811Q1503.9 813.7 1508.6 815.2M1509.1 814.5Q1504.4 817.1 1509.2 818.6M1507.8 817.1Q1506.4 821.2 1508.5 824.8M1509.4 816.8Q1504.8 819.5 1509.5 821M1507.5 818.9Q1511.4 820.6 1510.6 818.8Q1508.7 817.4 1507.5 818.9M1508.1 822.4Q1510.6 822 1513.2 821.6M1510.6 824.2Q1506 826.9 1510.7 828.4M1504.1 799Q1499.8 798.3 1495.5 799.5M1504.1 799Q1502.1 802.2 1503.8 801.7Q1505.3 800.2 1504.1 799M1502.2 799Q1501.5 800 1501.9 801M1500.3 799.1Q1498.3 802.2 1500 801.7Q1501.5 800.3 1500.3 799.1M1497.4 801Q1495.6 796.7 1493.7 800.6M1495.7 801Q1494 796.7 1492.1 800.6M1494.5 799.2Q1491.8 798 1489.2 799.8M1494.5 799.1Q1493.8 800.1 1494.3 801.1M1492.8 799.1Q1493.1 800.8 1493.1 802.5M1491.2 799.1Q1490.8 801.2 1491.2 803.3M1489.3 801.1Q1487.6 796.7 1485.7 800.6M1489.2 799Q1485.3 797.9 1481.2 797.8M1489.1 799.2Q1486.5 802 1488.3 801.8Q1490.1 800.6 1489.1 799.2M1487.1 798.7Q1486 800.5 1486.1 802.6M1483.9 798.1Q1481.2 800.9 1483.1 800.7Q1484.9 799.6 1483.9 798.1M1480 797.4Q1477.4 796.1 1474.4 796.8M1479.6 799.3Q1478.8 794.5 1476 798M1478.9 797.1Q1478 797.9 1478.3 799M1477.6 796.8Q1477.4 799.2 1476.4 801.4M1476.1 796.5Q1475.2 799 1475.4 801.7M1504.8 805.7Q1498.9 805.1 1493 806.1M1504.8 805.8Q1503.9 807.1 1504.5 808.3M1502.3 808.3Q1500 802.7 1497.6 807.8M1498.5 805.9Q1497.8 808.6 1498.9 811.4M1496.8 805.9Q1495.8 807.1 1496.5 808.4M1495.5 805.9Q1493 810 1495.2 809.3Q1497 807.4 1495.5 805.9M1492.2 805.8Q1490.3 804.4 1488.5 806M1492.2 808.4Q1490 802.8 1487.5 807.8M1489.6 805.9Q1489.9 808.6 1489.9 811.3M1488.5 805.9Q1486.4 804.4 1483.8 805.1M1488.5 805.9Q1487.4 807.8 1488 810M1486.8 805.6Q1484 808.6 1486 808.4Q1487.8 807.2 1486.8 805.6M1484.6 807.3Q1483.7 802.3 1480.8 806M1482.4 805Q1479.7 802.7 1476.3 803.6M1482.4 804.7Q1481.7 807.4 1480.9 810M1480.5 804.3Q1480 806.1 1479.7 808M1478.7 804Q1476 806.9 1477.9 806.8Q1479.8 805.5 1478.7 804M1476.8 803.6Q1475.8 804.4 1476.1 805.6M1474.5 803.5Q1473.8 801.4 1472.4 802.9M1474.6 803.1Q1474.4 805.7 1473.5 808.2M1473 802.8Q1472.1 805.2 1471.6 807.6M1505.6 813.1Q1502.3 811.6 1499.1 813.2M1505.6 812.6Q1504.8 813.7 1505.3 814.8M1503.8 814.8Q1501.8 809.9 1499.7 814.3M1502.3 812.6Q1500.1 816.2 1502 815.6Q1503.7 814 1502.3 812.6M1500.8 812.6Q1498.6 816.2 1500.5 815.6Q1502.2 814 1500.8 812.6M1497.9 813Q1494.4 812.3 1490.8 812.9M1497.9 812.7Q1497.4 814.6 1498.2 816.6M1495.7 812.7Q1494.9 815.5 1495.3 818.3M1493.6 812.7Q1491.5 816.3 1493.4 815.7Q1495 814 1493.6 812.7M1491.9 812.7Q1492 815.6 1491.6 818.4M1489.1 812.8Q1488.5 811.9 1487.8 812.9M1489.1 812.7Q1488.9 815.5 1488.6 818.4M1487.8 813Q1484.5 810.5 1480.5 811.6M1487.8 812.7Q1486.8 813.6 1487.2 814.8M1485.3 814.4Q1484.4 809.3 1481.4 813.1M1484.3 812Q1481.5 815 1483.5 814.9Q1485.4 813.6 1484.3 812M1482.1 813.8Q1481.3 808.7 1478.3 812.4M1480.8 811.3Q1480.2 813.6 1479.6 816M1479.1 810.9Q1476.2 809.2 1472.7 810.5M1478.7 813.1Q1477.8 808 1474.8 811.7M1476.9 812.7Q1476 807.6 1473.1 811.4M1474.9 812.3Q1474 807.2 1471.1 811M1472.3 809.8Q1471.7 808 1470.4 809.2M1472.4 809.6Q1469.6 812.6 1471.5 812.4Q1473.4 811.2 1472.4 809.6M1471.2 809.4Q1468.4 812.4 1470.4 812.2Q1472.3 810.9 1471.2 809.4M1506.4 819.8Q1499.6 817.9 1492.9 819.8M1506.4 819.4Q1503.9 823.4 1506.1 822.8Q1507.9 820.9 1506.4 819.4M1504.4 821.9Q1502.2 816.3 1499.8 821.3M1502.4 821.9Q1500.2 816.3 1497.7 821.3M1500.6 819.4Q1498.2 823.5 1500.3 822.8Q1502.2 821 1500.6 819.4M1496.1 819.5Q1496 822.2 1495.7 824.9M1493.7 819.5Q1493 821.7 1493 823.8M1491.5 819.5Q1489.3 818.2 1487.2 820.2M1491.5 819.5Q1490.5 820.7 1491.2 822M1489.7 822Q1487.5 816.4 1485.1 821.4M1487.1 820Q1482.4 817.8 1477.2 818.2M1487.2 819.5Q1486.4 821.7 1485.8 823.9M1485.5 821.4Q1484.6 816.2 1481.6 820.1M1482.2 818.5Q1479.4 821.6 1481.4 821.4Q1483.3 820.1 1482.2 818.5M1480.5 818.2Q1479.5 819.1 1479.8 820.3M1478.5 817.8Q1475.7 820.8 1477.6 820.6Q1479.6 819.4 1478.5 817.8M1476.2 817.1Q1473.2 815.1 1469.5 816M1475.8 819.4Q1474.9 814.3 1471.9 818.1M1473.7 819Q1472.8 813.8 1469.8 817.7M1472 816.5Q1471.5 818.4 1470.9 820.4M1470 816.1Q1469 817 1469.3 818.1M1469 815.6Q1468.9 814.9 1468.3 816M1469 815.8Q1467.8 817.7 1467.5 819.8M1474.3 795.4Q1474 798.6 1472.3 801.2M1474.6 795.5Q1472.7 794.7 1470.7 793.9M1472.3 795.9Q1476 799.2 1471.4 799.8M1473.4 798.9Q1469.5 799.7 1470.6 798.1Q1472.6 797.2 1473.4 798.9M1472.9 800.3Q1469 801.1 1470.1 799.5Q1472.1 798.6 1472.9 800.3M1472 802.8Q1470.5 808.2 1467.7 813M1470 802.1Q1473.8 805.4 1469.2 805.9M1469.4 803.9Q1473.1 807.2 1468.6 807.8M1469 805Q1472.8 808.3 1468.2 808.8M1470.6 806.8Q1466.7 807.6 1467.8 806Q1469.8 805.1 1470.6 806.8M1469.9 808.6Q1468.7 809 1467.9 808.1M1469.2 810.5Q1466.9 809.8 1464.8 808.7M1466.9 810.9Q1470.7 814.1 1466.1 814.7M1468.5 812.6Q1466.1 811.9 1463.8 810.8M1468 814.4Q1468.2 817.8 1465.1 819.9M1465.9 813.7Q1469.7 816.9 1465.1 817.5M1467.4 815.5Q1465.1 815.2 1462.9 814.6M1464.8 816.7Q1468.6 820 1464 820.5M1464.2 818.4Q1468 821.6 1463.4 822.2M1465.2 820.5Q1466 821.1 1465.3 821.2M1469.4 793.7Q1468.2 798.7 1464.9 802.7M1469.3 793.6Q1466.5 793.3 1464.3 791.5M1468.3 795.7Q1463.7 796.3 1465.2 794.6Q1467.6 793.6 1468.3 795.7M1465.6 795.8Q1469.7 800 1464.3 800.2M1466.8 799.1Q1462.1 799.7 1463.6 798Q1466 797.1 1466.8 799.1M1466.1 800.6Q1464.6 800.9 1463.7 799.9M1463.9 804.4Q1462.4 810.5 1458.5 815.5M1464.3 804.6Q1459.7 805.2 1461.1 803.5Q1463.5 802.6 1464.3 804.6M1463.6 806.2Q1458.9 806.8 1460.4 805.1Q1462.8 804.2 1463.6 806.2M1462.9 807.8Q1458.3 808.4 1459.7 806.7Q1462.1 805.8 1462.9 807.8M1462.2 809.2Q1459.7 808.9 1457.9 807M1461.3 811.1Q1456.7 811.7 1458.2 810Q1460.6 809.1 1461.3 811.1M1460.4 813.2Q1457.6 812.9 1455.2 811.4M1457.7 813.3Q1461.8 817.5 1456.4 817.7M1458.2 817.2Q1459.8 818.6 1457.3 818.2M1459.3 788.6Q1456 792.1 1455.2 796.9M1459.4 788.7Q1461.5 789.8 1463.8 790.8M1460.6 790.5Q1455.9 789.9 1458.4 793.5M1459.9 791.8Q1455.2 791.2 1457.7 794.8M1457.4 792.3Q1458.6 793.6 1460.4 794M1456.5 793.8Q1457 795 1458.1 795M1455.7 795.3Q1457.6 798.6 1458 796.8Q1457.4 794.8 1455.7 795.3M1455.1 796.3Q1456.7 798 1458.7 798.9M1454.4 797.8Q1452.4 800.1 1452.1 803.4M1456.1 798.7Q1451.3 798.1 1453.9 801.7M1453.6 799.1Q1456 799.9 1457.7 801.8M1453 800.2Q1454.6 801 1455.8 802.4M1454.1 802.4Q1449.3 801.7 1451.9 805.4M1451.5 803Q1453.2 804.7 1455.4 805.7M1451.1 804.4Q1447.7 807.9 1446.3 812.5M1450.8 804.2Q1452.6 807.5 1453 805.8Q1452.5 803.8 1450.8 804.2M1451.7 806.6Q1447 806 1449.5 809.6M1449.1 807.3Q1450.8 808.5 1452.5 809.7M1448.1 809.1Q1448.6 810.2 1449.7 810.2M1449.2 811.1Q1444.5 810.5 1447 814.2M1448.5 812.5Q1443.7 811.9 1446.3 815.5M1458.7 788.3Q1456.9 793.7 1452.4 797.4M1458 790.3Q1453.8 790.2 1455.3 788.9Q1457.6 788.4 1458 790.3M1456.9 792Q1454.7 791.2 1452.9 789.9M1455.8 793.6Q1453.2 792.8 1451.6 790.4M1455.1 794.6Q1453.2 793.2 1451 792M1454.5 795.6Q1452.4 794.4 1450.5 792.7M1453.7 796.7Q1452.4 796.8 1451.8 795.7M1452.4 798.8Q1451.1 803 1447.5 805.8M1450.5 797.6Q1453.6 801.9 1448.7 801.3M1451.4 800.3Q1447.2 800.2 1448.7 798.9Q1451 798.4 1451.4 800.3M1450.5 801.6Q1446.3 801.5 1447.8 800.2Q1450.1 799.7 1450.5 801.6M1449.4 803.3Q1445.2 803.2 1446.7 801.9Q1449 801.4 1449.4 803.3M1448.5 804.6Q1444.4 804.4 1445.9 803.1Q1448.2 802.7 1448.5 804.6M1447.7 805.9Q1446.1 804.7 1444.7 803.4M1446.6 806.7Q1446.5 809.8 1443.8 811.1M1447 807Q1445.2 806.1 1443.4 805.3M1442.9 809.1Q1446 813.4 1441.1 812.8M1454.2 785.2Q1453.3 789.2 1449.7 791.1M1452.8 784.1Q1455.3 788.5 1450.7 787.5M1453.4 786.7Q1451.2 785.8 1449.9 783.7M1452.2 788.2Q1450.9 788.2 1450.4 787.2M1449.5 788.2Q1452.1 792.6 1447.5 791.7M1448.8 789.2Q1451.4 793.5 1446.8 792.6M1449 791.7Q1447.8 794.6 1445.2 796.4M1449.3 791.9Q1445.3 791.5 1446.9 790.3Q1449.1 790.1 1449.3 791.9M1446.7 791.9Q1449.2 796.3 1444.6 795.3M1445.6 793.3Q1448.2 797.6 1443.6 796.7M1446.1 796Q1444.8 796 1444.3 794.9M1444.7 797.9Q1444 800.6 1441.1 801.6M1444.7 797.9Q1443.3 797.8 1442.8 796.8M1443.7 799.1Q1442.5 797.6 1440.6 796.9M1442.8 800.2Q1441 798.2 1438.6 796.9M1441.6 801.8Q1437.6 801.3 1439.2 800.2Q1441.4 799.9 1441.6 801.8M1440.1 803.1Q1439.7 805.6 1437.2 806.6M1437.9 803.1Q1440.5 807.5 1435.9 806.5M1436.9 804.5Q1439.4 808.8 1434.8 807.9M1446.3 778.5Q1443.6 779.4 1443 782.3M1446.1 778.4Q1447.3 782.4 1448.1 780.6Q1448 778.3 1446.1 778.4M1444.7 779.9Q1445.8 784 1446.7 782.2Q1446.6 779.9 1444.7 779.9M1444.9 783Q1440 781 1441.7 785.6M1441.8 783.7Q1437.2 786.4 1434.8 791.1M1441.5 783.4Q1443.7 785.2 1445.2 787.7M1442 786.1Q1437.1 784.2 1438.8 788.8M1439.6 785.5Q1441 787.8 1443.3 789.3M1440.2 788.1Q1435.3 786.2 1437 790.8M1437.5 787.8Q1438.7 791.8 1439.6 790Q1439.5 787.7 1437.5 787.8M1436.1 789.3Q1437.5 791.3 1439.8 792.4M1434.9 790.6Q1435.9 792.5 1437.5 793.7M1434 791.6Q1429.8 794.1 1428.3 799.1M1434 791.6Q1435.1 795.7 1436 793.9Q1435.9 791.6 1434 791.6M1432.8 792.9Q1434.5 795.3 1437.2 796.6M1431.4 794.4Q1432.5 796.4 1434.1 797.7M1432.3 796.8Q1427.3 794.9 1429.1 799.4M1429.8 796.3Q1430 797.6 1431.2 797.9M1428.3 797.8Q1429.5 801.9 1430.4 800.1Q1430.3 797.7 1428.3 797.8M1442.4 774.4Q1438.9 775.6 1438.2 779.7M1442.5 774.5Q1442.6 776 1443.9 776.5M1441.1 775.8Q1442 780.3 1443.2 778.5Q1443.3 775.9 1441.1 775.8M1439.9 776.9Q1440.1 778.4 1441.4 778.9M1438.9 777.9Q1439.8 782.5 1440.9 780.6Q1441 778 1438.9 777.9M1437.1 779.4Q1434 781.3 1432.4 784.8M1438.9 781.3Q1433.6 778.8 1435.1 783.9M1433 783.4Q1434 788 1435.1 786.1Q1435.2 783.5 1433 783.4M1431.5 785.1Q1426.1 788.1 1422.7 793.3M1433.1 786.7Q1427.8 784.2 1429.3 789.4M1429.9 786.4Q1432.1 788.7 1434.1 791.1M1429.9 789.7Q1424.6 787.2 1426.2 792.4M1426.7 789.4Q1427.6 793.9 1428.8 792Q1428.8 789.5 1426.7 789.4M1426.7 792.7Q1421.4 790.2 1423 795.4M1423.8 792.1Q1424.8 796.6 1425.9 794.7Q1426 792.2 1423.8 792.1M1442.6 774.7Q1440.5 776.9 1437.5 778.1M1442.5 774.6Q1440.8 772 1438.5 769.7M1439.2 774.1Q1441 779.8 1436 777.5M1439.7 776.9Q1438 774.6 1435.5 772.8M1437.1 775.9Q1438.9 781.6 1433.9 779.3M1437.2 779.2Q1434.8 782.3 1430.8 783.3M1435.5 777.2Q1437.3 782.8 1432.3 780.6M1435 780.7Q1430.6 779.1 1432.7 778.3Q1435.3 778.5 1435 780.7M1432.2 779.9Q1434 785.5 1428.9 783.3M1432.5 782.8Q1430.6 780.9 1428.7 779M1431.4 783.6Q1429.5 781.2 1427.2 779M1430.3 784Q1428.6 787 1425.3 788M1430.6 784.3Q1428.8 782.2 1427.3 779.8M1427.8 786.6Q1426.7 784.5 1424.4 783.6M1426.8 787.4Q1424.6 785.4 1422.5 783.3M1423.9 789.2Q1423.4 791.5 1421.3 791.8M1424.1 789.5Q1422.6 789.2 1422.3 787.8M1423.1 790.4Q1421.6 788.3 1419.3 786.7M1421.7 791.5Q1417.2 790 1419.3 789.1Q1421.9 789.4 1421.7 791.5M1436.2 766.2Q1430.7 768.3 1426.8 772.8M1437.6 768.2Q1432.5 764.7 1433.3 770.4M1434.4 767.3Q1434.7 772.2 1436.2 770.4Q1436.6 767.7 1434.4 767.3M1431.3 769.4Q1433.4 771.4 1434 774.6M1429.5 770.7Q1431.3 773 1432.7 775.6M1427.5 772.1Q1427.5 773.7 1428.7 774.3M1425.5 773.7Q1421 775.9 1417.2 779.2M1425.4 773.5Q1425.3 775.1 1426.6 775.8M1423.2 775Q1423.2 776.6 1424.4 777.3M1421.9 775.9Q1422.2 780.8 1423.7 779Q1424.2 776.3 1421.9 775.9M1422.1 778.9Q1417 775.5 1417.8 781.1M1415.6 780.3Q1413.7 779.6 1414.1 782.3M1417.1 782.4Q1411.9 778.9 1412.8 784.6M1413.8 781.6Q1413.7 783.2 1415 783.9M1435.8 765.6Q1433.6 768.1 1430.3 768.7M1435.8 765.6Q1434 763.2 1432.8 760.5M1432.6 764.6Q1433.5 770.4 1429 767.4M1432.7 767.4Q1431.2 766.8 1431.2 765.4M1429.9 766.2Q1430.8 772.1 1426.2 769M1428.9 769.9Q1423.8 774 1417.3 775.7M1428.8 769.6Q1424.6 767.4 1426.8 766.9Q1429.3 767.5 1428.8 769.6M1426.7 770.9Q1424.7 768.3 1423.1 765.6M1424.5 772.1Q1420.4 769.9 1422.6 769.3Q1425.1 770 1424.5 772.1M1420.7 774.3Q1419.6 771.9 1417.5 770.1M1418.3 772.8Q1419.2 778.7 1414.7 775.6M1418 775.8Q1413.9 773.6 1416.1 773.1Q1418.6 773.7 1418 775.8M1416.2 776.9Q1414.6 778.7 1412.1 779.2M1414 778.1Q1409.9 775.9 1412.1 775.4Q1414.6 776 1414 778.1M1432.6 759.9Q1429.5 761.9 1425.8 762.5M1432.6 759.8Q1431.9 757.3 1430.1 755.4M1431.4 760.3Q1428.1 758.1 1430 757.8Q1432.1 758.6 1431.4 760.3M1427 760Q1427.3 765.1 1423.6 762.1M1426.5 762.5Q1425.4 761.9 1425.4 760.7M1425.5 762.9Q1421.6 765.3 1417 766.2M1425.6 763Q1424.6 761.2 1424 759.2M1423.4 761.7Q1423.7 766.7 1420 763.8M1422.3 764.5Q1419 762.2 1420.9 761.9Q1423 762.7 1422.3 764.5M1420.9 765.1Q1419.8 764.5 1419.8 763.3M1419 766Q1417.8 765.4 1417.9 764.2M1418 766.4Q1416.8 765.8 1416.9 764.6M1415.9 767.1Q1412.1 769.7 1407.4 770.5M1416 767.4Q1414.9 766.7 1414.9 765.6M1413.9 766Q1414.2 771.1 1410.6 768.1M1413.6 768.4Q1412.9 766.1 1412 763.9M1412 769.2Q1408.7 766.9 1410.6 766.7Q1412.7 767.4 1412 769.2M1410.1 770Q1409.6 768 1407.9 766.4M1408.3 770.9Q1407 769 1406.2 766.8M1428.1 748.7Q1425.6 749 1423.5 750.9M1428.7 750.5Q1425.6 746.9 1425.1 751.2M1427.1 748.9Q1426.3 752.6 1427.8 751.6Q1428.7 749.7 1427.1 748.9M1425.5 749.5Q1424.7 753.2 1426.2 752.1Q1427.1 750.3 1425.5 749.5M1424.1 750Q1423.8 751.2 1424.6 751.9M1421.8 750.8Q1417.1 751.6 1413 754M1421.8 750.8Q1421 754.5 1422.5 753.4Q1423.4 751.6 1421.8 750.8M1421.1 753.1Q1418 749.5 1417.5 753.9M1419.2 751.7Q1419.5 753.9 1420.7 755.9M1418.1 752.1Q1417.3 755.7 1418.8 754.7Q1419.7 752.8 1418.1 752.1M1417.2 754.5Q1414.1 750.9 1413.6 755.2M1412.3 754.2Q1408.2 754.2 1405.1 757.1M1412.2 754.1Q1411.4 757.8 1412.9 756.8Q1413.8 754.9 1412.2 754.1M1410.3 754.8Q1409.5 758.5 1411 757.4Q1411.9 755.6 1410.3 754.8M1409.7 757.1Q1406.6 753.5 1406 757.8M1407.8 755.7Q1407 759.3 1408.5 758.3Q1409.4 756.4 1407.8 755.7M1406.7 756.1Q1405.9 759.7 1407.4 758.7Q1408.3 756.8 1406.7 756.1M1405.7 758.5Q1402.6 754.9 1402 759.2M1404.2 756.8Q1403 756.4 1402.4 757.8M1404.2 756.9Q1405.2 758.9 1405.4 761M1403.2 757.3Q1403.7 759.3 1404.4 761.2M1426.9 748.2Q1427.4 743.9 1425.9 739.7M1427.3 748.2Q1425.9 747.4 1424.8 748.2M1424.4 744.7Q1429.6 741.9 1424.4 740.1M1423.9 741.2Q1429.1 738.4 1424 736.6M1426.2 738.1Q1427.2 735.2 1425 732.7M1426 738.1Q1421.7 736.2 1422.6 738.2Q1424.7 739.8 1426 738.1M1425.7 735.7Q1423.5 736.2 1421.1 735.6M1423 734.2Q1428.2 731.4 1423.1 729.6M1425.4 731Q1426 727.9 1424.3 725.2M1425.1 731Q1423.8 730.3 1422.6 731M1422.5 729.9Q1427.7 727.1 1422.5 725.2M1422.3 728.4Q1427.5 725.6 1422.3 723.7M1424.5 725.9Q1421.5 726 1418.6 727M1420.3 750.2Q1421.6 747 1419.1 744.4M1420.7 750.1Q1416.2 748.1 1417.2 750.3Q1419.3 751.9 1420.7 750.1M1420.4 747.8Q1416 745.8 1416.9 747.9Q1419 749.6 1420.4 747.8M1417.7 746.4Q1423.1 743.4 1417.7 741.5M1420.2 743.9Q1420.7 739.4 1418.7 735.4M1419.9 743.9Q1415.5 741.8 1416.4 744Q1418.5 745.7 1419.9 743.9M1419.7 742.3Q1415.2 740.2 1416.2 742.4Q1418.3 744.1 1419.7 742.3M1419.5 740.6Q1418.1 739.8 1416.9 740.6M1416.7 738.6Q1422.1 735.6 1416.7 733.7M1419 736.6Q1416.1 737 1413.2 737.5M1418.2 734.3Q1420 729.3 1416.6 725.1M1418.7 734.2Q1417.3 733.4 1416.1 734.2M1418.5 732.2Q1415.6 732 1412.9 732.8M1418.2 729.9Q1416.8 729.1 1415.6 729.9M1417.8 727.3Q1415 726.9 1412.4 728.5M1417.7 726Q1413.2 724 1414.1 726.1Q1416.3 727.8 1417.7 726M1413.8 752.1Q1414.2 748.3 1412 745M1414.2 752.1Q1412.1 752.4 1410.1 753.2M1411.5 750.3Q1416.1 747.3 1411.2 746M1411 748.2Q1415.7 745.2 1410.7 743.9M1413 746.3Q1408.9 744.8 1409.8 746.7Q1411.9 748 1413 746.3M1412.2 743.8Q1412.7 741 1410.8 738.6M1412.4 743.8Q1408.3 742.3 1409.3 744.1Q1411.3 745.5 1412.4 743.8M1412.2 742.6Q1410.9 742 1409.9 742.8M1411.9 741Q1409.5 741.3 1407.2 741.6M1411.6 739.7Q1409.2 739.4 1407.2 740.5M1411.1 738.5Q1412.3 735.3 1410.7 732.2M1411.3 738.5Q1408.9 738.7 1406.4 738.8M1409.1 737Q1413.9 734.9 1409.5 732.9M1411.2 735.7Q1409 736.2 1406.7 735.9M1411.2 734.2Q1410 733.4 1409 734M1408.9 733Q1413.7 730.9 1409.3 728.9M1410.9 730.6Q1412 727.6 1409.9 724.7M1408.8 730.7Q1413.6 728.6 1409.2 726.6M1408.8 729.5Q1413.6 727.3 1409.1 725.4M1410.9 727.7Q1408.3 727.1 1405.9 728.2M1410.8 726Q1408.4 726.2 1406.1 726.5M1407.7 754Q1407.7 749.8 1405.8 745.9M1407.6 754Q1403.4 752.5 1404.4 754.4Q1406.5 755.8 1407.6 754M1407.2 752.1Q1405.9 751.4 1404.9 752.3M1404.7 751.3Q1409.5 748.2 1404.3 746.8M1404.2 749.3Q1409 746.1 1403.9 744.8M1403.7 746.9Q1408.5 743.7 1403.4 742.4M1405.5 744.2Q1406.3 741.5 1404.4 739.4M1405.6 744.2Q1401.3 742.7 1402.3 744.6Q1404.4 746 1405.6 744.2M1402.8 742.7Q1407.6 739.6 1402.5 738.2M1402.5 740.9Q1407.3 737.8 1402.1 736.4M1404.5 739.4Q1405.1 733.7 1403.5 728.1M1402.4 739.5Q1407.3 737.3 1402.7 735.3M1404.5 737.8Q1403.4 737 1402.3 737.6M1404.3 733.9Q1400.6 731.8 1401.3 733.8Q1403 735.4 1404.3 733.9M1404.2 731.8Q1401.7 732.4 1399.2 732M1401.9 730.4Q1406.9 728.2 1402.3 726.2M1401.9 728.8Q1406.8 726.6 1402.2 724.6M1403.7 727Q1404.3 725.7 1403.5 724.5M1404 726.9Q1401.3 726.3 1398.6 726.8M1401.7 725.4Q1406.6 723.2 1402.1 721.2M1425.4 719.5Q1421.9 718.3 1418.1 719.5M1425.4 719.7Q1425.5 722.2 1424.8 724.7M1423.9 719.6Q1421.4 723 1423.4 722.6Q1425.2 721.1 1423.9 719.6M1422 719.4Q1421.4 721.7 1421.8 724M1420 719.3Q1419 720.3 1419.5 721.5M1416.6 719.1Q1412.7 718.3 1408.8 718.7M1416.6 719Q1415.9 721.7 1415.9 724.5M1414.4 721.1Q1412.8 715.9 1410.2 720.2M1412.5 721Q1410.9 715.8 1408.3 720.1M1411.3 720.9Q1409.8 715.7 1407.2 720M1409.1 720.7Q1407.6 715.5 1405 719.8M1407.9 718.2Q1404.7 717.2 1401.4 718.1M1407.9 718.3Q1406.9 720.6 1407.1 722.9M1406.2 718.2Q1406.1 720.7 1405.6 723.1M1404.8 718.1Q1402.2 721.6 1404.2 721.2Q1406 719.6 1404.8 718.1M1402.5 720.2Q1400.9 715 1398.4 719.3M1400.1 718.2Q1399.3 716.3 1398.2 718M1400 720Q1398.4 714.8 1395.8 719.1M1426.2 714.4Q1423.9 712.4 1421 713.8M1426.3 714.1Q1426.4 716.5 1425.3 718.6M1424.3 713.8Q1424.4 716.4 1423.8 719M1422.1 713.4Q1421 715.8 1420.9 718.4M1420.1 713Q1416.6 711.2 1412.6 712.4M1420.1 713.1Q1417.4 716.3 1419.4 716.1Q1421.2 714.7 1420.1 713.1M1418.4 712.9Q1418.5 715.1 1417.4 717.1M1416.4 714.8Q1415.3 709.6 1412.4 713.6M1414.2 714.4Q1413 709.2 1410.2 713.2M1413 712Q1412.9 714.2 1412.2 716.3M1411.7 711.8Q1406.5 709.9 1400.9 710.5M1409.7 711.5Q1409.3 713.9 1409.2 716.4M1407.9 711.2Q1405.2 714.4 1407.2 714.1Q1409.1 712.8 1407.9 711.2M1405.7 710.9Q1404.7 711.8 1405.1 713M1404 710.6Q1403 711.5 1403.4 712.7M1402.3 710.3Q1402.3 712.4 1401.5 714.3M1400.5 710.4Q1400.1 709 1399.3 710.1M1400.5 710Q1397.8 713.2 1399.8 713Q1401.7 711.6 1400.5 710M1399.4 709.9Q1398.6 712.6 1398.9 715.6M1426.4 713.8Q1421.7 713.1 1417.4 711.3M1426.3 713.8Q1426.3 711.1 1427.7 708.7M1424.3 713.4Q1423.1 709.6 1424.7 710.5Q1425.9 712.4 1424.3 713.4M1422.7 713Q1422.2 711.8 1422.9 710.9M1420.5 710.3Q1417.6 714.4 1416.6 709.9M1418.8 712Q1417.5 708.2 1419.2 709.2Q1420.3 711.1 1418.8 712M1415.9 711.2Q1412.5 711.6 1409.7 709.7M1416.4 709.3Q1413.5 713.4 1412.4 708.9M1414.1 710.9Q1414 708.7 1415 706.7M1412.3 710.5Q1412.7 708.4 1413.1 706.3M1411 710.2Q1411.8 708 1411.6 705.5M1408.3 709.5Q1405.2 710 1402.7 707.7M1408.8 707.5Q1406 711.6 1404.9 707.1M1407.3 709.3Q1406 705.5 1407.7 706.4Q1408.8 708.3 1407.3 709.3M1406 709Q1406.5 707 1406.4 705M1403.9 708.5Q1402.7 704.7 1404.3 705.6Q1405.5 707.5 1403.9 708.5M1401.1 707.4Q1400.2 708.5 1399.9 706.9M1427.7 708.2Q1423 707.3 1418.9 704.7M1428.3 706.4Q1425.1 710.2 1424.4 705.6M1426.5 708Q1425.6 704.1 1427.2 705.2Q1428.2 707.1 1426.5 708M1425.1 707.5Q1424.7 706.3 1425.5 705.4M1424.3 705Q1421.1 708.9 1420.4 704.3M1421.9 706.4Q1421.4 705.2 1422.3 704.4M1420.7 706.1Q1421.7 704 1421.7 701.6M1420 703.6Q1416.8 707.5 1416.1 702.9M1418 705.2Q1414.6 704.6 1411.6 702.9M1418 705.2Q1417.1 701.3 1418.6 702.4Q1419.6 704.3 1418 705.2M1417.5 702.8Q1414.3 706.7 1413.6 702.1M1415.2 704.3Q1415.5 701.7 1416.9 699.4M1414.1 703.9Q1415.4 701.6 1415.5 698.9M1412.5 703.4Q1411.6 699.5 1413.1 700.6Q1414.1 702.6 1412.5 703.4M1410.7 702.5Q1406.9 702 1403.5 700.2M1411.2 700.8Q1408.1 704.7 1407.4 700.1M1409.2 702.3Q1408.2 698.4 1409.8 699.5Q1410.8 701.5 1409.2 702.3M1406.5 699.3Q1403.3 703.1 1402.7 698.5M1404.8 700.9Q1405.8 699 1406.3 696.9M1402 700.1Q1401.7 700.4 1401.9 699.3M1402 700Q1401.1 696.1 1402.7 697.2Q1403.7 699.1 1402 700M1428.4 702.6Q1431.9 700.2 1432 695.8M1428.8 702.9Q1428.2 701.6 1427 701.6M1427.9 700.1Q1433 700.8 1430.3 696.8M1430.5 699.7Q1428.3 698.9 1426.8 696.9M1431.2 698.5Q1429.1 694.9 1428.7 696.9Q1429.3 699.1 1431.2 698.5M1432.2 696.7Q1430.7 695.1 1428.3 695.1M1433.1 694.3Q1435.5 692.7 1435.2 689.5M1433.4 694.5Q1431.4 690.9 1430.9 692.8Q1431.6 695 1433.4 694.5M1434.1 693.3Q1432 689.7 1431.6 691.6Q1432.2 693.8 1434.1 693.3M1432.8 691.1Q1438 691.8 1435.2 687.8M1435.5 690.7Q1434.9 689.5 1433.7 689.4M1436.8 688.8Q1438.5 686.8 1438.5 684M1436.6 688.7Q1434.6 685.1 1434.1 687Q1434.8 689.2 1436.6 688.7M1437.6 687Q1437 685.7 1435.8 685.7M1438.2 685.7Q1436.8 684.2 1434.7 683.7M1422.1 700.3Q1425.1 699 1424.5 695.6M1420.4 699.4Q1425.9 700.1 1423 695.9M1421.4 697.5Q1426.9 698.2 1424 694M1422.4 695.8Q1427.8 696.5 1424.9 692.3M1425.4 695.2Q1427.9 692.7 1428.3 689.1M1426.4 693.2Q1424.8 691.9 1423.2 690.7M1428.5 689.5Q1426.5 687.9 1424.3 686.7M1429.4 688Q1432.2 684.4 1433.2 679.9M1429.3 687.9Q1427.2 684.1 1426.7 686.2Q1427.4 688.5 1429.3 687.9M1430.2 686.3Q1428.2 685.3 1426.5 683.7M1431.1 684.6Q1428.8 683.5 1426.9 681.6M1432.1 682.9Q1431.5 681.6 1430.2 681.5M1432.9 681.4Q1430.3 680.3 1428.3 678.3M1416.2 698.2Q1419 694.1 1420.7 689.4M1416 698.1Q1413.5 697.3 1411.5 695.5M1416.7 696.9Q1414.6 694.8 1411.8 693.9M1417.6 695.2Q1415.8 693.4 1413.1 693.2M1418.4 693.8Q1416.2 693 1414.6 691.2M1421.5 688Q1425.5 683.6 1426.8 677.6M1419.5 686.9Q1425.1 687.7 1422.1 683.4M1420.2 685.7Q1425.8 686.4 1422.8 682.1M1423 685.4Q1422.4 684 1421.1 684M1424.9 682Q1424.3 680.6 1423 680.6M1425.9 680.1Q1423.7 679.2 1422.1 677.4M1424.6 677.7Q1430.2 678.4 1427.2 674.1M1427.8 676.4Q1429.3 676.9 1427.9 675.8M1427.9 676.5Q1425.5 675.5 1423.6 673.7M1409.8 695.8Q1412.1 693.3 1411.7 689.6M1409.6 695.7Q1407.5 692.6 1407.3 694.4Q1408 696.3 1409.6 695.7M1410.2 694.3Q1408.2 691.2 1407.9 693Q1408.6 694.9 1410.2 694.3M1409 692.3Q1413.7 692.6 1411 689.2M1411.5 691.6Q1410.9 690.5 1409.8 690.6M1412 690.4Q1410 689.9 1408.2 688.8M1412.5 688.3Q1415.2 686.4 1414.6 683M1412.9 688.5Q1412.3 687.4 1411.2 687.5M1413.5 687.3Q1411.5 686 1409.3 685.4M1414.2 685.6Q1412.2 682.5 1411.9 684.3Q1412.6 686.2 1414.2 685.6M1415 683.9Q1413.1 682.4 1410.5 682M1414.9 683.1Q1419.1 678.4 1421.9 672.8M1413.2 681.9Q1419.2 683.2 1416.3 678.3M1414 680.6Q1420 681.8 1417.2 677M1417.6 679.8Q1417 678.3 1415.6 678.1M1418.4 678.5Q1416 676.6 1413 675.6M1419.8 676.4Q1418.3 674.5 1416.3 673.4M1420.6 675.2Q1418.5 670.8 1417.9 673Q1418.4 675.6 1420.6 675.2M1438.9 684.1Q1444.7 681.3 1447.5 675.3M1440.8 682.6Q1439.2 680.6 1436.9 679.1M1442.1 681.4Q1441.9 679.9 1440.6 679.4M1442.2 677.8Q1447.8 680.4 1446.1 675M1445.4 678.3Q1444.1 675.7 1441.5 674.3M1447 676.8Q1446.8 675.2 1445.5 674.7M1449 675.2Q1453.1 672.3 1455.9 668.1M1448.9 675Q1447.7 672.8 1445.8 671.1M1450.2 673.8Q1448.2 671.9 1446.6 669.5M1450.3 670.3Q1455.8 672.9 1454.2 667.5M1453.3 670.9Q1453.1 669.3 1451.7 668.9M1455 669.2Q1454.1 664.5 1452.9 666.5Q1452.8 669.2 1455 669.2M1433.4 679.9Q1437.7 676.7 1441.3 672.7M1433.6 680.1Q1433.5 678.9 1432.4 678.5M1435.1 678.8Q1433.9 676.8 1432.2 675.3M1436.5 677.4Q1436.4 676.2 1435.3 675.8M1437.4 676.6Q1435.5 674.9 1434.3 672.7M1437.5 673.8Q1441.8 675.8 1440.5 671.6M1440.2 674Q1438.4 672.6 1437.4 670.7M1439.6 671.8Q1443.9 673.8 1442.7 669.6M1442.7 671.6Q1446 669.2 1448.2 665.6M1441.3 670.2Q1445.6 672.2 1444.3 668M1443.8 670.5Q1442.5 669 1441.4 667.3M1444.7 669.7Q1443 668.3 1441.5 666.8M1444.2 667.5Q1448.4 669.6 1447.2 665.4M1446.6 668Q1444.6 666.6 1443.3 664.7M1447.7 666.9Q1445.9 665.1 1444.2 663.2M1449.3 665.3Q1451.8 665 1451.9 662.1M1448 663.9Q1452.3 666 1451 661.8M1451.4 663.4Q1450.7 659.7 1449.7 661.3Q1449.7 663.3 1451.4 663.4M1428.4 676.2Q1431.4 674.5 1432.4 671M1428.2 676Q1427 672 1426.1 673.8Q1426.3 676.1 1428.2 676M1427.5 673.5Q1432.4 675.4 1430.6 670.9M1430.6 673.3Q1430.3 672 1429.2 671.7M1432 671.8Q1431.7 670.4 1430.6 670.1M1432.5 670.5Q1436.2 669.1 1437 665.2M1431.2 669.4Q1436.2 671.2 1434.4 666.7M1432.2 668.3Q1437.1 670.2 1435.3 665.7M1433.7 666.6Q1438.6 668.5 1436.8 664M1434.7 665.6Q1439.6 667.4 1437.8 662.9M1437.2 665.2Q1440.1 664.6 1441.2 661.8M1437.6 665.6Q1437.5 664.1 1436.3 663.5M1439.4 664.2Q1437 662.2 1436 659.1M1440.5 663.3Q1440.4 661.8 1439.2 661.2M1441.8 661.6Q1445.9 660.2 1448.2 656.5M1442.1 662Q1442.1 660.4 1440.8 659.9M1442.6 658.4Q1447.8 661.5 1446.6 656M1445.6 659.2Q1445 654.5 1443.7 656.4Q1443.4 659 1445.6 659.2M1445.5 656.2Q1450.6 659.2 1449.5 653.7M1422.6 671.7Q1425.5 669.3 1427.5 666M1422.8 671.9Q1422.5 670.6 1421.4 670.3M1424.1 670.4Q1423 668.5 1421.4 667.2M1423.4 668Q1428.1 669.8 1426.4 665.5M1424.6 666.7Q1429.3 668.5 1427.6 664.1M1426 665.2Q1430.7 667 1429 662.6M1428.8 665Q1430.8 663.9 1431.4 661.5M1428.9 665.1Q1427.7 661.3 1426.9 663Q1427 665.2 1428.9 665.1M1430 663.8Q1428.2 662.7 1426.6 661.3M1431.2 662.5Q1430.1 658.7 1429.3 660.4Q1429.4 662.6 1431.2 662.5M1431.7 661.2Q1433.4 661.9 1432.4 660.2M1430.5 660.1Q1435.3 661.9 1433.6 657.6M1432.7 660.4Q1436.1 660.1 1437.1 656.6M1431.6 659Q1436 661.6 1435 656.9M1432.8 658Q1437.2 660.6 1436.2 656M1435 658.9Q1434.5 654.9 1433.4 656.5Q1433.2 658.7 1435 658.9M1435 656.3Q1439.4 658.9 1438.4 654.2M1439 655.9Q1442.2 654 1444.6 651.2M1437.6 654.2Q1442 656.8 1441 652.1M1439.1 653Q1443.5 655.5 1442.6 650.9M1442.2 653.2Q1441.7 649.2 1440.6 650.8Q1440.3 653 1442.2 653.2M1441.8 650.9Q1446.2 653.4 1445.2 648.8M1442.9 649.9Q1447.3 652.5 1446.4 647.9M1539.8 671.8Q1542.7 669.1 1543.5 664.8M1539.5 671.6Q1537 670.6 1535.4 668.2M1540.5 670.2Q1538.4 668.7 1536.7 666.6M1541.3 669.1Q1539.4 664.6 1538.7 666.8Q1539.1 669.5 1541.3 669.1M1542.5 667.4Q1541 665.2 1538.8 663.8M1541.8 664Q1547.8 665.5 1545.1 660.5M1545.6 663.7Q1550.1 660 1551.4 653.9M1545.3 663.5Q1543.4 659 1542.7 661.2Q1543.1 663.9 1545.3 663.5M1546.2 662.3Q1544.3 657.8 1543.5 660Q1544 662.6 1546.2 662.3M1547.1 661Q1545.2 656.6 1544.4 658.8Q1544.9 661.4 1547.1 661M1546.4 657.6Q1552.4 659.1 1549.7 654.1M1547.6 656Q1553.5 657.5 1550.8 652.5M1551.2 655.3Q1549.3 650.8 1548.5 653Q1549 655.7 1551.2 655.3M1553 652.5Q1555.8 652.1 1554.8 649M1553.1 652.6Q1552.6 651.1 1551.2 650.8M1540.4 672.3Q1542.6 668.6 1546.1 666M1541.8 673.6Q1539.2 668.7 1544.2 669.9M1541.3 670.7Q1542.7 670.8 1543.2 671.9M1543.9 671.2Q1541.3 666.3 1546.2 667.5M1543.7 667.9Q1545.5 669.7 1547.9 671M1544.9 666.4Q1546.5 667.9 1548.2 669.2M1546.8 664Q1549.1 660 1553.4 657.7M1546.9 664.1Q1548.7 665.8 1550.8 667.1M1547.8 663Q1549.6 664.3 1551.2 665.9M1549.3 661.3Q1551.8 662.5 1553 665.1M1550.4 660Q1552.1 661.7 1554.3 662.8M1554.3 655.9Q1555.4 653.1 1558.1 651.6M1554.1 655.7Q1556.5 656.9 1558.2 658.9M1554.9 654.7Q1559.3 655.4 1557.5 656.5Q1555.1 656.7 1554.9 654.7M1556.4 653Q1558.8 654 1560.2 656.3M1559.1 653.4Q1556.4 648.5 1561.4 649.8M1544.7 676.1Q1546.8 671.6 1551.8 670.2M1544.7 676.1Q1546.7 678 1548.6 679.9M1545.8 675Q1550.5 676.2 1548.5 677.3Q1545.8 677.2 1545.8 675M1546.9 674Q1548.4 674.2 1548.9 675.6M1550.5 674Q1548.1 668.4 1553.4 670.2M1551.9 672.6Q1549.5 667 1554.8 668.8M1553 671.5Q1550.6 665.9 1555.9 667.7M1552.1 669.5Q1553.9 666.4 1556.8 664.4M1551.8 669.2Q1554.2 671.1 1556.6 673M1552.9 668.1Q1557.6 669.2 1555.6 670.3Q1552.9 670.3 1552.9 668.1M1556.9 667.6Q1554.5 662 1559.9 663.9M1556.4 664.6Q1558.2 666.5 1560.3 668.1M1558.1 662.5Q1560.5 659.1 1564.7 657.4M1558.3 662.7Q1561.2 664.4 1562.5 667.6M1562.3 662.4Q1559.9 656.8 1565.2 658.6M1563.5 661.2Q1561.1 655.6 1566.4 657.4M1563.4 657.7Q1565.6 659.1 1567.3 660.9M1549.6 679.5Q1550.5 683.1 1553.5 685.2M1551 678.6Q1548.1 682.8 1552.7 682.2M1551.6 679.6Q1548.8 683.8 1553.4 683.2M1552.5 681Q1549.7 685.1 1554.3 684.5M1553.4 682.3Q1550.5 686.4 1555.2 685.8M1554.2 683.5Q1551.3 687.6 1556 687M1554 686.6Q1555.2 689.7 1558 691.8M1553.8 686.7Q1557.8 686.5 1556.4 685.3Q1554.2 684.8 1553.8 686.7M1556.6 687Q1553.7 691.1 1558.3 690.5M1555.5 689.2Q1557.5 687.3 1560.1 686.2M1558.2 689.4Q1555.3 693.5 1559.9 692.9M1557.4 691.9Q1559.3 690.2 1561.4 688.7M1558.4 693Q1558.1 695.8 1561.1 696.4M1559.9 692Q1557.1 696.1 1561.7 695.6M1560.7 693.1Q1557.8 697.2 1562.4 696.6M1559.6 695.2Q1561.4 694.1 1562.9 692.5M1554.3 675.2Q1555.1 678.2 1557.8 679.7M1556.1 674Q1553.1 678.3 1557.9 677.7M1557 675.3Q1554 679.6 1558.8 679M1558.3 680.4Q1560.3 686.2 1564.6 690.4M1557.9 680.6Q1560.1 679.2 1562.4 678M1558.6 681.7Q1562.8 681.5 1561.3 680.3Q1559 679.8 1558.6 681.7M1559.6 683.1Q1561.2 681.8 1562.9 680.9M1561.5 685.9Q1563.5 684.7 1565.6 683.5M1562.6 687.6Q1565.1 686.5 1567.1 684.6M1563.6 689.1Q1565 689.2 1565.6 688.1M1566.1 688.9Q1563.1 693.2 1567.9 692.6M1565.1 690.5Q1565.4 692.5 1566.9 693.7M1564.7 690.7Q1568.9 690.6 1567.3 689.3Q1565.1 688.9 1564.7 690.7M1565.9 692.5Q1567.9 691.3 1569.9 689.9M1559.5 670.6Q1560.5 673.4 1562.8 675.4M1559.4 670.7Q1561.9 669.5 1564.1 668.2M1560.2 672Q1561.6 672 1562.1 671M1561.3 673.5Q1562.6 673.6 1563.2 672.6M1563.7 673.4Q1560.8 677.5 1565.5 676.9M1562.9 675.8Q1564.4 678.8 1566.8 681.1M1564.6 674.7Q1561.7 678.8 1566.3 678.2M1565.5 676.1Q1562.6 680.2 1567.3 679.6M1564.9 678.9Q1567.4 677.9 1569.3 676.2M1566.5 681.2Q1567.8 681.3 1568.4 680.3M1567.3 681.9Q1568.2 684.9 1570.6 687M1568.8 680.9Q1565.9 685.1 1570.5 684.5M1567.6 683Q1568.9 683 1569.5 682M1568.2 683.8Q1570.7 682.8 1572.4 680.6M1570.7 683.8Q1567.8 687.9 1572.4 687.3M1569.5 685.8Q1571.7 685.2 1572.9 683.1M1570.5 687.7Q1570.8 689.9 1573.5 690.4M1570.7 687.6Q1573.3 686.6 1575.2 684.5M1571.6 688.9Q1573 687.4 1574.9 686.7M1572.4 690Q1573.8 688.7 1575.3 687.6M1564.8 665.8Q1565.4 668.5 1567.5 670.2M1564.4 666.1Q1566.8 664.6 1569.1 663.2M1565.4 667.5Q1566.8 667.6 1567.4 666.5M1566.6 669.4Q1568 669.4 1568.6 668.4M1568.5 671.3Q1569 674.7 1571.5 676.6M1570 670.3Q1566.9 674.7 1571.8 674.1M1571.2 672.2Q1568.1 676.6 1573.1 676M1570.8 675.5Q1575 675.3 1573.5 674Q1571.1 673.6 1570.8 675.5M1572.4 677.1Q1574 682.3 1578.2 685.8M1572 677.4Q1574 675.5 1576.4 674.2M1572.9 678.7Q1574.3 678.8 1574.9 677.7M1575.8 679.1Q1572.8 683.5 1577.7 682.8M1574.8 681.5Q1577.1 680 1579.2 678.2M1575.5 682.6Q1577.7 682.1 1578.8 679.9M1576.1 683.5Q1578.2 682.6 1579.8 681M1579 683.8Q1575.9 688.2 1580.9 687.6M1578.9 687.4Q1578.5 687.9 1579.4 687.6M1578.8 687.4Q1580.5 685.9 1582.9 685.3M1560.7 696.7Q1561.2 701.8 1564.1 706.3M1560.6 696.7Q1563.1 697 1565.1 695.7M1563.4 697.4Q1558.5 701.1 1564.1 702.2M1564.3 700.6Q1559.4 704.3 1565 705.4M1562.4 703.2Q1567.1 704.5 1565.9 702.5Q1563.5 701.2 1562.4 703.2M1565.3 703.9Q1560.3 707.6 1566 708.7M1564.4 708Q1563.4 712.3 1566.5 715.4M1566.3 707.5Q1561.4 711.2 1567 712.3M1566.7 709Q1561.8 712.7 1567.4 713.8M1567.2 710.6Q1562.2 714.3 1567.9 715.4M1565.1 712.6Q1568.1 711.1 1571.5 710.7M1566.2 716.7Q1566.2 718.8 1567.9 720.4M1566.2 716.7Q1568.6 715.4 1571.2 715M1569.1 717.5Q1564.2 721.2 1569.8 722.3M1566.8 693.8Q1566.2 696.9 1568.9 698.7M1568.9 693Q1564.8 696.7 1569.9 697.2M1567.5 695.6Q1569.9 694.6 1572.3 693.5M1567.9 696.8Q1570.7 696.6 1573 695M1568.6 698.6Q1572.9 699.4 1571.7 697.7Q1569.4 696.7 1568.6 698.6M1569.3 700.3Q1569.8 703.6 1572 706.3M1569.2 700.3Q1571.6 699.6 1573.9 698.5M1569.7 701.5Q1574 702.3 1572.8 700.6Q1570.5 699.6 1569.7 701.5M1570.3 703.1Q1574.6 704 1573.4 702.3Q1571.1 701.2 1570.3 703.1M1573 703.6Q1568.8 707.4 1573.9 707.9M1573.4 704.7Q1569.2 708.5 1574.4 709M1571.5 706.5Q1571.9 711.6 1573.9 716.4M1571.6 706.5Q1573.6 705.7 1576 706.2M1571.9 708.4Q1574.3 707.6 1576.8 707.4M1572.3 710.6Q1576.4 712.2 1575.5 710.3Q1573.5 709 1572.3 710.6M1572.6 711.8Q1573.9 712.5 1574.9 711.7M1572.9 713.5Q1576.9 715 1576 713.2Q1574 711.8 1572.9 713.5M1573.1 714.8Q1577.2 716.4 1576.3 714.5Q1574.3 713.2 1573.1 714.8M1574.1 717.3Q1573.4 718.7 1574.8 719.7M1574.1 719.6Q1578.1 721.2 1577.2 719.3Q1575.2 718 1574.1 719.6M1573.4 690.6Q1574.1 695 1576.5 698.8M1572.9 690.8Q1574.2 691.2 1575 690.3M1573.5 692.5Q1576.1 691.4 1579 691M1574.1 694Q1576.3 693 1578.6 692.2M1574.9 696Q1576.2 696.4 1577 695.5M1575.5 697.6Q1579.5 698.4 1578.4 696.8Q1576.3 695.9 1575.5 697.6M1576.5 699.8Q1575.7 702.9 1578.7 704.4M1576.3 699.9Q1577.6 700.3 1578.5 699.4M1578.8 700.2Q1574.9 703.7 1579.7 704.2M1579.2 701.4Q1575.3 704.9 1580.1 705.4M1577.6 703.2Q1578.9 703.6 1579.7 702.7M1578.6 704.6Q1578.9 710.5 1580.4 716.2M1580.6 704.2Q1575.5 707.4 1580.9 708.9M1578.9 708.8Q1583.4 710.6 1582.4 708.5Q1580.2 707 1578.9 708.8M1579.3 710.7Q1581.7 711 1583.8 709.4M1579.8 713.2Q1582.5 712.8 1585.3 712.6M1580.2 715.6Q1583 715.4 1585.7 715.1M1580.7 716.9Q1579 718.4 1581.1 719.1M1582.9 716.5Q1577.8 719.7 1583.2 721.2M1580.8 718.5Q1583 718 1585.4 718.2M1579.2 687.8Q1579.9 692.9 1582.7 697.3M1579.1 687.9Q1580.2 688.2 1581 687.4M1579.7 689.6Q1583.4 690.3 1582.3 688.9Q1580.4 688.1 1579.7 689.6M1582 690.2Q1578.5 693.3 1582.8 693.8M1582.5 691.6Q1579.1 694.7 1583.4 695.2M1581.2 693.6Q1583.3 692.9 1585.4 692.1M1581.6 694.7Q1585.3 695.4 1584.2 694Q1582.3 693.1 1581.6 694.7M1582.2 696.1Q1583.3 696.5 1584.1 695.7M1584.4 696.6Q1580.9 699.7 1585.3 700.2M1582.6 697.8Q1583.4 700.4 1585.3 702.6M1584.6 697Q1581.1 700.2 1585.4 700.6M1583.1 698.7Q1584.8 698 1586.5 697.8M1583.6 699.9Q1585.5 699.6 1587.2 698.7M1584.3 701.6Q1587.9 702.3 1586.8 700.9Q1585 700.1 1584.3 701.6M1585.2 702.7Q1585 708.8 1587.1 714.5M1584.7 702.8Q1588.9 704.4 1587.9 702.5Q1585.9 701.1 1584.7 702.8M1585 704.6Q1589.2 706.1 1588.2 704.2Q1586.2 702.9 1585 704.6M1585.3 706.1Q1588.3 706.1 1591.1 705.5M1585.7 708.2Q1587 708.8 1588.1 708M1586.1 710.3Q1588.9 709.5 1591.6 708.9M1586.5 712.3Q1588.7 712.6 1590.6 711.6M1586.9 714.4Q1588.2 715.1 1589.3 714.3M1587.5 714.9Q1586 717 1587.9 718.5M1587.3 716.4Q1590 716.6 1592.5 715.3M1567.4 720.6Q1566.9 723.3 1567.8 726.1M1567.3 720.6Q1570.1 721.4 1572.9 721.3M1567.2 723.5Q1569.8 723.9 1572.4 724.2M1567.1 725.5Q1569.2 726 1571.2 725.4M1567.6 726.7Q1566.5 730.4 1567.3 734.3M1567.1 726.6Q1569.7 726.4 1572.2 727.4M1567 728.8Q1569.8 729.7 1572.6 728.7M1569.1 730.6Q1564.3 732.3 1568.4 734.6M1569 732.6Q1564.2 734.3 1568.4 736.6M1566.9 734Q1570.2 736.2 1569.8 734.4Q1568.2 732.7 1566.9 734M1566.8 734.9Q1566.2 737.4 1567.2 739.9M1569 735Q1564.1 736.7 1568.3 739M1568.9 737Q1564 738.7 1568.2 741M1566.7 738.7Q1567.7 739.5 1568.8 739M1574 719.9Q1573.4 724.4 1573.9 728.9M1574.1 719.9Q1578.2 722.6 1577.6 720.3Q1575.8 718.3 1574.1 719.9M1574 721.9Q1575.3 722.9 1576.6 722.3M1574 723.4Q1575.2 724.4 1576.5 723.8M1573.8 727.5Q1576.8 727.4 1579.7 727.7M1574.1 729.8Q1572.3 733.8 1574.3 737.9M1573.8 729.8Q1576.3 729.5 1578.8 729.7M1573.7 731.6Q1577.8 734.4 1577.2 732.1Q1575.4 730.1 1573.7 731.6M1573.6 734.1Q1576.7 733.9 1579.7 734.4M1573.6 735.6Q1576.7 736.2 1579.9 735.9M1573.8 738.5Q1572.9 739.7 1573.8 741.1M1576 738.5Q1570.2 740.6 1575.2 743.3M1576 740.1Q1570.1 742.1 1575.2 744.9M1580.9 719.2Q1579.5 723.5 1581.3 727.8M1580.9 719.2Q1584.3 721.5 1583.9 719.6Q1582.3 717.9 1580.9 719.2M1583 721.3Q1578.1 723.1 1582.3 725.4M1580.8 722.4Q1581.8 723.3 1582.9 722.8M1580.7 723.8Q1583.4 723.4 1585.9 724.1M1580.7 725.4Q1583 725 1585.3 725.8M1582.8 727.5Q1577.8 729.2 1582.1 731.5M1581.1 728.7Q1579.8 733.1 1580.7 737.6M1580.6 728.7Q1583.3 728.4 1586.1 729M1582.7 730.3Q1577.7 732 1582 734.4M1580.5 731.6Q1582.8 732.3 1585.2 732.4M1580.4 733.2Q1582.6 732.9 1584.8 733.9M1580.3 735.2Q1583.1 735.5 1585.8 735.6M1580.3 737.1Q1583.7 739.4 1583.2 737.4Q1581.7 735.8 1580.3 737.1M1580.5 738.4Q1578.9 740.3 1580.3 742.2M1580.2 738.4Q1582.8 738.6 1585.3 739.2M1587.5 718.5Q1587 724.6 1588.1 730.8M1587.7 718.5Q1589.9 718.5 1592.2 718.6M1587.6 720.2Q1590.3 720.9 1593 719.9M1590 723.4Q1584.3 725.4 1589.2 728.1M1587.5 724.9Q1590.6 725.8 1593.7 725.8M1587.4 726.1Q1590 726.2 1592.5 725.9M1589.8 728.7Q1584.1 730.7 1589 733.4M1587 731.2Q1585.3 735.7 1587.8 740.3M1587.2 731.2Q1589.8 732.2 1592.4 731.6M1587.2 733Q1591.2 735.6 1590.6 733.4Q1588.8 731.5 1587.2 733M1587.1 734.9Q1588.3 735.9 1589.6 735.3M1589.6 736.4Q1583.9 738.3 1588.8 741M1587 738.8Q1589.5 738.9 1592 739.2M1587.5 741.6Q1586.3 742.5 1587.6 743.4M1586.9 741.6Q1589.2 742.1 1591.5 741.8M1582.7 745.9L1583.3 746.3M1583.9 754.4L1584.8 754.3M1564.6 765.7L1564.4 766.5M1546.4 784.5L1546.2 785.4M1559.6 780.1L1559.3 780.9M1558.9 794.2L1558.6 795.1M1543.6 795.5L1543.7 796.2M1529.8 808.4L1529.8 809.1M1520.6 806.9L1521.2 807.5M1469.7 817.9L1468.8 818.1M1460.2 815.2L1459.2 815.3M1460.2 805.8L1460.2 806.8M1428.2 789.3L1427.8 790.2M1414.7 780.4L1414.2 781.1M1411.7 743.3L1411 743.8M1424.5 706.6L1423.9 706.1M1407.8 712.5L1407.3 712M1418.5 675.8L1418 675M1429.4 664.2L1428.6 664M1446.2 647.6L1445.4 647.3M1456.3 654.9L1456.2 654M1546.8 663L1547 662.3M1556.2 659.8L1557.1 659.6M1561.3 699.8L1561.9 699.1M1579.9 703.6L1580.5 702.9M1574.6 711.3L1575.3 711.5"/><path stroke-width="1.3" d="M1573.7 726.3L1574.2 726.6M1574 737L1574.5 736.8M1579.4 737.7L1579.9 737.5M1569.8 741.7L1570.4 741.5M1572.1 749.4L1572.7 749.3M1568.8 745.3L1569.2 745.7M1560.8 752.5L1560.9 753M1569.2 764.7L1569.2 765.3M1567.7 769.5L1567.8 770.1M1563.6 775.9L1563.5 776.4M1563.9 784.8L1563.8 785.3M1558.6 782.7L1558.5 783.3M1580 759.7L1580 760.3M1573.9 772.7L1573.9 773.2M1568.9 779.8L1568.8 780.4M1545.9 791.2L1545.8 791.6M1557.7 784L1557.5 784.4M1560.2 789.3L1560 789.7M1558.9 790.4L1558.7 790.8M1556.5 792.3L1556.4 792.7M1547.5 799.8L1547.3 800.2M1545.4 800.3L1545.2 800.7M1541.9 803.1L1541.8 803.5M1567.5 793.6L1567.3 794.2M1558 801.1L1557.8 801.6M1510.5 809.3L1510.8 809.8M1504.6 812.9L1504.9 813.3M1511.1 820.5L1511.4 820.9M1498.8 803L1498.5 803.2M1485.6 796.6L1485.2 796.8M1482.1 800.8L1481.7 800.9M1500.1 803.7L1499.6 803.9M1493.4 809.7L1492.9 809.9M1473.1 813L1472.7 813.2M1498.5 823.2L1498 823.4M1487.9 817.4L1487.4 817.6M1484.8 817.1L1484.3 817.2M1469.9 796.3L1469.6 796.6M1461.7 819.2L1461.4 819.5M1467.2 803.4L1466.7 803.8M1460.5 818.2L1460.1 818.6M1456.4 786.7L1456 787M1443 807.1L1442.5 807.3M1437.9 801.4L1437.5 801.6M1438.8 784.7L1438.6 785.2M1432.7 780.8L1432.5 781.3M1426.3 781.4L1425.8 781.5M1435.4 771.3L1435.1 771.8M1420.9 781.3L1420.6 781.8M1423.5 775.1L1423 775.2M1414.4 773.7L1413.8 773.7M1430.4 762.8L1429.9 762.8M1414.2 751.6L1413.9 751.9M1412.7 752.2L1412.4 752.5M1429.2 746.1L1428.9 745.7M1421.6 742.8L1421.3 742.3M1401.1 736L1400.8 735.5M1412 709.9L1411.5 710.1M1422.4 708.6L1422 708.3M1418.3 708.7L1417.9 708.4M1401.8 704.7L1401.4 704.4M1408.7 698.9L1408.4 698.5M1427.1 696.1L1427.1 695.6M1424.3 689.8L1424.4 689.3M1415.1 690.1L1415.1 689.6M1417 689.1L1417 688.6M1417.6 688L1417.6 687.5M1420.7 682.3L1420.7 681.8M1418.8 671L1418.9 670.4M1436.4 681.5L1436.6 681M1447.4 661.8L1447.6 661.3M1556 652.4L1556.1 651.8M1554 661.1L1554.5 660.9M1556.7 669.6L1557.3 669.4M1563.1 665.1L1563.6 665M1554.5 678.9L1554.9 679.2M1560.7 677L1561.1 677.2M1563.3 682.7L1563.7 683M1569.3 691.8L1569.7 692M1568.2 678.2L1568.6 678.4M1573.8 672L1574.2 672.2M1565.1 698.4L1565.5 698.8M1570.5 713L1570.9 713.5M1578.1 716.5L1578.4 717M1583.5 705.8L1583.8 706.2M1591.6 714.2L1591.9 714.6M1570.4 722.4L1570.6 722.9M1579 725.8L1579.3 726.3M1584.5 740.8L1584.7 741.2M1585.4 722L1585.6 722.5"/></g><g fill="none" stroke="#161716" stroke-linecap="round" stroke-linejoin="round" clip-path="url(#k2b)"><path stroke-width="2.2" d="M1487.1 683.5l2 -4.9M1494.4 682.6l2 -4.9M1501.7 682.5l2 -4.9M1509 683.2l2 -4.9M1516.3 684.6l2 -4.9M1523.6 686.9l2 -4.9M1530.9 690.2l2 -4.9M1538.2 694.5l2 -4.9M1545.5 700.2l2 -4.9M1552.8 707.7l2 -4.9"/><path stroke-width="2.4" d="M1476.3 782c-6 -8 6 -12 5 -2M1500.9 779.1c-6 -8 6 -12 5 -2M1515.7 772.2c-6 -8 6 -12 5 -2"/><path stroke-width="2.6" d="M1446.7 698.2q6 -8 12 0q6 8 12 0M1441.8 727.8q5 -7 10 0q5 7 10 0M1456.6 749.5q6 -8 12 0q6 8 12 0"/><path stroke-width="3" d="M1478.3 685.4Q1486.1 697.3 1493 711.1M1492.8 690.4Q1500.7 702.2 1507.6 716M1507.4 698.4Q1515.3 710.3 1522.2 724.1M1522 709.9Q1529.9 721.7 1536.8 735.5M1450.9 693.4q4.9 -7.9 8.9 -1q-3 5.9 -8.9 1M1454.1 718.6q4.9 -7.9 8.9 -1q-3 5.9 -8.9 1M1486.6 699.2q4.9 -7.9 8.9 -1q-3 5.9 -8.9 1M1472.6 701.2q4.9 -7.9 8.9 -1q-3 5.9 -8.9 1M1452.2 688q4.9 -7.9 8.9 -1q-3 5.9 -8.9 1M1481 683.3q4.9 -7.9 8.9 -1q-3 5.9 -8.9 1M1448.9 754.8q4.9 -7.9 8.9 -1q-3 5.9 -8.9 1M1472.5 719.2q4.9 -7.9 8.9 -1q-3 5.9 -8.9 1"/><path stroke-width="3.2" d="M1481.1 771c-5.9 7.9 7.9 9.9 11.8 -3M1474.6 686l2 -13.8M1469.8 752c-5.9 7.9 7.9 9.9 11.8 -3M1462.5 684.9l2 -13.8M1474.5 753l2 -13.8M1486.3 745.6l2 -13.8M1455.5 751.5c-5.9 7.9 7.9 9.9 11.8 -3M1469.3 738l2 -13.8"/><path stroke-width="3.4" d="M1443.9 732q5.9 -8.9 11.8 0q5.9 8.9 11.8 0M1446.4 763q5.9 -8.9 11.8 0q5.9 8.9 11.8 0M1474.7 709.5q5.9 -8.9 11.8 0q5.9 8.9 11.8 0M1454.3 732.6q5.9 -8.9 11.8 0q5.9 8.9 11.8 0M1451.4 712.5q5.9 -8.9 11.8 0q5.9 8.9 11.8 0M1458 744q5.9 -8.9 11.8 0q5.9 8.9 11.8 0M1478.6 691.1q5.9 -8.9 11.8 0q5.9 8.9 11.8 0M1469.1 736.7q5.9 -8.9 11.8 0q5.9 8.9 11.8 0"/><path stroke-width="3.7" d="M1485.2 667.7L1483.2 770.6M1492.5 666.8L1490.5 771.1M1499.7 666.7L1497.8 771.2M1507 667.4L1505.1 770.7M1514.3 668.9L1512.4 769.8M1521.6 671.2L1519.7 768.4M1528.9 674.4L1527 766.4M1536.2 678.7L1534.3 763.7M1543.5 684.4L1541.5 760.2M1550.8 691.9L1548.8 755.5"/><path stroke-width="4.1" d="M1434.9 706.1Q1448.7 692.3 1466.4 688.4M1432.9 719.9Q1456.6 731.7 1484.2 710.1M1434.9 737.7Q1456.6 753.4 1486.1 731.7M1438.8 761.3Q1466.4 773.2 1496 757.4M1446.7 775.1Q1486.1 796.8 1545.3 765.3"/></g><g transform="translate(1491.4 587.7) scale(1.002970297029703)"><path d="M0 0L5.5 19L2.8 18L3 88H-2.5L-2.3 18L-5 20Z" fill="#161716"/><g fill="none" stroke="#161716" stroke-linecap="round"><path d="M-4 12Q-12 28 -5 42" stroke-width="4"/><path d="M12 37V52Q16 57 20 52V38M16 40V50" stroke-width="2.8"/><path d="M30.5 58Q33 80 27 86Q15 94 1 82" stroke-width="5.8"/><path d="M-14 57Q-13 84 -5 86Q2 87 1 72" stroke-width="5.8"/><path d="M-32 62Q-34 82 -23 85Q-14 86 -14 66" stroke-width="5.4"/><path d="M-32 64L-36 56" stroke-width="3.5"/><path d="M-22 62L-3 49" stroke-width="2"/><path d="M-44 92Q-22 102 0 90Q20 102 46 93" stroke-width="3.5"/></g><path d="M28 48L34 63L27 62Z" fill="#161716"/><path d="M-33 54L-37 60L-31 62Z" fill="#161716"/></g><circle cx="1161" cy="458" r="55" fill="none" stroke="#161716" stroke-width="4.8"/><g fill="none" stroke="#161716" stroke-linecap="round" stroke-linejoin="round" clip-path="url(#f1a)"><path stroke-width="2.2" d="M1201.9 491.5q7.1 -14.2 14.2 0q-7.1 14.2 -14.2 0M1117.1 396.6q7.6 -15.2 15.2 0q-7.6 15.2 -15.2 0M1112.2 438.1q7 -14 14 0q-7 14 -14 0M1125.5 521.6q6.3 -12.7 12.7 0q-6.3 12.7 -12.7 0M1198.1 419.8q5.9 -11.8 11.8 0q-5.9 11.8 -11.8 0"/><path stroke-width="2.4" d="M1217.7 461.2Q1225.7 460.8 1233.4 463.2M1217.7 461.4Q1217.5 466.2 1217.1 471M1220.2 461.6Q1223.8 468.7 1220.3 467.3Q1217.4 463.9 1220.2 461.6M1222.5 465.9Q1226.9 456.9 1230.3 465.6M1227 462.2Q1226.5 467.1 1227 472.1M1236 463.4Q1241.4 460.5 1246.1 464.9M1236.1 462.9Q1239.6 470 1236.1 468.7Q1233.3 465.3 1236.1 462.9M1242.4 463.5Q1246 470.6 1242.4 469.2Q1239.6 465.9 1242.4 463.5M1244.6 467.8Q1249 458.8 1252.5 467.5M1249.1 464.6Q1251.3 461.3 1253 465.5M1216.6 471.7Q1223.1 471 1228.4 474.8M1215.9 474.5Q1220.9 467.5 1222.5 475.3M1223.6 476.5Q1228.6 469.6 1230.3 477.3M1227 473.7Q1229 480.2 1226.2 478.6Q1224.3 475.3 1227 473.7M1230.3 474.9Q1236.1 474 1240.6 478M1231.6 478.6Q1236.6 471.7 1238.2 479.4M1235.4 475.9Q1237.3 482.4 1234.6 480.8Q1232.7 477.5 1235.4 475.9M1238.5 476.7Q1236.8 480.3 1237 484.4M1242 478.2Q1247.2 476.8 1251.1 480.1M1242.2 477.7Q1243 479.8 1241.7 481.3M1247 479Q1248.9 485.5 1246.2 483.8Q1244.3 480.6 1247 479M1249.4 479.6Q1250.2 481.7 1248.9 483.2M1210.6 488.4Q1216.5 492.1 1223.5 493.5M1212 485.3Q1211.5 494.1 1217.9 489M1213.3 489.9Q1215.3 488.8 1215.3 486.8M1220.6 493.2Q1222.6 492.1 1222.5 490.1M1224.1 493.9Q1226.8 498.6 1232.3 497.2M1223.7 494.7Q1229.5 490.8 1226.2 490.3Q1222.6 491.6 1223.7 494.7M1226.2 495.8Q1232 491.9 1228.7 491.4Q1225.1 492.8 1226.2 495.8M1231.2 494Q1230.6 502.8 1237 497.7M1234.2 498.7Q1237.4 503.5 1242.9 503.2M1235.5 496Q1234.9 504.8 1241.3 499.7M1236.6 500.6Q1238.6 496.5 1240.3 492.3M1239 501.6Q1242 498 1243.5 493.6M1210.4 488.8Q1216.5 490.6 1219.8 496.3M1210.3 488.9Q1210 496.3 1207.8 493.6Q1207 489.6 1210.3 488.9M1212.8 490.6Q1212.5 497.9 1210.3 495.3Q1209.5 491.3 1212.8 490.6M1213.5 495.7Q1221.2 490.4 1220.1 499M1218 494.1Q1217.7 501.4 1215.4 498.8Q1214.6 494.7 1218 494.1M1222.1 497.2Q1228.7 499.3 1232.4 505.6M1222.3 497Q1220.8 500.9 1218.4 504.1M1223.9 498.1Q1223.6 505.4 1221.3 502.8Q1220.6 498.7 1223.9 498.1M1226.7 500Q1223.8 503.7 1222.2 508.4M1230 502.2Q1229.7 509.6 1227.4 506.9Q1226.7 502.9 1230 502.2M1232.7 504Q1232.4 511.4 1230.1 508.7Q1229.4 504.7 1232.7 504M1234.1 505.1Q1238.4 504.8 1239.2 509.7M1232 508.2Q1239.6 502.9 1238.5 511.5M1235.1 510.3Q1242.7 505 1241.6 513.6M1239.6 508.7Q1236.9 511.3 1235.8 514.9M1205.1 496.5Q1209.7 498.5 1211.8 503M1210.7 501.5Q1207.9 503.6 1206.3 506.9M1213.9 504.6Q1218.3 507.8 1221.7 512.2M1214 504.5Q1212.5 511.8 1210.6 508.7Q1210.5 504.6 1214 504.5M1215.6 506Q1213.4 509.5 1209.6 511.3M1215.1 510.9Q1223.6 506.8 1221.1 515.2M1219.3 509.5Q1216.1 512.8 1213.1 516.2M1222.8 512.7Q1228.9 514.6 1230.4 521.5M1220.1 515.6Q1228.6 511.5 1226.1 519.9M1224.4 514.3Q1224.1 516.7 1222.1 517.4M1229.3 518.9Q1227.8 526.2 1226 523.1Q1225.9 519 1229.3 518.9M1228.2 523.2Q1236.7 519.1 1234.2 527.5M1200 504Q1194 504.6 1190.4 509.8M1199.8 503.7Q1200.4 506.8 1202.7 509M1197.5 504.9Q1199.5 508.4 1200.9 512.3M1195.9 505.8Q1195.6 507.8 1197.1 508.8M1194 506.8Q1194.6 510.3 1197 512.9M1192.6 507.6Q1194.3 511.2 1196.4 514.6M1187.4 510Q1180.9 512.6 1175.8 517.8M1183.2 512.6Q1184.7 516 1186.2 519.3M1182.2 516.9Q1176.2 511.8 1176.4 519M1178.8 515Q1180.8 518.3 1182 522M1176.6 516.2Q1176.3 518.2 1177.8 519.2M1208 512.8Q1203.9 513.2 1201.7 517.1M1209.5 515.7Q1202.7 509.9 1203 518.2M1206.1 513.3Q1205.7 515.6 1207.4 516.8M1203.3 514.8Q1203 517.1 1204.7 518.3M1201.5 515.8Q1201 522.9 1203.5 520.5Q1204.6 516.8 1201.5 515.8M1200.7 517Q1193.6 517.5 1189.2 523.1M1200.4 516.4Q1200 523.4 1202.4 521.1Q1203.6 517.3 1200.4 516.4M1198.5 517.4Q1198.1 524.5 1200.6 522.1Q1201.7 518.3 1198.5 517.4M1197.2 522.3Q1190.4 516.5 1190.6 524.8M1192.1 520.9Q1194.6 524.8 1196.5 529M1191.6 525.4Q1184.8 519.6 1185 527.8M1187 523.4Q1182.1 524.9 1178.7 529.3M1187.1 523.6Q1188.1 526.9 1189.7 530M1184.4 525Q1184 532.1 1186.4 529.7Q1187.6 525.9 1184.4 525M1182.2 526.2Q1181.8 533.3 1184.2 530.9Q1185.3 527.2 1182.2 526.2M1181.8 530.7Q1175 524.9 1175.2 533.1M1215.6 520.8Q1210.2 521.6 1207.4 526.9M1215.7 521.2Q1217.2 525.2 1220.1 528.5M1213 522.7Q1212.7 524.7 1214.2 525.8M1210.2 524.2Q1211.2 528.4 1213.4 532M1205.5 527Q1201.5 528 1198.9 531.6M1205.4 526.8Q1206.9 530.6 1209.1 534.1M1203.4 527.8Q1205.9 531 1207.7 534.5M1201.8 528.7Q1203 532.1 1205.5 534.8M1201.4 532.6Q1195.4 527.5 1195.6 534.9M1196.8 532.1Q1190.9 533.7 1186.3 537.7M1198.1 534.5Q1192 529.3 1192.2 536.7M1194 532.9Q1195 536.8 1197.7 539.7M1192.6 537.4Q1186.5 532.2 1186.7 539.6M1183.9 538.8Q1182.2 538.6 1181.4 540.2M1183.7 538.4Q1183.4 540.5 1184.9 541.6M1175.3 517.6Q1169.8 514.7 1164.8 518.9M1175.3 516.9Q1174 518.9 1175.1 520.8M1171.8 521Q1167.9 512.5 1164.5 520.5M1167.6 517.4Q1164.2 524 1167.5 522.8Q1170.2 519.7 1167.6 517.4M1164.1 518.6Q1159.1 516.4 1154.4 518.9M1164.1 517.6Q1164.9 521.2 1163.8 524.9M1161.9 517.8Q1158.5 524.3 1161.8 523.1Q1164.5 520 1161.9 517.8M1158.6 518Q1155.1 524.6 1158.4 523.4Q1161.1 520.3 1158.6 518M1155.4 522.1Q1151.5 513.6 1148.1 521.6M1178.2 528Q1169.5 528 1160.9 530.7M1175.5 528.5Q1175.8 532.2 1176.6 535.8M1172.5 528.7Q1172.8 532.3 1172.5 536M1169.7 532.6Q1166 524.6 1162.8 532.1M1167.4 532.7Q1163.7 524.8 1160.5 532.3M1164.2 532.9Q1160.4 525 1157.3 532.5M1161.5 529.5Q1161.4 533.2 1161.4 537M1158.3 529.3Q1155.6 528.7 1153 530.6M1158.3 529.7Q1158.8 534.2 1159.5 538.8M1155.9 533.5Q1152.1 525.6 1149 533.1M1181.2 540.5Q1172.5 537.5 1164.3 542M1181.2 539.8Q1177.5 546.8 1181 545.5Q1183.9 542.2 1181.2 539.8M1178.7 540Q1177.3 542.1 1178.5 544.1M1175.9 540.2Q1172.3 547.1 1175.8 545.8Q1178.7 542.6 1175.9 540.2M1173.1 544.5Q1168.9 535.5 1165.3 544M1169 544.8Q1164.7 535.8 1161.2 544.3M1166.4 540.8Q1162.8 547.7 1166.3 546.5Q1169.2 543.2 1166.4 540.8M1161.6 541.3Q1157 538.9 1152.9 543.2M1161.6 541.1Q1161.2 546.4 1162.6 551.6M1155.2 541.6Q1154.9 546.1 1155.6 550.5M1153.6 517.1Q1153.6 523.9 1150.9 530.1M1154.1 517.3Q1150 517.1 1146.2 515.8M1153.4 520.8Q1149 520.3 1144.7 519.1M1148.9 523.3Q1156.8 528.4 1148.4 530.6M1150.4 532.6Q1151.7 538.8 1148.5 544.1M1151 532.7Q1144 535.2 1145.6 532.1Q1149.1 529.8 1151 532.7M1150.5 534.8Q1148.3 535.9 1146.6 534.5M1149.9 537.9Q1142.9 540.4 1144.5 537.3Q1148 535 1149.9 537.9M1149.4 540.2Q1145.8 538.9 1141.8 539.6M1149 542.2Q1145.6 540.9 1141.9 541.6M1148 545.8Q1150.4 549.5 1146.7 552M1143.3 550.8Q1151.2 555.9 1142.8 558.2M1136.7 512.2Q1131.1 518.2 1131.9 526.7M1133.9 517.7Q1137.8 519.9 1142.4 520.3M1133.2 519.5Q1134.4 521.4 1136.5 521.2M1131.1 525Q1135.1 527.4 1139.7 528.3M1129.6 527.7Q1125.5 532.9 1126 539.9M1129.9 527.9Q1133 530 1136.8 530M1132 532.5Q1123.2 532.5 1128.7 538.6M1127.8 533.4Q1130.7 535.6 1134.6 535.4M1124.3 541.9Q1121.4 542.5 1124.1 545.3M1124.4 541.9Q1125.6 543.9 1127.7 543.7M1123.4 544.5Q1127.6 550.1 1127.9 546.8Q1126.4 543.3 1123.4 544.5M1128.3 507.3Q1122.9 512.8 1121.8 520.9M1128.3 507.3Q1132.4 509.2 1136.2 511.9M1130.4 510.9Q1121.7 509.4 1126.1 516.3M1125.8 511.5Q1126.6 513.6 1128.7 513.7M1127.5 515.6Q1118.9 514.2 1123.3 521M1122.6 516.7Q1125.9 522.9 1126.7 519.7Q1125.8 515.9 1122.6 516.7M1121.4 518.8Q1122.3 520.9 1124.3 521.1M1119.1 522.4Q1113.3 529 1111.5 537.9M1119.2 522.5Q1122.5 528.6 1123.3 525.4Q1122.3 521.7 1119.2 522.5M1117.9 524.8Q1121.2 527.5 1124.7 530M1113.4 532.3Q1117 535.6 1121.9 536.6M1112.4 534.1Q1113.2 536.2 1115.2 536.3M1128.7 507.6Q1126.1 512.7 1120.6 515.4M1125.8 505.2Q1130 512.7 1122.2 510.9M1126.3 510.2Q1119.5 509.3 1122.2 507.4Q1126 507.1 1126.3 510.2M1120.3 511.8Q1124.6 519.4 1116.7 517.6M1121.5 516.1Q1118.1 514.7 1116.3 511.5M1120.7 517.6Q1117.1 525.6 1109 530.1M1117.7 515.1Q1121.9 522.6 1114.1 520.8M1116.1 517Q1120.3 524.5 1112.5 522.7M1117.2 521.2Q1114.5 519.1 1111.9 516.9M1115.8 522.9Q1113.3 520.1 1110.1 518.3M1110.8 523.4Q1115 530.9 1107.2 529.1M1107.2 527.7Q1111.4 535.3 1103.6 533.5M1108.5 531.3Q1108.1 533.7 1105.8 534.7M1108.8 531.5Q1106.5 531.4 1105.7 529.6M1106.4 534.3Q1102.9 532.8 1100.9 529.4M1121.7 501.8Q1115.8 509.7 1107.1 514.5M1119.3 499.1Q1122.6 507.9 1114.4 504.7M1119.8 503.8Q1117.5 503.3 1116.9 501.2M1117.9 505.5Q1115.9 502.5 1112.7 500.6M1112.1 510.7Q1104.9 508.6 1108.1 507.1Q1112.3 507.3 1112.1 510.7M1109.5 513Q1102.4 510.9 1105.6 509.3Q1109.7 509.6 1109.5 513M1105.9 516.1Q1102.7 522.9 1095.3 524.9M1103.4 513.3Q1106.7 522.1 1098.6 518.9M1104.1 517.8Q1101.7 517.3 1101.2 515.2M1097.2 524Q1090.1 521.9 1093.3 520.3Q1097.4 520.5 1097.2 524M1116.6 496.2Q1109.4 502.7 1100.4 506.4M1116.4 496Q1113.9 492.7 1111.7 489.3M1113 498.2Q1110.4 497.3 1110.1 494.9M1108.6 501.1Q1105.5 497.2 1102.7 493.2M1103.5 499.3Q1105.7 509.6 1097.2 504.7M1099.8 501.7Q1102 512 1093.5 507.1M1099.3 506.8Q1094.3 511.3 1088.3 514.3M1099.5 507.1Q1091.9 503.6 1095.7 502.4Q1100.3 503.3 1099.5 507.1M1090.5 513.1Q1082.9 509.6 1086.7 508.4Q1091.3 509.3 1090.5 513.1M1111.9 489.3Q1106.9 493.8 1100.1 494.5M1112.1 489.6Q1109.4 486.8 1109.5 482.6M1101.1 494.9Q1098.9 493.8 1098.9 491.6M1099.5 496Q1095.6 500.5 1089.1 499.4M1097.6 496.6Q1094.9 492.2 1092.6 487.6M1087.4 501.3Q1084.7 505.2 1079.8 504.5M1087.5 501.5Q1084.2 497.8 1083.2 493M1080.5 504.9Q1078.6 500.7 1076.5 496.7M1108.8 483Q1103.9 485.5 1098.1 485.3M1103.2 480.1Q1102.7 490.3 1096.1 483.6M1099.9 481.2Q1099.3 491.3 1092.7 484.7M1097.9 486.7Q1088.7 492.2 1077.6 491.9M1094 483.1Q1093.4 493.3 1086.8 486.6M1087.9 485.1Q1087.3 495.3 1080.7 488.6M1084.6 486.2Q1084 496.3 1077.4 489.6M1081.9 487.1Q1081.3 497.2 1074.7 490.5M1075.1 493.2Q1075.4 494.6 1074.8 493.5M1075.3 493.7Q1073.1 492.1 1073.5 489.8M1106.1 474.7Q1098.1 479.3 1089.1 478.6M1106.2 475.5Q1104.5 472.2 1105.1 468.5M1104.1 475.9Q1103.3 472.1 1102 468.4M1096 473.9Q1094.4 482.1 1089.7 475.9M1093.6 474.3Q1092 482.5 1087.4 476.3M1091.2 478.3Q1089.6 476.8 1090.2 474.9M1087.5 478.7Q1079.6 481.3 1071.1 480.9M1087.6 478.9Q1086.9 475 1086.6 471M1081.7 476.5Q1080.1 484.7 1075.5 478.5M1079.2 480.4Q1077.6 479 1078.1 477.1M1075.3 481.1Q1070.9 476.2 1074 476.5Q1077.1 478.6 1075.3 481.1M1072.1 481.7Q1071.6 477.7 1070.4 473.9M1104.4 458.8Q1098.8 457.8 1093.2 459.4M1104.5 462Q1101.3 454.6 1098.2 461.5M1102.1 458.8Q1100.9 460.5 1101.8 462.2M1099.7 458.9Q1100.7 462 1100 465.2M1097.3 462.3Q1094.1 454.9 1091 461.7M1094.5 459.1Q1093.3 460.8 1094.2 462.4M1091.3 458.8Q1082.6 458.6 1073.9 460M1091.3 459.2Q1088.2 464.8 1091.1 463.8Q1093.5 461.2 1091.3 459.2M1088.1 459.3Q1085 464.9 1087.9 464Q1090.3 461.3 1088.1 459.3M1085.2 462.8Q1082 455.4 1078.9 462.2M1081.6 459.6Q1080.4 461.3 1081.4 462.9M1078.4 459.7Q1077.9 463 1079 466.2M1075.4 459.8Q1072.3 465.4 1075.2 464.4Q1077.6 461.8 1075.4 459.8M1072.3 460Q1070.5 457.7 1068.9 460.3M1072.3 459.9Q1071.3 464.3 1072.8 468.6M1070.5 463.4Q1067.3 455.9 1064.2 462.8M1104.3 459.3Q1096.8 460.7 1089.7 457.2M1104.7 455.7Q1100.6 463.7 1097.7 455.9M1101.6 459.1Q1098.6 452.7 1101.7 454Q1104.2 457 1101.6 459.1M1095.8 458.5Q1092.8 452 1095.9 453.3Q1098.4 456.4 1095.8 458.5M1089.8 457.8Q1088.6 455.8 1089.7 454.1M1088.1 456.7Q1081.9 458 1076.1 454.9M1088.4 453.9Q1084.3 461.9 1081.4 454.1M1079.8 456.7Q1078.6 454.7 1079.7 453M1077 456.4Q1077.3 453 1078.1 449.6M1073.2 455.5Q1070.8 458.5 1069.2 454.6M1073.5 452.3Q1069.4 460.3 1066.5 452.5M1071 452Q1066.8 460 1063.9 452.2M1107.3 443Q1102.1 440.2 1096.1 440.6M1107.5 442.4Q1106.3 445.4 1106.1 448.6M1105.3 441.9Q1100.4 446.6 1103.6 446.5Q1106.9 444.6 1105.3 441.9M1103.1 441.3Q1101.2 445.3 1100.1 449.5M1100 444.2Q1099 435.6 1093.7 441.6M1097.4 443.5Q1096.4 434.9 1091.1 440.9M1094.6 439.3Q1090.8 436.7 1085.9 438.2M1093.7 442.6Q1092.7 434 1087.5 440M1092.9 438.6Q1087.9 443.4 1091.2 443.3Q1094.5 441.4 1092.9 438.6M1087 437.1Q1086.3 440.7 1084.6 444M1084.6 437.1Q1079.3 433.7 1073 433.7M1084.7 436.5Q1084 440.2 1083.2 443.8M1082.9 436Q1078 440.8 1081.3 440.7Q1084.5 438.8 1082.9 436M1080.3 435.4Q1075.4 440.1 1078.7 440Q1081.9 438.1 1080.3 435.4M1073.4 437.3Q1072.4 428.7 1067.1 434.7M1105.9 442.2Q1110.5 437.2 1112.7 430.9M1103.4 440.8Q1111.6 441.9 1107.2 435.5M1107.3 440.7Q1106.4 438.8 1104.5 438.7M1108.2 439.1Q1105.2 436.1 1101.2 434.8M1106.1 435.8Q1114.3 436.9 1110 430.6M1110.2 435.5Q1109.3 433.5 1107.4 433.4M1113.6 428.1Q1116.9 427.6 1115 424.2M1114.1 428.4Q1110.9 427.1 1108.3 424.9M1112.1 424.8Q1120.4 425.9 1116 419.5M1094.7 438.4Q1099.9 433.9 1100.4 426.7M1095.2 438.6Q1092.1 437.1 1089.4 434.6M1094 434.1Q1101.7 435.2 1097.6 429.2M1098.3 433Q1095.2 427.7 1094.6 430.5Q1095.5 433.8 1098.3 433M1099.5 430.9Q1095.9 429.7 1093 427.4M1098.1 426.7Q1105.8 427.7 1101.7 421.8M1102.9 425Q1106.4 422 1106.8 417.4M1099.9 423.4Q1107.6 424.4 1103.5 418.5M1101.5 420.4Q1109.2 421.5 1105.1 415.5M1105.9 419.1Q1102.9 413.7 1102.3 416.6Q1103.2 419.9 1105.9 419.1M1083.6 434.6Q1090.4 429.7 1090.4 421.1M1084 434.8Q1082.9 432.4 1080.5 432.3M1085.8 431.5Q1084.7 429.1 1082.3 429M1083.8 426.2Q1094.1 427.5 1088.7 419.6M1089.7 424.5Q1085.6 417.3 1084.7 421.2Q1086 425.5 1089.7 424.5M1091.6 419.3Q1096.8 416.8 1096.6 411.4M1088.6 417.6Q1098.8 418.9 1093.4 411M1093.9 416.7Q1092.8 414.3 1090.4 414.2M1096 412.9Q1092 405.8 1091.1 409.6Q1092.4 414 1096 412.9M1115.8 424.5Q1122.1 420.6 1125.9 414.1M1116.1 424.8Q1114.4 422.5 1112.7 420.1M1119.6 421.6Q1117.9 418.8 1115.6 416.7M1119.6 417.2Q1126.7 420.6 1124.6 413.6M1124.2 417.4Q1123 411.2 1121.4 413.8Q1121.3 417.2 1124.2 417.4M1126.5 415.2Q1126.3 413.2 1124.6 412.5M1127.2 414.8Q1129.1 415.3 1128.2 412.6M1107.2 417.7Q1112.4 415.7 1114.4 410.1M1104.2 414.5Q1112.7 418.7 1110.3 410.2M1108.9 415.5Q1107.5 408.2 1105.6 411.2Q1105.4 415.4 1108.9 415.5M1114 410.8Q1113.8 408.4 1111.7 407.6M1115.2 409Q1120.2 407.9 1121.2 402.3M1115.6 409.4Q1114.1 402 1112.3 405.1Q1112.1 409.3 1115.6 409.4M1117.6 407.5Q1116.2 400.1 1114.3 403.2Q1114.1 407.4 1117.6 407.5M1096.9 409.2Q1104.1 405.6 1109 399.4M1099.4 402.5Q1108.7 407.1 1106.1 397.8M1102.6 399.5Q1112 404.1 1109.3 394.8M1107.5 400.9Q1103.9 397.3 1101.1 392.8M1110.2 397.9Q1114.1 397.1 1115.2 393.3M1109.2 393.5Q1118.5 398.1 1115.9 388.8M1114.8 394.2Q1114.6 391.5 1112.3 390.6M1128.7 413Q1133.7 413 1137.1 408.9M1128.7 413.2Q1129.9 406.8 1127.4 408.7Q1126 412 1128.7 413.2M1129.3 409.3Q1134.8 415.3 1135.5 407.8M1132.4 411.7Q1130.5 408.9 1129.7 405.7M1133.8 407.5Q1139.4 413.6 1140 406M1137 409.9Q1136.3 405.6 1134.8 401.6M1137.9 409.6Q1141.6 408.7 1144.8 406.6M1137.9 409.6Q1136.9 406.5 1135.7 403.6M1139.6 408.9Q1140.2 406.8 1138.8 405.6M1140.6 404.8Q1146.2 410.9 1146.9 403.3M1143.4 403.7Q1149 409.7 1149.7 402.2M1146.6 405.7Q1150 406.9 1151.5 403.1M1146.7 406.1Q1147.9 399.7 1145.4 401.6Q1144 404.9 1146.7 406.1M1149.3 405.1Q1147.4 402.2 1147 398.7M1122.1 403.4Q1131.4 401.5 1139.3 396.1M1124.5 402.4Q1122.3 398.3 1121.8 393.5M1127.9 401.1Q1127 396.3 1124.1 392.3M1142.3 395.7Q1147 396.3 1149.6 391.3M1142.2 395.4Q1141.4 390.7 1139.7 386.3M1143.9 390.4Q1150.6 397.6 1151.4 388.5M1147 389.2Q1153.7 396.4 1154.5 387.3M1115.3 393Q1122.5 392 1128.5 388.1M1115.5 393.6Q1116.8 386.4 1114 388.5Q1112.4 392.2 1115.5 393.6M1118.1 392.5Q1116.7 387.7 1115.4 382.8M1121.7 391.1Q1123 383.9 1120.3 386Q1118.7 389.8 1121.7 391.1M1124.1 390.2Q1122.4 386.8 1121.4 383.2M1130.4 386.8Q1138.4 387.4 1143.6 381.4M1130.7 387.6Q1132 380.4 1129.2 382.5Q1127.6 386.2 1130.7 387.6M1131.5 383.2Q1137.7 389.9 1138.5 381.4M1136.4 385.3Q1137 383 1135.4 381.6M1138.8 384.4Q1139.4 382.1 1137.9 380.6M1140.8 383.6Q1140.4 379.2 1137.9 375.6M1144.9 382Q1147 382.7 1147.6 379.4M1144.9 382Q1146.2 374.8 1143.4 376.9Q1141.8 380.6 1144.9 382M1152 403.3Q1155.3 404.8 1158.8 404.1M1151.9 404Q1155.6 399.2 1152.7 399.7Q1150.1 401.9 1151.9 404M1154.1 401Q1156.2 408.5 1160 402.4M1155.4 404.4Q1159.1 399.5 1156.3 400Q1153.6 402.2 1155.4 404.4M1158.8 401.5Q1160.9 408.9 1164.7 402.9M1159.2 404.2Q1164.5 406.3 1170.1 404.8M1159.2 404.8Q1158.8 401 1159.5 397.3M1165 405.3Q1168.7 400.4 1165.8 401Q1163.2 403.1 1165 405.3M1168.4 405.6Q1168.8 402.3 1170 399M1171.4 406.3Q1176 408 1181 405.7M1173.8 406.2Q1177.5 401.3 1174.6 401.8Q1172 404 1173.8 406.2M1176.5 403.2Q1178.6 410.7 1182.4 404.6M1178.5 403.4Q1180.6 410.9 1184.4 404.8M1179.8 406.8Q1180.2 403.1 1180 399.4M1150 392.2Q1155 393.9 1160.2 392.8M1150 392.4Q1150.2 388.5 1150.2 384.7M1155.2 392.9Q1155.3 389.8 1155.5 386.8M1158.3 393.2Q1158.4 389.6 1159.4 386.2M1162.1 393Q1165.8 395.1 1169.9 394M1165 393.8Q1168.7 388.9 1165.9 389.5Q1163.2 391.6 1165 393.8M1171.2 393.9Q1177.9 397.1 1185 395.1M1171.2 394.4Q1172.4 390.5 1172.1 386.5M1174.1 394.7Q1177.8 389.8 1175 390.4Q1172.3 392.5 1174.1 394.7M1176.7 391.7Q1178.8 399.2 1182.6 393.1M1178.8 395.1Q1182.5 390.3 1179.6 390.8Q1177 393 1178.8 395.1M1184.1 392.4Q1186.2 399.9 1190 393.8M1148.1 381Q1155.8 382.7 1163.7 382M1148.1 380.7Q1148.1 375.1 1149.5 369.7M1152.6 376.7Q1155.5 386.9 1160.6 378.6M1155 381.3Q1160 374.7 1156.1 375.4Q1152.5 378.4 1155 381.3M1162.2 382Q1163.5 377.1 1163.2 372.1M1167 382.1Q1176.3 386.7 1186.4 383.5M1167 382.5Q1172 375.9 1168.1 376.6Q1164.5 379.5 1167 382.5M1175.4 378.9Q1178.2 389.1 1183.4 380.8M1178.7 383.6Q1180.5 381.6 1179.7 379.3M1182.8 379.7Q1185.7 389.8 1190.9 381.5M1186.1 380Q1188.9 390.1 1194.1 381.8M1187.5 383.4Q1188.1 385.6 1189.1 383.8M1188.2 411.3Q1193.7 405 1194.3 396.5M1185.3 410Q1194.7 410.6 1189.3 403.8M1190.9 407.2Q1187 405.2 1183.2 402.9M1188.4 403.2Q1197.8 403.8 1192.4 397M1193.1 402.5Q1190.3 400.1 1186.6 399.7M1194.7 398.9Q1193.6 396.8 1191.4 396.9M1195.5 395.2Q1200.9 388.1 1203.4 379.7M1192.8 393.9Q1202.1 394.5 1196.7 387.7M1197.1 393.7Q1196 391.6 1193.8 391.6M1196.3 386.3Q1205.7 386.9 1200.3 380M1201.1 385.2Q1199.9 383.1 1197.8 383.1M1198.6 381.4Q1208 382 1202.5 375.2M1196.3 416.7Q1202.8 411.6 1205.1 403.6M1193.7 414.9Q1201.6 416.8 1198 410.2M1194.9 413.3Q1202.8 415.1 1199.1 408.5M1200 411.7Q1198 408.8 1194.8 407.6M1204.5 405.1Q1202 402.8 1199 401.2M1205.9 403Q1208.3 400.3 1209.7 396.8M1205.9 403Q1203.3 397.2 1202.3 400.1Q1203 403.6 1205.9 403M1207.4 400.8Q1204.8 397.9 1200.7 397M1208.4 399.3Q1205.1 397.7 1202.6 394.9M1211.7 395Q1214.7 391.6 1215.6 386.9M1211.5 394.8Q1207.7 392.8 1204.8 389.3M1212.6 393.3Q1209 391 1205.9 387.9M1214.7 390.1Q1211.6 387.7 1208 386.1M1196.1 416.5Q1201.7 408.8 1210.2 404M1199.2 419.4Q1195.1 410.8 1203.5 413.3M1197.9 415Q1200.4 415.3 1201.1 417.3M1206.8 411.2Q1202.7 402.7 1211.2 405.2M1210.8 400.9Q1215.3 395.5 1221.5 391.6M1211 401.1Q1213.4 401.3 1214.2 403.4M1215 396.8Q1218.3 400.6 1222 404M1220.4 396.8Q1216.3 388.2 1224.7 390.7M1219.1 392.4Q1226.5 393.9 1223.4 395.7Q1219.2 395.8 1219.1 392.4M1202.7 422.7Q1205.1 419.5 1208.8 417.9M1204.5 424.9Q1202.1 417.2 1208.8 420.4M1204.6 420.6Q1207.5 422.4 1209.1 425.3M1206.7 418.9Q1208.7 419.4 1209.1 421.3M1210.3 420.3Q1207.9 412.6 1214.7 415.7M1208.8 416.9Q1213.3 412.3 1219.4 409.8M1214.1 413Q1215.5 416.1 1217.7 418.5M1218.5 409.5Q1224.4 411.7 1221.6 412.8Q1218.1 412.4 1218.5 409.5M1221.1 407.7Q1222.7 403.6 1227.6 403.7M1221 407.5Q1223 408.1 1223.3 409.9M1223.1 405.8Q1225.9 408.4 1227.7 411.8M1224.6 404.6Q1230.6 406.8 1227.8 407.9Q1224.3 407.5 1224.6 404.6M1226.6 403.1Q1229.4 405.2 1231.2 408.1M1227.5 402.1Q1228.2 400.3 1230.8 400.9M1227.6 402.2Q1230.7 405.2 1233.2 408.6M1212.2 436.6Q1215.5 435.1 1218 432.1M1210.3 433.5Q1217 438.8 1216.5 430.9M1214.9 434.9Q1215.1 428.1 1212.9 430.5Q1211.9 434.1 1214.9 434.9M1215.3 430.6Q1221.9 435.9 1221.4 428M1218.9 432.4Q1223.9 432.5 1226.4 428.2M1219 432.5Q1219.1 425.8 1216.9 428.1Q1216 431.7 1219 432.5M1218.8 428.5Q1225.5 433.9 1225 426M1223.4 430Q1220.7 426.3 1218.6 422.3M1227.3 428.1Q1233.1 427.1 1236.5 422.2M1227.2 427.8Q1227.4 425.6 1225.8 424.5M1228 423.2Q1234.7 428.5 1234.2 420.7M1231.5 425.2Q1231.7 418.5 1229.5 420.8Q1228.5 424.4 1231.5 425.2M1233.7 424Q1233.8 417.3 1231.6 419.6Q1230.7 423.2 1233.7 424M1235.5 422.9Q1234.5 418.8 1231.6 415.6M1238.8 420.2Q1242.1 421.6 1242.8 418.7M1239.2 416.7Q1245.9 422 1245.4 414.1M1212.6 435.8Q1213.8 444.9 1218.9 453M1217.8 437.8Q1209.3 443.8 1218.7 445.9M1214.2 441.2Q1222.1 443.7 1220.1 440.3Q1216.2 437.9 1214.2 441.2M1214.9 443.8Q1220.1 441.8 1225.8 441.8M1218.3 455.6Q1217.5 457.4 1219.5 458.4M1222.1 454.7Q1213.6 460.7 1223 462.8M1223.4 430.6Q1223.8 434.2 1225.5 437.5M1224.7 435.2Q1228.1 433.6 1232 433.6M1225.2 437.1Q1229.6 435.9 1234.2 435.4M1226.2 439.1Q1226.2 445.5 1229 451.2M1225.7 439.2Q1232.3 441.3 1230.6 438.4Q1227.3 436.4 1225.7 439.2M1230 441.7Q1222.9 446.8 1230.8 448.5M1230.6 443.8Q1223.5 448.9 1231.4 450.6M1227.8 447.6Q1229.9 448.5 1231.4 447.2M1228.4 450.2Q1231.8 448.6 1235.4 447.9M1229.8 453.4Q1227.8 456.4 1230.5 458.2M1232.8 452.6Q1225.7 457.7 1233.6 459.4M1229.9 455.9Q1232 456.8 1233.5 455.5M1234.7 425.3Q1234.3 430.3 1237.4 434.5M1234.1 425.4Q1241.3 427.6 1239.5 424.5Q1235.9 422.4 1234.1 425.4M1236 432.9Q1243.2 435.2 1241.4 432.1Q1237.8 429.9 1236 432.9M1237.6 436.9Q1237.6 443.1 1241.3 448.4M1237.1 437Q1241.9 435.3 1246.9 434.5M1237.6 439.1Q1244.7 441.4 1243 438.3Q1239.4 436.1 1237.6 439.1M1243.4 446Q1235.7 451.5 1244.2 453.4M1240.4 449.3Q1238.7 453.8 1243.4 456.8M1244.8 451.6Q1237.1 457.1 1245.6 458.9M1245.7 455.2Q1238 460.7 1246.5 462.6M1219.1 458.7Q1217.1 464.8 1217.3 471.3M1218.6 458.7Q1220 460.1 1221.7 459.6M1218.3 460.7Q1221.7 462.4 1225.6 461.7M1217.8 463.6Q1221.5 464.1 1225 465.7M1220.5 467.1Q1212.9 468.6 1218.7 472.9M1216.9 468.7Q1218.3 470.2 1220 469.7M1219.7 471.3Q1212.1 472.9 1217.9 477.1M1216.5 472.8Q1214.2 477.3 1215.6 482.5M1216.2 472.7Q1220.9 476.8 1220.5 473.9Q1218.6 471.1 1216.2 472.7M1219 475.5Q1211.4 477.1 1217.2 481.3M1215.3 478Q1220 482.1 1219.6 479.1Q1217.7 476.4 1215.3 478M1215.1 479.6Q1219.7 483.7 1219.4 480.7Q1217.4 478 1215.1 479.6M1214.7 481.7Q1216.1 483.2 1217.8 482.7M1230.7 458.2Q1229.3 461.8 1229.2 465.6M1233.7 458.7Q1225.9 460.3 1231.9 464.7M1230 460.7Q1234.7 464.9 1234.4 461.9Q1232.4 459 1230 460.7M1229.1 468.4Q1225.3 476.1 1227 484.8M1232 468.9Q1224.2 470.5 1230.1 474.8M1227.9 473.2Q1232.6 477.3 1232.3 474.3Q1230.3 471.5 1227.9 473.2M1227.5 475.3Q1230.5 476.4 1233.7 476.5M1227 478.2Q1230.6 478.8 1234.1 479.8M1226.6 480.6Q1230.7 482.4 1235.1 481.9M1229.5 483.2Q1221.8 484.8 1227.7 489.1M1225.7 486.1Q1223.3 486 1225.6 486.7M1228.9 486.7Q1221.2 488.2 1227.1 492.6M1243 457.8Q1240.4 463.5 1241.3 469.8M1241.9 460.1Q1246.8 461.5 1251.8 462.5M1240.8 466.6Q1246.6 471.8 1246.2 468.1Q1243.7 464.5 1240.8 466.6M1240.4 471.3Q1236.5 478.1 1238.8 485.9M1239.5 474.2Q1244.2 476 1249.2 475.7M1239.1 476.6Q1245 481.7 1244.5 478Q1242 474.5 1239.1 476.6M1238.4 480.3Q1244.3 485.5 1243.9 481.8Q1241.4 478.2 1238.4 480.3M1238 482.8Q1239.8 484.6 1242 484M1236.6 489Q1234.6 489.7 1237.8 491.3M1236.9 489.1Q1238.7 490.9 1240.9 490.3M1232.4 430.6L1232.4 401M1168.8 427.5Q1180 437.9 1191.3 423.5M1159 454c-9.2 11.1 11.1 14.8 18.5 -3.7M1183 473.9Q1193.6 483.8 1204.1 469.1M1130.9 498.3Q1143.9 506.3 1157 491.4M1162.8 425.3L1161.4 394.1M1149.9 476.1L1149.4 450M1209.2 418.6L1208.9 389.7M1177.5 432.5L1176.3 401.9M1109.5 518.5c-5.8 7 7 9.4 11.7 -2.3M1190.8 443.1c-7.1 8.5 8.5 11.4 14.2 -2.8M1192.3 428.7L1191.2 401.7M1111.1 520.7Q1124.5 532.2 1138 520.6M1172.5 487.5c-7.1 8.5 8.5 11.4 14.2 -2.8M1191.3 524.7Q1200.7 532 1210 520M1168.7 516.9c-5.9 7 7 9.4 11.7 -2.3"/><path stroke-width="2.9" d="M1239.5 459.6L1240.3 460.1M1218.2 478.7L1218.8 479.3M1228.5 481.5L1229.1 482M1242.3 485.1L1242.9 485.6M1243.1 497.5L1243.9 497.5M1245.8 496.7L1246.6 496.7M1210.6 496.7L1210.9 497.5M1189.9 514.6L1189.5 515.2M1158.2 549.6L1157.4 550.1M1146.3 526L1145.8 526.7M1140.1 517L1140.2 517.8M1138.7 525.5L1138.8 526.4M1111.9 528.6L1111.8 529.4M1114 530.1L1113.3 530.4M1117.3 510.6L1116.5 510.8M1098 515.5L1097.1 515.7M1094.2 516.3L1093.3 516.5M1099.8 486.8L1098.9 486.7M1100.9 498.9L1100 498.9M1091.4 493L1090.5 493M1085.5 506.3L1084.6 506.3M1078.2 483.9L1077.2 483.7M1102.4 479.3L1101.7 479.1M1097.9 471.8L1097.2 471.5M1083.5 474.4L1082.8 474.1M1094.4 450.8L1093.7 450.4M1086.1 451.8L1085.4 451.3M1114 434.8L1114 434.1M1107.8 429.1L1107.8 428.4M1114.6 419.5L1114.9 418.8M1122.9 407.3L1123.2 406.5M1131.6 403.5L1132.2 402.8M1131.2 393.2L1131.9 392.5M1148.2 384.2L1148.8 383.6M1153.2 387.8L1153.9 387.6M1159.3 373L1160.2 372.6M1188 378L1188.9 377.6M1197.6 403.3L1197.7 402.6M1204.2 393.7L1204.3 392.9M1208.3 415.4L1209.1 415.1M1211 409.7L1211.8 409.4M1214.8 418.8L1215.5 418.7M1222.2 422.5L1222.6 421.8M1240.7 423.5L1241.1 422.8M1212 447.7L1212.6 448.4M1225.6 450.9L1226.2 451.7M1236 464.5L1236.2 465.2M1225.4 471L1225.6 471.7M1248.1 472.6L1248.3 473.5M1164.3 454l2 -2M1155 537.9l2 -2M1198.1 466.2l2 -2M1157.7 528.6l2 -2M1179.5 499.5l2 -2M1165.8 523.9l2 -2M1181.3 406.4l2 -2"/></g><g fill="none" stroke="#161716" stroke-linecap="round" stroke-linejoin="round" clip-path="url(#f1b)"><path stroke-width="3" d="M1149.6 442q5.6 -11.2 11.2 0q-5.6 11.2 -11.2 0M1170.6 454.9q6.2 -12.4 12.4 0q-6.2 12.4 -12.4 0M1178.7 414.8q4.8 -9.6 9.6 0q-4.8 9.6 -9.6 0M1203.8 459.2q5.2 -10.4 10.4 0q-5.2 10.4 -10.4 0M1122.2 437.8q4.9 -9.8 9.8 0q-4.9 9.8 -9.8 0M1136.6 497.6q5.7 -11.5 11.5 0q-5.7 11.5 -11.5 0M1186.6 452.4q7.2 -14.4 14.4 0q-7.2 14.4 -14.4 0M1131.7 474.5q6 -11.9 11.9 0q-6 11.9 -11.9 0M1144 485.9q4.1 -8.1 8.1 0q-4.1 8.1 -8.1 0"/><path stroke-width="3.3" d="M1126.3 482.4L1128.1 451.3M1167.7 468.7L1168.6 449.4M1155.5 471.9L1156.4 447.9M1147.1 470.2Q1158.2 478.3 1169.4 463M1168.8 488.9Q1180.5 497.3 1192.1 481.6M1189.6 423Q1204.6 431.2 1219.6 419.6M1189.5 424.9Q1198.7 436 1207.9 423.4M1153.9 485.3Q1163.9 494.1 1174 481.6M1149.7 436.2Q1158.6 447.1 1167.5 431.1M1152.4 481Q1168.1 491.2 1183.8 475.2M1151 456c-7.7 9.3 9.3 12.4 15.5 -3.1M1146.1 498.2Q1160.2 508.8 1174.4 495M1173.1 496.8L1173.1 477.2M1130.2 448L1130.9 414.5M1136.5 436.6L1138.2 413M1159.9 464.2Q1171.8 478.1 1183.8 458.9M1149.8 468.7Q1163.1 475.1 1176.3 465.2M1151 468.9Q1165.1 482.2 1179.3 465.1M1178 447.4c-8.2 9.8 9.8 13.1 16.3 -3.3M1131.9 428.7c-7.5 9 9 12 15 -3M1194.3 477.4L1193.8 448.6M1143 423Q1154.7 433.6 1166.3 421.6M1160.9 483.8c-6.9 8.3 8.3 11 13.8 -2.8M1183.9 457.2L1184.2 436.1M1188.4 447.5L1191.1 413.7M1184.1 471.9L1183.4 451.5M1130.8 478c-7.3 8.8 8.8 11.7 14.6 -2.9M1173.2 430c-9 10.8 10.8 14.4 18 -3.6M1174.2 448.6c-9.6 11.5 11.5 15.4 19.2 -3.8M1192.7 426.1c-8.5 10.2 10.2 13.6 17 -3.4M1121.6 440.1c-9.6 11.5 11.5 15.3 19.2 -3.8"/><path stroke-width="3.5" d="M1193 440V498M1175 450V488M1153 456V482"/><path stroke-width="4" d="M1119 436Q1109 470 1136 476Q1161 480 1183 460M1133 496Q1169 510 1206 480M1183 424Q1207 446 1187 462M1196 487.9l2 -2M1115.5 448.2l2 -2M1161.6 443.3l2 -2M1137.9 470.7l2 -2"/></g><path d="M1159 372L1161 370L1163 372L1164 470H1158Z" fill="#161716"/><circle cx="1500.6" cy="447" r="55" fill="none" stroke="#161716" stroke-width="4.8"/><g fill="none" stroke="#161716" stroke-linecap="round" stroke-linejoin="round" clip-path="url(#i1a)"><path stroke-width="2.2" d="M1510.5 456.1q8 -15.9 15.9 0q-8 15.9 -15.9 0M1532 448.8q4.6 -9.1 9.1 0q-4.6 9.1 -9.1 0M1441.4 473.8q7.1 -14.2 14.2 0q-7.1 14.2 -14.2 0M1454.9 494q6.3 -12.6 12.6 0q-6.3 12.6 -12.6 0M1499.4 513.4q5.2 -10.4 10.4 0q-5.2 10.4 -10.4 0"/><path stroke-width="2.4" d="M1555.4 448.2Q1551.4 451.7 1553 456.4M1554.5 448Q1556 449.7 1558 449.2M1553.4 453.6Q1554.9 455.3 1556.9 454.8M1552.6 457Q1550.2 461.3 1551.5 466.4M1555.3 462.5Q1546.6 464 1553 469M1551.3 467.3Q1548.1 468.4 1550.4 470.7M1550.6 467.2Q1552.1 468.9 1554.1 468.3M1553.6 470.7Q1545 472.1 1551.4 477.2M1565.1 448Q1562.5 455.6 1562.2 463.6M1568.7 448.8Q1559.5 450.3 1566.3 455.6M1564.1 451.8Q1569.5 456.8 1569.2 453.3Q1567 449.9 1564.1 451.8M1563.5 454.9Q1568.3 455.5 1572.7 457.7M1566.7 458.6Q1557.5 460.1 1564.3 465.4M1562.2 461Q1566.9 461.1 1571.1 462.9M1561.2 464.2Q1558.2 469 1560.6 474.9M1561.6 464.3Q1563.2 466.1 1565.2 465.5M1564.6 468.5Q1555.5 470 1562.3 475.3M1560.4 470.3Q1564.3 471.1 1568.1 472.4M1559.7 473.7Q1561.2 475.5 1563.3 474.9M1575 447.9Q1573 453.3 1573.9 459.3M1575.3 448Q1580.2 452.6 1579.9 449.4Q1577.9 446.3 1575.3 448M1578.1 452Q1569.7 453.4 1575.9 458.3M1574 454.2Q1575.5 455.9 1577.4 455.4M1573.7 460.1Q1570.8 463.8 1571.6 468.2M1576.3 460.7Q1567.9 462.1 1574.1 467M1575.8 463.3Q1567.4 464.8 1573.6 469.6M1571.8 464.9Q1576.7 469.5 1576.5 466.3Q1574.4 463.2 1571.8 464.9M1574.7 468.3Q1566.3 469.8 1572.5 474.6M1571 468.9Q1568.3 471.9 1570 475.9M1571 468.9Q1575.1 470 1579.1 471.6M1574 471.7Q1565.6 473.1 1571.8 478M1570.2 472.8Q1575.1 477.4 1574.9 474.2Q1572.8 471 1570.2 472.8M1570.2 477.4Q1568.5 477.9 1569.3 478.8M1572.8 478Q1564.4 479.4 1570.6 484.3M1585.3 447.9Q1583 452 1584.4 456.8M1585.7 448Q1590.9 452.9 1590.7 449.5Q1588.5 446.2 1585.7 448M1584.4 454.2Q1586 455.9 1588 455.4M1583.4 458.9Q1580.2 467.6 1580.8 477M1585.8 466.2Q1576.8 467.7 1583.5 473M1581.4 469Q1582.9 470.8 1585 470.3M1580.7 472.2Q1583.8 473.5 1587.1 474.3M1580.1 475.1Q1584.7 476.5 1589.6 476.7M1579.4 479.1Q1577.8 480.7 1579.1 482.9M1579.3 479.1Q1580.9 480.8 1582.9 480.3M1582.4 483Q1573.4 484.5 1580 489.7M1545.2 477.8Q1550.9 481.6 1557.6 483.3M1545.2 477.9Q1547.2 474.6 1548.8 471.2M1550.2 475.7Q1549.2 485.9 1556.8 480.3M1554.3 482.6Q1557.5 478.2 1560.1 473.5M1558.6 484.1Q1567.4 490.6 1577.6 494M1558.3 484.6Q1561.8 481.4 1562.5 476.8M1572.5 487.2Q1571.4 497.3 1579.1 491.7M1574.5 488.2Q1573.4 498.4 1581.1 492.8M1580 496.2Q1580.4 497.8 1582.3 496.4M1580.2 495.9Q1587.1 491.7 1583.3 491Q1579.1 492.3 1580.2 495.9M1545.4 477.4Q1550.9 480.1 1555 484.5M1545.6 477.1Q1545.7 479.8 1543.5 481M1546.5 483.1Q1555.3 477.3 1553.8 486.9M1551.6 481.4Q1551.1 489.7 1548.6 486.6Q1547.8 482 1551.6 481.4M1555 483.8Q1554.4 492.1 1552 489Q1551.2 484.5 1555 483.8M1556.3 485.8Q1564.2 488.8 1569.6 495.4M1556.8 485.1Q1556.9 487.8 1554.8 489M1560.3 487.6Q1559.7 495.8 1557.2 492.7Q1556.5 488.2 1560.3 487.6M1571.4 495Q1576.4 496.8 1579.2 501.5M1573.1 496.7Q1573.2 499.5 1571 500.6M1534.6 490.4Q1536.5 493.2 1540.2 494.3M1536.9 488Q1534 495.2 1540.8 492.7M1538.3 489.3Q1535.4 496.5 1542.1 494.1M1541.2 497Q1546.5 504.1 1554.9 508.1M1541.4 496.7Q1547.4 495.1 1544.8 493.8Q1541.3 493.9 1541.4 496.7M1542.7 497.9Q1544.7 497.6 1545.2 495.9M1544.2 499.3Q1547.5 496.9 1550.2 493.8M1547.7 498.3Q1544.7 505.5 1551.5 503M1547.9 502.9Q1553.9 501.4 1551.3 500Q1547.9 500.1 1547.9 502.9M1553.1 507.9Q1559 506.3 1556.4 504.9Q1553 505 1553.1 507.9M1555.9 510.8Q1558.2 514 1562.1 515.6M1558.2 508.3Q1555.2 515.5 1562 513.1M1558.3 512.9Q1561 509.6 1563.8 506.5M1561.8 511.7Q1558.8 518.9 1565.6 516.5M1563.9 517.4Q1562.6 520 1565.3 518.4M1563.5 517.8Q1566.6 516 1568 512.5M1535.7 490.8Q1524.2 494.1 1516.1 503.5M1535.6 490.7Q1535.4 499 1538.2 496.1Q1539.4 491.6 1535.6 490.7M1531.8 492.9Q1534.1 496.5 1536.9 499.9M1531 498.4Q1522.7 491.8 1523.3 501.6M1526.1 496.2Q1527.1 500.1 1529.6 503.2M1523.5 497.7Q1523.3 506.1 1526 503.2Q1527.2 498.7 1523.5 497.7M1520.2 499.6Q1519.9 502.3 1522 503.6M1517.1 501.4Q1516.8 504.1 1518.8 505.5M1542.9 498.8Q1533 502.3 1525.2 509.1M1544.7 502Q1536.8 495.7 1537.4 505M1542.7 503.1Q1534.8 496.8 1535.3 506.2M1535.1 502.7Q1537.2 506.1 1539.3 509.6M1533.9 508.2Q1526 501.9 1526.6 511.3M1528.3 506.6Q1530.9 510.7 1533.6 514.6M1527.5 512Q1519.6 505.7 1520.2 515M1522.6 510.4Q1518.8 508.7 1518.9 513.7M1522.4 510Q1524.3 514.6 1526.6 519M1519.1 512Q1521.5 516.8 1523.6 521.8M1549.9 506.6Q1545.7 507 1543.2 510.1M1549.5 506Q1550.7 509 1553 511.4M1547.1 507.4Q1546.9 509.5 1548.4 510.5M1547.1 511.3Q1540.9 506.3 1541.3 513.7M1545.1 512.4Q1538.9 507.5 1539.4 514.8M1541.6 510.9Q1534.6 513.2 1529.3 518.5M1541.5 510.7Q1541.4 517 1543.4 514.8Q1544.3 511.4 1541.5 510.7M1540 511.6Q1539.8 513.6 1541.3 514.6M1535.7 514.1Q1536.9 518.3 1539.8 521.7M1533.2 519.4Q1527 514.4 1527.4 521.8M1528.7 518.8Q1524.7 519.5 1522.4 523.1M1530.1 521.2Q1523.8 516.2 1524.3 523.6M1524.5 520.6Q1526.3 524 1527.9 527.5M1524.4 524.5Q1518.2 519.5 1518.6 526.9M1556.5 513.6Q1548.9 517.4 1542.1 522.5M1558.2 516.7Q1551.8 511.5 1552.2 519.2M1553.9 515.2Q1553.6 517.4 1555.2 518.4M1551.5 516.6Q1551.3 523.2 1553.5 520.9Q1554.4 517.4 1551.5 516.6M1550.8 521Q1544.4 515.8 1544.9 523.5M1547.3 519.1Q1548.5 522.4 1551.3 524.8M1543.1 521.5Q1545.7 524.4 1547.3 527.9M1540.1 523.3Q1534.8 525.4 1530.4 529M1541.8 526.2Q1535.3 521.1 1535.8 528.7M1537.4 524.8Q1538.7 528.8 1540.7 532.4M1534.1 526.7Q1534 533.3 1536.1 531Q1537.1 527.5 1534.1 526.7M1533.2 531.2Q1526.8 526.1 1527.2 533.7M1528.5 529.8Q1525.5 529.3 1524.9 532.6M1530.3 532.9Q1523.8 527.8 1524.3 535.4M1525.7 531.6Q1525.6 538.1 1527.7 535.9Q1528.6 532.4 1525.7 531.6M1507.3 503.7Q1506.9 508.7 1508.9 513.1M1508.6 512.7Q1510.8 513.7 1512.5 512.3M1509.3 515.7Q1509.4 521.7 1513.3 526.9M1509.3 515.6Q1514.2 515.7 1518.5 513.2M1510 518.2Q1513.5 518.1 1516.6 515.9M1511 522.1Q1515.4 521.8 1519.4 519.7M1511.8 525.4Q1518.8 527.6 1517 524.5Q1513.5 522.4 1511.8 525.4M1512.8 527.9Q1513.8 536.2 1516.8 544.1M1512.4 528Q1519.4 530.2 1517.7 527.1Q1514.2 525 1512.4 528M1514 534.1Q1521 536.3 1519.2 533.3Q1515.7 531.2 1514 534.1M1514.4 536Q1518.1 535.1 1521.8 533.9M1515.2 539.2Q1517.5 540.1 1519.1 538.7M1515.8 541.6Q1520.1 541 1524.4 540.2M1520.2 543Q1512.6 548.4 1521 550.3M1499.1 504.6Q1497.6 512.4 1500.5 519.8M1498.4 504.7Q1503.4 505.4 1508.2 503M1498.8 508.7Q1505.6 512 1504.2 508.6Q1501 506 1498.8 508.7M1503 511.1Q1494.5 515.4 1502.8 518.5M1499.3 513.7Q1506.1 517 1504.7 513.7Q1501.5 511 1499.3 513.7M1499.6 516.8Q1501.7 518.1 1503.6 516.9M1499.9 519.6Q1504.7 519.3 1509.5 519M1500.7 521.3Q1498.6 532 1502.9 542M1504 521Q1495.6 525.3 1503.8 528.4M1501.4 534.2Q1503.5 535.5 1505.4 534.3M1501.7 536.4Q1503.8 537.6 1505.6 536.4M1502.3 542.6Q1499.8 544.5 1502.8 545.9M1499 504.6Q1502 509.1 1497.4 513.3M1499.2 507Q1493.8 507.3 1488.5 506.1M1499.1 510Q1491.9 514.1 1493.1 510.3Q1496.5 507.2 1499.1 510M1499 514.5Q1500.8 519.6 1497.9 524.5M1498.9 514.5Q1496.7 516.1 1494.6 514.9M1498.6 521.5Q1494.1 520.7 1489.6 520.6M1498.7 526.2Q1500.4 534.1 1496.4 541.8M1494.1 526Q1503.7 530.2 1494.9 534.1M1494.1 528.2Q1503.6 532.4 1494.8 536.4M1493.9 532.3Q1503.5 536.5 1494.7 540.5M1498.1 536.4Q1493.1 536 1488.1 536M1493.6 539.6Q1503.2 543.8 1494.4 547.8M1498 542.7Q1498.8 544.4 1496.6 546.1M1493.5 542.5Q1503.1 546.7 1494.3 550.7M1491.2 504.4Q1490.3 514.7 1487 524.6M1490.9 504.3Q1488.5 505.5 1486.5 504.1M1490.1 508.4Q1482.4 511.4 1484.2 507.9Q1488 505.3 1490.1 508.4M1489.7 510.7Q1484.4 510.1 1479.2 508.7M1485 512.4Q1493.8 518 1484.5 520.6M1488 519.7Q1483 518 1477.8 517.6M1486.4 527.1Q1487.8 534.6 1483.7 541M1482.3 526.3Q1491.2 531.9 1481.9 534.5M1486.1 529.4Q1483.7 530.6 1481.8 529.1M1485.6 532.2Q1481.7 532.1 1478.1 530.8M1480.7 534.9Q1489.5 540.4 1480.2 543.1M1484.5 538Q1476.8 540.9 1478.6 537.4Q1482.3 534.8 1484.5 538M1484 542.5Q1486.1 544.3 1481.9 544.9M1479.4 541.6Q1488.3 547.1 1479 549.8M1473.4 499.6Q1467.5 508.2 1467.4 519M1473.8 499.7Q1475.2 501.8 1477.4 501.5M1476.4 504.3Q1466.7 504.6 1472.9 511.1M1468.8 513.5Q1472.5 514.1 1475.8 515.5M1468.1 515.6Q1472.9 521.6 1473.2 517.9Q1471.3 514 1468.1 515.6M1467.1 518.3Q1470.8 519.3 1473.9 522M1467 521.7Q1461.9 529.7 1461.1 539.2M1466.1 521.3Q1470.9 527.3 1471.1 523.7Q1469.3 519.8 1466.1 521.3M1464.8 524.8Q1469 526.9 1473.4 528.5M1464 527Q1467.7 529.7 1472.3 529.7M1462.6 530.9Q1466.7 533.2 1471.3 533.7M1465.6 534.7Q1455.9 535 1462.1 541.5M1466.6 495.8Q1461.7 501.4 1460.4 509M1466.1 495.5Q1467.1 497.7 1469.3 497.8M1464.6 498.1Q1468.3 504.6 1469.1 501.1Q1467.9 497.2 1464.6 498.1M1463.3 500.5Q1467 507 1467.8 503.5Q1466.6 499.6 1463.3 500.5M1461.7 503.5Q1465.5 509.9 1466.2 506.4Q1465.1 502.5 1461.7 503.5M1460.2 506.2Q1464.5 508 1468.4 510.4M1458.5 511.3Q1453.2 518.2 1450.5 526.5M1457.7 510.9Q1461.4 517.3 1462.2 513.9Q1461 509.9 1457.7 510.9M1456.1 513.9Q1460.6 516.3 1465.2 518.5M1457.6 519.2Q1448.3 518 1453.3 525.1M1453.1 519.4Q1454.1 521.6 1456.3 521.7M1451.6 522.2Q1456 524.2 1459.8 527.6M1448.7 529Q1446.2 529.8 1446.4 532.1M1448.1 528.7Q1451 530.8 1454.2 532.6M1450 533.3Q1440.7 532.1 1445.6 539.2M1465.9 496.1Q1463.4 491.1 1457.6 489.5M1465.7 496.3Q1463.4 499.3 1460.7 501.9M1464.5 495.1Q1458.4 496.5 1461 498Q1464.5 498 1464.5 495.1M1460.9 496.1Q1464.2 488.8 1457.1 491.1M1459.4 494.6Q1462.6 487.3 1455.6 489.6M1459.8 490.4Q1453.7 491.8 1456.3 493.3Q1459.8 493.3 1459.8 490.4M1458 488.4Q1454.6 482.1 1448.3 478.8M1455.6 490.8Q1458.9 483.5 1451.8 485.8M1455.8 486.3Q1453.8 486.5 1453.2 488.3M1454.1 484.6Q1452.1 484.9 1451.5 486.6M1451.7 482.1Q1445.6 483.6 1448.2 485Q1451.7 485.1 1451.7 482.1M1447.3 482.4Q1450.6 475.1 1443.6 477.4M1460.3 504.8Q1456.5 499.7 1450.2 497.1M1460.1 505Q1452.9 506.6 1455.9 508.4Q1460 508.4 1460.1 505M1457.4 502.3Q1455 502.6 1454.3 504.7M1454.8 499.7Q1451.9 501.7 1449.2 504M1450 500.3Q1453.8 491.8 1445.6 494.5M1450.1 495Q1446.5 488 1438.8 485.1M1447.4 497.7Q1451.2 489.2 1443 491.8M1447.9 492.7Q1445.5 495.2 1442.8 497.3M1446.5 491.3Q1443.6 495.5 1439.8 498.8M1441.6 491.8Q1445.4 483.3 1437.2 486M1439 489.2Q1442.8 480.7 1434.6 483.3M1437.2 487.3Q1441 478.8 1432.8 481.5M1454 514.1Q1451.9 508.4 1446.3 506.2M1449.1 508.3Q1445.6 511.8 1441.5 514.6M1445.3 503.9Q1442.7 499.2 1436.7 497.9M1441.9 507.2Q1446.2 497.7 1437 500.7M1442.1 501.2Q1439.4 501.6 1438.6 503.9M1439 498.1Q1436.3 498.5 1435.6 500.8M1435.4 495.6Q1435.4 490.5 1430.8 489.9M1436 495Q1433.3 495.4 1432.5 497.7M1429.1 494.3Q1433.4 484.7 1424.1 487.7M1448.4 522.7Q1445.8 518 1441.2 515.1M1446.5 524.7Q1449.7 517.5 1442.8 519.8M1444.7 522.9Q1447.9 515.8 1441 518M1442.7 520.9Q1445.9 513.7 1439 516M1440 513.6Q1436.4 508.8 1431.3 505.6M1437.7 515.8Q1440.9 508.7 1434 510.9M1434.1 507.5Q1428 508.9 1430.6 510.4Q1434 510.4 1434.1 507.5M1431 505.1Q1428.7 499.6 1422.9 497.6M1431.3 504.7Q1425.3 506.1 1427.8 507.6Q1431.3 507.6 1431.3 504.7M1427.7 505.7Q1430.9 498.6 1424 500.8M1428.6 502Q1425.9 505.1 1422.6 507.4M1423.9 501.9Q1427.1 494.7 1420.2 497M1424 497.3Q1418 498.7 1420.6 500.2Q1424 500.2 1424 497.3M1422.4 495.8Q1422.6 495.3 1421.4 496M1445.1 470.6Q1438.1 471.5 1433.3 476.3M1444.8 470.1Q1444.5 472.3 1446 473.4M1441.6 471.8Q1442.9 474.8 1444.9 477.4M1439 473.1Q1441.4 476.9 1443.7 480.7M1437.5 477.9Q1431.1 472.3 1431.2 480.2M1431.3 478Q1422 480.5 1414.7 486.8M1430.9 477.4Q1432.1 481.2 1434 484.5M1429.3 478.2Q1428.8 484.9 1431.2 482.7Q1432.3 479.1 1429.3 478.2M1426.8 479.5Q1426.5 481.7 1428.1 482.8M1424.5 480.7Q1425.1 484.6 1427.9 487.3M1422.6 481.7Q1422.2 483.9 1423.8 485M1419.4 483.3Q1421.2 486.4 1422.1 489.9M1419.1 487.4Q1412.8 481.9 1412.9 489.7M1415.4 485.4Q1414.9 492.1 1417.2 489.9Q1418.3 486.4 1415.4 485.4M1412.4 487.9Q1409.4 486.9 1408.2 489.7M1413.7 490.3Q1407.3 484.7 1407.4 492.6M1410 488.3Q1411.3 491.2 1413.3 493.9M1408.1 489.2Q1407.6 495.9 1409.9 493.7Q1411.1 490.2 1408.1 489.2M1441.8 460.8Q1434 461.7 1427.3 466.2M1441.9 461.2Q1441.1 463.3 1442.6 464.7M1439.9 465.6Q1434.5 458.8 1433.3 466.8M1435.6 463.2Q1437.2 467.4 1437.3 472M1432.4 464.2Q1432.4 468.3 1433.8 472M1430.1 465Q1431.3 468 1432.5 471.1M1426.6 466.4Q1417.8 466.3 1410.9 472M1427.7 469.5Q1422.2 462.8 1421 470.8M1421.1 467.9Q1419.5 474.6 1422.2 472.7Q1423.9 469.3 1421.1 467.9M1420.1 472Q1414.6 465.3 1413.4 473.2M1417.3 469.1Q1416.6 471.3 1418 472.7M1415.3 473.5Q1409.8 466.8 1408.6 474.8M1411.1 471.1Q1411.7 475.2 1414.2 478.7M1409.5 472.4Q1405.1 470.7 1402.5 474.3M1409.3 471.7Q1409.3 475.9 1411.9 479.3M1407.8 476Q1402.3 469.3 1401.1 477.2M1440.5 452Q1431.2 451.4 1422.5 454.6M1440.5 451.8Q1441.9 456.7 1441.9 461.7M1437.4 452.3Q1436.3 454.4 1437.5 456.1M1434.3 452.8Q1431.4 459.4 1434.6 458Q1437 454.8 1434.3 452.8M1431.8 453.1Q1431.6 457.5 1433.2 461.5M1429 453.5Q1426.2 460.2 1429.3 458.8Q1431.8 455.5 1429 453.5M1425.1 454.1Q1425.9 457.8 1426.9 461.5M1421.3 455.3Q1414.8 454.1 1409 457.6M1421.2 454.7Q1418.3 461.4 1421.5 460Q1423.9 456.7 1421.2 454.7M1417.3 455.3Q1414.5 462 1417.6 460.5Q1420.1 457.3 1417.3 455.3M1410.5 456.3Q1407.6 463 1410.8 461.5Q1413.2 458.3 1410.5 456.3M1408.2 457.5Q1403.4 455.1 1399.6 459.3M1408.1 456.6Q1405.2 463.3 1408.4 461.9Q1410.8 458.6 1408.1 456.6M1405.8 460.8Q1401.2 452.8 1398.5 460.9M1440.6 442.9Q1432.1 441.1 1423.5 443.7M1437.6 446.7Q1434 437 1429.6 445.5M1434.2 442.4Q1433.9 446.3 1434.6 450.3M1427.7 442.3Q1426.9 447.4 1426.6 452.5M1422.4 441.9Q1413.9 440.9 1405.2 443.1M1422.4 442.2Q1420.8 444.3 1421.8 446.5M1419.8 442.1Q1415.4 449 1419.1 448Q1422.4 444.9 1419.8 442.1M1417.5 446.4Q1414 436.7 1409.5 445.2M1411.1 442Q1406.7 448.9 1410.5 447.9Q1413.7 444.7 1411.1 442M1408.6 442Q1407.2 447.4 1409.1 452.9M1402.7 442.1Q1400.9 440.3 1399.1 442M1402.7 446.1Q1399.1 436.4 1394.6 444.9M1399.9 441.8Q1395.5 448.7 1399.3 447.7Q1402.6 444.5 1399.9 441.8M1440.6 442.3Q1435.1 442 1430 439.2M1441.3 438.3Q1436.3 446.6 1433.7 438M1437.4 437.6Q1432.4 445.9 1429.8 437.3M1434.4 437.1Q1429.3 445.3 1426.8 436.7M1432.2 436.7Q1427.1 444.9 1424.6 436.3M1428.4 440.4Q1418.6 439.9 1409.5 435.8M1425.1 439.5Q1426.8 434.6 1426.1 429.4M1423.4 435.1Q1418.4 443.3 1415.9 434.7M1419.1 438.4Q1420 435 1420.1 431.4M1417.6 434Q1412.6 442.3 1410.1 433.7M1413.7 437.4Q1414.6 432.3 1415.8 427.3M1411.2 432.8Q1406.1 441.1 1403.6 432.5M1408.1 435.5Q1403.5 437.8 1399.8 434.5M1407.9 436.3Q1408.4 431.2 1409.2 426M1404.8 431.7Q1399.7 439.9 1397.2 431.3M1401.1 435.1Q1400 432.8 1401.4 431.1M1440.9 432.8Q1444.8 430.4 1445 425.8M1438.5 431.4Q1446.6 432.7 1442.4 426.3M1442.9 430.5Q1439.9 428.3 1436.4 427.2M1441.3 426.5Q1449.4 427.8 1445.2 421.4M1447 423.6Q1450.3 419.4 1451.9 414.2M1444 421.9Q1452.1 423.2 1447.9 416.8M1445.4 419.3Q1453.6 420.6 1449.4 414.2M1449.4 419.2Q1448.6 417.3 1446.7 417.2M1450.7 417Q1446.6 415.3 1442.7 413.1M1451.6 415.5Q1448.5 409.7 1447.8 412.7Q1448.7 416.2 1451.6 415.5M1453 413.9Q1456.3 411.5 1455.7 406.8M1449.7 412Q1457.9 413.2 1453.7 406.8M1454 411.4Q1453.2 409.4 1451.3 409.3M1431.1 430.2Q1434.9 428.3 1434.2 423.7M1431.4 430.4Q1428.7 428.4 1426.1 426.2M1433.1 427.4Q1430.2 425.5 1426.8 424.3M1434.2 425.7Q1430.9 419.7 1430.1 422.8Q1431.1 426.5 1434.2 425.7M1434.8 423.1Q1440.7 415.5 1444.6 406.7M1435.4 423.4Q1434.6 421.4 1432.6 421.3M1434.8 417.5Q1443.3 418.8 1438.9 412.1M1437.7 412.4Q1446.2 413.7 1441.8 407.1M1442 412.1Q1439.6 409.4 1436.2 408.5M1443.3 409.8Q1440.3 406.6 1435.8 405.9M1444.6 407.6Q1443.7 405.6 1441.7 405.5M1445.5 406.6Q1447.7 403.5 1448.2 399.4M1442.2 404.7Q1450.7 406 1446.3 399.4M1446.5 404.4Q1442.8 402.7 1440 399.5M1447.5 402.5Q1446.7 400.5 1444.7 400.4M1421.8 428Q1427.5 419.1 1431.9 409.4M1421.4 427.7Q1417.3 424.5 1412.1 423M1422.9 425.2Q1421.8 422.7 1419.4 422.6M1424.6 413.7Q1434.7 415.3 1429.5 407.4M1429.5 413.7Q1425.6 406.6 1424.7 410.3Q1425.8 414.7 1429.5 413.7M1431 411.1Q1425.9 409.1 1422 404.8M1431.9 407.8Q1436.2 405.2 1436.7 400.5M1432.7 408.2Q1428.4 406.6 1424.8 403.9M1430.3 403.9Q1440.4 405.5 1435.2 397.5M1435.1 404Q1431.3 396.9 1430.3 400.6Q1431.5 405 1435.1 404M1436.3 401.9Q1432.4 394.8 1431.5 398.6Q1432.7 402.9 1436.3 401.9M1437.5 399.9Q1440.8 396.8 1441.1 392.2M1435.7 394.4Q1445.9 396 1440.7 388M1440.7 394.4Q1436.8 387.3 1435.9 391Q1437 395.4 1440.7 394.4M1410.9 424.8Q1417.1 418.6 1416.7 409.7M1407.6 423.5Q1417.5 423.7 1411.5 416.7M1412.7 421.8Q1408.1 415.5 1407.7 419.2Q1409.3 423.2 1412.7 421.8M1413.6 419.6Q1408.7 418.7 1404.8 415.3M1416.1 413.6Q1412.3 411.6 1408.3 409.9M1418 408.7Q1420.2 406.6 1419.5 403.3M1419.4 405.7Q1415.2 403.1 1410.5 401.8M1420.5 403.7Q1426.9 397.1 1431.3 389M1420.3 403.6Q1416.4 401.3 1413.7 397.4M1419.6 398Q1428.8 400.7 1424.9 392.7M1424.7 397.9Q1421.6 395.6 1418.2 393.7M1427.1 394.7Q1423.5 392 1420.8 388.3M1431.9 388.2Q1434.2 387.5 1433.4 384.4M1432 388.3Q1429.4 381.2 1428 384.6Q1428.6 388.7 1432 388.3M1431 383.1Q1440.2 385.8 1436.3 377.9M1535.9 406Q1538.8 411.2 1544.1 414.7M1536.1 405.8Q1544.1 405.2 1541.1 402.9Q1536.7 402.2 1536.1 405.8M1540.8 405.1Q1535.3 413.6 1544.5 412.1M1538.7 409.4Q1546.6 408.8 1543.6 406.4Q1539.3 405.7 1538.7 409.4M1542.8 415.1Q1550.8 414.5 1547.8 412.1Q1543.4 411.5 1542.8 415.1M1545.6 418.1Q1546.4 421.8 1550.5 423.1M1547 420.8Q1551.5 419 1554.6 415.5M1544 397.7Q1544 404.2 1549.8 406.6M1543.2 398.2Q1545.8 398.3 1546.9 396.2M1544.7 400.3Q1548.1 398.8 1550.2 395.3M1550 400.5Q1544.6 409 1553.7 407.5M1548.1 404.9Q1555.9 404.3 1553 402Q1548.6 401.3 1548.1 404.9M1551.5 409.3Q1552.3 415.6 1558.9 417.8M1551.3 409.4Q1555 406.1 1559.9 404.6M1552.7 411.4Q1556.5 408.9 1560.1 406.2M1554.5 413.8Q1558.9 411.4 1562.4 407.8M1560.2 414.6Q1554.7 423 1563.9 421.5M1558.9 419Q1558.1 419.8 1558.8 419.6M1550.5 390.5Q1552 394.9 1556.1 397.6M1550.3 390.6Q1553.3 388.2 1556.5 386M1551.8 392.7Q1555.2 389.8 1558.8 387.1M1555.1 397.3Q1559 395.8 1561.9 393M1556.1 399Q1558.6 404.7 1564.2 408.4M1556.2 398.9Q1559.8 397.8 1562.5 395.5M1557.6 400.8Q1559.9 400.8 1560.8 399M1560.8 405.2Q1563.1 405.2 1564 403.4M1564.9 409.5Q1564.5 413.9 1569 414.7M1567.2 407.8Q1562.4 415.2 1570.5 413.9M1568.8 410Q1564 417.4 1572.1 416.1M1570.9 412.9Q1566.1 420.3 1574.2 419M1557.2 383.1Q1558.9 387.3 1562.9 389.8M1560.1 381Q1555.6 388 1563.2 386.8M1559.2 385.6Q1561.4 385.6 1562.3 383.9M1563.9 392.6Q1568.1 398.7 1573.1 404.3M1565.7 394.7Q1572.3 394.2 1569.9 392.2Q1566.2 391.6 1565.7 394.7M1571 396Q1566.4 403 1574.1 401.8M1569.7 400.1Q1571.8 400.1 1572.7 398.4M1570.7 401.6Q1572.9 401.6 1573.8 399.9M1574.6 406Q1574.8 409.4 1577.9 410.8M1577 404.3Q1572.4 411.3 1580.1 410M1580.1 408.6Q1575.6 415.7 1583.3 414.4M1549.7 423.9Q1550.2 430.8 1554.1 436.9M1550.3 427.6Q1555.3 426.9 1560.2 426M1555.8 432.3Q1547.7 438.2 1556.9 440.1M1552.5 436.1Q1560.2 438.3 1558.2 435.1Q1554.4 432.9 1552.5 436.1M1554 438.2Q1551.7 441 1555.6 442.1M1557.2 437.3Q1549.1 443.3 1558.2 445.1M1553.8 440.6Q1561.4 442.9 1559.4 439.7Q1555.6 437.5 1553.8 440.6M1559.5 419.5Q1559.6 426.6 1562.5 433.1M1558.7 419.7Q1562.8 419.4 1566.7 418.4M1562.9 420.9Q1555.7 426.2 1563.8 427.8M1559.9 424Q1566.7 426 1564.9 423.2Q1561.5 421.2 1559.9 424M1560.8 427.5Q1565.2 427.2 1569 424.9M1563 434.4Q1563 438.2 1565.5 441.2M1566.8 435.5Q1559.6 440.8 1567.7 442.5M1563.9 439Q1567.3 438.8 1570.5 437.6M1568 415.4Q1568 424.5 1573.7 432M1571.7 414.4Q1564.6 419.6 1572.6 421.2M1569.1 418.9Q1571.2 419.7 1572.7 418.4M1569.6 420.9Q1571.8 421.8 1573.3 420.4M1574.4 424.4Q1567.3 429.7 1575.3 431.3M1575.3 427.9Q1568.2 433.1 1576.2 434.8M1573.4 434.6Q1572.7 437.9 1575 440.4M1573.3 434.6Q1577.8 433.8 1582.2 432.6M1578.1 410.9Q1577.9 420.1 1583.1 427.9M1577.6 411Q1580.9 410.7 1583.7 408.8M1578.4 414.1Q1581.8 414.4 1584.5 411.7M1582.5 415.4Q1575.5 420.5 1583.3 422.1M1579.8 419.4Q1582.9 418.1 1586.4 417.9M1581.2 424.6Q1585 422.8 1589.1 422.5M1581.9 427Q1586.3 426 1590.9 425.3M1582.6 431.2Q1582.3 435.8 1586.2 439.2M1583 431.1Q1589.5 433.1 1587.9 430.3Q1584.6 428.4 1583 431.1M1583.9 434.5Q1588.3 433.6 1592.8 433.2M1588 436Q1581.1 441.1 1588.9 442.7M1553.4 442.9Q1560 440.5 1566.5 443.1M1553.4 442.9Q1553.5 446.8 1554.4 450.7M1557.6 447.1Q1561.2 437.4 1565.6 445.9M1564.4 442.8Q1566 444.9 1564.9 447M1568 443.1Q1578.4 441.2 1588.7 443M1570.3 442.7Q1571 447.2 1570.8 451.8M1573.8 442.7Q1578.1 449.6 1574.4 448.5Q1571.1 445.4 1573.8 442.7M1577.2 442.6Q1578.6 446.5 1578.3 450.5M1579.6 442.6Q1579.2 448 1579.4 453.4M1582.3 446.8Q1585.9 437.2 1590.3 445.7M1585.3 446.8Q1588.9 437.1 1593.3 445.6M1590 443Q1592.4 440.6 1594.9 442.6M1590 442.5Q1591.5 447.1 1589.4 451.8M1593.5 442.4Q1597.9 449.3 1594.1 448.3Q1590.9 445.1 1593.5 442.4M1552.2 460.8Q1560.2 465 1569 464M1552.1 461.4Q1553.5 460 1553 458.3M1557 462.2Q1561.1 457.5 1558.1 457.9Q1555.4 459.9 1557 462.2M1563.9 463.3Q1563.9 459.5 1565.9 456.1M1566 463.6Q1570 458.9 1567.1 459.3Q1564.3 461.3 1566 463.6M1568 464Q1572 459.3 1569.1 459.6Q1566.3 461.6 1568 464M1569.7 463.7Q1573.7 466.7 1578.3 465.4M1569.6 464.2Q1573.7 459.5 1570.7 459.9Q1568 461.9 1569.6 464.2M1571.9 464.6Q1572.7 461.6 1572.3 458.4M1580.3 465.8Q1586.4 468.3 1593.1 467.3M1582.8 466.3Q1583.9 462.6 1584.9 458.9M1585.1 466.7Q1589.1 462 1586.2 462.4Q1583.4 464.4 1585.1 466.7M1586.7 467Q1590.7 462.3 1587.8 462.6Q1585 464.6 1586.7 467M1589.1 467.4Q1593.2 462.7 1590.2 463Q1587.4 465 1589.1 467.4M1561.2 453.3Q1570.6 463.7 1580 448.7M1548.6 497.5c-8.5 10.1 10.1 13.5 16.9 -3.4M1434.8 479.3L1435.4 458.6M1447.1 426.8c-9.4 11.3 11.3 15.1 18.8 -3.8M1513.3 525.5c-7.3 8.8 8.8 11.7 14.6 -2.9M1537.2 503.4L1538.9 475.3M1436.5 455.8Q1452.3 466.8 1468.1 453.4M1458.7 484.8Q1475.2 493.8 1491.7 479M1567.3 424.2L1569.7 396.5M1505.8 468.4L1507.6 441.2M1437.8 503.7L1437.2 472.7M1559.4 431.9L1561.9 408.3M1538 513.4L1539.6 491.3M1435.3 477c-8 9.6 9.6 12.8 16 -3.2"/><path stroke-width="2.9" d="M1578.7 457.9L1578.9 458.6M1566.8 474L1567 474.8M1590.3 463.1L1590.5 463.9M1565.2 478.6L1566.1 478.6M1568.5 480.3L1569.5 480.4M1570 483.5L1571 483.5M1568.3 488.6L1568.7 489.5M1563.7 500.7L1564.1 501.5M1535.9 498L1535.4 498.7M1503.1 504.7L1503.7 505.4M1510 532L1510.5 532.7M1508.2 522.9L1508.7 523.6M1508.5 526.1L1509 526.9M1497.6 530.6L1498.1 531.3M1507.9 539.1L1508.4 539.8M1491.2 544.7L1490.8 545.5M1477.8 512.5L1477.9 513.4M1466.1 539.2L1466.2 540.1M1427.6 498.9L1426.7 498.6M1439.1 521.8L1438.4 521.6M1438.5 519L1437.9 518.7M1403.7 470.2L1403.1 470.8M1401.4 454.2L1400.7 454.7M1429.5 434.2L1428.8 433.6M1442.4 417.6L1442.5 416.8M1547.4 407.2L1548.2 407.6M1550.3 414.7L1551.1 415.1M1555.5 421.4L1556.3 421.8M1557.4 391.2L1558.2 391.6M1565.6 399.3L1566.3 399.7M1559.9 409.4L1560.6 409.7M1566 383.2L1566.7 383.6M1559 390.5L1559.7 390.9M1572.6 392.3L1573.3 392.7M1570.3 406.1L1571 406.5M1573.8 411L1574.5 411.4M1567 429.2L1567.6 429.8M1569.8 439.4L1570.3 440M1567.1 423.5L1567.6 424.2M1569.6 433.1L1570.2 433.7M1560 449.2L1560.9 449.6M1554.9 456.9L1555.6 456.7M1579.8 468.7L1580.5 468.5M1552.8 491.1l2 -2M1453.3 493.5l2 -2M1559.7 500.5l2 -2M1494.7 469.2l2 -2M1458.6 482.1l2 -2M1517.7 506.4l2 -2M1495.3 462.4l2 -2M1515.5 475.5l2 -2M1483.1 474.1l2 -2"/></g><g fill="none" stroke="#161716" stroke-linecap="round" stroke-linejoin="round" clip-path="url(#i1b)"><path stroke-width="3" d="M1542.4 455.1q5.5 -11 11 0q-5.5 11 -11 0M1485.5 459.4q4.4 -8.7 8.7 0q-4.4 8.7 -8.7 0M1513.2 410q5.6 -11.1 11.1 0q-5.6 11.1 -11.1 0M1527.9 473.7q7.1 -14.2 14.2 0q-7.1 14.2 -14.2 0M1470.5 480.2q5.6 -11.2 11.2 0q-5.6 11.2 -11.2 0M1483.3 405.3q7.8 -15.6 15.6 0q-7.8 15.6 -15.6 0M1486.8 423.8q6.2 -12.4 12.4 0q-6.2 12.4 -12.4 0M1544.7 441.3q6.9 -13.8 13.8 0q-6.9 13.8 -13.8 0M1524.6 483.2q4.6 -9.3 9.3 0q-4.6 9.3 -9.3 0M1498.9 407.7q6.2 -12.4 12.4 0q-6.2 12.4 -12.4 0M1469.1 448.6q6.2 -12.4 12.4 0q-6.2 12.4 -12.4 0M1517.6 451.4q7.1 -14.3 14.3 0q-7.1 14.3 -14.3 0"/><path stroke-width="3.3" d="M1523.8 412.8L1523.2 382.6M1461 454c-7.2 8.7 8.7 11.6 14.4 -2.9M1477.4 469.2Q1486.7 482 1495.9 465.7M1477.4 412.2Q1488.2 425.4 1499.1 406.6M1471 413.5L1472.7 382.1M1484.4 440.7L1483.4 412.4M1503.8 481.7L1504 448.2M1505.4 471.2L1505.5 440M1511.5 406.8c-7.7 9.2 9.2 12.2 15.3 -3.1M1498.9 465.4c-7.4 8.9 8.9 11.8 14.8 -3M1481.3 488.4L1483.1 457.5M1516.1 471.8c-8.9 10.7 10.7 14.2 17.8 -3.6M1533 470.4L1535.8 438.9M1524.2 477.7c-8.2 9.8 9.8 13.1 16.4 -3.3M1517.2 467.2c-6.3 7.5 7.5 10.1 12.6 -2.5M1481.9 468.3Q1497 474.3 1512 464.5M1518.3 414.8Q1528.1 424.9 1537.8 411.6M1501.4 431.3L1502.5 412.8M1484.3 474c-6.9 8.3 8.3 11 13.8 -2.8M1521.9 408.6c-9.9 11.9 11.9 15.8 19.8 -4M1505.7 428.8L1505.4 403.2M1482.7 423.9Q1497.3 434.1 1512 417.6M1529 441.6Q1543.4 450.6 1557.8 438.2M1513 413.2L1513.3 390.5"/><path stroke-width="3.5" d="M1532.6 429V487M1514.6 439V477M1492.6 445V471"/><path stroke-width="4" d="M1458.6 425Q1448.6 459 1475.6 465Q1500.6 469 1522.6 449M1472.6 485Q1508.6 499 1545.6 469M1522.6 413Q1546.6 435 1526.6 451M1517.6 422.1l2 -2M1522.6 421.9l2 -2M1533.8 439.5l2 -2M1469.1 444.5l2 -2M1507.3 477.8l2 -2M1506.7 445.4l2 -2M1518.6 453.2l2 -2M1513.3 490l2 -2"/></g><g transform="translate(1491.8 296.2) scale(1.0)"><path d="M0 0L11 29L7 28.5L10 104H0L-1.5 31L-5 33Z" fill="#161716"/><g fill="none" stroke="#161716" stroke-linecap="round"><path d="M-43 56Q-48 92 -33 97Q-20 100 -10 51" stroke-width="8.5"/><path d="M-10 51Q-16 96 -1 99Q6 100 4 62" stroke-width="8"/><path d="M7 99Q30 110 48 97Q53 84 43 46" stroke-width="10"/><path d="M-46 53Q-30 55 -6 44" stroke-width="2.2"/><circle cx="-5" cy="40" r="3.4" stroke-width="3"/><path d="M-50 47Q-43 49 -43 56" stroke-width="5"/><path d="M19 21Q16 32 21 40M27 22V38Q23 43 18 39" stroke-width="3"/></g><path d="M41 36L52 53L43 53Z" fill="#161716"/></g><circle cx="621.3" cy="748" r="44" fill="none" stroke="#161716" stroke-width="3.8"/><path d="M641.8 674.7A78 78 0 1 1 589.9 678.7" fill="none" stroke="#161716" stroke-width="3.8"/><g fill="none" stroke="#161716" stroke-linecap="round" stroke-linejoin="round" clip-path="url(#f2a)"><path stroke-width="1.1" d="M666.4 759.3Q672.6 762.1 679.4 759.8M676.4 760.6Q676.7 756.2 677.4 751.9M681.2 760.4Q689.2 764.4 697.7 762.6M698.1 758Q701.1 769.1 706.9 760.1M663.5 768.5Q666.7 771 670.8 770.5M672.7 770.9Q679.4 775.9 687.9 775.2M689.4 776.2Q690.9 778.7 693.6 777.8M690.4 773.1Q690.9 781.8 696.6 776M659 776.3Q663.4 780.9 669.6 782.2M658.9 776.5Q661.3 775.5 661.4 773.2M661.7 778.1Q663.6 773.4 666 769M664.6 779.7Q667.1 775.8 668.7 771.4M671.5 783.9Q678.1 789.5 686.8 791.1M676 781.4Q674.7 791.2 682.3 786M683.5 785.6Q682.2 795.4 689.8 790.2M660.1 777Q654.3 779.9 651.8 786.6M660.1 777Q661.7 785.5 663.9 782Q664.1 777.2 660.1 777M659.9 783.3Q650.2 778.5 652.9 788.2M654.9 787.9Q645.2 783 647.9 792.7M650.8 787.1Q645.4 786.3 645.2 791.2M673.1 786.2Q665.7 790.6 660.6 797.6M659.1 799.3Q655 800.9 653.1 805M658.8 799Q660.5 807.7 662.7 804.1Q662.9 799.2 658.8 799M645 791Q637 788.9 630.7 794.9M640 791.9Q641 796.2 642.4 800.4M632.9 798.3Q626.6 788.5 623.8 799M626.5 795.2Q620.7 792.2 616.7 798M621.7 800.6Q615.3 790.8 612.6 801.3M619 801.2Q612.6 791.4 609.9 801.9M652.8 804.8Q642.2 803.5 633.1 809.2M650.1 809.6Q644.3 800.7 641.8 810.2M640.5 811.6Q634.7 802.7 632.2 812.2M630.9 809.6Q625.8 809.2 621.2 811.5M623.4 810.6Q622.3 813.1 623.8 815.1M618.6 812.2Q616.3 810.6 614.7 812.5M618.5 811.7Q615.7 819.6 619.2 817.7Q621.8 813.8 618.5 811.7M616.5 796.7Q612.4 792.2 605.7 793.2M613.8 795.6Q607.8 799.7 611.2 800.2Q615 798.8 613.8 795.6M603.5 792Q600.1 788.1 595 787.9M596.7 788Q594.6 789.1 594.7 791.3M594.9 786.7Q592.8 785.3 590.1 785.1M614.6 812.8Q605.8 807.5 596 804.7M598.8 809.4Q599.2 800.4 592.8 805.7M595.5 803.6Q592.3 800.7 587.8 800.5M589.1 805.1Q589.6 796.1 583.2 801.4M587.1 804.2Q587.6 795.2 581.1 800.5M585.7 799.6Q583 797.5 579.4 797.3M583.5 798.5Q581.8 802.6 580.2 806.9M589.9 782.9Q587.2 788.2 581.1 789.4M580.9 791.7Q578.5 796.3 572.8 797M572.6 798.3Q571.1 803 566 803.4M578.9 766.1Q570.3 765.8 565.5 773.1M580.3 769.2Q572.7 762 572.5 771.7M569.7 769.5Q570.6 775 573.4 779.6M563.3 773.3Q555.4 773.3 550.3 779.5M564.9 776.6Q557.2 769.4 557.1 779.1M551.9 778Q551.1 786.2 554 783.6Q555.6 779.2 551.9 778M577.2 764.7Q578.9 757.8 575.4 751.3M572.7 757.7Q581.1 754 573.3 750.6M572.6 755.7Q581 752 573.2 748.5M575.8 748.8Q577.2 744.7 575.4 740.7M572.1 746.2Q580.5 742.4 572.7 739M562.3 769.6Q563 760 560.4 750.6M557.5 755.1Q565.6 751.4 558 748.1M557.3 751.3Q565.4 747.6 557.8 744.3M561.2 749.9Q562.3 743.2 559.6 736.8M560.6 744.2Q557.3 743.8 554.1 744.4M556.6 737.9Q564.7 734.3 557.1 731M575.2 739.9Q579.7 735.5 580.8 729.1M577.8 736.4Q574.9 732.9 570.6 731.5M579.6 733.6Q575.6 731.4 572 728.7M577.7 727.8Q588.6 729.7 583.2 721M582 729.2Q589.2 722.8 590.7 713M560.3 736.8Q565.7 732.8 566.1 725.8M568.3 723.3Q573.3 718.2 574.6 710.8M575.5 711.7Q574.4 709.1 571.9 708.9M576 710.4Q581 707.2 580.7 700.9M572.3 708.2Q583 710.1 577.7 701.5M578.9 706Q577.9 703.4 575.4 703.2M591.7 713.6Q600 710.8 607.5 706.3M590.2 710.3Q596.5 716.5 596.8 708.3M599.6 710.1Q600.4 703.2 597.9 705.3Q596.5 708.9 599.6 710.1M601.5 709.2Q602.3 702.3 599.8 704.4Q598.5 708.1 601.5 709.2M610 705Q612.5 705.6 613.2 702.4M612.5 704.2Q612.9 701.9 611.4 700.7M581.9 701.9Q589.5 700.9 594.7 694.6M581.7 701.5Q580.4 696.3 577.5 691.9M594.2 695.8Q595.2 687.5 592.2 690.1Q590.5 694.4 594.2 695.8M596.8 693.4Q604 694.1 608.7 689M597.6 689.4Q605.2 696.8 605.5 687M602.8 687Q610.4 694.4 610.8 684.6M606.5 685.3Q614.1 692.8 614.4 682.9M643.7 709.9Q646.8 705 647.1 698.9M641.9 704.5Q651 704.7 645.5 698.3M648.6 698.8Q652.6 692.6 653.6 685M654.9 684.3Q655.8 682.8 655.4 680.7M654.5 684.1Q651.4 682.6 648.2 681M655.4 681.9Q651.6 681.1 648.7 678.2M653 716.7Q658.8 714.1 659.4 707.4M662 706.8Q667 700.7 670.4 693.2M661.6 706.6Q660.9 704.2 658.8 703.8M663.7 703.8Q659.4 701.3 656.1 697.5M654.1 717.8Q661.4 707.2 674 703.3M661 711.9Q669.5 715 665.5 716.6Q660.5 716.1 661 711.9M675 701.5Q675.8 698.5 679 698.5M659.8 724.8Q669.2 716.8 681.3 714.2M667.3 720.9Q670.2 724.7 672.5 728.9M673.7 717.5Q676.9 720.7 678.2 724.9M683.4 712.3Q684.5 709.2 688.3 711.3M685.5 716.4Q684.4 705.9 692.2 711.6M686 711.2Q693.2 715.5 689.3 716.2Q684.9 714.8 686 711.2M666.7 742.3Q675.4 742.4 682.6 737M672 740.9Q672.8 738.7 671.4 737.2M685.6 736.6Q690.7 737.5 694.4 733.7M695.3 734.6Q696.5 735.2 697 733.6M666.6 742.2Q674.6 739.5 682.9 741.9M666.9 746Q670 735.9 675 744.3M670.5 741.4Q671 746.1 670.4 750.9M681.8 740.5Q686.7 747.3 682.8 746.5Q679.2 743.4 681.8 740.5M685.5 740.7Q689.8 737.3 694.5 740.9M688.5 740Q690.3 742.1 689.4 744.3M692.4 739.7Q697.3 746.5 693.4 745.7Q689.8 742.6 692.4 739.7M696.7 738.8Q697.3 738.2 698.1 740.7M666.2 759.7Q673.7 764.4 682.1 761.3M671 761.1Q671.3 756.7 671.8 752.2M677.4 761.9Q679.5 756.3 678.3 750.4M683.7 761.7Q690.1 766.4 697.4 764M666.3 759.7Q671.1 759.7 675 762.8M677.1 763.9Q682.8 764.6 687.8 767.9M687.1 766.7Q689 774.8 685.7 772.5Q683.6 768.4 687.1 766.7M689.3 766.9Q693.3 766.4 696 770.3M687.7 771.5Q694.5 763.3 695.8 773"/><path stroke-width="1.3" d="M682.1 751.6L683.1 751.2M678.4 765.5L679.2 765.4M691.3 780.5L692 780.4M673.3 798.3L673 799.2M657.4 809.7L657 810.6M642.3 802.8L641.5 803.4M554.6 770L554.2 769.3M669.2 714.4L670.2 714.2"/><path stroke-width="1.4" d="M667.2 750.6Q671.8 748.5 676.2 751.2M667 753.1Q670.1 746.4 672.8 752.7M669.7 750.2Q672.4 755.4 669.7 754.4Q667.6 752 669.7 750.2M671.2 750.3Q672.2 751.9 671.4 753.4M673.8 750.5Q674 753.9 673 757.2M675.5 750.6Q678.3 755.8 675.6 754.9Q673.5 752.4 675.5 750.6M677 750.6Q683 749.1 688.6 752.4M677 750.7Q677.3 753.8 676.5 756.8M679.4 750.9Q680.5 752.5 679.6 754M681.5 754.1Q684.6 747.4 687.3 753.7M683.9 751.2Q686.6 756.4 684 755.4Q681.9 753 683.9 751.2M687.3 754.5Q690.4 747.8 693.1 754.2M689.6 751.9Q692.9 751 696.1 752.6M689.6 751.6Q690.5 755.4 689.9 759.1M692 751.8Q694.7 757 692 756Q689.9 753.5 692 751.8M693.7 755Q696.8 748.3 699.4 754.6M697.4 752.9Q698.1 751.4 698.6 752.6M697.4 752.2Q700.1 757.3 697.5 756.4Q695.4 753.9 697.4 752.2M665.4 762.7Q670.6 764.4 676 764.8M668.3 763.2Q671.4 760 669.3 760.1Q667.2 761.4 668.3 763.2M672.4 764Q675.5 760.8 673.3 761Q671.3 762.3 672.4 764M674.7 764.5Q677.8 761.3 675.7 761.5Q673.6 762.8 674.7 764.5M677.6 764.7Q679.9 766.5 682.7 766M677.5 765.1Q678.6 764.2 678.3 762.9M680.1 763.3Q681 768.8 684.3 764.8M684.6 766.4Q688.6 769.2 693.5 767.7M685.1 764.4Q686 769.9 689.2 765.8M686.1 767Q687.3 764.9 687.3 762.6M688.3 767.4Q688.3 765 689.2 762.8M690.4 765.5Q691.3 771 694.5 767M692.2 768.3Q695.3 765.1 693.2 765.2Q691.1 766.5 692.2 768.3M695.2 769.2Q695.5 770.3 696.4 768.4M695.7 766.6Q696.6 772.2 699.9 768.1M665.3 762.9Q671 763.1 675.5 766.2M665.5 762.4Q664.9 764.7 664.2 766.9M667.5 763.2Q667.3 765.6 665.6 767.4M669 763.7Q668.1 765.9 667.9 768.2M670.5 764.2Q671.4 768.5 669.7 767.3Q668.7 765.1 670.5 764.2M671.8 764.7Q671 767.6 670.2 770.4M673 767.6Q676.6 763.4 677.2 768.5M676.2 766.1Q681.3 766.7 685.2 770.5M676.1 766.3Q676.5 767.6 675.6 768.5M678.2 767Q679.1 771.3 677.4 770.1Q676.4 767.9 678.2 767M680.2 767.7Q679.3 770 679.1 772.6M681.4 770.6Q685 766.5 685.6 771.5M685.4 769.6Q684.2 772 683.4 774.6M686.8 770Q691.1 771.1 695.1 773.3M686.7 770.1Q687.1 771.5 686.2 772.3M688 770.5Q688.8 774.8 687.2 773.6Q686.1 771.4 688 770.5M689.8 771.2Q689.5 774.2 688.4 777M691.5 771.8Q690.6 774 690.2 776.4M663.3 768.5Q668.9 769.4 672.7 773.7M663.5 768.1Q662.4 771 660.3 773.4M667.9 770.4Q667.3 772.7 666.1 774.7M669.4 771.1Q669.7 776.2 668 774.5Q667.1 771.8 669.4 771.1M673.2 773.7Q680.2 774.9 685.4 779.9M673.4 773.2Q672.1 776 670.5 778.7M674.7 773.9Q675 775.5 673.8 776.4M675.9 774.5Q676.3 779.6 674.5 777.9Q673.7 775.2 675.9 774.5M677 778Q681.8 773.8 681.7 779.7M680 776.6Q680.2 778.2 679 779.1M681.1 777.2Q681.4 778.8 680.2 779.7M682.4 777.8Q682.7 782.9 681 781.2Q680.1 778.6 682.4 777.8M683.5 778.5Q683.9 783.5 682.2 781.8Q681.3 779.2 683.5 778.5M686.6 780.2Q689.6 780.4 691.2 783M685.5 782.4Q690.3 778.2 690.2 784.1M690.5 782.1Q690.9 787.1 689.2 785.5Q688.3 782.8 690.5 782.1M657.1 778.6Q659 781.9 663.2 781.8M658.6 776.5Q657.2 782.4 662 779.7M659.3 780Q663.6 778.1 661.5 777.4Q658.9 777.9 659.3 780M661.4 781.5Q665.8 779.6 663.6 778.9Q661 779.4 661.4 781.5M663.6 782.6Q668 787.6 674.2 790.1M663.4 782.9Q667.7 781 665.6 780.3Q663 780.7 663.4 782.9M666.5 785.1Q670.9 783.2 668.7 782.5Q666.1 782.9 666.5 785.1M668.1 786.2Q672.4 784.3 670.3 783.5Q667.7 784 668.1 786.2M669.2 787Q671.3 784.8 672.3 781.8M672.4 789.2Q673.8 788.7 674 787.3M673.5 790Q675.3 787.5 677.5 785.3M674.5 790.5Q678.2 794.1 683.3 795.9M674.4 790.6Q676.1 788.9 677 786.6M677.7 789.9Q676.3 795.7 681.2 793.1M678.2 793.3Q679.5 790.8 681.1 788.4M658.1 779.2Q652.1 783 647.7 788.5M657.8 778.9Q658 780.6 659.4 781.1M655.7 780.8Q656.7 786 658 783.9Q658.1 780.9 655.7 780.8M654.1 782.2Q656.6 784.4 658.3 787.4M654.7 785.5Q648.7 782.6 650.4 788.5M653.4 786.7Q647.4 783.7 649.2 789.7M650.4 785.7Q650.6 787.4 652.1 787.9M648.3 787.6Q649.3 792.8 650.6 790.7Q650.8 787.7 648.3 787.6M664.2 784.1Q659.1 786.5 656.4 791.6M665.5 785.5Q660.4 783 661.9 788.1M661.3 786.2Q662.2 790.7 663.3 788.8Q663.4 786.3 661.3 786.2M658.7 788.6Q659.6 793.1 660.7 791.2Q660.8 788.7 658.7 788.6M657.7 789.6Q658.9 791.3 660.1 793.1M655.3 791.7Q652.9 792.5 652.2 795.1M654.1 792.9Q655 797.3 656.1 795.5Q656.2 793 654.1 792.9M670 788.6Q664.7 792.1 661.2 797.4M670.1 788.7Q670.3 790.3 671.6 790.8M668.7 790Q670.1 792.4 672.3 794.3M666.7 791.8Q668.5 793.7 670 795.8M665.5 793Q666.4 797.9 667.6 795.8Q667.7 793.1 665.5 793M665.5 796.5Q659.8 793.7 661.5 799.3M662 796.2Q663 801 664.2 799Q664.3 796.2 662 796.2M660.8 797.6Q657.6 798.4 656.9 801.9M662.4 799.3Q656.8 796.6 658.4 802.2M659.6 798.4Q660.7 800.8 663.1 802M656.4 801.3Q657.4 806.2 658.6 804.2Q658.7 801.4 656.4 801.3M676 793.4Q672.6 795.1 671.6 799.4M678.2 795.7Q672 792.7 673.8 798.8M674.3 795.4Q676.7 796.9 678.3 799M673.2 796.5Q675.9 798.9 678.5 801.5M674 799.5Q667.8 796.5 669.6 802.7M669.6 799.6Q664.2 802.6 661.1 808.2M669.7 799.7Q672.1 802.5 674.2 805.7M668.1 805Q661.9 802 663.7 808.2M664 804.9Q664.2 806.7 665.7 807.3M664.3 808.6Q658.1 805.5 659.9 811.7M661.1 807.6Q662.2 813 663.5 810.7Q663.7 807.7 661.1 807.6M641.7 790.9Q643.2 796.2 647.6 799.8M643.8 789.7Q640.4 794.1 645.5 793.7M642.5 791.9Q644.3 790.7 646.3 789.7M643.6 793.8Q645 794 645.7 792.9M647.6 796.2Q644.2 800.5 649.3 800.2M646.3 798.5Q648.7 797.3 650.9 795.6M648.2 801.2Q649.8 807.1 654.2 811.5M650.6 801.3Q647.1 805.6 652.3 805.3M653.3 805.9Q649.9 810.3 655 810M652.2 808.5Q653.6 808.7 654.3 807.6M652.9 809.8Q657.3 809.9 655.8 808.5Q653.4 807.8 652.9 809.8M656 810.5Q652.5 814.8 657.6 814.5M654.6 813.1Q655.1 816.2 658.1 817.8M654.8 813Q656.9 811.2 659.8 810.8M655.7 814.7Q657.2 814.8 657.9 813.7M656.9 816.6Q661.3 816.7 659.7 815.2Q657.4 814.6 656.9 816.6M641.9 790.8Q645.1 795 645.7 800.4M639.6 791.8Q646.1 791.6 642.2 796.2M640.5 794Q647 793.8 643.1 798.3M641.2 795.7Q647.7 795.5 643.8 800M644.3 796.2Q641.4 797.4 638.2 798.2M645.4 798.6Q644.5 800 643 799.9M646.6 801.4Q650.2 805.7 650.4 811.5M646.5 801.4Q643.6 805.6 643.3 803.1Q644.3 800.5 646.5 801.4M644.7 804Q651.2 803.8 647.3 808.4M648 804.8Q647.1 806.3 645.6 806.2M648.8 806.9Q648 808.3 646.5 808.2M647.7 811.1Q654.2 811 650.3 815.5M650.6 812.4Q654 815.4 654 819.9M651.7 813.7Q650.8 815.2 649.3 815M653.3 817.6Q650.9 818.2 648.8 819.4M654 819.2Q651.2 820.2 648.5 821.4M636.5 793.1Q639 799.4 639.4 806.3M636.5 793.1Q633 796.8 633 794.4Q634.5 791.9 636.5 793.1M637.1 795.3Q634.6 796.8 631.8 797.1M638.5 800.4Q635 804.1 635 801.7Q636.4 799.2 638.5 800.4M639 802.2Q636.1 803.6 632.8 803.5M639.5 804.3Q636 808 636.1 805.6Q637.5 803.1 639.5 804.3M639.9 805.6Q638.9 806.9 637.4 806.6M639.5 806.8Q642.4 809.2 640.9 812.8M638 808.7Q644.4 809.4 639.9 813.4M641.2 810.6Q640.2 811.9 638.7 811.6M641.6 813.4Q643.1 816 642.9 819.1M642 813.3Q638.5 817 638.5 814.6Q639.9 812.1 642 813.3M642.5 815.4Q639 819.1 639.1 816.7Q640.5 814.2 642.5 815.4M640.7 818.7Q647.1 819.4 642.6 823.4M643.8 820.7Q644.9 822 644 823.7M644 820.7Q641.9 822 639.3 821.5M630.7 796Q626.3 794.7 621.9 796.4M630.7 795.4Q628.3 799.7 630.5 799Q632.4 796.9 630.7 795.4M627.4 795.6Q627 798.7 628 801.7M625.9 795.6Q625.3 798.2 625.4 800.7M623.7 795.7Q621.3 800.1 623.6 799.3Q625.4 797.3 623.7 795.7M620.3 795.7Q618.7 795.5 617.2 796.5M620.3 795.9Q619.4 797.3 620.1 798.5M618.2 796Q615.8 800.4 618 799.6Q619.9 797.6 618.2 796M632.3 803.8Q626.7 802.3 621.2 804M627.3 803.4Q626.4 807.1 627.2 810.7M625.1 803.5Q622.5 808.2 625 807.4Q627 805.2 625.1 803.5M622.7 806.4Q619.9 800.2 617.3 806M619.8 804.4Q618 803 616.4 804.5M617.8 806.7Q615 800.4 612.4 806.2M633.8 811.1Q630.7 809.5 627.7 811.7M633.9 813.8Q631 807.3 628.3 813.3M626.6 811.3Q621 810.3 615.6 811.8M626.6 811.2Q625.5 812.7 626.3 814.2M624.2 811.3Q624.3 814.5 623.8 817.7M622.3 811.4Q621.9 815.1 622.1 818.8M619.2 811.6Q618.2 813.1 619 814.5M635.3 818.8Q630.7 818.2 626.2 819.7M635.3 818.6Q635.1 821.4 635.7 824.2M633.7 818.6Q633.5 821.3 633.2 823.9M628.7 818.9Q628.8 821.3 628.6 823.7M625.4 818.9Q620.7 819 616.1 820M625.5 821.5Q623.1 816.1 620.9 821.1M623.3 821.6Q620.8 816.2 618.6 821.2M621.6 821.7Q619.1 816.3 616.9 821.3M619.2 819.4Q619 822.3 619.6 825.1M617.9 821.9Q615.5 816.5 613.3 821.5M616.5 819.5Q615.7 820.8 616.3 822M615.3 819.3Q615 818.1 614.9 820.1M615.4 822Q613 816.6 610.8 821.6M611.3 794.4Q608.7 800 609.3 806.1M613.6 794.8Q606.6 796.2 611.9 800.2M610.2 797Q614.5 800.8 614.2 798.1Q612.4 795.5 610.2 797M609.9 799Q612.5 800.2 615.4 800.1M609.4 801.6Q612 802.7 614.9 802M611.9 804.4Q604.9 805.8 610.3 809.8M608.7 805.9Q612.9 809.6 612.6 806.9Q610.8 804.3 608.7 805.9M608.3 807.9Q605.6 815 605.8 822.6M608.3 807.9Q612.6 811.6 612.3 808.9Q610.5 806.3 608.3 807.9M611 810Q603.9 811.4 609.3 815.4M607.8 811Q610.7 811.9 613.6 812.3M607.4 813.1Q611.7 816.8 611.4 814.1Q609.6 811.5 607.4 813.1M606.8 816.3Q610.7 817.1 614.6 817.1M606.6 817.9Q609.3 818 611.9 819.2M608.8 822.5Q601.7 823.9 607.1 827.9M605.3 823Q603.8 823.9 605.6 825.4M605.7 823Q608.6 823.5 611.4 824.8M608.2 825.8Q601.2 827.2 606.5 831.2M604.3 792.2Q601 798.5 600.7 805.8M604.1 792.1Q606.9 793 609.5 794.3M605.2 798.4Q597.9 798.7 602.7 803.5M604.6 800.2Q597.3 800.5 602.1 805.3M600.8 802Q601.9 803.6 603.5 803.3M599.7 806.8Q596.2 809.9 597.7 814.8M599.2 806.6Q602.9 811.1 603.1 808.3Q601.6 805.4 599.2 806.6M598.4 809.1Q601.5 810.9 604.8 812M597.6 811.5Q599.9 813.1 602.4 814M597.1 813Q600.7 814.2 604.1 815.6M595.8 815.6Q594.4 818.6 594.6 822.1M596.2 815.7Q597.2 817.3 598.9 817M595.4 818Q598.5 818.7 601.2 820.3M594.8 819.8Q598.6 820.7 601.9 823.1M594.2 821.6Q597.4 821.9 599.9 824.4M603.2 793.1Q600.5 788.2 594.7 787.8M601.9 795.1Q603.4 788 597.6 791.4M601.2 791Q599.4 793.8 597.6 796.5M594.8 790.4Q596.3 783.3 590.5 786.7M593.2 785.9Q591.8 783.7 588.9 783.7M593.2 785.8Q591.5 786.4 591.3 788.1M591.2 784.4Q586 786.8 588.6 787.7Q591.8 787 591.2 784.4M589.7 783.4Q584.4 785.8 587 786.6Q590.2 786 589.7 783.4M600.1 800.4Q595.7 795 589.1 793M600.5 799.9Q599.2 802.6 597.3 804.9M597.3 801.1Q598.8 794.5 593.3 797.6M594.3 799.1Q595.7 792.5 590.3 795.6M594.6 796Q589.8 798.2 592.2 799Q595.1 798.4 594.6 796M589.8 792.8Q585 795 587.4 795.8Q590.3 795.2 589.8 792.8M588.8 792.8Q587.4 789.1 583.5 789.3M586.3 793.8Q587.7 787.2 582.3 790.3M585.5 789.9Q583.8 792.4 582.2 795M597.1 807.6Q596.1 804.4 592.7 804.9M597.4 807.1Q593 809.1 595.2 809.8Q597.9 809.3 597.4 807.1M595.8 806Q591.4 808.1 593.6 808.8Q596.2 808.2 595.8 806M592.4 806.8Q593.7 800.9 588.8 803.7M592.2 803.7Q589 800.6 584.9 798.9M590.8 805.8Q592.1 799.8 587.2 802.6M590.7 802.7Q586.3 804.7 588.5 805.4Q591.2 804.9 590.7 802.7M586 802.6Q587.3 796.6 582.4 799.4M584.5 801.6Q585.8 795.6 580.9 798.5M583.2 798.3Q581.5 795.2 578.3 794.5M582 799.9Q583.3 794 578.4 796.8M581.5 796.5Q580 797.1 579.8 798.5M579.5 795.2Q577.7 797.5 575.9 799.8M578.4 794.5Q576.9 796.8 574.8 798.7M594.2 814.6Q590.3 810.7 585.2 808.7M592.9 816.5Q594.3 810.5 589.3 813.3M592.4 813.1Q587.9 815.1 590.2 815.8Q592.8 815.3 592.4 813.1M589.2 814Q590.5 808 585.6 810.8M589.2 810.9Q587.7 811.5 587.5 812.9M587.8 810Q585.5 812 584 814.4M586.5 809.2Q585.3 811.1 584 812.9M584.6 808.5Q580.6 803.3 573.9 801.9M583.5 810.2Q584.8 804.2 579.8 807M578.2 806.7Q579.5 800.7 574.6 803.5M576.7 805.7Q578 799.7 573.1 802.5M576.6 802.6Q572.2 804.6 574.4 805.3Q577 804.8 576.6 802.6M575 801.5Q573.9 804 572.1 806M573.9 801.5Q573.8 800 572.5 800.5M574.2 801Q573 803 572 805.2M571.7 802.4Q573 796.4 568.1 799.2M585.5 777.9Q582.5 779.4 581.2 782.9M585.4 781.4Q579.9 778.6 581.4 784.2M581.8 781.2Q583.5 782.9 585 784.7M579.3 784.1Q575.1 786 572.9 790.2M580.7 785.6Q575.2 782.8 576.7 788.4M577.5 785Q578.4 789.8 579.7 787.8Q579.8 785.1 577.5 785M576.4 786Q577.3 790.8 578.6 788.8Q578.7 786.1 576.4 786M574.6 787.6Q575.4 792.5 576.7 790.5Q576.8 787.8 574.6 787.6M575 790.7Q569.5 787.8 571 793.4M572.3 790.2Q567.4 793.4 563.6 797.8M572.1 789.9Q572.2 791.5 573.5 792M570.3 791.4Q571.2 796.2 572.4 794.3Q572.6 791.5 570.3 791.4M570.4 794.8Q564.8 792 566.3 797.5M569.2 795.9Q563.6 793 565.1 798.6M565.5 795.7Q567.5 797.6 569 799.9M562.6 798.6Q561.1 797.3 562.5 799.4M581.9 772.5Q578.1 773 576.3 776.6M583.2 774.5Q578.6 771.2 579.2 776.4M579.6 774Q581.1 775.6 582.2 777.3M578.9 777.3Q574.3 774 574.9 779.3M575.9 776.5Q572.9 777.2 571.4 780.3M577.2 778.5Q572.5 775.2 573.2 780.4M573.8 777.9Q575.4 779.6 576.2 782M572.2 778.9Q573.6 781.5 575.8 783.5M570.7 780.2Q565 782.1 560.9 786.6M570.6 780Q571.6 781.9 572.7 783.7M568.9 781.1Q569 785.6 570.4 784Q570.9 781.5 568.9 781.1M567.5 782.1Q568.8 784.7 570.5 787.3M566.2 782.9Q566.3 787.4 567.7 785.8Q568.2 783.3 566.2 782.9M564.2 784.3Q564.3 788.8 565.7 787.1Q566.2 784.7 564.2 784.3M563.7 787.4Q559 784.1 559.6 789.4M561.4 786.1Q562.3 788.5 563.8 790.5M559.7 787.7Q556.9 787.6 555.9 790.2M559.5 787.4Q560.2 789.7 562.3 791M557.6 788.6Q557.8 793.1 559.1 791.5Q559.6 789 557.6 788.6M557.1 791.8Q552.4 788.5 553.1 793.7M581.6 771.8Q580.1 774.5 577.2 774.1M581.8 772.3Q581.1 769.8 579.6 767.6M579.7 773.4Q578.4 772.7 578.4 771.4M577.9 774.2Q574.2 771.8 576.3 771.4Q578.6 772.2 577.9 774.2M577 774.3Q573 777.6 568.1 778.8M574.6 773.2Q575 778.8 570.9 775.6M573.4 773.8Q573.8 779.4 569.7 776.2M572 774.4Q572.4 780.1 568.3 776.8M571.5 777.2Q569.8 775 569.5 772M568.4 776.1Q568.8 781.8 564.6 778.6M567 779.5Q562.5 782.2 557.3 783.4M567 779.4Q565.4 777.5 565.3 775M563.6 781Q559.9 778.5 562 778.2Q564.3 779 563.6 781M562 781.7Q558.3 779.3 560.4 779Q562.7 779.8 562 781.7M557.5 781.3Q557.9 787 553.7 783.7M556.3 784.5Q555.5 786.5 553.3 785.6M556.3 784.5Q554.7 782.4 553.7 780.1M554 783Q554.4 788.6 550.3 785.4M579 766.4Q574.2 768.9 568.4 768.4M579 766.2Q574.9 762.5 577.5 762.5Q580.2 763.9 579 766.2M575.3 764.3Q574.7 771.2 570.3 766.5M573 765Q572.5 771.9 568.1 767.2M570.8 765.7Q570.2 772.6 565.8 767.9M568.2 769.3Q565.9 772.3 562.3 770.6M568.2 769.4Q566.8 768.4 567 766.8M565.4 770.3Q561.3 766.6 563.9 766.6Q566.6 768 565.4 770.3M563.1 771Q559 767.3 561.6 767.3Q564.3 768.7 563.1 771M561.1 771Q556.3 773.5 551 774.3M561.3 771.5Q557.2 767.9 559.8 767.8Q562.5 769.3 561.3 771.5M559.2 772.1Q555.1 768.5 557.8 768.5Q560.4 769.9 559.2 772.1M557.3 772.7Q556.1 769.7 555.8 766.3M555.2 773.4Q551.1 769.7 553.7 769.7Q556.4 771.1 555.2 773.4M548.6 774.7Q549.3 777 548.7 774.8M548.8 775.3Q544.7 771.7 547.3 771.6Q550 773.1 548.8 775.3M576.9 758.8Q570.7 761.3 564.1 760.5M577 759.3Q575.9 756.9 575.9 754.4M575.1 759.6Q574.5 756.5 573.7 753.5M572.3 760Q569.1 756 571.5 756.4Q573.8 758.1 572.3 760M571 760.2Q567.7 756.2 570.2 756.5Q572.4 758.3 571 760.2M568.7 760.5Q567.5 757.3 567.3 753.9M566.8 760.7Q565.6 759.5 566.1 758.1M565 758.3Q563.5 764.6 560.2 759.6M562.4 761.4Q556.6 764 550.3 762.6M562.4 761.3Q561.2 758 561.5 754.4M560 759Q558.5 765.3 555.1 760.3M555.3 762.3Q554 759.1 553.6 755.7M553.5 762.6Q550.3 758.6 552.7 759Q555 760.7 553.5 762.6M550.5 760.3Q549 766.6 545.6 761.6M549.3 763.1Q547.7 764.9 545.6 762.7M546.6 760.8Q545.1 767.1 541.7 762.2M576.1 746.6Q572.4 744.5 568.7 747.5M576.1 746.6Q573.3 751.1 575.7 750.4Q577.8 748.3 576.1 746.6M573.7 746.6Q573.4 749.6 573.1 752.5M571.4 746.6Q571.3 750.1 571.8 753.6M569.1 746.6Q566.3 751.1 568.7 750.4Q570.8 748.3 569.1 746.6M567.8 746.9Q563.2 745.2 558.5 746.8M565.5 746.5Q564.5 747.9 565.2 749.3M563.6 746.5Q564.1 749.2 563.6 751.9M561.5 746.5Q558.7 751 561.1 750.3Q563.2 748.3 561.5 746.5M559.2 746.5Q556.4 751 558.9 750.3Q561 748.3 559.2 746.5M556.7 746.7Q550.7 745.1 544.6 747.4M556.7 746.5Q557 748.9 556.6 751.4M554.2 749.3Q551.8 743 549 748.5M552.6 746.5Q549.8 751 552.3 750.3Q554.4 748.2 552.6 746.5M551 749.2Q548.6 743 545.8 748.5M548.5 749.2Q546.1 743 543.3 748.5M576.1 747.1Q569 747.3 562.2 744.4M576.4 744.4Q573.3 750 571.4 744.4M573.4 746.7Q574.2 744.2 573.8 741.6M572 746.5Q571.6 744 571.9 741.6M569.3 746.1Q567.3 741.5 569.5 742.5Q571.2 744.7 569.3 746.1M566.2 743Q563.1 748.6 561.2 743M564.4 745.5Q562.3 740.8 564.6 741.8Q566.3 744 564.4 745.5M561.2 745Q557.1 745.6 553.5 743M561.2 745Q560.4 743.6 561.3 742.4M559.8 744.8Q560.3 742 560.9 739.1M558.5 742Q555.4 747.6 553.5 742M555.9 744.3Q553.9 739.7 556.1 740.7Q557.8 742.9 555.9 744.3M554.1 741.4Q551 747 549.1 741.4M552.8 744.2Q549.9 743.9 547.1 743M553.2 741.3Q550.1 746.9 548.1 741.3M550.4 740.9Q547.3 746.5 545.4 740.9M548 740.6Q544.9 746.2 543 740.6M577 740.7Q571.7 741 567.3 737.7M576.8 741.2Q578.3 738.3 577.8 734.9M572.3 740Q570.9 735 573 736.3Q574.4 738.8 572.3 740M570.5 736.7Q566.6 742 565.4 736M568 738.9Q569.4 736.2 568.9 733.1M565.2 737.9Q560.8 738.2 557.1 735.7M565.2 738.1Q563.7 733.1 565.8 734.4Q567.3 736.9 565.2 738.1M563.3 737.6Q564.2 734.9 564 731.9M560.7 736.9Q561.3 733.6 562.1 730.3M557.9 736.1Q558.1 733.6 559.2 731.4M555.6 735Q552.1 735.3 549.1 733.6M555.5 735.5Q556.9 732.6 557.4 729.6M554.8 732.5Q550.9 737.8 549.7 731.8M551.5 731.6Q547.6 736.9 546.3 730.9M549.1 733.8Q550.2 730.4 551.4 727M548 733.3Q546.9 734.5 546.6 732.4M547.9 733.5Q547.3 731.9 548.3 730.7M577.6 735Q580.6 733.7 580.5 730.4M577.8 735.1Q577.2 733.6 575.8 733.5M579.2 732.9Q577.7 730.8 574.9 730.6M578.4 729.4Q584.4 730.6 581.5 725.7M581.3 728.6Q587 724 589.1 717M581.7 728.9Q581.2 727.4 579.7 727.2M582.8 727.2Q582.3 725.7 580.8 725.5M583.9 725.6Q583.3 724 581.9 723.9M585.2 723.5Q583 721.8 580.8 720.1M586 722.1Q583.9 717.7 583.2 720Q583.8 722.6 586 722.1M586.8 721Q584.6 718.9 581.6 718.1M587.8 719.4Q585.6 715 585 717.2Q585.6 719.9 587.8 719.4M570 732.4Q574.2 727.7 576.4 721.6M567.8 731Q574.8 732.4 571.4 726.7M571.4 731Q570.7 729.2 569.1 729.1M572.2 729.7Q569.7 724.6 568.9 727.2Q569.6 730.2 572.2 729.7M573.8 727.1Q572.1 724.8 569.3 724.4M575.4 724.6Q574.8 722.8 573.1 722.7M577 722.1Q574.5 720.3 571.5 719.3M578.2 720.6Q582.6 716.7 583.8 710.7M578 720.5Q575.5 715.4 574.8 718Q575.5 721.1 578 720.5M576.4 717.6Q583.3 719 579.9 713.3M578.5 714.3Q585.4 715.7 582 710M582.4 713.6Q579.9 708.6 579.2 711.1Q579.8 714.2 582.4 713.6M583.2 712.3Q580.9 711.1 579.1 709M562.4 729.8Q566.1 728.1 566.2 724.2M562.8 730.1Q560.7 725.6 560 727.9Q560.6 730.6 562.8 730.1M561.4 727.4Q567.6 728.7 564.6 723.6M564.4 727.7Q562.5 726.1 560.4 724.8M567.9 722.7Q569.9 720 570.7 716.6M565.4 721.1Q571.7 722.3 568.6 717.3M569 720.4Q566.8 715.9 566.1 718.2Q566.7 720.9 569 720.4M568.2 716.7Q574.5 717.9 571.4 712.9M571.8 715.9Q575.4 713.5 575.4 708.8M573.1 714Q570.8 712.8 569.1 710.7M574 712.5Q571.8 708 571.2 710.3Q571.8 713 574 712.5M573.3 708.8Q579.5 710 576.5 705M576.8 708.1Q579.3 707.6 578.4 705M576.8 708.1Q574.6 703.6 574 705.9Q574.6 708.6 576.8 708.1M575.3 705.5Q581.6 706.8 578.5 701.7M555.4 727.6Q558.9 725.2 557.7 720.7M552.8 726.3Q559.7 726.8 555.8 721.8M554.9 722Q561.8 722.6 557.8 717.5M558.5 721.2Q556.1 719.5 553.2 719.3M558.6 719.8Q562.5 717 562 712.2M559 720Q555.7 718.8 553 716.5M557.3 717Q564.2 717.5 560.2 712.4M558.1 715.3Q565 715.8 561.1 710.7M561.8 714.3Q560.9 712.7 559.3 712.7M562.9 712.7Q567.1 707.6 570.9 702.3M564.8 705.4Q571.3 707.5 568.7 701.7M568.1 705.8Q567.7 704 566.1 703.7M568 701.4Q574.6 703.5 572 697.7M571.6 700.7Q574.1 701.5 572.6 699.1M572 701Q570.2 695.9 569.2 698.2Q569.5 701.3 572 701M570.9 697.9Q577.4 700 574.8 694.2M589.8 717.2Q585.3 713.9 583.3 708.3M591.9 715.5Q586.4 717.4 588.5 712.4M588.3 715Q589.8 710.6 590.7 712.6Q590.5 715.2 588.3 715M587.2 713.7Q589.2 712.2 591 710.5M583.6 709.3Q584 707.8 585.3 707.5M582.1 706.8Q577.5 703.2 574.6 698.2M581.8 707.1Q583.2 702.7 584.1 704.7Q583.9 707.3 581.8 707.1M580.5 701.7Q574.9 703.6 577.1 698.6M577.6 698.2Q572 700.1 574.2 695.1M574 696.9Q570.6 696 570 692.8M575.4 695.7Q569.9 697.5 572 692.6M573 692.8Q567.5 694.7 569.6 689.7M572.1 691.6Q566.5 693.5 568.7 688.5M595.6 712.6Q591.5 711.2 591.7 707.2M595 713Q597.4 708.2 598.1 710.6Q597.4 713.5 595 713M595.9 709.2Q589.3 710.4 592.6 705.1M592.1 708.3Q594.5 703.6 595.2 706Q594.5 708.9 592.1 708.3M590.8 706.1Q586.8 700.5 583.8 694.3M590.8 706.1Q593.2 701.4 593.8 703.8Q593.2 706.7 590.8 706.1M586.3 699Q588.9 696.8 592.3 695.9M585.1 696.9Q587.5 692.2 588.2 694.6Q587.5 697.5 585.1 696.9M583.6 694.5Q584.2 692.9 585.8 692.8M582.4 692.9Q579.9 689.9 578.9 685.9M581.2 690.7Q583 688.5 585.6 687.7M579 687.1Q581.4 682.3 582.1 684.8Q581.4 687.6 579 687.1M637.4 707.2Q639.8 702.6 640 697.3M635.4 704.2Q642.2 703.6 637.5 699.2M638.7 702.9Q635 698.9 635 701.5Q636.5 704.1 638.7 702.9M639.1 701.5Q635.5 697.5 635.4 700.1Q636.9 702.7 639.1 701.5M637.1 698.4Q643.9 697.8 639.2 693.4M640.3 696.8Q643.4 691.5 643.7 685.3M640.5 696.9Q637.8 695.8 635.1 694.7M638.4 693.7Q645.3 693.1 640.6 688.8M641.6 693.1Q637.9 689.1 637.9 691.6Q639.4 694.3 641.6 693.1M642.2 691Q641.1 689.6 639.5 689.9M640.1 687.9Q647 687.3 642.3 683M643.5 686.4Q642.5 685 640.9 685.2M644.4 683.2Q647.2 680.6 646 676.9M644.5 683.2Q643.4 681.7 641.8 682M645.1 681Q644 679.6 642.5 679.9M643.2 677.4Q650 676.9 645.4 672.5M637 707.1Q637.9 699.7 642.9 694.1M636.4 706.9Q639.3 707.7 641.9 709M637.3 704.9Q642.7 704 641.1 706.1Q638.3 707.2 637.3 704.9M640.9 703.7Q635.9 698.9 642.4 698.5M642.4 700.3Q637.3 695.5 643.8 695.1M643 698.8Q638 693.9 644.5 693.5M641.3 695.5Q645 695.9 647.9 698.1M641.9 694Q645.3 694.8 648.3 696.4M642.6 693.6Q642.2 688.3 645.9 684.7M644.8 694.5Q639.8 689.6 646.3 689.2M643.1 691.1Q648.6 690.3 646.9 692.3Q644.1 693.5 643.1 691.1M646.4 690.7Q641.4 685.8 647.9 685.4M644.4 688.1Q649.8 687.3 648.2 689.3Q645.3 690.5 644.4 688.1M647.6 687.9Q642.6 683 649.1 682.6M646.8 682.6Q646.2 679.6 649.6 678.3M646.7 682.6Q652.2 681.7 650.5 683.8Q647.7 684.9 646.7 682.6M648.6 678.1Q654.1 677.3 652.4 679.3Q649.6 680.5 648.6 678.1M646.4 711.7Q650.7 706.8 653 700.8M644.2 710.5Q651.2 711.6 647.6 706.1M648.2 709.5Q645.9 707.9 643.4 706.6M646.9 705.7Q654 706.8 650.3 701.3M647.8 704.2Q654.8 705.2 651.2 699.8M650 700.3Q657 701.4 653.4 695.9M653.6 700.1Q658.2 695.8 658.5 689.1M654.7 698.1Q653.9 696.4 652.3 696.3M653 695Q660 696.1 656.4 690.6M657.1 693.8Q654.3 692.9 652.3 690.5M658.2 691.9Q657.4 690.2 655.8 690.2M659.7 689.3Q662.4 687.7 661.8 684.3M659.6 689.3Q658.9 687.6 657.3 687.5M660.9 687.1Q658.3 685.8 655.8 684.4M659.3 684Q666.3 685 662.6 679.6M651.6 715.7Q654.9 714.7 654.8 711.2M651.8 715.8Q650.1 711.2 649.2 713.4Q649.6 716.1 651.8 715.8M651.2 712.5Q657.1 714.2 654.6 709M654.4 712.5Q652.6 707.9 651.7 710.1Q652.1 712.8 654.4 712.5M656.3 709.8Q658.8 708.3 659.1 705.1M656.4 709.9Q654.6 705.3 653.8 707.5Q654.1 710.2 656.4 709.9M658.7 706.8Q657 702.2 656.1 704.4Q656.5 707.1 658.7 706.8M660.1 704.2Q665.5 699.6 668.3 693M658.5 702.9Q664.4 704.7 661.9 699.5M661.7 703Q659.9 698.4 659.1 700.6Q659.4 703.3 661.7 703M662.7 701.6Q661 697 660.1 699.2Q660.5 701.9 662.7 701.6M664.9 698.8Q662 697.1 660 694.3M666.9 696.2Q665.2 691.6 664.3 693.7Q664.7 696.4 666.9 696.2M669.9 692.6Q671 692.1 670.4 690.4M667.7 690.9Q673.7 692.7 671.2 687.5M670.6 691.3Q668.9 686.7 668 688.9Q668.4 691.6 670.6 691.3M652.5 716.5Q656.7 712 661.9 708.7M654.4 718.5Q652.1 712.6 657.5 714.7M654.5 714.9Q656.5 717.6 659.5 719.4M655.9 713.5Q657.5 713.8 658 715.1M657.9 711.6Q659.5 711.9 659.9 713.3M659.5 710.2Q661.1 710.5 661.5 711.8M661.1 708.6Q663.8 710.3 665.6 712.8M662 707.7Q666 702.9 671.3 699.4M662 707.8Q664 709.8 666.4 711.5M663.4 706.5Q665 706.7 665.4 708.1M670 703.9Q667.6 698.1 673.1 700.1M669.8 700.4Q671.7 703.3 674.4 705.5M670.9 699.4Q673.8 701.2 675.8 703.7M672.3 699Q673.1 696.1 676.2 695.7M673.6 700.4Q671.3 694.6 676.8 696.6M673.7 696.8Q675.3 697.1 675.8 698.4M657.9 721.1Q659 725.7 662.1 729.3M657.8 721.2Q660.4 720.2 662.9 719.1M661.3 722.4Q656.8 727 662.8 727.2M661.9 723.8Q657.5 728.4 663.4 728.6M660.2 726.4Q662.9 726 665.2 724.8M663.5 727.3Q659.1 731.9 665 732.1M662.3 730Q662.9 736.6 667.2 741.5M661.9 730.2Q664.9 729.1 667.5 727.4M663.6 734Q668.7 734.6 667.1 732.8Q664.5 731.8 663.6 734M664.5 735.9Q667.9 735 670.9 733.5M665.2 737.3Q667.3 735.8 669.8 735.3M665.8 738.7Q670.8 739.3 669.3 737.5Q666.6 736.5 665.8 738.7M666.7 740.6Q671.7 741.2 670.1 739.4Q667.5 738.4 666.7 740.6M664.6 716Q665.9 721.7 669.3 726.5M666.6 715.1Q661.8 720 668.1 720.2M665.8 720.2Q669 719.4 672 717.9M666.9 722.7Q672.3 723.4 670.6 721.4Q667.8 720.4 666.9 722.7M670.3 723.2Q665.5 728.2 671.8 728.4M671 724.9Q666.2 729.8 672.6 730M669.3 727.1Q669.8 733 673.9 737.2M669 727.2Q674.4 727.9 672.7 726Q669.9 724.9 669 727.2M669.6 728.7Q675 729.3 673.3 727.4Q670.5 726.3 669.6 728.7M673.1 729.5Q668.3 734.4 674.7 734.6M671.3 732.4Q674.9 731.7 677.9 729.7M672.3 734.4Q677.6 735.1 676 733.2Q673.1 732.1 672.3 734.4M673.5 737.1Q678.9 737.8 677.2 735.8Q674.4 734.8 673.5 737.1M674.2 739.4Q673.1 740.4 675.3 740M674.5 739.3Q676.6 737.7 679.1 737.1M670.1 711.4Q670.2 714.9 673.4 717.1M672.3 710.4Q668.3 714.5 673.6 714.7M671 713.2Q673.2 712.6 675 711.4M671.5 714.3Q672.9 714.6 673.8 713.6M672.1 715.7Q676.6 716.3 675.2 714.6Q672.9 713.7 672.1 715.7M672.8 717.2Q674.3 717.5 675.1 716.5M673.5 719.2Q675.4 723.8 678.3 728M673.7 719.1Q675.9 717.8 678.6 717.6M676.5 719.5Q672.5 723.6 677.8 723.8M675.3 722.7Q677.4 721.1 679.9 720.4M678.4 723.8Q674.4 727.9 679.7 728.1M677.8 728.2Q680.4 726.9 683 725.7M678.4 728.3Q677.6 731.7 680.7 733.3M678 728.5Q680.5 726.8 683.5 726.4M678.6 729.8Q680.9 729 683 727.7M679.1 731.1Q681.5 730.4 683.6 729.3M682.2 732Q678.2 736.2 683.5 736.3M681 734.7Q680.5 737.3 682.6 738.7M683.9 735.8Q679.9 739.9 685.2 740.1M676.6 706.3Q677.2 711.3 681.8 713.8M676.3 706.5Q678 704.7 680.5 704.1M678.2 709.6Q683.1 709.6 681.4 708Q678.7 707.4 678.2 709.6M681.7 710.4Q678 715.3 683.6 714.8M682.1 714.9Q682.4 718.7 685.9 720.6M681.6 715.2Q683.2 715.3 684 714.1M685 715.7Q681.3 720.6 686.9 720.2M684.2 719.3Q685.8 719.4 686.5 718.2M685.8 720.8Q685.3 724 687.1 726.4M686 723.4Q688.9 722.5 691.7 721.1M686.6 725.3Q691.1 726.5 689.9 724.6Q687.6 723.4 686.6 725.3M687.1 727Q687.3 730.1 689.4 732.6M689.4 726.2Q684.8 730 690.2 730.8M689.9 727.7Q685.3 731.5 690.7 732.3M690.4 729.3Q685.8 733 691.2 733.9M690.8 730.6Q686.2 734.3 691.6 735.2M689.2 733.6Q689.4 735.6 690.9 737.1M689.2 733.6Q692.2 732.7 695.3 732.1M689.9 735.9Q694.4 737 693.2 735.1Q690.9 733.9 689.9 735.9M667.2 741.6Q666.3 748.5 667.6 755.5M667.1 743.1Q671.2 745.7 670.6 743.5Q668.7 741.5 667.1 743.1M667.1 744.6Q669.9 745.5 672.8 744.9M667 746.2Q668.3 747.1 669.6 746.5M669.6 748.7Q663.8 750.8 668.8 753.5M666.9 751.3Q668.2 752.3 669.5 751.7M669.4 755.1Q663.6 757.2 668.7 759.9M667.2 756.6Q666 758.3 667.7 760M666.9 756.6Q670.1 756.1 673.3 756.4M669.4 758.7Q663.6 760.8 668.7 763.5M675.4 740.2Q673 744.1 675.4 748.1M674.9 740.2Q678 740.2 681.1 739.8M674.8 746.2Q676 747.2 677.3 746.6M677.3 747.6Q671.5 749.8 676.6 752.4M674.7 749.7Q673.9 752.3 675.2 755M677.2 749.7Q671.5 751.8 676.5 754.5M674.6 753Q678.7 755.7 678.1 753.4Q676.3 751.5 674.6 753M674.4 756.9Q673.6 759.3 675.3 761.7M677.1 756.9Q671.3 759 676.4 761.7M677.1 758.8Q671.3 760.9 676.4 763.6M677.1 760.3Q671.3 762.5 676.3 765.1M682.8 738.7Q680.5 745.8 683 752.9M682.6 741.2Q686.8 743.9 686.2 741.5Q684.2 739.5 682.6 741.2M682.5 743.8Q686.8 746.6 686.2 744.2Q684.2 742.2 682.5 743.8M682.5 746.4Q685.2 746.1 687.9 746.1M682.9 754.9Q680.6 759.1 682.3 763.4M684.9 756.3Q678.9 758.5 684.2 761.3M684.9 757.7Q678.9 759.9 684.2 762.6M682.2 759.2Q683.6 760.2 684.9 759.5M682.2 761.9Q685.4 761.5 688.7 762.5M682.2 763.3Q683.5 764.3 684.8 763.7M690.2 737.3Q689.4 741.3 690.7 745.4M693 737.3Q686.9 739.6 692.3 742.4M690.3 742.1Q692.9 742.1 695.6 742.3M692.9 743.9Q686.8 746.1 692.2 748.9M690.4 747.4Q688.7 753.9 690.4 760.3M690.2 747.4Q693.5 747.1 696.7 747.1M690.1 749.7Q694.5 752.4 693.8 750.1Q691.8 748 690.1 749.7M690.1 751.3Q693.2 752.1 696.4 751.4M692.8 753.1Q686.7 755.4 692 758.2M692.7 754.7Q686.6 757 692 759.8M692.7 757Q686.6 759.3 691.9 762.1M690 758.7Q693.4 758.5 696.7 759.6M689.9 761.7Q688.1 763.4 690.5 765.1M689.9 761.7Q694.2 764.5 693.6 762.1Q691.6 760.1 689.9 761.7M689.9 763.3Q693 762.9 696.2 763.3"/><path stroke-width="1.7" d="M685.2 755.9L685.8 756.3M695.2 756.6L695.8 757M666.5 764.9L667 764.7M671 760.2L671.5 760.1M682 761.3L682.5 761.2M684 767L684.4 767.4M694 770.6L694.3 771M663.2 773.9L663.5 774.4M669.9 775.9L670.2 776.3M666.7 780.7L667.3 780.8M669.6 789.9L670.1 790M681.9 791.3L682.5 791.4M680.5 797.5L681.1 797.6M658.7 785.8L658.5 786.3M657.8 794.3L657.6 794.8M660.2 803.1L660 803.7M670.5 804.8L670.3 805.4M650.9 799.6L651.3 799.8M647.8 805.1L648.3 805.4M653.5 804L653.9 804.3M653.2 811.3L653.2 811.9M647.6 817.8L647.6 818.4M633.9 799L633.8 799.6M642.4 806L642.3 806.6M646.7 821.7L646.6 822.3M629.4 800.7L628.9 800.9M629.8 808.9L629.3 809.2M629 808.5L628.5 808.8M611.5 815.4L611.7 816.1M612.2 820.6L612.4 821.2M604.3 805.8L604.4 806.5M596.3 793.3L595.7 793.2M594.5 802.6L593.8 802.5M593.9 792.5L593.2 792.5M588.7 797.1L588.1 797M586.8 795.8L586.2 795.7M590.7 800L590.1 799.9M565 801.3L564.8 801.8M582.7 776.2L582.4 776.7M553.1 776.6L552.5 776.5M557.4 758L556.8 757.8M548.5 757.8L548 757.6M567.8 744.1L567.2 744.4M546.4 752L545.9 752.3M568.3 740.6L567.8 740.3M575.9 736.7L575.5 736.3M590.9 718.7L591 718.1M574.8 714.6L574.9 713.9M562.9 722.7L562.9 722.1M567.4 713.1L567.5 712.5M552.8 723L552.8 722.4M564.5 714.1L564.7 713.4M561 705.4L561.2 704.8M571 706.2L571.1 705.6M593 713L592.9 712.4M587.3 708.1L587.2 707.5M587.3 689.9L587.2 689.3M578.3 690.7L578.3 690M647.6 701.7L647.6 701.1M648.4 697.2L648.5 696.5M665.8 701.4L665.9 700.8M664.3 691.1L664.4 690.5M669.8 707.6L670.4 707.4M660.6 733L661.1 733.3M662.6 719.2L663.1 719.6M681.3 724.3L681.7 724.7M683.9 711.6L684.4 711.9M683.2 721.7L683.5 722.1M672.6 742L672.8 742.5M672.6 743.7L672.8 744.2M679.8 751.6L680 752.1M680.3 738.7L680.5 739.2M680.1 748.8L680.4 749.3M687.7 751L687.9 751.5M693.9 765.1L694.2 765.7"/></g><g fill="none" stroke="#161716" stroke-linecap="round" stroke-linejoin="round" clip-path="url(#f2b)"><path stroke-width="2.4" d="M649.3 746.5q4.6 -9.1 9.1 0q-4.6 9.1 -9.1 0M615.9 724.9q6.3 -12.5 12.5 0q-6.3 12.5 -12.5 0M642.7 754.4q3.3 -6.5 6.5 0q-3.3 6.5 -6.5 0M649.5 743q6 -11.9 11.9 0q-6 11.9 -11.9 0M616.7 749q3.5 -7 7 0q-3.5 7 -7 0M649.7 743.8q3.9 -7.8 7.8 0q-3.9 7.8 -7.8 0M601.5 761q4.7 -9.4 9.4 0q-4.7 9.4 -9.4 0"/><path stroke-width="2.6" d="M613.5 761.9Q624.9 767.1 636.3 759M611.1 752.2c-7.5 9.1 9.1 12.1 15.1 -3M627.6 772.7L629.4 748.3M619.6 723.8L621.4 701.4M588.4 758.1L588.4 741M650.3 750.9c-4.4 5.2 5.2 7 8.7 -1.7M643.3 725.7L645.3 705.1M634.8 721.8L636.4 699.8M587.6 764.1c-4 4.8 4.8 6.4 8 -1.6M645.8 750.3c-4.6 5.5 5.5 7.3 9.1 -1.8M644.7 748.1c-5.2 6.3 6.3 8.4 10.5 -2.1M640.5 769.9Q647.1 779.6 653.8 763.9M640.8 739.4c-6.6 7.9 7.9 10.5 13.2 -2.6M655.6 762.1c-5.5 6.6 6.6 8.8 11.1 -2.2M616.1 737.5Q629.2 742.3 642.3 732.5M592.9 740.7L593.9 716.9M638.2 752.2Q648.4 762.9 658.6 748.8M636.4 765.4L638.7 740.1M610.9 754.5Q622.9 763.8 635 752.1M587.2 759.1L587.7 737M638.3 751.6L638.4 737M639.8 736Q652.1 741.1 664.5 734.4"/><path stroke-width="2.8" d="M646.9 733.6V780M632.5 741.6V772M614.9 746.4V767.2"/><path stroke-width="3.2" d="M587.7 730.4Q579.7 757.6 601.3 762.4Q621.3 765.6 638.9 749.6M598.9 778.4Q627.7 789.6 657.3 765.6M638.9 720.8Q658.1 738.4 642.1 751.2M626.7 731.9l1.6 -1.6M587.8 735.7l1.6 -1.6M649.2 744l1.6 -1.6M614 718.9l1.6 -1.6M627.9 711.7l1.6 -1.6M599.6 776l1.6 -1.6"/></g><path d="M619 681L621 678L623 681L624 740H618Z" fill="#161716"/><circle cx="898" cy="756.5" r="40.6" fill="none" stroke="#161716" stroke-width="3.8"/><path d="M927.5 681.9A76.2 76.2 0 1 1 845.7 696.3" fill="none" stroke="#161716" stroke-width="3.8"/><g fill="none" stroke="#161716" stroke-linecap="round" stroke-linejoin="round" clip-path="url(#i2a)"><path stroke-width="1.1" d="M940 753.3Q948.5 751.7 956.2 755.7M943.4 753.3Q942.1 757.4 942.7 761.9M946.9 753.7Q948 755.7 946.8 757.5M957.4 755.4Q964.3 754.8 970.6 758.2M971.7 757.5Q972.6 755.5 972.7 758.5M934.3 773.5Q938.2 775.7 943.2 775.5M936.2 769.1Q935.8 779.9 943.4 773.5M939.5 770.6Q939.1 781.3 946.8 774.9M943.8 772.4Q943.4 783.2 951 776.8M944.2 777.3Q949.4 783 957.5 782.2M944.2 777.4Q945.3 773.3 948.6 770.1M959 783.6Q961.5 785.8 965.2 785.4M964.6 786.3Q971.6 781.4 967.5 780.9Q963.1 782.6 964.6 786.3M933.8 774.2Q943.2 779.3 949.6 788.3M933.9 774Q933 782.3 930.6 779.1Q930.1 774.5 933.9 774M936 775.7Q934.4 779.4 931.1 781.8M952 788.4Q957.1 790 959.9 794.5M959.5 794.1Q956.5 797.4 954 801.1M920.5 787.6Q924.8 797.8 933.5 804.5M930.9 795.1Q925.4 804.4 935.2 802.4M935.2 807.3Q935.3 812.7 940.4 814.1M940.9 807.9Q935.5 817.2 945.2 815.2M920.2 789.4Q911 790.2 903 795M920.1 789Q918.1 796 921 794.2Q923 790.6 920.1 789M919.2 793.2Q913.6 785.8 912 794.2M911.2 791.4Q910.3 793.7 911.8 795.3M909.8 795.8Q904.2 788.4 902.6 796.8M902 793.8Q899.3 792.5 897.7 795.5M902.1 794Q902.2 798.4 904.7 802.2M926 799.1Q916.8 800.2 908.3 803.5M926.9 802.4Q920.9 794.3 919.1 803.5M923.6 803.4Q917.5 795.2 915.8 804.5M916.2 801.1Q913.9 808.8 917.2 806.8Q919.4 802.9 916.2 801.1M906.2 804.5Q901.5 803.8 898 807.7M906 803.9Q908 807.9 907.2 812.7M931.6 807.9Q921.3 809.8 911.7 814.4M926.5 809.2Q926.1 813.2 927.5 816.7M919.8 811.1Q920.7 816.5 922.1 821.7M910.2 814.7Q903.3 813.7 897.8 817.9M911.1 817.8Q905.1 809.8 903.3 818.9M907.9 814.4Q906.9 816.8 908.5 818.6M900.8 820.7Q894.8 812.6 893 821.8M897.6 795.3Q889.9 791.5 881.4 789.8M897.6 795.2Q891.5 800.2 895.3 800.4Q899.2 798.5 897.6 795.2M878.1 788.8Q875.1 786.5 871.3 786.4M878.2 788.6Q876.7 792.3 875.5 796.1M897.6 806.3Q892.4 801.7 885.2 803M897.6 806.2Q891.2 811.5 895.2 811.7Q899.3 809.7 897.6 806.2M890.1 803.7Q889.1 807.8 887.8 811.9M887.3 802.7Q881 808 884.9 808.2Q889 806.2 887.3 802.7M884.6 802.3Q876.6 798 867.5 797.3M884.7 801.8Q878.3 807.1 882.3 807.3Q886.4 805.3 884.7 801.8M869.7 796.7Q867.5 798.3 867.8 800.7M866.3 796.7Q866.7 792.5 864.2 796.4M897.8 816.8Q889.1 812.8 879.3 812.2M894.6 816.3Q888.1 821.7 892.1 821.9Q896.4 819.8 894.6 816.3M877.8 811.1Q873.1 806.8 866.9 807.3M865 805.6Q862.1 802.9 857.6 804.8M871.6 786.1Q867.5 775.5 858.4 768.2M861.3 771.5Q853.2 771.9 856.2 774.4Q860.6 775.2 861.3 771.5M856.1 765.8Q857.9 763.9 856 764.4M864.5 795.2Q863.1 790.3 858.9 787.4M858.2 786.7Q855.9 779.9 850.8 775M855.2 781.2Q851.3 782.7 847.8 784.9M851.1 775.3Q843.4 775.6 846.2 778Q850.4 778.8 851.1 775.3M848.9 772.9Q849.2 768.8 845.4 767.6M847.7 770.3Q842.6 772.2 839.4 777M858.3 803.5Q854.5 793.1 844.8 786.8M853.6 797.5Q849 799.5 845.3 803M851.8 794.8Q843.7 795.2 846.7 797.7Q851.1 798.5 851.8 794.8M850 792.3Q841.9 792.7 844.9 795.1Q849.4 796 850 792.3M844.7 785.4Q842.5 776.2 834.3 771.1M837 780.8Q842.8 772.3 833.3 773.6M834.5 777.1Q840.3 768.6 830.8 769.9M855.4 764.3Q857 753.2 854.1 742.3M845.5 767.4Q847.4 760.8 844.3 754.3M845.6 765.3Q841.9 766.2 838.1 765.2M845.4 758.6Q842.3 758.5 839.1 758.9M845 752.3Q846.9 747.3 844.6 742.3M841.5 747.5Q849.4 744.2 842.2 740.9M845 745.1Q841.8 745.2 838.6 745.7M841.4 742.5Q849.3 739.1 842.1 735.8M844.9 740.6Q845.6 740.2 844.6 739.8M844.9 740.6Q839 737.2 840 740.3Q842.7 742.9 844.9 740.6M834.4 770.5Q836.7 764.4 834.6 758.4M835 766.8Q831.8 766.8 828.6 767.4M835 755.8Q836.4 751.2 833.4 746.7M833.7 745Q834.9 741.1 833.9 737.4M856.4 742.8Q849.4 742.6 843.9 738M853.7 742.5Q854.2 737.9 856.6 733.9M843.6 739.1Q842.1 732.5 844.7 734.3Q846.4 737.7 843.6 739.1M842 738.9Q836.7 737.3 831.9 734.1M842.1 738.6Q841.4 736.5 842.8 735.1M835.5 736.4Q836.7 732.7 838.1 729.2M828.8 734.6Q826.2 735.6 825.1 732.1M858.8 735.3Q852.4 734.5 849 728.3M858.4 730.4Q850.4 736.9 850.9 727.4M854.5 728.3Q846.6 734.7 847.1 725.2M847 729Q837.8 725.2 830.4 718.2M849.2 725.2Q841.2 731.7 841.8 722.2M862.6 728.3Q853.4 721.1 846 711.8M865.6 724.7Q855.7 730 858.2 719.9M856.8 723.3Q861.2 719 864.5 713.9M854.1 721Q857.3 718.2 859.6 714.7M844.3 711.4Q840.2 709.8 838.2 705.9M846.8 708.5Q836.9 713.8 839.4 703.7M844.1 706.2Q834.2 711.5 836.8 701.4M837.5 706.7Q839.8 701.8 844.1 698.6M904.9 710.2Q905.6 705.8 908.8 702.1M907.8 701.1Q909 692.5 913.8 685M908 701.2Q915.6 699.2 913.6 702.3Q909.7 704.4 908 701.2M914.4 682.8Q913.6 680.4 916.3 679.1M913.7 682.6Q921.3 680.6 919.2 683.8Q915.4 685.8 913.7 682.6M914 712.8Q915.2 705.9 921 701.5M918.1 706.6Q927.3 706.4 924.1 709.4Q919.2 710.7 918.1 706.6M921.8 701.2Q923.2 695.6 926.9 691.4M921.4 700.9Q924.4 700.6 925.8 702.8M928.7 690.3Q926.6 685.5 932.1 685.1M929.2 687.3Q932.2 686.9 933.7 689.2M930.2 724.7Q938 719.2 942 710.1M932.3 716.5Q940.7 719.8 937.8 711.9M936.2 712.2Q944.7 715.6 941.7 707.7M944 708.1Q949.4 706.1 950.7 700.2M935.2 732.3Q941.3 732.8 943.4 727.2M942.3 728.2Q938.7 724.2 936.7 719.2M946.4 726Q953.7 724.2 957.7 717.6M958.7 716.2Q962.6 718 962.7 713.9M962 715.1Q961.7 706.8 959.1 709.8Q958.2 714.4 962 715.1M935.5 732.7Q944.9 727.5 955.9 726.5M946.3 733.7Q946.6 723.8 953.2 730.1M951.4 727.5Q957.5 732.4 953.8 732.7Q949.8 730.8 951.4 727.5M958.2 724.7Q962.4 722.9 967.2 723.1M940.9 742.6Q938 753.5 938.5 764.8M943.6 751Q933 754 941.7 759.4M938.1 761.4Q940.2 763.4 942.5 762.4M937.2 768Q934.8 768.4 938.6 769.4M950.2 740Q948.7 745.3 950.2 750.9M950.1 753.1Q946.1 763.1 948.1 773.7M949.1 755.9Q953 755.5 956.7 756.5M948.3 764.5Q953.6 764.5 958.8 765.7M961.8 737.7Q959 743.3 960.4 749.3M961.1 740.9Q966.3 742 971.5 742.9M959.8 753.2Q955.4 765.3 958.8 778.2M964.1 757.9Q953.3 761 962.1 766.5M958.9 763.5Q963.1 764 967.3 764.7M962.3 777.6Q951.5 780.7 960.3 786.2"/><path stroke-width="1.3" d="M956.4 762.5L957.1 763M963.9 778.7L964.9 778.6M914 787.2L913.3 787.7M843.5 794.1L842.7 793.6M827.7 763L827.3 762.2M916.8 693.4L917.5 692.8M942.6 720.2L943 719.3M967.7 769L968.1 769.9"/><path stroke-width="1.4" d="M941 752.1Q938.6 755.7 939.8 760M940.6 752Q941.8 753.3 943.4 752.9M940.3 753.5Q943.9 753.7 947.2 755.4M940 755.2Q944 759 943.8 756.4Q942.1 753.8 940 755.2M942.3 758.3Q935.4 759.4 940.5 763.4M941.9 760Q935.1 761.2 940.1 765.2M938.9 761.3Q936.5 764.8 937.8 769.1M938.7 761.2Q939.9 762.6 941.5 762.2M941 764.6Q934.1 765.8 939.2 769.8M937.8 765.9Q939 767.2 940.5 766.8M948.7 751.9Q946.8 758.4 946.4 765.2M948.9 752Q953.1 756 952.9 753.2Q951.1 750.5 948.9 752M948.4 754.5Q949.6 755.9 951.3 755.5M947.9 756.8Q952.1 760.8 951.9 758Q950.1 755.3 947.9 756.8M950.5 759.3Q943.3 760.5 948.6 764.7M949.5 764.1Q942.3 765.3 947.6 769.5M946.6 766.8Q944.5 769.3 945.8 772.5M945.9 766.7Q949.2 766.7 952.2 768.8M945.3 769.4Q948.8 770.2 952.2 771.5M957.6 752.1Q956 756.2 955.8 760.6M959.5 752.5Q953.8 753.4 958 756.7M956.8 753.6Q959.2 754.7 961.8 754.6M956.5 755.1Q959.8 758.2 959.7 756.1Q958.3 754 956.5 755.1M956.2 756.5Q958.6 757.1 961 757.8M955.8 758.8Q958 759 960.1 760M955.7 761.6Q952.7 766.6 953.3 772.4M955.2 761.5Q957.5 762.3 959.9 762.6M957.3 763.4Q951.6 764.4 955.8 767.7M956.8 765.8Q951.1 766.8 955.3 770.1M954 767.4Q956.8 767.4 959.3 768.7M956 769.3Q950.4 770.3 954.6 773.6M953.3 770.8Q956.1 770.9 958.8 771.9M952.7 774.1Q951.5 774.6 953.1 775.7M952.6 774.1Q955 774.6 957.2 775.5M965.3 752Q962.8 755.9 963.7 760.5M968.2 752.6Q961.6 753.7 966.4 757.5M967.7 754.8Q961.1 755.9 966 759.7M964.6 756.1Q967.6 756.2 970.3 757.3M964.2 758.2Q966.9 758.9 969.5 760M964 761.2Q961.4 767.9 961.3 775.1M966.3 761.7Q959.7 762.8 964.6 766.6M965.9 763.5Q959.3 764.6 964.2 768.5M962.7 765.3Q964.9 766.5 967.4 766.4M964.9 768.4Q958.3 769.5 963.2 773.3M964.5 770.3Q957.9 771.4 962.8 775.3M963.6 774.7Q957 775.8 961.9 779.6M961.1 776.5Q959.4 777.4 960.5 778.9M963.1 776.9Q956.6 778 961.4 781.9M960.1 777.9Q964 781.5 963.8 779Q962.2 776.6 960.1 777.9M937.7 769.3Q933 771.3 932.8 776.3M937.1 769Q937.7 770.6 939.2 770.9M938.2 772.4Q931.6 770.8 934.6 776.3M934.3 773.1Q937.6 774.5 939.9 777.4M933.1 774.7Q935.3 779.6 936.1 777.2Q935.6 774.3 933.1 774.7M932.5 776.7Q928.9 779.2 928.1 783.7M934.3 778Q927.7 776.4 930.7 781.9M928.6 781.1Q930.8 786.1 931.6 783.6Q931.1 780.7 928.6 781.1M927.4 782.9Q928 784.6 929.5 784.8M944.7 772.3Q940.6 776.5 938.7 782.3M944.7 772.2Q946.7 776.7 947.4 774.5Q946.9 771.8 944.7 772.2M946.1 774.8Q940.1 773.3 942.8 778.3M942.7 775.2Q944.6 779.6 945.4 777.4Q944.9 774.8 942.7 775.2M943.7 778.2Q937.7 776.8 940.4 781.8M940.6 778.1Q942.6 782.6 943.3 780.4Q942.8 777.7 940.6 778.1M941.7 781.1Q935.7 779.6 938.4 784.6M938.5 781.2Q940.4 783.2 942.6 784.8M937.6 783.5Q934.1 785.5 933 789.2M937.1 783.2Q939 787.6 939.8 785.4Q939.3 782.8 937.1 783.2M936.1 784.7Q938 789.1 938.7 786.9Q938.3 784.3 936.1 784.7M935.2 785.9Q937.8 787.9 940.5 789.8M934.3 787.2Q936.6 788.7 938.8 790.2M952.8 775.8Q948.7 779.6 946.6 784.6M952.3 775.5Q954.2 779.8 954.9 777.7Q954.4 775.1 952.3 775.5M950.9 777.6Q952.7 778.8 954.4 780.2M949.2 780Q951.5 781.5 953.7 783.1M947.7 782.1Q949.5 783.8 951.3 785.4M948.4 785.4Q942.7 784 945.3 788.7M945.5 786.1Q942.3 787 942.3 790.1M945.1 785.8Q947 790.1 947.7 788Q947.2 785.5 945.1 785.8M942.7 789.3Q944.9 790.1 946.3 792.1M941.8 790.4Q939.1 792 939.3 795.6M943.9 791.9Q938.2 790.5 940.8 795.3M940.7 792.2Q942.1 794 944.5 794.5M941.3 795.6Q935.6 794.2 938.2 799M959.8 778.7Q956.3 782.3 954.8 787.3M962.3 780.4Q955.5 778.8 958.6 784.5M958.7 780.6Q960.4 782.8 962.8 784M956.7 783.5Q960 784.9 962.5 787.6M957.4 787.4Q950.6 785.8 953.7 791.5M953.3 788.1Q948.3 792 946.6 798.1M953.4 788.1Q956 790.1 958.4 792.4M952.4 789.6Q954.6 794.7 955.4 792.2Q954.9 789.2 952.4 789.6M953.6 793Q946.8 791.3 949.9 797M950.9 796.8Q944.1 795.1 947.2 800.8M945.6 800.3Q943.7 799.8 944.4 801.2M945.1 800Q945.7 801.7 947.3 801.9M926.4 782.9Q930.1 784.8 931.3 788.8M926.8 782.6Q924.5 783.7 923.3 786.2M925.9 785.5Q931.7 783.6 929.4 788.7M926.8 786.5Q932.5 784.6 930.2 789.7M929.9 786.4Q927.2 788.2 925.1 790.8M932.5 789.6Q936.6 793.3 939.4 797.9M930.6 791.2Q936.4 789.3 934.1 794.4M931.5 792.3Q937.3 790.4 935 795.5M933 794.1Q938.8 792.2 936.5 797.4M935.9 793.7Q934.3 798.2 933.4 796.1Q933.7 793.4 935.9 793.7M938.1 796.4Q936.6 800.9 935.7 798.8Q935.9 796.2 938.1 796.4M940.2 799.4Q944.6 803.3 947.7 808.2M942.9 802.2Q940.7 804.5 938.3 806.5M942 805.1Q947.8 803.3 945.5 808.4M943 806.3Q948.8 804.4 946.5 809.6M945.8 805.8Q943.8 807 942.2 808.8M946.8 806.9Q944.5 809.2 942.1 811.2M916.5 789.8Q919.4 795 923.2 799.7M918.8 788.5Q915.1 793.1 920.6 792.7M917.5 791.1Q919 791.3 919.7 790.1M918.7 793.1Q921.1 792.3 922.8 790.1M919.5 794.4Q924.1 794.4 922.5 792.9Q920 792.3 919.5 794.4M920.4 796Q922.7 795.6 924.3 793.9M921.6 797.9Q923.1 798.1 923.8 796.9M923.7 801.3Q923.9 805.3 927.8 807M923.6 801.3Q926.3 800.2 928.8 798.7M924.5 802.8Q927 800.8 930 799.6M925.2 804Q929.9 804.1 928.3 802.6Q925.8 801.9 925.2 804M926.2 805.7Q927.8 805.8 928.5 804.7M928.5 808.4Q929.5 813.5 933 817M928 808.7Q932.7 808.7 931.1 807.2Q928.6 806.6 928 808.7M929 810.4Q931.3 809.3 933.7 808.4M930 811.9Q932.2 811.2 933.9 809.7M931 813.6Q932.5 813.7 933.2 812.6M931.7 814.8Q934 813.6 935.9 811.8M933.5 817.2Q932 818.6 933.8 818M911.3 791.9Q911.9 797.7 916.2 801.9M911.8 794.1Q917.1 795 915.5 793Q912.8 791.9 911.8 794.1M912.9 796.7Q914.6 797.1 915.6 795.9M914.3 800.1Q917.5 798.3 921 797.4M917.6 800.8Q912.8 805.4 919 805.9M916 802.7Q916.5 808.7 920.2 813.5M915.5 802.9Q917.2 803.3 918.2 802.1M919.1 804.4Q914.3 809 920.5 809.5M918.2 809.5Q923.5 810.4 921.9 808.4Q919.2 807.3 918.2 809.5M919.3 812.1Q922.9 811.4 925.7 809.1M921.1 814.8Q921.3 819.2 924.4 822.3M923.1 814Q918.3 818.7 924.5 819.1M924.4 817.1Q919.6 821.8 925.8 822.2M922.7 820.1Q927.9 820.9 926.3 819Q923.6 817.8 922.7 820.1M923.2 821.5Q924.9 821.9 925.9 820.7M905.4 793.5Q904.9 797.4 907.9 800.5M905.2 793.5Q909.4 794.8 908.4 793Q906.3 791.8 905.2 793.5M908.5 796.9Q904 800.1 909 801.2M909 799Q904.5 802.3 909.6 803.3M908 802.4Q907.7 805.9 909.4 808.9M907.6 802.5Q910.2 802.3 912.6 801.2M910.3 803.9Q905.8 807.1 910.8 808.2M910.6 805.1Q906.1 808.4 911.2 809.4M908.9 807.5Q910.2 808.1 911.2 807.2M909.6 809.2Q909.5 813.7 912 817.5M909.3 809.3Q911.5 808.2 913.9 808.4M909.7 810.8Q913.9 812.1 912.9 810.3Q910.8 809.1 909.7 810.8M910.1 812.2Q911.4 812.8 912.4 811.9M912.8 813.6Q908.3 816.9 913.4 818M911.1 815.9Q915.3 817.2 914.2 815.4Q912.1 814.2 911.1 815.9M911.4 817.2Q915.6 818.4 914.5 816.6Q912.4 815.4 911.4 817.2M911.6 819Q911.9 821.9 913.5 824.4M914.1 818.4Q909.6 821.6 914.6 822.7M914.5 819.9Q909.9 823.1 915 824.2M913.4 825.4Q912.7 825.7 914.3 825.4M915.7 824.8Q911.2 828.1 916.3 829.1M905.9 793.4Q907.6 797.2 906.6 801.2M905.8 793.4Q902.4 796.2 902.7 794.1Q904.2 792.2 905.8 793.4M906.3 797Q902.8 799.7 903.1 797.6Q904.7 795.7 906.3 797M906.7 800.6Q903.2 803.3 903.6 801.2Q905.1 799.3 906.7 800.6M907.1 803.1Q908.1 808.1 907.8 813.2M904.7 803.4Q910.1 804.8 905.8 807.7M904.9 805.1Q910.3 806.5 906 809.3M907.4 806.1Q903.9 808.9 904.2 806.8Q905.8 804.9 907.4 806.1M907.6 808.2Q905.5 809.2 903.2 808.3M905.6 810.6Q910.9 811.9 906.6 814.8M908.5 813.9Q910 817.3 908.8 821.1M906 814.2Q911.4 815.6 907.1 818.4M908.4 815.3Q906.3 816.3 903.9 815.9M906.4 817.5Q911.8 818.9 907.5 821.8M908.9 819Q907.9 820 906.6 819.6M909.1 821.4Q910.4 823.7 909.1 826.4M909.2 821.4Q908.1 822.4 906.9 821.9M909.4 823.5Q906.8 823.3 904.2 824.2M907.4 825.7Q912.8 827.1 908.5 829.9M899.8 794.1Q901 797 899.9 799.7M900.2 794.1Q899 795 897.8 794.4M900.1 796.3Q899 797.1 897.8 796.5M897.8 798.1Q903 800.2 898.3 802.5M900.1 799.4Q896.2 801.7 896.9 799.7Q898.7 798 900.1 799.4M899.5 800.5Q900.5 804.4 899.7 808.3M900.1 800.5Q898 801 895.9 800.3M897.7 803.9Q902.9 806.1 898.2 808.3M900 807.3Q897.9 807.1 895.8 807.3M899.7 810.2Q901.1 814.3 899.6 818.3M899.9 810.2Q896.1 812.5 896.7 810.4Q898.5 808.7 899.9 810.2M899.9 811.8Q896 814.1 896.7 812.1Q898.5 810.3 899.9 811.8M897.5 814Q902.8 816.1 898 818.4M899.8 815.5Q897 815.9 894.1 815M899.4 819.7Q900.2 823.5 899 827.2M899.8 819.7Q896.9 819.9 893.9 820M899.7 821.3Q898.6 822.1 897.4 821.5M897.4 822.8Q902.6 825 897.9 827.3M899.7 825.5Q895.8 827.8 896.4 825.8Q898.2 824 899.7 825.5M899.7 827.1Q896.9 826.6 894.1 827M894 794Q895.3 799.4 892.2 804M891.6 793.7Q897.4 797 891.5 798.9M893.9 796.8Q892.4 797.6 891.2 796.7M893.5 799.4Q892 800.3 890.8 799.4M893.1 801.9Q889.7 801.3 886.2 800.3M892.9 803.3Q890.6 802.6 888.1 802.5M892.9 805.2Q893.1 808.7 891.1 811.8M892.6 805.2Q887.8 807.2 888.9 805Q891.2 803.2 892.6 805.2M892.4 806.8Q890.9 807.6 889.6 806.7M889.4 808Q895.1 811.4 889.3 813.2M891.8 810.6Q890.3 811.4 889 810.5M891.1 813.8Q892.1 819.9 888.6 825.3M891.3 813.8Q886.5 815.8 887.5 813.6Q889.9 811.9 891.3 813.8M891 815.5Q887.4 815.8 884.1 814.4M890.3 820Q885.5 822 886.6 819.7Q888.9 818 890.3 820M890 822.1Q887.5 822.3 885 821.5M889.7 824Q887.3 823.2 884.6 823.6M888.9 826.2Q890.5 826.7 889 826.7M889.4 826.3Q884.5 828.3 885.6 826Q887.9 824.3 889.4 826.3M883 791.5Q879.4 795.5 880.1 800.7M882.5 791.4Q885.9 793 889.8 793.3M881.7 793.8Q885.1 795.5 888.8 796.4M880.4 798.2Q883.6 798.6 886.4 800.1M879.9 799.7Q883.7 804 883.8 801.3Q882.3 798.5 879.9 799.7M879.9 802Q876.5 808.6 875.3 815.9M882.2 802.7Q874.9 803.3 879.8 807.9M878.8 803.5Q882.3 804.9 885.7 806.6M878.1 805.9Q879.2 807.4 880.8 807.1M877.2 808.6Q878.3 810.1 880 809.9M876.6 810.5Q877.7 812.1 879.4 811.8M879 813Q871.8 813.6 876.7 818.2M878.4 815.2Q871.1 815.8 876 820.4M874.9 817.3Q873.3 820 873.4 823.2M874.6 817.2Q878.2 817.7 881.3 819.9M877 819.7Q869.7 820.3 874.6 824.9M873.3 821.5Q874.4 823 876.1 822.7M882.3 791.3Q881.5 796 878.7 799.8M882.8 791.5Q881.3 791.8 880.5 790.8M882.3 792.7Q880.8 793 880 791.9M881.3 794.8Q876.8 795.3 878.2 793.7Q880.5 792.8 881.3 794.8M879.6 798.3Q876.9 797.5 874.3 796.3M878.3 800.7Q876.6 806.6 873.1 811.7M877.6 802.6Q875 801.5 872.4 800.2M876.7 804.6Q875.2 804.9 874.4 803.9M875.7 806.7Q874.3 807 873.5 806M874.7 808.8Q872.6 808 870.4 807.3M873.7 810.9Q869.3 811.4 870.7 809.8Q873 809 873.7 810.9M872.2 813.1Q871.7 816.1 870 818.6M872.6 813.3Q870.6 812.3 868.3 811.8M869.6 814.2Q873.6 818.3 868.3 818.5M869.8 818.9Q870.7 820.8 868.6 821.4M866.9 820Q870.9 824.1 865.6 824.3M877 789.4Q871.5 784.4 865.3 780.3M876.9 789.5Q875.1 789.9 874.6 791.6M873.7 790.7Q876.1 783.9 869.9 786.5M871.8 785.1Q868.9 786.8 867.8 790.1M866 784Q868.5 777.3 862.3 779.8M864.5 782.7Q867 776 860.8 778.5M863.8 778.3Q864.5 777.1 863.2 778.1M863.9 778.2Q862 778.6 861.6 780.2M873.1 796.6Q869.7 791.3 863.3 789.6M871 798.9Q873.3 792.4 867.4 794.9M869.2 793.6Q866.8 795.5 864.9 798M867.4 792Q865 793.9 863 796.2M866.2 791Q861 792.6 863.4 793.7Q866.4 793.5 866.2 791M862.3 788.1Q860.7 784.3 856.5 783.5M860.9 786.3Q858.5 788.4 856.5 790.7M859 784.7Q853.8 786.3 856.1 787.4Q859.1 787.2 859 784.7M857.5 783.4Q855.7 786.4 852.9 788.4M868.8 804.1Q866.7 800.7 862.7 799.5M868.9 804Q867.2 804.4 866.8 805.9M865.4 804.7Q867.7 798.4 862 800.8M864 803.5Q866.3 797.2 860.6 799.6M861.6 797.4Q857.2 792.5 851.2 789.6M861.4 797.6Q856.5 799.1 858.7 800.2Q861.6 800 861.4 797.6M860.3 796.6Q858.6 796.9 858.3 798.4M853.6 790.7Q851 792.6 849.7 795.7M850.1 791.4Q852.4 785.1 846.7 787.5M850.3 787.9Q851.3 786.6 849.6 788.4M850.3 787.9Q847.8 789.9 845.8 792.3M864.5 811.7Q862.5 806.7 857.1 805.5M864.9 811.3Q859.6 812.9 862 814Q865 813.8 864.9 811.3M863.5 810Q861.7 810.4 861.3 812M861.5 808.4Q858.5 810.5 856.8 813.8M860.4 807.4Q855.2 809.1 857.6 810.2Q860.6 810 860.4 807.4M859.3 806.4Q854.1 808.1 856.4 809.2Q859.5 809 859.3 806.4M857.8 805.2Q855.8 806.9 854.5 809.3M857.1 804.3Q855.4 800.5 850.7 800M855.6 803.2Q853.8 803.6 853.4 805.1M851.8 799.9Q849.7 801.5 848.7 804M850.8 799.1Q848.9 796.5 845.4 795.7M850.8 799.1Q848.3 801.6 846.4 804.5M846 798.7Q848.4 792.2 842.4 794.6M844.8 797.6Q847.2 791.1 841.2 793.6M844.6 793.6Q845 792.1 843 793.4M844.6 793.6Q842.8 794 842.4 795.5M863.5 777.8Q861.6 770.6 856.1 765.2M861 779.1Q865.4 774.1 859.3 774.2M862.7 776.4Q857.5 776 859.2 777.8Q861.9 778.7 862.7 776.4M861.9 774.8Q858.9 776.6 855.4 777.4M861.1 773.4Q859.5 773.1 858.6 774.3M857.8 772.8Q862.2 767.9 856.1 767.9M859 769Q856.3 769.9 854.2 771.7M858 767.1Q852.8 766.6 854.4 768.4Q857.2 769.3 858 767.1M856.6 782.9Q856 779.4 853.2 777M856.8 782.8Q852.3 782.4 853.8 784Q856.1 784.8 856.8 782.8M853.7 781.9Q857.5 777.7 852.2 777.7M855 779.2Q850.5 778.8 852 780.4Q854.3 781.1 855 779.2M851.9 778.2Q855.6 774 850.4 774.1M853.2 775.6Q851.8 770.7 847.9 767.1M851.1 776.6Q854.8 772.4 849.6 772.5M850.2 774.9Q854 770.7 848.7 770.8M849.2 773Q853 768.8 847.8 768.8M850.5 770.4Q849.1 770.1 848.3 771.2M847.7 770.1Q851.5 765.9 846.3 765.9M850 787.9Q847.7 780.8 843.4 774.7M850.2 787.8Q848.5 787.5 847.6 788.7M848 783.6Q846.4 783.3 845.4 784.5M847.1 781.6Q843.6 782.7 840.4 784.1M843.4 780.5Q847.9 775.6 841.7 775.6M841.3 776.2Q845.7 771.3 839.5 771.3M842.7 773.5Q842.3 771 840.2 769.4M842.9 773.4Q841.2 773.1 840.3 774.3M842 771.6Q839.2 772.7 836.7 774.5M838.8 771.4Q843.2 766.5 837.1 766.5M843.2 792.9Q842.6 788 838.8 784.7M841.5 793.8Q845.2 789.7 840.1 789.7M842.9 791.4Q840.5 792.8 838.1 794.2M841.9 789.5Q839.7 790.3 837.6 791.3M840.3 786.2Q838.9 786 838.1 787M839.4 784.5Q837.3 785.9 835.1 787M838.7 783Q837.3 778.6 834.1 775.1M838.7 783Q837.2 782.8 836.5 783.8M838 781.8Q835.6 783.5 832.6 784.2M837.5 780.7Q833.1 780.3 834.5 781.9Q836.8 782.6 837.5 780.7M834.7 780.3Q838.4 776.1 833.2 776.1M836 777.7Q833.4 778.3 831.1 779.4M835 775.7Q830.6 775.4 832 776.9Q834.3 777.7 835 775.7M834.3 774.2Q834.6 772.3 832.5 771.6M834.2 774.2Q831.8 774.7 829.9 776.1M833.6 773.1Q831 774.5 828.4 775.7M830.8 772.6Q834.5 768.5 829.4 768.5M856.5 764.4Q857.6 757 855.2 749.8M856.6 764.4Q853.8 764.9 851 765.1M856.5 762.3Q853.9 762 851.4 762.3M856.4 760Q853 760.5 849.7 760.7M856.3 758.7Q853.5 759.3 850.7 759.3M856.2 756.4Q854.8 755.5 853.5 756.2M856.1 754.9Q853.3 754.3 850.5 754.4M853.2 751.4Q859.3 748.7 853.7 746.2M855.9 748.6Q857.4 746 855.5 743.5M855.8 748.6Q854.4 747.6 853.1 748.3M855.6 744.1Q852.6 744.1 849.5 743.6M848.2 766.8Q849.7 763.3 848.3 760M848.6 764.6Q846.2 764.9 843.8 764.7M848.4 761.3Q847.1 760.4 845.9 761.1M847.8 759.7Q849 754.3 847.2 749M848.2 757.3Q846 757.1 843.8 757.8M848.2 755.8Q846.9 754.9 845.7 755.6M845.5 751.8Q850.9 749.4 845.9 747.2M847.9 749.9Q845.3 749.9 842.8 750.3M847.4 747.4Q848.8 744.6 847 741.9M847.7 745.7Q843.6 743.4 844.3 745.5Q846.2 747.3 847.7 745.7M845.1 743.8Q850.6 741.4 845.5 739.2M840.1 769.2Q840.9 762.1 839.2 755.2M840.7 769.1Q836.4 766.7 837.2 769Q839.2 770.8 840.7 769.1M840.5 765Q837.6 764.5 834.7 764.7M840.5 763.1Q836.2 760.7 836.9 762.9Q838.9 764.7 840.5 763.1M837.8 760.9Q843.5 758.4 838.2 756.1M837.7 759.1Q843.4 756.6 838.1 754.3M837.6 757.2Q843.3 754.6 838 752.3M837.5 755.3Q843.2 752.8 837.9 750.4M839.5 754.2Q841.6 748.5 838.6 743M837.4 752.4Q843.1 749.9 837.8 747.6M839.9 750.2Q838.5 749.3 837.3 750M839.7 747.7Q838.4 746.8 837.2 747.5M839.6 745.8Q837.4 745.6 835.1 746M839.6 744.3Q835.3 741.9 836 744.1Q838 745.9 839.6 744.3M839.4 741.4Q840.9 740.8 839 740.3M836.9 741.5Q842.5 739 837.3 736.6M833.1 771.5Q833.6 767.9 830.7 764.9M832.8 771.5Q829.9 772.2 826.8 772.3M832.5 769.9Q830.1 770 827.9 770.9M832.2 767.7Q827.8 765.9 828.7 768Q830.9 769.5 832.2 767.7M831.8 765.7Q830.4 765 829.3 765.8M831.2 764.2Q831.8 761.5 830.5 759.1M831.6 764.1Q829.1 764 826.8 765.1M831 760.8Q828.5 761.3 825.9 761.3M830.1 758Q831.7 756.3 829.4 755.3M830.5 757.9Q829.1 757.2 828 758M830.1 755.5Q827.5 756 825 756.4M830 755.2Q831.2 749.4 830.3 743.5M830 755.2Q827.9 755 825.8 754.7M830.2 752.9Q827.4 752.6 824.7 752.2M830.4 750.8Q827.6 750.4 824.9 749.9M830.5 748.5Q828.4 748.8 826.4 747.9M830.7 745.7Q829.6 744.7 828.4 745.2M830.9 743.9Q828.4 742.9 825.8 743.1M831.2 742.2Q832.8 740.6 830.5 738.6M831 742.2Q827.4 739.6 827.8 741.7Q829.4 743.6 831 742.2M857.9 737.8Q854.6 735.2 850.2 736.4M857.9 737.9Q856.7 740.9 855.8 744.1M851.2 736.1Q850.3 738.9 849.9 741.9M849.5 735.5Q845 733.7 840.2 733.1M849.5 735.6Q845.8 739.1 848.2 739.1Q850.7 737.7 849.5 735.6M846.6 737.6Q845.9 731.2 841.9 735.6M844.7 734.3Q844 737.2 842.9 739.9M841.1 733.4Q837.4 736.8 839.8 736.8Q842.3 735.4 841.1 733.4M837.9 732.9Q835.6 730.6 832.4 731.7M838 732.5Q834.3 736 836.7 735.9Q839.1 734.5 838 732.5M835.3 734.5Q834.7 728.2 830.7 732.6M833.6 731.3Q831.9 734 831.6 737.1M830.7 731.1Q828.6 729.2 825.7 730.1M830.2 733.1Q829.5 726.7 825.5 731.2M828.4 729.9Q828.2 732.5 826.5 734.6M826 732Q825.3 725.6 821.4 730.1M857.8 738.2Q850.7 737.6 845.3 733M857.7 738.5Q856.8 733.1 858.9 734.7Q860.1 737.6 857.7 738.5M855.5 737.6Q856.6 734.1 858.7 731.1M853.4 736.7Q852.5 731.2 854.6 732.9Q855.7 735.7 853.4 736.7M851 732.6Q846.1 737.6 845.7 731.1M848.3 731.4Q843.4 736.4 843 730M845.5 733.4Q844.7 727.9 846.7 729.6Q847.9 732.4 845.5 733.4M843.3 732.5Q839.2 732.9 836.8 729.3M843.3 732.5Q844.6 730.2 844.9 727.6M841.6 731.7Q840.8 726.3 842.8 727.9Q844 730.8 841.6 731.7M838.9 730.6Q838.1 725.2 840.2 726.8Q841.3 729.7 838.9 730.6M835.2 728.9Q830.6 728.7 827.6 724.8M836.3 726.4Q831.4 731.4 831 724.9M833.8 728.4Q833.3 726.7 834.6 725.6M831 727.3Q830.1 721.8 832.2 723.4Q833.3 726.3 831 727.3M829.1 726.5Q829.6 722.9 832.3 720.2M827.7 725.9Q829.3 723.1 829.6 719.7M859.8 733.4Q853.5 731.6 849.2 726.6M861 731.3Q856.6 734.8 856.9 729.5M857.8 729.3Q853.3 732.9 853.7 727.6M855.3 730.6Q856.1 728 858.2 726.1M853.7 729.7Q855.2 727.9 856 725.7M853.4 726.7Q848.9 730.3 849.3 725M851 728.1Q851.7 725.3 854.1 723.6M849.6 727.2Q851 725.1 851.9 722.7M848.1 726.3Q844.7 725.1 842 722.7M848.1 726.4Q849.6 724.6 850.2 722.3M846.2 725.2Q846 723.8 847.1 723.1M842.2 722.9Q842 721.4 843.1 720.7M841.1 721.6Q835.9 719.6 831.7 715.9M842 720Q837.5 723.6 837.9 718.3M840 718.9Q835.5 722.4 835.9 717.1M837.2 720Q838.2 717.3 840.1 715.1M833.7 717.9Q835.3 716.1 836.4 714.1M832.5 717.2Q833.5 715.2 834.9 713.5M862.3 727.7Q867.3 725 869.2 719.3M860.3 725.8Q866.4 728.4 864.4 722.6M863.9 726Q861.7 723.2 859.3 720.6M863 723.1Q869.1 725.6 867.1 719.8M864.8 721.2Q870.9 723.8 868.8 718M869.1 720.7Q866.7 718.4 864.3 716M870.6 718.2Q872 718.4 871.6 716.8M871.1 718.7Q869.1 715.9 866.1 714.2M855.1 722.7Q858.1 722 858.5 718.8M855.4 723.1Q854.4 718.9 853.4 720.7Q853.4 723.1 855.4 723.1M855.2 720.1Q860.3 722.2 858.6 717.4M858.4 720.1Q858.1 718.7 856.9 718.3M859.2 719Q862.4 716.8 864.4 713.5M860.3 718.1Q859.2 716.1 857.6 714.6M859.5 715.6Q864.6 717.7 862.9 712.9M862.3 716Q862.1 714.6 860.9 714.2M863.5 714.8Q862.4 710.6 861.4 712.4Q861.5 714.8 863.5 714.8M865.4 712.1Q866.8 711.8 867 710.4M865.7 712.4Q864.7 708.2 863.7 710.1Q863.7 712.5 865.7 712.4M865.3 709.6Q870.4 711.8 868.7 707M848.9 718.6Q853.3 715.4 855.7 710.1M848.6 718.4Q846.4 716.1 843.9 714M849.7 717.3Q848.4 712.4 847.3 714.5Q847.3 717.3 849.7 717.3M850.9 716.1Q848.8 713.5 846.6 711.1M850.1 713.1Q856 715.6 854 710M851 712.1Q856.9 714.6 854.9 709M852.1 711Q858 713.5 856.1 707.8M855.1 711.7Q853.9 706.8 852.7 708.9Q852.8 711.7 855.1 711.7M857.7 709.2Q860.8 707.3 861.9 703.5M855.7 707.2Q861.7 709.7 859.7 704.1M856.7 706.2Q862.7 708.7 860.7 703.1M862.4 704.2Q861.1 701.7 859.1 700.1M841.9 713.8Q845.6 711.7 846.9 707.1M841.8 713.7Q840.5 708.6 839.3 710.8Q839.3 713.8 841.8 713.7M841 710.5Q847.2 713.1 845.1 707.3M842 709.5Q848.2 712.1 846.1 706.2M844 707.4Q850.2 710 848.1 704.2M848.6 706.5Q854.2 703.1 857.2 697M848.7 706.6Q846.2 704.7 844.4 702.1M850.3 705Q848 703.1 846.1 700.9M852 703.2Q850.8 700.7 848.6 699.3M853 702.2Q851.7 697 850.5 699.3Q850.5 702.2 853 702.2M852.2 698.9Q858.4 701.5 856.4 695.7M855.7 699.3Q854.5 696.9 852.1 695.7M918.8 714.8Q922.1 719.2 927.5 721.4M918.9 714.7Q921.1 712.3 923.2 709.6M919.8 715.5Q924.5 714.2 922.4 713.2Q919.8 713.3 919.8 715.5M921.4 717Q923.1 714.9 925.4 713.4M923.1 718.5Q924.6 718.2 925 716.8M927.5 719.1Q925.3 724.8 930.5 722.8M926.7 721.8Q931.4 720.5 929.3 719.5Q926.6 719.6 926.7 721.8M928.1 722.8Q929.7 725.4 932.7 726.6M928 723Q930 720.5 932.2 718.2M929.6 724.5Q934.3 723.2 932.2 722.1Q929.5 722.3 929.6 724.5M931.2 726Q935.9 724.6 933.8 723.6Q931.1 723.7 931.2 726M923.1 707.4Q926.1 711.8 931.2 714M923 707.5Q927.9 706.1 925.7 705Q922.9 705.1 923 707.5M924.7 709Q929.5 707.6 927.4 706.5Q924.5 706.7 924.7 709M925.8 710.1Q928 708.1 930.2 706.1M927.2 711.4Q932.1 710 930 708.9Q927.1 709 927.2 711.4M929 713Q930.9 711.1 933 709.4M932.3 716.1Q933.9 718.6 936.9 719.7M932.4 716.1Q933.8 714.2 935.1 712.3M935.5 719Q940.4 717.6 938.3 716.5Q935.4 716.6 935.5 719M936.5 719.9Q941.4 718.5 939.3 717.4Q936.4 717.6 936.5 719.9M938.6 721.2Q937.8 723.6 939.8 722.9M939.7 722.8Q941.8 721.5 943.2 719.5M927.1 700.3Q930.1 705.1 935.5 707.5M928.8 698.4Q926.6 704.1 931.9 702.1M928.2 701.3Q932.9 700 930.8 699Q928.1 699.1 928.2 701.3M930 703Q931.4 700.9 933.2 699.3M933 702.3Q930.8 708 936.1 705.9M932.4 705.2Q937.1 703.9 935 702.8Q932.3 703 932.4 705.2M935.4 704.4Q933.2 710.2 938.5 708.1M935.8 707.8Q936.5 710.9 939.4 711.5M935.6 708.1Q938.1 706.6 939.8 704.2M938.3 707.1Q936.1 712.8 941.4 710.8M938.5 710.8Q943.2 709.4 941.1 708.4Q938.4 708.5 938.5 710.8M939.8 712.3Q942.7 715.8 947.3 717.6M941.7 710.2Q939.5 716 944.8 713.9M941.8 713.8Q943.9 711.6 946.2 709.7M943.6 715.5Q948.3 714.1 946.2 713.1Q943.5 713.2 943.6 715.5M947.1 715.1Q944.8 720.9 950.1 718.8M931.5 692.7Q933.6 696 936.8 698M932.3 694.1Q936.9 692.8 934.9 691.8Q932.2 691.9 932.3 694.1M935.3 693.4Q933.1 699.1 938.3 697.1M934.6 696.2Q939.2 694.9 937.2 693.9Q934.5 694 934.6 696.2M937.7 695.7Q935.5 701.3 940.8 699.3M937.9 698.8Q940.1 703.6 945.4 705.2M939.4 697.2Q937.2 702.8 942.4 700.8M941 698.7Q938.8 704.3 944 702.3M940.3 701.4Q942.5 699.3 944.9 697.3M942.8 703.7Q947.4 702.4 945.3 701.4Q942.7 701.5 942.8 703.7M944.5 705.3Q946 705 946.4 703.6M946.9 706.7Q949 711.4 953.9 713M946.5 707.1Q948.5 704.6 951.3 702.7M949.7 706.7Q947.5 712.4 952.8 710.3M949.1 709.5Q953.7 708.2 951.7 707.2Q949 707.3 949.1 709.5M950.1 710.5Q952.1 708.3 954.5 706.4M953.4 710.1Q951.2 715.7 956.5 713.7M952.9 713Q957.5 711.7 955.5 710.6Q952.8 710.8 952.9 713M933.4 727.4Q935.2 732.8 938.3 737.6M933 727.6Q934.8 727.9 935.7 726.7M936.7 728.6Q932 733.6 938.4 733.7M937.4 730.1Q932.8 735.2 939.2 735.2M935.9 733.5Q937.7 733.8 938.6 732.5M939.4 734Q934.7 739.1 941.1 739.1M937.9 737.6Q943.3 738.1 941.6 736.1Q938.7 735.2 937.9 737.6M938.3 738.5Q936.8 739.5 938.8 738.7M939.5 723.1Q942.6 729.3 946.3 735.1M939.8 722.9Q943 720.8 946.3 719.2M940.8 725Q946.3 725.5 944.5 723.5Q941.7 722.6 940.8 725M942 727.3Q945.3 726.1 948.3 724.5M946.5 730.1Q941.9 735.2 948.3 735.2M944.8 732.9Q947.8 732.4 950.1 730.2M946.7 718.2Q948.2 724 951.9 728.7M946.7 718.2Q949 717.2 951 715.6M947.3 719.5Q949.6 717.7 952.3 716.6M947.9 720.8Q950.4 719.7 953.1 719M950.5 720.9Q946.8 724.9 951.8 724.9M949.2 723.4Q951.1 722.2 953.1 721.3M951.9 723.7Q948.2 727.7 953.2 727.8M950.6 726.2Q952.5 725.5 954.2 724.4M953.3 726.7Q949.7 730.7 954.7 730.7M953.1 730.1Q952.1 732.7 954.8 733.6M954.6 729.3Q951 733.3 956 733.3M953.2 731.4Q957.4 731.8 956 730.3Q953.8 729.5 953.2 731.4M954 733.1Q958.2 733.5 956.9 732Q954.6 731.2 954 733.1M953.7 713.4Q955.6 720.7 960.9 726.3M956.1 712.2Q951.3 717.4 957.8 717.4M954.3 715.2Q957.9 714.2 961.1 712.5M955 716.6Q958.3 715.4 961.1 713.2M956.2 719.1Q959.5 717.5 962.7 715.9M957.3 721.3Q959.1 721.7 960.1 720.4M958.2 723.1Q961.1 721.5 964 719.8M959.1 724.9Q962 724.7 964.2 723M960.6 728.1Q960.7 730 962.9 730.9M960.6 728.1Q966.2 728.6 964.4 726.7Q961.5 725.7 960.6 728.1M961.4 729.6Q964.5 728.7 967.1 726.8M939.1 738.8Q939.1 745.8 940.9 752.6M941.4 738.4Q935.3 741.9 941.5 743.9M938.9 741Q941.6 740 944.5 740.7M939.2 743.1Q942.5 743.5 945.7 742.9M939.6 745.9Q941.2 746.7 942.5 745.8M942.8 747.8Q936.7 751.3 942.9 753.3M940.2 750.1Q943 750 945.6 749M940.6 752.3Q943.7 751.2 947.1 751.5M946.9 736.2Q946.1 743 949.2 749.3M946.9 739.1Q948.4 740 949.6 739.1M947.2 741.4Q950.8 741.3 954.2 740.5M947.5 743.7Q949.1 744.5 950.3 743.6M947.9 746.2Q952.7 748.2 951.7 745.9Q949.4 744.2 947.9 746.2M948.3 748.5Q951.7 748.8 955 748.2M949.1 751.6Q947 752.5 949.5 752.7M948.7 751.6Q952.3 751.3 955.8 750.4M954.4 733.8Q953.8 738.7 956.3 743.2M954.3 733.8Q955.6 734.5 956.7 733.7M954.6 735.7Q958.8 737.5 957.9 735.5Q955.8 734 954.6 735.7M955 738.1Q957.6 738.2 960.1 737.7M955.3 740.5Q957.8 740.5 960.2 739.6M955.6 742.2Q956.9 743 958 742.2M956.4 744Q955.8 748.1 957.3 752M958.2 743.7Q953.2 746.5 958.3 748.2M956.1 745.5Q957.4 746.2 958.5 745.4M962.6 731.2Q961.4 738.7 965.3 745.4M962.2 731.2Q965.2 731.1 968.2 730.8M962.6 734.2Q964.2 735 965.5 734.1M965.8 736Q959.8 739.4 965.9 741.4M963.3 738.3Q966.6 737.3 970.1 737.8M966.7 742.1Q960.7 745.5 966.8 747.5M964.3 745.3Q965.9 746.2 967.2 745.2M964.5 747Q963.2 750.3 965.6 753M964.5 747Q967.7 747.2 970.7 746.7M967.7 748.6Q961.7 752 967.8 754M968.1 751.5Q962.1 755 968.2 757"/><path stroke-width="1.7" d="M944.5 760.3L944.7 760.9M950.7 773.3L950.9 774M948.2 777.7L948.1 778.3M955.5 780.7L955.4 781.4M947.7 791.8L947.6 792.5M952.3 799.8L952.2 800.5M933 786.7L933.1 787.2M934.2 797.5L934.3 798.1M936.6 802.4L936.7 803M937.5 803.5L937.6 804.1M937.1 814.3L937.6 814.6M916.1 789.9L916.6 790.3M918.8 796.4L919.3 796.8M909.1 794.6L909.4 795M908.1 795.1L907.9 795.6M903.1 799.6L902.9 800.1M903.5 812.6L903.3 813.1M896.5 802.1L896.3 802.6M895.3 805.9L895.1 806.3M886.7 798.2L886.8 798.9M876.1 794.6L875.7 794.9M875.3 799.3L874.8 799.6M872.7 818.1L872.3 818.4M871.9 819.8L871.5 820.2M875.2 784.6L874.6 784.5M866.9 799.2L866.3 799M860.3 793.4L859.6 793.2M858.8 792.1L858.2 792M856.2 789.8L855.6 789.7M858.7 802.6L858.1 802.4M850.7 804.7L850.1 804.5M846.8 801.3L846.2 801.1M850.9 766.7L850.5 766.4M845.5 787.5L845 787.2M846.9 776.1L846.5 775.7M838.2 789.8L837.8 789.5M858.4 752.6L858.1 752M845 766.9L844.7 766.4M850.2 753.2L849.9 752.8M834.9 754.4L834.6 753.9M832.7 747L832.5 746.6M827.6 740.1L827.4 739.6M856.9 735.2L856.3 735.3M852.6 740.6L852 740.7M843.1 731.5L842.5 731.6M850.6 738.3L850.2 737.8M842.3 725.3L842 724.9M837.6 716.1L837.3 715.6M864 718L864.2 717.5M856.1 715.9L856.2 715.4M927.3 717.2L927.8 717.3M936.8 714.7L937.4 714.9M941.9 717.6L942.5 717.8M933.7 690.3L934.3 690.5M945.2 699.1L945.7 699.3M943.5 735.9L944 736.3M941.1 731.1L941.6 731.4M951.9 735.5L952.2 736M959.9 747.3L960.2 747.7M960.1 748.7L960.4 749.1M961.6 750.5L961.9 750.9"/></g><g fill="none" stroke="#161716" stroke-linecap="round" stroke-linejoin="round" clip-path="url(#i2b)"><path stroke-width="2.2" d="M875.6 772q3 -6 6 0q-3 6 -6 0M878.8 764.9q5.9 -11.8 11.8 0q-5.9 11.8 -11.8 0M885.7 730.6q4.3 -8.6 8.6 0q-4.3 8.6 -8.6 0M904.6 756.1q3.7 -7.5 7.5 0q-3.7 7.5 -7.5 0M866.4 770.1q3.3 -6.6 6.6 0q-3.3 6.6 -6.6 0M913.5 784.3q5.4 -10.8 10.8 0q-5.4 10.8 -10.8 0M916.7 751.4q5.9 -11.7 11.7 0q-5.9 11.7 -11.7 0M915.1 730.9q3.6 -7.3 7.3 0q-3.6 7.3 -7.3 0M911.7 788q4.4 -8.9 8.9 0q-4.4 8.9 -8.9 0"/><path stroke-width="2.4" d="M923.5 770.1L923.4 753.4M886.4 776.3L885.2 759.5M880.6 779.4c-6.5 7.8 7.8 10.4 13 -2.6M883.1 766.2L884.1 747.7M917.7 750L918.9 733.8M911.7 727.9Q918.8 735 925.8 725.6M878.6 764Q884.8 773.5 891 760.3M924.7 749L925.2 728.6M922.9 768.9c-7.4 8.8 8.8 11.8 14.7 -2.9M888.5 759.5Q896.2 767.4 903.8 759.4M899.9 767.8Q907.6 777.6 915.3 765.7M917.7 737.1L918 715.3M885.7 786.9L885 772.7M906.5 725.2c-5.4 6.5 6.5 8.7 10.9 -2.2M903.9 756.4Q913.4 761.3 922.9 751.3"/><path stroke-width="2.6" d="M921.6 743.2V786M908.3 750.6V778.6M892.1 755V774.2"/><path stroke-width="2.9" d="M917.5 760.5l1.5 -1.5M871.6 772.5l1.5 -1.5M908.7 733.3l1.5 -1.5M899 787.9l1.5 -1.5M888.3 733.2l1.5 -1.5M879.5 749.8l1.5 -1.5M897.7 732.3l1.5 -1.5M910.1 781.6l1.5 -1.5"/><path stroke-width="3" d="M867 740.3Q859.6 765.4 879.5 769.8Q898 772.7 914.2 758M877.3 784.6Q903.9 794.9 931.2 772.7M914.2 731.4Q932 747.6 917.2 759.5"/></g><g transform="translate(894 640.8) scale(0.8)"><path d="M0 0L11 29L7 28.5L10 104H0L-1.5 31L-5 33Z" fill="#161716"/><g fill="none" stroke="#161716" stroke-linecap="round"><path d="M-43 56Q-48 92 -33 97Q-20 100 -10 51" stroke-width="8.5"/><path d="M-10 51Q-16 96 -1 99Q6 100 4 62" stroke-width="8"/><path d="M7 99Q30 110 48 97Q53 84 43 46" stroke-width="10"/><path d="M-46 53Q-30 55 -6 44" stroke-width="2.2"/><circle cx="-5" cy="40" r="3.4" stroke-width="3"/><path d="M-50 47Q-43 49 -43 56" stroke-width="5"/><path d="M19 21Q16 32 21 40M27 22V38Q23 43 18 39" stroke-width="3"/></g><path d="M41 36L52 53L43 53Z" fill="#161716"/></g><circle cx="1185.2" cy="738.6" r="88.8" fill="none" stroke="#161716" stroke-width="5.4"/><circle cx="1184.2" cy="737.6" r="45" fill="none" stroke="#161716" stroke-width="4.6"/><g fill="none" stroke="#161716" stroke-linecap="round" stroke-linejoin="round" clip-path="url(#fta)"><path stroke-width="1.3" d="M1231.8 738.6Q1236.8 736.6 1241.5 739.1M1231.8 738Q1234.1 742.2 1231.9 741.5Q1230.2 739.5 1231.8 738M1233.1 738.1Q1235.4 742.3 1233.2 741.5Q1231.5 739.6 1233.1 738.1M1234.9 738.2Q1237.1 742.4 1235 741.6Q1233.2 739.7 1234.9 738.2M1236.2 738.3Q1236.6 740.6 1236.4 742.9M1238 740.9Q1240.5 735.4 1242.7 740.5M1240.6 741Q1243.1 735.6 1245.3 740.6M1242.6 738.6Q1246.5 738.5 1250.2 739.9M1242.6 738.6Q1244.9 742.8 1242.7 742.1Q1241 740.1 1242.6 738.6M1244.5 738.7Q1246.7 742.9 1244.6 742.2Q1242.8 740.2 1244.5 738.7M1246.6 738.9Q1247 741.4 1246.3 743.9M1247.9 738.9Q1248.2 742.1 1247.8 745.3M1252.2 739.5Q1258 739.1 1263.6 740.7M1252.2 739.2Q1252.1 742.2 1251.7 745.2M1254.5 741.8Q1256.9 736.3 1259.1 741.4M1256.5 739.4Q1257.4 740.7 1256.7 741.9M1258.5 739.5Q1260.8 743.7 1258.6 742.9Q1256.9 741 1258.5 739.5M1262.3 739.7Q1263 742.7 1262.1 745.6M1265 739.7Q1268.7 738.4 1272.2 740.6M1264.9 739.9Q1264.8 742.4 1264.8 744.9M1267.4 740Q1268.3 741.3 1267.6 742.5M1269.6 740.1Q1271.8 744.3 1269.7 743.6Q1268 741.6 1269.6 740.1M1230.6 749Q1233.8 751.6 1237.7 750.6M1230.5 749.4Q1233.6 745.9 1231.4 746.1Q1229.3 747.6 1230.5 749.4M1232.7 747.3Q1233.9 753.1 1237.2 748.7M1234.2 747.5Q1235.4 753.4 1238.7 748.9M1236.3 747.9Q1237.5 753.7 1240.8 749.3M1239.1 751Q1243.3 752.2 1247.7 752M1239.5 748.4Q1240.7 754.3 1243.9 749.8M1240.9 751.2Q1240.9 748.5 1241.4 745.9M1242.6 751.4Q1245.7 747.9 1243.5 748.2Q1241.3 749.7 1242.6 751.4M1245.8 749.5Q1247 755.3 1250.2 750.9M1247.2 752.2Q1247.6 749.2 1248.2 746.2M1248.5 752.1Q1254.2 754.7 1260.5 753.9M1248.5 752.4Q1251.6 748.9 1249.3 749.1Q1247.2 750.7 1248.5 752.4M1250.1 752.7Q1250.8 750.4 1251.5 748M1251.4 752.9Q1254.5 749.4 1252.2 749.6Q1250.1 751.1 1251.4 752.9M1252.9 753.2Q1254 752.1 1253.6 750.8M1255.3 751.1Q1256.5 756.9 1259.8 752.5M1256.8 753.8Q1257.7 750.9 1258.1 747.8M1258.9 751.7Q1260.1 757.5 1263.4 753.1M1261.8 754.2Q1264.5 756.6 1267.9 755.1M1262.1 752.2Q1263.3 758 1266.5 753.6M1267.4 755.6Q1268.5 754.6 1268.1 753.2M1268.9 755.8Q1269.5 756.9 1270.5 756.1M1268.9 755.9Q1269.5 753.1 1269.8 750.3M1230.6 748.9Q1237.9 749 1244.2 752.6M1230 751Q1234.1 745.6 1235.3 751.8M1232.6 748.8Q1232.4 751.6 1231.4 754.2M1233.5 752Q1237.6 746.6 1238.8 752.8M1236.4 749.9Q1235 752.7 1235.3 756M1239.2 750.7Q1238.4 754 1236.9 757.1M1241 751.2Q1242.5 756.4 1240.3 755Q1238.9 752.4 1241 751.2M1242.3 754.5Q1246.4 749.1 1247.6 755.3M1246 752.8Q1248.9 753 1251.3 755M1245.3 755.4Q1249.4 750 1250.6 756.1M1248.6 753.4Q1249.3 755 1248.2 756.2M1250.6 756.9Q1254.7 751.5 1255.9 757.7M1252.3 754.9Q1259.3 754.4 1264.9 758.7M1253.1 757.6Q1257.2 752.2 1258.3 758.4M1256.4 755.6Q1257 757.2 1255.9 758.4M1258.2 756.1Q1259.7 761.3 1257.5 759.9Q1256 757.3 1258.2 756.1M1261 756.9Q1259.8 759.6 1260.1 762.8M1262.8 757.4Q1264.3 762.6 1262.1 761.2Q1260.6 758.6 1262.8 757.4M1266.9 758.4Q1268.6 758 1269.7 759.6M1266.1 761.3Q1270.2 755.9 1271.4 762.1M1267.6 761.7Q1271.7 756.3 1272.9 762.5M1227.1 759.1Q1230.1 761.3 1234 761.4M1227 759.1Q1228.6 756.2 1229.1 752.7M1231.9 761.1Q1236.3 757.9 1233.7 757.6Q1230.9 758.8 1231.9 761.1M1234.9 761.8Q1238.1 765.4 1243.1 764.8M1234.7 762.3Q1239.1 759.1 1236.5 758.8Q1233.7 759.9 1234.7 762.3M1237.2 763.3Q1241.6 760.1 1239 759.8Q1236.2 761 1237.2 763.3M1239.6 764.3Q1241.2 763.4 1241 761.8M1243.3 765.2Q1248.5 769.3 1255.2 769.8M1244.2 763.1Q1244.1 770 1248.9 765.8M1248.6 764.9Q1248.5 771.8 1253.3 767.6M1250.4 765.6Q1250.3 772.5 1255.1 768.3M1253 766.7Q1252.8 773.6 1257.7 769.4M1255.1 767.5Q1255 774.4 1259.8 770.2M1255.7 770.5Q1259.1 773.8 1263.9 773.7M1255.6 770.8Q1260 767.6 1257.4 767.3Q1254.6 768.5 1255.6 770.8M1258.3 771.9Q1259.8 771 1259.7 769.4M1260.5 772.8Q1262.3 770.7 1263.2 768.2M1262.6 773.7Q1263.1 770.9 1265.3 768.7M1224.5 763.6Q1229.4 768.1 1235.9 769.9M1224.3 763.9Q1225.7 763.3 1225.8 761.9M1227.1 762.6Q1226.3 768.5 1230.8 765.4M1229 763.7Q1228.2 769.5 1232.7 766.4M1232.5 765.6Q1231.7 771.5 1236.2 768.4M1233.6 766.3Q1232.9 772.1 1237.3 769M1234.8 766.9Q1234 772.8 1238.5 769.7M1237.8 770.7Q1242.9 775 1249.1 777.4M1240.2 769.9Q1239.4 775.7 1243.9 772.7M1240.8 773Q1244.8 770.7 1242.6 770.2Q1240.2 770.9 1240.8 773M1242.6 774Q1246.7 771.8 1244.5 771.3Q1242 772 1242.6 774M1245.6 775.7Q1247.6 773.2 1249 770.3M1246.8 776.3Q1248.8 774.3 1249.7 771.6M1248 777.1Q1249.9 774.8 1250.8 772.1M1250 777.6Q1253.6 781.3 1258.8 782.3M1249.8 778Q1251.2 777.4 1251.2 776M1251.5 779Q1252.6 776 1254.5 773.5M1254.8 780.8Q1258.8 778.5 1256.7 778Q1254.2 778.7 1254.8 780.8M1256.5 781.8Q1257.5 779.7 1258.6 777.6M1258.1 782.6Q1259.5 782 1259.6 780.7M1224.7 763.3Q1231.8 766.2 1236.2 772.8M1225.9 767.9Q1231.7 764.2 1230.6 770.5M1228 769.5Q1233.8 765.8 1232.7 772.1M1233.1 769.7Q1232.7 775.1 1231.1 773Q1230.6 770.1 1233.1 769.7M1233.5 773.5Q1239.3 769.8 1238.2 776.1M1237 772.5Q1240.1 773.2 1241.1 776.8M1237 772.5Q1235.5 775.2 1233.2 777.3M1238.3 773.5Q1235.7 776 1233.7 779M1238.4 777.1Q1244.2 773.4 1243.2 779.7M1241.3 775.7Q1241.4 777.5 1239.9 778.2M1242.1 776.9Q1248.2 778.5 1251.7 783.7M1242.6 780.2Q1248.4 776.5 1247.4 782.7M1246 779.1Q1244.3 781.5 1242.1 783.5M1247.3 780.1Q1247.4 781.9 1246 782.6M1248.5 780.9Q1248.5 782.7 1247.1 783.5M1252.7 783.8Q1255.6 784.9 1257.1 787.7M1251 786.3Q1256.8 782.5 1255.7 788.8M1253.9 784.9Q1253.4 790.3 1251.9 788.2Q1251.4 785.2 1253.9 784.9M1257.2 787.3Q1255.2 789.1 1253.7 791.2M1216.8 772.9Q1217.9 776 1221.5 776.4M1216.9 772.8Q1221.1 771.6 1219.3 770.7Q1216.8 770.7 1216.9 772.8M1218.2 774Q1219.6 773.7 1220 772.5M1219.9 775.6Q1222.2 773.8 1223.5 771.1M1222.6 777.4Q1224.4 780.8 1228.1 782.1M1224.6 776.9Q1222.6 782 1227.4 780.3M1224.2 779.6Q1228.4 778.5 1226.5 777.5Q1224.1 777.6 1224.2 779.6M1225.7 781.1Q1229.9 779.9 1228.1 779Q1225.6 779 1225.7 781.1M1228.8 780.8Q1226.7 785.9 1231.5 784.2M1228.2 783.5Q1230.5 787.1 1234.9 788.6M1228.2 783.4Q1229.6 783.2 1230 782M1230.9 782.8Q1228.8 787.9 1233.6 786.1M1231.9 783.8Q1229.9 788.9 1234.7 787.1M1233.7 785.4Q1231.6 790.5 1236.4 788.8M1233.5 788.4Q1235.3 786.7 1236.7 784.6M1234.8 789.6Q1237.9 793.7 1242.5 796.3M1234.8 789.6Q1239 788.5 1237.2 787.5Q1234.7 787.6 1234.8 789.6M1235.8 790.6Q1237.3 789 1238.8 787.5M1238.3 789.8Q1236.3 794.9 1241 793.1M1242.1 793.4Q1240.1 798.5 1244.9 796.7M1243.6 794.8Q1241.6 799.9 1246.3 798.1M1242.4 796.9Q1244.1 799 1246.4 800.5M1244.1 795.2Q1242 800.3 1246.8 798.5M1244 798.3Q1245.4 798 1245.8 796.8M1245.5 799.7Q1246.9 799.5 1247.3 798.3M1212.5 776.4Q1215.4 781.3 1220.2 784.6M1214.3 774.9Q1211.5 779.9 1216.6 778.7M1213.9 778.2Q1216.4 776.6 1218.2 774.2M1215.1 779.7Q1217.2 777.7 1219.9 776.4M1218.4 779.9Q1215.6 784.9 1220.8 783.7M1217.7 782.8Q1222.2 782.2 1220.4 781Q1217.9 780.7 1217.7 782.8M1219.2 784.6Q1223.7 784 1221.9 782.7Q1219.4 782.5 1219.2 784.6M1220.2 785.6Q1220.8 789.3 1224.3 790.7M1220.1 785.7Q1222.5 784.6 1224.2 782.6M1223.4 785.9Q1220.6 790.9 1225.8 789.7M1222.5 788.7Q1227 788 1225.3 786.8Q1222.7 786.6 1222.5 788.7M1223.6 789.9Q1228.1 789.3 1226.3 788Q1223.8 787.8 1223.6 789.9M1225 791.7Q1226.5 794.9 1230 796.6M1225 791.6Q1229.5 791 1227.7 789.8Q1225.2 789.5 1225 791.6M1226.4 793.4Q1227.9 793.3 1228.5 792.1M1229.3 793.1Q1226.5 798.1 1231.7 796.9M1228.3 795.6Q1232.8 795 1231 793.7Q1228.5 793.5 1228.3 795.6M1230.4 798.3Q1232.1 801.1 1234.7 803.1M1234.8 799.7Q1232 804.8 1237.2 803.6M1234 802.5Q1235.7 801.1 1237.6 799.9M1235.1 803.7Q1235.5 806.6 1238.5 807.4M1236.6 805.7Q1238.1 803.9 1240.1 802.5M1208.2 779.1Q1211.1 786.5 1216.7 792.2M1210.2 777.8Q1205.9 783.7 1212.6 783M1209.3 782Q1211.5 780.6 1214.1 779.6M1213.5 783Q1209.2 788.9 1215.9 788.2M1212 786.3Q1215.5 785.1 1218.4 783M1213.3 788.3Q1216.8 787.1 1219 784.1M1214.9 790.8Q1220.6 790.7 1218.6 788.9Q1215.5 788.2 1214.9 790.8M1216.6 793.6Q1218 797.1 1220.7 799.8M1219.2 791.9Q1214.9 797.8 1221.6 797.1M1221 794.7Q1216.7 800.6 1223.4 799.9M1222.2 796.6Q1217.9 802.5 1224.6 801.8M1221.1 801.1Q1222.4 805.3 1226.6 807.7M1221.4 800.9Q1227.1 800.8 1225.1 799Q1222 798.4 1221.4 800.9M1222.4 802.6Q1228.2 802.5 1226.1 800.7Q1223 800 1222.4 802.6M1226.5 803.3Q1222.2 809.2 1228.9 808.5M1225.5 807.4Q1227.4 807.6 1228.3 806.1M1226.2 808.9Q1227.3 811.6 1229.5 813.5M1228.9 807.1Q1224.7 813 1231.3 812.3M1227.6 810.7Q1233.4 810.6 1231.3 808.8Q1228.2 808.1 1227.6 810.7M1231.8 811.7Q1227.6 817.5 1234.2 816.8M1203.1 781.6Q1205 788.3 1208.9 794M1202.6 781.8Q1205.2 780.7 1207.4 779M1205.5 782Q1201.4 786.5 1207 786.5M1204.9 786.5Q1209.7 786.9 1208.2 785.2Q1205.6 784.3 1204.9 786.5M1205.7 788.2Q1207.3 788.5 1208.2 787.4M1208.8 788.8Q1204.7 793.2 1210.3 793.3M1207.7 792.2Q1212.5 792.7 1211 791Q1208.4 790.1 1207.7 792.2M1209 795.7Q1211.5 800.8 1214.3 805.9M1209.3 795.5Q1211.7 795.3 1213.3 793.3M1211 799Q1213.2 798.2 1215.3 797.3M1211.7 800.5Q1214.1 799.4 1216.5 798.2M1214.6 800.6Q1210.4 805.1 1216.1 805.2M1213.1 803.4Q1217.9 803.9 1216.4 802.2Q1213.8 801.3 1213.1 803.4M1214.2 805.6Q1219 806.1 1217.4 804.4Q1214.9 803.5 1214.2 805.6M1215.1 807.9Q1215 811.2 1218 813.1M1215.2 807.8Q1216.8 808.1 1217.7 807M1218.3 813.4Q1218.5 816.2 1220.4 818.2M1221 813.9Q1216.8 818.4 1222.5 818.4M1221.6 815.2Q1217.5 819.7 1223.1 819.7M1219.9 817.5Q1221.5 817.8 1222.4 816.7M1203.3 781.5Q1206.1 784.6 1205 789.1M1203.9 783.2Q1203.1 784.5 1201.7 784.3M1202.1 785.6Q1208.1 785.8 1204.3 789.8M1202.7 787.3Q1208.7 787.5 1204.8 791.5M1203.2 788.7Q1209.2 789 1205.3 792.9M1205.8 789.8Q1208.5 794.4 1209.3 799.6M1204.9 793.6Q1210.9 793.8 1207 797.8M1208 795Q1207.2 796.3 1205.8 796.1M1206.1 797.2Q1212.1 797.4 1208.3 801.4M1209.2 798.5Q1208.4 799.8 1207 799.6M1209.7 800.9Q1212.9 804.9 1212.6 810.2M1210 800.7Q1207 804.4 1206.9 802.2Q1208 799.8 1210 800.7M1208.4 803.7Q1214.4 803.9 1210.5 807.9M1211.2 804.4Q1209.2 805.1 1207 805.7M1211.8 805.9Q1210.9 807.2 1209.5 807M1210.1 808.8Q1216.1 809 1212.3 813M1210.7 810.3Q1216.7 810.5 1212.8 814.5M1213.8 811.9Q1216.1 815.5 1216.5 819.8M1213.9 811.9Q1210.9 815.6 1210.7 813.3Q1211.9 811 1213.9 811.9M1212.7 816.3Q1218.7 816.5 1214.8 820.5M1215.7 817.3Q1212.7 821 1212.6 818.7Q1213.8 816.4 1215.7 817.3M1198 784.2Q1192.5 784.2 1187.2 785.8M1198 784.2Q1197.2 785.5 1197.9 786.6M1196 786.8Q1193.3 781.6 1191.4 786.7M1193.4 784.6Q1193.3 787.9 1193.7 791M1191.8 784.8Q1192.4 787.6 1192.2 790.5M1190.3 785Q1190.1 788.1 1191.3 791.1M1189 785.1Q1188.2 786.4 1189 787.6M1186.4 785.1Q1184.3 784.5 1182.5 786.4M1186.6 787.8Q1183.9 782.6 1182 787.7M1183.5 785.7Q1182.7 787 1183.4 788.2M1200.2 792.1Q1195.9 790.6 1192 793M1200.2 792Q1199.7 794.5 1201.1 796.8M1198.1 792.2Q1197.2 793.7 1198 794.9M1196.7 792.3Q1195.8 793.8 1196.7 795.1M1194.7 795.3Q1191.6 789.4 1189.5 795.2M1190.9 792.7Q1186.3 792 1182 794M1191.2 795.7Q1188.2 789.8 1186 795.5M1188.4 793.2Q1187.5 794.7 1188.3 796M1186.2 796.2Q1183.1 790.3 1181 796.1M1184.2 793.7Q1184.2 796.7 1184.1 799.8M1182.7 793.8Q1180.4 798.6 1182.8 797.6Q1184.6 795.4 1182.7 793.8M1202.3 799.6Q1200 799.5 1197.9 801M1201.1 799.9Q1201.2 802.8 1201.2 805.8M1200 802.3Q1197.5 797.4 1195.7 802.2M1195.9 800.4Q1193.3 799.7 1191 801.6M1196.2 802.7Q1193.7 797.8 1191.9 802.6M1194.1 800.6Q1194.1 802.9 1195 805.1M1192.2 800.8Q1191.5 802.1 1192.2 803.1M1190.2 801.5Q1185.7 800.3 1181.6 802.7M1190.4 803.3Q1187.9 798.5 1186.1 803.2M1188.7 801.2Q1186.8 805.1 1188.7 804.4Q1190.2 802.5 1188.7 801.2M1186.7 801.4Q1184.9 805.3 1186.8 804.6Q1188.3 802.7 1186.7 801.4M1185.4 803.9Q1182.9 799 1181.2 803.7M1183.1 801.8Q1182.7 804.2 1183.4 806.5M1181.5 802Q1181.8 804.3 1182.2 806.6M1204.5 807.7Q1199.2 806.1 1194.3 808.9M1204.5 807.6Q1202.2 812.4 1204.6 811.5Q1206.5 809.1 1204.5 807.6M1202.1 807.8Q1202 810.3 1202.1 812.8M1199.9 808Q1200.8 811.3 1200.2 814.7M1193.3 809.2Q1186.9 807.8 1181.1 811M1193.5 811.6Q1190.4 805.5 1188.2 811.4M1191.4 811.8Q1188.3 805.7 1186.1 811.7M1189.8 812Q1186.6 805.9 1184.4 811.8M1187.9 809.3Q1187.4 813 1188.9 816.4M1185.9 809.6Q1186.5 812.7 1186 816.1M1183.6 812.6Q1180.5 806.6 1178.3 812.5M1181.2 810.1Q1180.3 811.6 1181.1 812.9M1206.7 815.5Q1199.7 814.2 1193.1 817.2M1206.7 815.4Q1204.6 819.9 1206.8 819Q1208.5 816.8 1206.7 815.4M1204.7 815.6Q1205.3 818 1205.1 820.5M1202 815.9Q1202.2 818.5 1201.9 821.2M1195.8 819.2Q1192.9 813.5 1190.8 819.1M1193.5 816.8Q1191.3 821.3 1193.6 820.4Q1195.3 818.2 1193.5 816.8M1190.9 816.8Q1185.7 817.2 1180.6 819M1190.9 817.1Q1191.7 819.4 1190.9 821.8M1189.2 819.9Q1186.2 814.2 1184.2 819.8M1186.9 820.1Q1184 814.5 1181.9 820M1184.4 817.8Q1182.3 822.3 1184.5 821.4Q1186.3 819.2 1184.4 817.8M1181.9 818Q1179.7 822.6 1181.9 821.7Q1183.7 819.5 1181.9 818M1176.5 784.3Q1174.4 790.4 1175 796.8M1178.8 784.7Q1171.7 786.3 1177.3 790.1M1178.4 787.6Q1171.3 789.3 1176.9 793.1M1178 790Q1171 791.7 1176.5 795.5M1174.4 794.4Q1178.8 798.1 1178.4 795.4Q1176.5 792.8 1174.4 794.4M1174 798Q1171.7 801.5 1173.2 805.4M1176.9 798.4Q1169.9 800.1 1175.4 803.9M1173.7 799.6Q1178.1 803.2 1177.7 800.5Q1175.8 798 1173.7 799.6M1173.5 801.3Q1177.9 804.9 1177.5 802.2Q1175.6 799.7 1173.5 801.3M1173.1 804.1Q1176.8 805.3 1180.7 805M1172.6 807.8Q1169.8 813.2 1171.1 819.1M1172.6 807.8Q1177 811.4 1176.6 808.7Q1174.7 806.2 1172.6 807.8M1172.2 810.4Q1176.7 814 1176.3 811.3Q1174.4 808.7 1172.2 810.4M1172 811.9Q1173.4 813.2 1174.9 812.7M1171.7 814.7Q1174.8 815.8 1178 816.4M1171.4 816.3Q1174.2 816.5 1176.9 816.9M1171.1 818.6Q1175.5 822.2 1175.2 819.5Q1173.2 817 1171.1 818.6M1171 820.2Q1168.4 822 1171.2 824.5M1170.9 820.1Q1174.8 820.5 1178.7 820.8M1170.6 822.5Q1174.3 823.9 1178.3 824.1M1175.1 784.1Q1174.8 786.7 1173.4 788.9M1175 784.1Q1170.8 785.2 1171.9 783.4Q1174 782.3 1175 784.1M1174.5 785.8Q1171.9 785.8 1169.7 784.6M1173.8 787.8Q1169.6 789 1170.8 787.2Q1172.9 786 1173.8 787.8M1172.5 790.6Q1172.2 795.2 1170 799.4M1173 790.7Q1170.3 789.8 1167.3 789.5M1172.1 793.5Q1169.9 793.1 1167.9 791.8M1171.2 796.7Q1168.7 796.6 1166.5 795.8M1170.8 798.2Q1166.5 799.4 1167.7 797.6Q1169.8 796.5 1170.8 798.2M1169.5 801Q1169.3 806.6 1166.2 811.3M1169.9 801.1Q1167.2 800.7 1164.5 800.2M1169.3 802.9Q1165.1 804.1 1166.3 802.3Q1168.4 801.2 1169.3 802.9M1166.7 804Q1171 807.3 1166 808.2M1168.5 805.8Q1164.3 806.9 1165.4 805.1Q1167.5 804 1168.5 805.8M1167.9 807.9Q1163.7 809 1164.8 807.2Q1166.9 806.1 1167.9 807.9M1167.2 810.2Q1164.4 809.7 1161.8 808.3M1166.4 812.2Q1166.2 817.4 1163.1 821.7M1164.4 811.6Q1168.8 814.9 1163.7 815.8M1165.5 815.8Q1164.2 816.3 1163.2 815.5M1164.4 819.4Q1162.2 819.3 1160.3 818.1M1161.9 820Q1166.2 823.4 1161.2 824.3M1163.1 822.4Q1164.9 823.1 1162.6 822.7M1163.5 822.5Q1159.3 823.6 1160.4 821.9Q1162.6 820.7 1163.5 822.5M1168 783.3Q1166 779.4 1161.6 779.8M1162.9 782.8Q1163.9 776.3 1158.8 779.7M1161.2 781.8Q1162.2 775.3 1157.2 778.7M1161.6 778.8Q1159.1 775.9 1155.1 775.4M1158.1 780Q1159.2 773.6 1154.1 776.9M1158 776.8Q1156.2 778.9 1155.1 781.5M1156.6 776Q1152.1 778.5 1154.5 779.1Q1157.3 778.4 1156.6 776M1165.2 790.7Q1160.5 786.7 1154.7 784.6M1165.4 790.3Q1164.4 793.2 1162.1 795.3M1163 788.9Q1161.4 789.6 1161.3 791.1M1161.2 787.9Q1156.7 790.4 1159.1 791Q1161.8 790.2 1161.2 787.9M1158.5 789.4Q1159.5 783.1 1154.5 786.3M1157.5 785.8Q1156 786.4 1155.9 787.9M1152.9 783.5Q1152.3 781.1 1149.6 782.3M1151.8 785.5Q1152.8 779.1 1147.8 782.4M1150.1 781.5Q1149.4 783.9 1147.1 785.3M1162.4 798Q1157.3 793.7 1151 791.4M1162.5 797.9Q1159.9 800.8 1158.3 804.2M1158.7 795.7Q1153.7 798.4 1156.3 799.1Q1159.4 798.3 1158.7 795.7M1156.9 794.7Q1151.9 797.4 1154.5 798Q1157.6 797.2 1156.9 794.7M1153.3 796Q1154.4 788.9 1148.8 792.5M1150.2 794.2Q1151.3 787.1 1145.8 790.8M1150.1 791Q1147.9 788.6 1144.6 788.3M1150.2 790.8Q1147.7 793.5 1146.6 797M1147.5 789.2Q1142.5 791.9 1145.1 792.6Q1148.2 791.8 1147.5 789.2M1143.6 790.4Q1144.7 783.3 1139.1 786.9M1159.5 805.6Q1157.8 803.7 1155.2 803.5M1158.4 807.5Q1159.3 801.9 1154.9 804.8M1157.8 804.5Q1156.8 806.9 1154.7 808.8M1156.1 803.5Q1153.9 805.6 1152.7 808.3M1154.4 803.1Q1151 799.9 1146.8 798.2M1154.7 802.6Q1153.3 803.2 1153.3 804.5M1153.1 801.7Q1152.3 804.2 1150.6 806.1M1150.2 802.7Q1151.1 797.2 1146.8 800M1150.2 800Q1148.5 801.9 1148.1 804.4M1149.2 799.4Q1147.9 800 1147.8 801.3M1146.3 800.4Q1147.1 794.9 1142.8 797.7M1145.2 797.1Q1143 794.8 1139.5 794.6M1140.3 794.3Q1136.4 796.4 1138.5 796.9Q1140.9 796.3 1140.3 794.3M1156.7 813Q1152.9 809.9 1148.1 808.4M1154.7 811.9Q1150.4 814.2 1152.7 814.8Q1155.3 814.1 1154.7 811.9M1153.3 811.1Q1149 813.4 1151.3 814Q1153.9 813.3 1153.3 811.1M1152.2 810.4Q1147.9 812.7 1150.1 813.3Q1152.7 812.6 1152.2 810.4M1148.7 811.3Q1149.6 805.2 1144.8 808.4M1147 807.4Q1143.4 804.8 1138.9 803.8M1147 807.4Q1145.5 808 1145.4 809.5M1143.4 805.4Q1142 806 1141.9 807.4M1142.2 804.6Q1140.3 806.3 1140.2 809M1138 801.9Q1136.9 800.1 1134.5 800.6M1137.9 802.1Q1133.5 804.4 1135.8 805Q1138.4 804.3 1137.9 802.1M1155.6 774.5Q1153.8 778.1 1150.2 779.9M1156.1 775Q1152.5 773.1 1150.7 769.4M1154.1 777.1Q1151.5 775.8 1149.4 774M1149.5 781.4Q1147.4 785.3 1144 788.1M1149.9 781.7Q1144.3 780.7 1146.6 779.2Q1149.8 779.1 1149.9 781.7M1148.7 783Q1146.6 781.3 1144.9 779.1M1147.3 784.5Q1145 782.3 1142.7 780M1144.1 788Q1142 786.3 1140.4 783.9M1142.7 789.5Q1138.4 795.5 1132.3 799.7M1140.5 787.5Q1143.7 794 1137.3 792.1M1137.4 795.3Q1131.8 794.3 1134.1 792.8Q1137.3 792.7 1137.4 795.3M1135.6 797.3Q1132.9 795 1130 793M1134 799.1Q1132.1 798.9 1131.5 797.3M1131.2 801.8Q1131.3 804.6 1127.9 804.1M1131.3 801.9Q1128.4 799.6 1125.3 797.4M1130.2 803.1Q1127.9 800.1 1124.1 798.6M1128.8 804.6Q1127.3 802.2 1125.1 800.5M1152.1 771.4Q1150.3 774 1147.4 775.4M1152.1 771.4Q1150.4 769.2 1147.9 767.6M1151.2 772.3Q1149.7 772 1149.4 770.7M1148.5 771.5Q1150.4 776.9 1145.5 774.8M1148.7 774.4Q1147.4 772.7 1146.1 771M1147.7 775.3Q1146.2 775 1145.9 773.7M1146.3 776.4Q1145.1 779.8 1141.5 780.3M1146.3 776.5Q1144.9 776.2 1144.5 774.9M1143.4 775.9Q1145.3 781.3 1140.4 779.2M1143.3 779.1Q1141.8 778.8 1141.5 777.5M1142 780.3Q1140.5 780 1140.2 778.7M1140.1 781.6Q1138.8 784.7 1135.7 785.5M1140.2 781.8Q1138.8 781.4 1138.4 780.2M1137.2 781.2Q1139.1 786.7 1134.2 784.6M1135.4 782.8Q1137.3 788.2 1132.4 786.2M1134.7 785.8Q1132.5 789.3 1128.8 791.1M1135.1 786.2Q1133.6 785.9 1133.3 784.6M1133.2 787.8Q1131.4 786.4 1130.3 784.2M1131.9 789Q1130.1 787.3 1128.2 785.5M1128.8 788.5Q1130.7 793.9 1125.8 791.9M1129.1 791.4Q1126.9 789.8 1125.9 787.3M1128.7 792.1Q1126.4 796 1121.7 797.2M1128.6 791.9Q1126.1 790.2 1124.5 787.8M1126.8 793.4Q1125.1 790.8 1122.6 788.9M1123.6 793Q1125.6 798.4 1120.6 796.4M1122 794.4Q1123.9 799.9 1119 797.8M1148.6 767.5Q1146 770 1142.5 771.5M1148.6 767.5Q1147.7 765.4 1146.2 763.8M1147.3 768.4Q1145.4 766 1143.7 763.6M1142.9 768.6Q1144.2 774.1 1139.6 771.5M1142 771.7Q1138.5 775.5 1133.5 777.3M1142.2 771.9Q1138.1 770.1 1140.1 769.4Q1142.5 769.9 1142.2 771.9M1140.4 773.1Q1136.3 771.3 1138.3 770.6Q1140.8 771.1 1140.4 773.1M1138.7 774.3Q1134.6 772.5 1136.6 771.8Q1139 772.3 1138.7 774.3M1137.4 775.2Q1133.3 773.3 1135.3 772.7Q1137.8 773.1 1137.4 775.2M1135.8 776.3Q1131.7 774.4 1133.7 773.8Q1136.2 774.2 1135.8 776.3M1133.2 775.2Q1134.5 780.7 1129.9 778.1M1132.3 778.2Q1130.2 781.5 1126.2 782.1M1132.5 778.5Q1128.4 776.7 1130.5 776Q1132.9 776.5 1132.5 778.5M1130.9 779.6Q1129.3 777 1127.3 774.7M1128.1 781.5Q1126.3 779.7 1125.4 777.3M1125.5 780.4Q1126.8 786 1122.2 783.4M1125.1 783.6Q1122.3 786.6 1118.3 787.8M1125.1 783.6Q1123.7 783.1 1123.5 781.8M1122 782.9Q1123.3 788.4 1118.7 785.8M1119 787.8Q1116.9 785.8 1115.5 783.2M1117.2 788.7Q1117.1 790.8 1114.7 789.7M1117.4 788.9Q1113.3 787.1 1115.3 786.4Q1117.7 786.9 1117.4 788.9M1116.2 789.7Q1112.1 787.9 1114.1 787.2Q1116.5 787.7 1116.2 789.7M1142.7 757.7Q1137 758.7 1132.8 762.8M1142.6 757.5Q1143 760.3 1145.5 762M1140.9 758.4Q1141.9 761.6 1144.1 764.2M1140.5 761.8Q1135.4 757.3 1135.5 763.7M1133.2 762.5Q1132.8 767.9 1134.7 766.1Q1135.6 763.2 1133.2 762.5M1131.5 764.1Q1125.7 764.6 1121.8 768.7M1131.2 763.5Q1132.1 766.9 1134.6 769.4M1130.6 767.1Q1125.4 762.6 1125.6 768.9M1125 766.8Q1124.6 772.2 1126.5 770.4Q1127.4 767.6 1125 766.8M1123.3 767.7Q1123 773.1 1124.8 771.3Q1125.7 768.4 1123.3 767.7M1121 769.6Q1116.8 770.4 1113.8 773.5M1120.7 769.1Q1122.2 771.2 1123.4 773.5M1117.2 771Q1116.8 776.3 1118.7 774.6Q1119.5 771.7 1117.2 771M1117.1 774.2Q1111.9 769.7 1112.1 776M1112.7 774Q1109.3 774.3 1107.2 777.3M1112.5 773.4Q1112.1 778.8 1114 777Q1114.8 774.2 1112.5 773.4M1111.6 777.1Q1106.5 772.6 1106.6 778.9M1108.6 775.4Q1109.9 778 1111.3 780.6M1143 758.4Q1138.7 760.8 1133.6 760.9M1143 758.3Q1141.7 755.4 1140.9 752.2M1140.9 759.1Q1140.5 756.7 1138.7 754.9M1139.1 759.8Q1137.3 757.1 1136.6 754.1M1136.5 758Q1136.4 764.4 1132 760.4M1135 761.4Q1130.9 758.3 1133.4 758.1Q1135.9 759.3 1135 761.4M1132.3 761.9Q1129.5 765.1 1125.3 764.8M1132.5 762.4Q1131.5 760.1 1130 758.1M1128.5 763.9Q1128.1 761.5 1126.1 759.8M1126.5 764.7Q1125 762.5 1124.8 759.7M1123.9 766Q1120.8 768.7 1116.4 768.1M1123.8 765.7Q1122.4 764.9 1122.5 763.4M1121.9 766.5Q1120.5 765.6 1120.7 764.1M1118.8 764.8Q1118.8 771.2 1114.4 767.2M1117.9 768Q1113.9 764.9 1116.3 764.7Q1118.9 765.9 1117.9 768M1114.6 769.1Q1111.7 771 1108.2 771.5M1114.7 769.3Q1113.7 766.1 1112.3 763.1M1112.4 770.2Q1108.3 767.1 1110.7 766.9Q1113.3 768 1112.4 770.2M1111.1 770.7Q1107 767.6 1109.5 767.4Q1112 768.5 1111.1 770.7M1108.1 769Q1108.1 775.4 1103.7 771.4M1106.6 772.6Q1106.2 773.5 1105.1 772.6M1106.5 772.4Q1102.5 769.4 1104.9 769.1Q1107.5 770.3 1106.5 772.4M1139.4 747.2Q1133.1 747.4 1127.7 751.1M1139.4 747.2Q1139.1 749.8 1140.9 751.9M1137 747.8Q1135.6 752.3 1137.6 751.1Q1138.9 748.9 1137 747.8M1134.1 751.1Q1130.7 746.3 1129.5 751.6M1131.2 751.8Q1127.8 747 1126.6 752.4M1129.8 752.2Q1126.3 747.4 1125.2 752.7M1128.6 752.5Q1125.1 747.7 1124 753.1M1127.1 750.3Q1120.5 750.4 1114.8 754.2M1127.1 750.3Q1126.6 751.8 1127.5 752.8M1125.6 750.7Q1126.5 753.3 1127.2 755.9M1122.7 754Q1119.2 749.2 1118.1 754.6M1120.4 752.1Q1120.3 755.2 1121.9 757.9M1118 752.7Q1119.1 755.3 1119.8 758.1M1116.5 753.1Q1115.2 757.6 1117.1 756.4Q1118.4 754.2 1116.5 753.1M1114 753.6Q1109.3 754.1 1105.2 756.9M1114 753.7Q1112.6 758.2 1114.6 757.1Q1115.9 754.8 1114 753.7M1113.4 756.4Q1109.9 751.6 1108.7 757M1109.4 754.9Q1109.9 757.7 1110.9 760.4M1106.1 755.8Q1106.1 758.8 1107.4 761.4M1103.8 756.2Q1101.6 755.2 1100.2 757.5M1103.9 756.3Q1104.1 759.1 1105.5 761.6M1102 756.8Q1101.5 758.2 1102.4 759.3M1100.3 757.3Q1100.4 760.1 1101.9 762.6M1139.6 748.2Q1133.9 750.8 1127.7 749.4M1137.7 748.3Q1136.3 745.1 1137.3 741.6M1133 748.9Q1131.7 746.1 1132.3 742.9M1129.4 749.4Q1126.2 745.5 1128.6 745.9Q1130.8 747.6 1129.4 749.4M1127.1 749.2Q1124.7 751.5 1121.7 749.7M1127.2 749.7Q1126.2 746.7 1126.5 743.6M1122.7 750.3Q1119.5 746.5 1121.9 746.8Q1124.1 748.5 1122.7 750.3M1119.6 750.8Q1115 751.7 1110.3 751.4M1119.6 750.8Q1118.4 749.6 1118.9 748.2M1118.1 751Q1114.9 747.1 1117.3 747.4Q1119.5 749.1 1118.1 751M1115.6 748.7Q1114.1 754.8 1110.8 750M1114 751.5Q1113.5 748.8 1112.9 746.1M1108.3 752.3Q1104 753.8 1099.3 752.6M1108.3 752.3Q1107.2 751.2 1107.6 749.8M1106.5 752.6Q1105.6 749.8 1105.5 747M1105 752.8Q1104.3 749.8 1104.4 746.8M1103.1 753Q1099.9 749.2 1102.3 749.5Q1104.5 751.2 1103.1 753M1100.4 750.7Q1098.9 756.9 1095.6 752.1M1138.7 741.5Q1132.8 742.9 1126.9 741.3M1138.7 739.2Q1136.3 745.4 1133.6 739.9M1136.6 742Q1137.1 738.6 1136.3 735.2M1134.9 739.2Q1132.5 745.4 1129.7 739.9M1132.8 742Q1131.9 738.5 1132.7 735.1M1131.1 739.3Q1128.8 745.4 1126 740M1129.2 739.3Q1126.8 745.4 1124 740M1127.7 742Q1128.1 739 1127.3 735.9M1125.3 741.7Q1122.3 742.6 1119.3 741.1M1125.3 742Q1124.3 740.7 1124.9 739.3M1123.4 742Q1122.4 740.7 1123 739.3M1119.7 742Q1120 739.2 1120.2 736.3M1118.7 741.5Q1115.7 743.9 1112.7 741.8M1117 742.1Q1116.7 738.6 1116.9 735.2M1113 742.1Q1112.1 739.6 1112.3 737.1M1110.4 742.2Q1107.2 743.5 1103.9 741.7M1110.4 742.1Q1109.4 739.3 1110.2 736.6M1108 742.1Q1107.2 738.8 1107.2 735.6M1105.6 742.1Q1104.6 740.7 1105.2 739.4M1103.3 741.6Q1100.8 743.9 1098.2 741.3M1103.3 742.1Q1102.4 739.2 1103.6 736.3M1101.6 739.4Q1099.2 745.5 1096.4 740.1M1099.5 742.1Q1098.4 740.8 1099.1 739.4M1138.8 734.9Q1135.2 735.3 1132 733.4M1138.7 735.1Q1139.1 732.5 1138.8 729.8M1137.1 732.1Q1133.9 737.8 1132 732.1M1134.7 734.5Q1132.7 729.8 1134.9 730.8Q1136.6 733.1 1134.7 734.5M1131.9 734.1Q1131.1 732.6 1132 731.4M1129.9 733.7Q1124.3 734.5 1119.2 731.9M1129.9 733.8Q1130 730.9 1130.2 727.9M1128 730.8Q1124.8 736.5 1122.9 730.8M1124.8 733.1Q1124 731.6 1124.9 730.4M1120.2 729.7Q1117 735.4 1115.1 729.7M1118.2 731.9Q1114.5 733.6 1111.4 730.5M1118.2 732.1Q1118.7 728.9 1119 725.6M1116.5 731.9Q1115.7 730.4 1116.6 729.2M1109.2 731.2Q1105.1 732.1 1101.6 729.3M1107.2 730.6Q1107 727.6 1107.6 724.8M1105.6 727.6Q1102.4 733.3 1100.5 727.6M1103.5 730Q1102.6 728.5 1103.5 727.3M1102.4 727.1Q1099.2 732.8 1097.3 727.1M1100.6 729.2Q1099.5 730.3 1098.8 728.4M1100.9 726.9Q1097.7 732.6 1095.8 726.9M1139.7 728.7Q1135.6 728.4 1132 726.3M1140.3 726.4Q1136.4 731.6 1135.2 725.6M1137.1 728.3Q1135.7 723.3 1137.8 724.6Q1139.2 727.1 1137.1 728.3M1135 727.7Q1133.5 722.7 1135.6 724Q1137.1 726.5 1135 727.7M1132.2 726.9Q1130.8 721.9 1132.9 723.2Q1134.3 725.7 1132.2 726.9M1131.2 726.3Q1124.1 725.2 1117.4 722.5M1131.9 724Q1127.9 729.2 1126.8 723.2M1129.3 726.1Q1128.7 724.5 1129.8 723.4M1126.9 725.4Q1126.3 723.8 1127.3 722.7M1122.6 724.2Q1121.2 719.2 1123.3 720.5Q1124.7 723 1122.6 724.2M1120.5 723.6Q1119.1 718.6 1121.2 719.9Q1122.6 722.4 1120.5 723.6M1118.6 723.1Q1119.1 720.3 1120.5 717.9M1115.5 722Q1110.1 721.7 1105.4 718.9M1115.5 722.2Q1114 717.2 1116.1 718.5Q1117.6 721 1115.5 722.2M1114.1 719Q1110.1 724.2 1109 718.2M1111.4 718.2Q1107.4 723.4 1106.3 717.5M1108.5 720.2Q1107 715.2 1109.1 716.5Q1110.6 719 1108.5 720.2M1106.9 716.9Q1102.9 722.2 1101.8 716.2M1103.6 719.1Q1101.8 719.4 1100.7 717.6M1103.7 718.8Q1105 716.3 1104.8 713.4M1101.6 718.3Q1102.7 715.8 1102.8 713M1143.3 718.3Q1137.6 714.8 1130.9 713.8M1143.4 717.9Q1141.9 718.8 1142 720.4M1141.9 717.2Q1140.5 719.6 1140 722.2M1138.7 715.9Q1134.3 719.1 1136.9 719.4Q1139.6 718.2 1138.7 715.9M1135.2 717.6Q1135.4 710.8 1130.6 714.9M1134.8 714.3Q1130.5 717.5 1133 717.8Q1135.8 716.6 1134.8 714.3M1133.5 713.8Q1129.2 716.9 1131.7 717.2Q1134.5 716.1 1133.5 713.8M1132.2 713.2Q1130.3 716.2 1129.1 719.4M1130.2 712.3Q1126.8 709.2 1122 709.1M1130.2 712.4Q1128.6 713.3 1128.7 714.9M1127.3 714.3Q1127.5 707.5 1122.7 711.6M1127 711.1Q1125.5 712 1125.6 713.6M1123.5 712.7Q1123.6 705.9 1118.9 710M1122.2 709.1Q1120.8 712.1 1119.7 715.2M1121.4 709.5Q1118.9 707.3 1115.5 707.3M1121.7 708.9Q1117.3 712.1 1119.9 712.3Q1122.6 711.2 1121.7 708.9M1119.2 707.9Q1114.8 711 1117.4 711.3Q1120.1 710.2 1119.2 707.9M1116.9 706.9Q1116.1 709.9 1114 712.5M1113.6 705.5Q1110.3 703.5 1106.5 702.6M1111.2 707.6Q1111.3 700.8 1106.6 704.9M1109.8 704Q1108.3 704.9 1108.4 706.5M1142.9 718.9Q1138.1 717.5 1134.7 713.4M1144.3 716.4Q1139.6 720.3 1139.9 714.7M1142 718Q1141.8 716.5 1142.9 715.7M1140 716.9Q1141.5 714.9 1142.4 712.5M1137.7 715.7Q1137.5 710.8 1139.2 712.5Q1139.9 715.1 1137.7 715.7M1137.3 712.5Q1132.5 716.4 1132.8 710.7M1133.3 712.8Q1129.1 711.5 1126 708.2M1133.1 713.1Q1132.9 708.3 1134.5 709.9Q1135.3 712.5 1133.1 713.1M1131.7 712.3Q1131.5 707.5 1133.2 709.1Q1133.9 711.7 1131.7 712.3M1129.1 707.9Q1124.3 711.8 1124.6 706.2M1124.1 708.3Q1120.7 707.1 1118.2 704.4M1124.2 708.1Q1124 706.5 1125.2 705.7M1122.4 707.1Q1122.2 702.3 1123.9 703.9Q1124.6 706.5 1122.4 707.1M1119.4 705.4Q1119.2 700.6 1120.8 702.2Q1121.5 704.8 1119.4 705.4M1117.2 704Q1113.1 703.2 1110.3 699.9M1116.7 701Q1111.9 704.9 1112.2 699.2M1114.7 699.9Q1110 703.8 1110.2 698.1M1112.7 698.8Q1108 702.7 1108.2 697M1109.4 699.2Q1108.2 699.6 1107.8 698.8M1110.4 697.5Q1105.6 701.4 1105.9 695.7M1149.2 709.1Q1145.6 704.3 1140 702.3M1149.4 708.8Q1144.3 710.9 1146.8 711.7Q1149.8 711.3 1149.4 708.8M1147.6 707.5Q1144.9 709.6 1143.4 712.6M1145.5 706Q1143.8 706.5 1143.6 708.1M1143.5 704.5Q1141.8 707.8 1139.3 710.5M1141.6 703.1Q1136.6 705.2 1139 706.1Q1142 705.6 1141.6 703.1M1139.2 701.8Q1135.1 697.6 1129.5 695.7M1139.4 701.5Q1137.5 703.8 1136.1 706.3M1137.7 700.3Q1132.6 702.3 1135.1 703.2Q1138.1 702.8 1137.7 700.3M1136.3 699.3Q1131.2 701.3 1133.7 702.2Q1136.7 701.8 1136.3 699.3M1130.4 698.6Q1132.2 691.9 1126.5 694.8M1129.5 694Q1124.2 688.4 1116.7 685.9M1129.3 694.2Q1127.2 696.8 1125.5 699.7M1126 695.3Q1127.7 688.6 1122 691.6M1125.7 691.6Q1123.7 694.3 1121.6 696.9M1124 690.3Q1122 692.8 1120.4 695.5M1120.4 687.7Q1115.3 689.8 1117.8 690.7Q1120.8 690.2 1120.4 687.7M1148.3 708.3Q1154.9 705.5 1158.6 699.5M1148.6 708.6Q1146.3 706.8 1144.4 704.6M1148 705.2Q1154.3 708.5 1152.7 702.1M1151.2 706.3Q1151.1 704.5 1149.6 703.9M1153.4 704.4Q1152.5 698.9 1151 701.1Q1150.8 704.3 1153.4 704.4M1153.8 700.2Q1160.1 703.5 1158.4 697.1M1157.4 700.9Q1155.3 697.7 1152.1 695.4M1160.5 698.6Q1160.6 698.6 1160.1 698M1160.3 698.4Q1158.5 696.1 1156.8 693.7M1142.1 703.3Q1146.1 702.1 1147.7 698.1M1140.4 701.3Q1146.7 704.6 1145 698.2M1144.4 701.7Q1144.3 699.9 1142.7 699.2M1144.2 697.9Q1150.5 701.2 1148.9 694.8M1149.1 697Q1153.4 695.1 1155.7 690.9M1149.4 697.3Q1148.5 691.8 1147 694Q1146.8 697.2 1149.4 697.3M1149.6 693.2Q1155.9 696.5 1154.3 690.1M1152.7 694.4Q1151.8 688.9 1150.3 691.1Q1150.1 694.3 1152.7 694.4M1154.3 693.1Q1152.7 689.6 1149.1 687.9M1135.9 698.2Q1140 695.4 1142.9 691.1M1134.2 696.3Q1140.1 699.4 1138.6 693.4M1136.6 694.3Q1142.4 697.4 1140.9 691.4M1140.2 694.7Q1140.1 693 1138.7 692.4M1140.5 690.8Q1146.4 693.9 1144.8 688M1143.8 691.5Q1148 690.1 1149.8 685.9M1143.8 691.6Q1143 686.4 1141.6 688.5Q1141.4 691.4 1143.8 691.6M1146.3 689.5Q1146.1 687.7 1144.7 687.2M1147.7 688.2Q1146.8 683 1145.5 685.1Q1145.3 688 1147.7 688.2M1149.6 686.5Q1149.5 684.8 1148.1 684.2M1151.5 685.2Q1152 685.2 1151.3 683.8M1129.5 693Q1134.1 690.8 1136.7 686.4M1127.8 690.9Q1134.3 694.4 1132.6 687.7M1129 689.9Q1135.6 693.3 1133.8 686.6M1132.5 690.8Q1132.4 688.9 1130.8 688.3M1134.9 688.7Q1134.8 686.8 1133.2 686.2M1136.8 687.1Q1135.9 681.3 1134.3 683.7Q1134.1 686.9 1136.8 687.1M1137.4 685.8Q1143.6 684.2 1145.7 678.1M1137.8 686.2Q1137.7 684.3 1136.1 683.7M1139.5 684.7Q1139.4 682.8 1137.8 682.2M1141.3 683.2Q1141.1 681.3 1139.5 680.7M1140.8 679.5Q1147.4 683 1145.6 676.3M1145 680Q1144 674.2 1142.5 676.5Q1142.3 679.8 1145 680M1147.1 678.1Q1147.6 678.2 1147.2 677.1M1145.1 675.8Q1151.7 679.2 1149.9 672.6M1123.2 687.8Q1127.3 686.9 1128.8 683.1M1124.7 687.1Q1123.1 685.6 1122.2 683.7M1126.9 685.1Q1125.2 683.4 1123.7 681.4M1128 684.2Q1127.2 679.9 1126.1 681.6Q1125.9 684.1 1128 684.2M1127.4 681.6Q1132.4 684.2 1131.1 679.2M1129.4 682.5Q1133.7 680.4 1136.1 676.4M1129.6 682.8Q1128.2 680.4 1125.8 678.9M1131.1 681.5Q1131 680 1129.8 679.5M1133.9 679Q1133.2 674.6 1132.1 676.4Q1131.9 678.9 1133.9 679M1135.1 678Q1134.3 673.7 1133.2 675.4Q1133 677.9 1135.1 678M1137.2 676.3Q1140.6 673.9 1143.3 670.6M1135.6 674.5Q1140.5 677.1 1139.2 672.1M1138.8 674.8Q1138.1 670.4 1136.9 672.2Q1136.7 674.6 1138.8 674.8M1139.7 674Q1139 669.6 1137.8 671.4Q1137.6 673.8 1139.7 674M1140.8 673Q1140.7 671.6 1139.5 671.1M1142.6 671.4Q1141 669.7 1139.6 667.8M1165.9 696.2Q1164.7 693.3 1161.9 691.4M1165.7 696.2Q1160.6 696 1162.3 697.7Q1165.1 698.5 1165.7 696.2M1164.8 694.6Q1162.5 696.5 1159.3 696.8M1163.7 692.5Q1162 692.2 1161.1 693.5M1163 691.2Q1159.5 692 1156.8 694.1M1162.8 690.4Q1161.9 687.3 1159.4 685M1160.2 691.8Q1164.5 686.8 1158.4 687M1161.3 688.1Q1156.2 687.8 1157.9 689.6Q1160.6 690.4 1161.3 688.1M1159.7 685.2Q1157.7 687.1 1155 687.8M1158.7 683.8Q1157.6 679.2 1153.9 675.9M1158.9 683.6Q1153.7 683.4 1155.5 685.1Q1158.2 685.9 1158.9 683.6M1155.3 682.8Q1159.5 677.8 1153.5 678M1154.5 681.2Q1158.7 676.2 1152.7 676.5M1156.2 678.7Q1151 678.4 1152.7 680.1Q1155.5 681 1156.2 678.7M1155.1 676.7Q1152.7 678.7 1149.4 679.1M1153.5 674.1Q1151.5 667 1146.4 661.5M1153 672.9Q1150.9 674 1148.5 674.7M1151.8 670.7Q1146.7 670.4 1148.4 672.2Q1151.1 673 1151.8 670.7M1150.9 668.9Q1148.1 669.9 1146 672.1M1147.6 668.7Q1151.9 663.7 1145.8 663.9M1148.8 665.2Q1147.1 664.9 1146.3 666.2M1147.8 663.3Q1142.7 663 1144.4 664.8Q1147.1 665.6 1147.8 663.3M1146 661.1Q1148.2 659.8 1146 660.9M1144.1 662.2Q1148.3 657.2 1142.3 657.4M1169.9 694.6Q1170.9 690.9 1167.8 688.9M1170.4 694.4Q1167.2 695.4 1164.1 696.7M1168.7 690.3Q1163.8 689.5 1165.3 691.4Q1167.8 692.5 1168.7 690.3M1168.1 688.8Q1165.6 689.3 1163.5 690.7M1167.4 688.1Q1165.7 681.8 1162 676.4M1165.3 689Q1169.9 684.6 1164 684.2M1163.1 683.5Q1167.6 679.2 1161.8 678.7M1164.9 681Q1163.3 680.6 1162.3 681.7M1164.1 679.2Q1159.2 678.4 1160.7 680.3Q1163.2 681.3 1164.1 679.2M1161.1 678.8Q1165.7 674.5 1159.9 674M1161.5 674.4Q1161.3 668.5 1157.4 664.1M1162 674.2Q1157.1 673.4 1158.6 675.2Q1161.1 676.3 1162 674.2M1158.8 673.1Q1163.3 668.8 1157.5 668.3M1157.9 671Q1162.4 666.6 1156.6 666.2M1159.8 668.8Q1158.2 668.4 1157.3 669.5M1157.8 664Q1152.9 663.2 1154.4 665Q1156.9 666.1 1157.8 664M1157.2 663.5Q1157 659.8 1154.7 657.1M1157.6 663.3Q1155 664.9 1152.1 665.6M1156.8 661.6Q1151.9 660.8 1153.4 662.6Q1155.9 663.7 1156.8 661.6M1156.3 660.3Q1154.2 661.7 1151.7 661.9M1155.4 658.2Q1150.5 657.4 1152 659.3Q1154.6 660.3 1155.4 658.2M1175 693.1Q1174.7 685.9 1170.8 679.7M1172.3 693.9Q1178.1 689.5 1171.4 688.2M1174.3 690.2Q1168.7 688.6 1170.2 691Q1173 692.5 1174.3 690.2M1173.1 686Q1169.5 687.3 1165.6 687.9M1169.7 685.3Q1175.6 680.8 1168.9 679.6M1168.8 682.1Q1174.6 677.6 1167.9 676.4M1170 677.9Q1169.7 669.9 1166.1 662.9M1170.7 677.7Q1165.1 676.2 1166.6 678.5Q1169.4 680.1 1170.7 677.7M1169.9 675.1Q1168.1 674.4 1166.9 675.6M1166.3 673.7Q1172.2 669.2 1165.5 668M1165.9 672.2Q1171.7 667.7 1165 666.5M1168.3 669.5Q1166.5 668.8 1165.3 669.9M1166.8 664.3Q1165 663.7 1163.8 664.8M1165.9 662.5Q1165.9 658.1 1163.8 654.3M1166.2 662.4Q1162.8 663 1159.6 664.7M1165.6 660.4Q1162.6 662 1159 661.8M1162.2 659.3Q1168 654.9 1161.3 653.6M1161.6 657.4Q1167.4 652.9 1160.7 651.7M1174.5 693.3Q1172.5 688.5 1172.5 683.4M1174 693.4Q1177.6 693.3 1181 691.9M1173.7 691.6Q1175 690.3 1176.5 690.7M1173.3 689.1Q1177.4 685.4 1177.1 688Q1175.4 690.6 1173.3 689.1M1172.8 686.3Q1176.2 685.1 1179.8 685M1172.4 684Q1176.5 680.4 1176.2 683Q1174.5 685.5 1172.4 684M1171.9 681.9Q1170.4 674.7 1170.1 667.2M1172 681.9Q1176.1 678.2 1175.9 680.9Q1174.1 683.4 1172 681.9M1171.1 677Q1175.3 673.3 1175 675.9Q1173.2 678.4 1171.1 677M1173.2 671.9Q1166.3 670.6 1171.5 666.7M1169.9 670.1Q1174.1 666.4 1173.8 669.1Q1172 671.6 1169.9 670.1M1169.7 665.3Q1166.8 659.7 1167.3 653.4M1169.1 665.4Q1170.3 664.1 1171.9 664.5M1168.8 663.8Q1172.3 662.2 1176.2 662.5M1168.4 661.3Q1171.9 660.7 1175.3 659.6M1171 659.3Q1164.1 657.9 1169.3 654M1167.6 656.9Q1168.8 655.5 1170.4 656M1170 653.7Q1163.1 652.3 1168.3 648.4M1179.3 692.4Q1178.3 686.6 1179.2 680.8M1181.6 692.2Q1176 690.4 1180.7 687.7M1181.5 690.2Q1175.9 688.4 1180.6 685.7M1181.3 687.7Q1175.7 685.9 1180.4 683.2M1181.2 686.2Q1175.6 684.4 1180.3 681.7M1178.7 684.5Q1179.9 683.5 1181.1 684.1M1178.6 683.2Q1182.4 680.5 1181.9 682.6Q1180.2 684.6 1178.6 683.2M1178.5 679.3Q1177.1 673 1178.3 666.6M1178.1 675.5Q1179.3 674.5 1180.5 675.1M1180.4 673.4Q1174.9 671.6 1179.6 668.9M1177.9 671.2Q1181.7 668.5 1181.2 670.7Q1179.5 672.6 1177.9 671.2M1180 666.6Q1174.4 664.8 1179.1 662.1M1177.3 665.3Q1175.6 662.3 1177.6 659M1177.5 665.3Q1181.3 662.7 1180.8 664.8Q1179.1 666.7 1177.5 665.3M1179.9 663.9Q1174.3 662.1 1179 659.3M1177.2 659.9Q1181 657.3 1180.5 659.4Q1178.8 661.4 1177.2 659.9M1176.8 657.7Q1175.4 654.9 1177.3 651.9M1177 657.7Q1180.8 655 1180.4 657.2Q1178.6 659.1 1177 657.7M1179.2 653.4Q1173.6 651.6 1178.3 648.9M1190.8 692.3Q1191.6 688.3 1190.1 684.1M1190.7 692.3Q1185.9 689 1186.6 691.7Q1188.7 694.1 1190.7 692.3M1190.8 690.2Q1187.5 688.9 1184.1 690.4M1187.9 687.3Q1194.9 685 1189 681.7M1188.1 684.4Q1195 682.1 1189.1 678.8M1191.2 682.3Q1193.6 674.9 1191.8 667.3M1188.5 676.7Q1195.4 674.4 1189.5 671.1M1188.7 672.7Q1195.6 670.4 1189.7 667M1191.9 669.8Q1190.4 668.6 1188.9 669.3M1192 666.7Q1193 659.3 1191.7 651.8M1192.3 661.2Q1187.5 657.9 1188.2 660.6Q1190.3 663 1192.3 661.2M1192.4 659.2Q1188.9 658.2 1185.3 658.5M1189.5 656.8Q1196.4 654.5 1190.5 651.2M1192.6 655.2Q1187.8 651.9 1188.5 654.6Q1190.6 657 1192.6 655.2M1195.3 693.1Q1197.9 685.9 1198.2 678.4M1193 692.8Q1199.8 691.3 1194.6 687.5M1196.2 691.5Q1193.6 691.1 1191.2 690.2M1197.2 685.3Q1193 681.7 1193.3 684.3Q1195.1 686.8 1197.2 685.3M1197.6 683Q1195.1 682.5 1192.6 681.8M1198 680.4Q1193.8 676.8 1194.1 679.4Q1195.9 681.9 1198 680.4M1198.8 677Q1201.2 669.9 1200.2 662.2M1198.6 677Q1194.4 673.4 1194.7 676Q1196.5 678.4 1198.6 677M1196.1 674.3Q1202.9 672.9 1197.7 669.1M1199.2 673.1Q1196.4 673.1 1194 671.5M1199.7 670.3Q1195.5 666.7 1195.8 669.3Q1197.6 671.8 1199.7 670.3M1197.2 667.6Q1204 666.2 1198.8 662.4M1200.4 665.8Q1196.2 662.2 1196.5 664.8Q1198.3 667.3 1200.4 665.8M1201.3 660Q1203.4 656.9 1201.5 653.1M1201.4 660Q1198.5 658.7 1195.5 658.3M1201.7 657.8Q1199 656.4 1196 656.4M1195.6 692.3Q1198.7 696.3 1203.7 696.7M1196.8 689.9Q1196.1 696.7 1201.2 693M1199.8 694.7Q1200.6 691.9 1203.1 690M1203.5 693.4Q1202.7 700.2 1207.8 696.5M1204.4 696.6Q1209.1 700.5 1215.1 701.8M1204.2 697Q1205.5 694.6 1206.7 692.2M1207.8 695.7Q1207 702.5 1212.2 698.8M1210.1 696.9Q1209.3 703.7 1214.4 700M1210.3 700.2Q1211.9 699.4 1211.9 697.8M1213.6 698.7Q1212.8 705.5 1218 701.8M1215.4 699.7Q1214.7 706.5 1219.8 702.8M1215.4 702.3Q1215.7 704.4 1217.4 703.8M1215.2 702.8Q1216.8 702 1216.8 700.4M1217.3 703.9Q1219.6 701.6 1220.2 698.4M1197.2 684.7Q1201.2 687 1205.5 688.7M1201.4 686.7Q1203 683.8 1205.1 681.2M1203.4 687.7Q1208.1 684.9 1205.5 684.3Q1202.6 685.2 1203.4 687.7M1205.2 688.7Q1206.9 685.3 1208.4 681.9M1206.3 688.5Q1209.5 691.5 1213.7 692.7M1206 689.1Q1208.3 686.6 1208.7 683.2M1210.3 691.3Q1211.4 689 1212.2 686.5M1212.2 692.4Q1214.6 689.8 1215 686.1M1214.7 693.2Q1218.1 696.8 1223.4 697M1215.8 691Q1215.1 698 1220.4 694.2M1220.7 693.5Q1219.9 700.5 1225.2 696.7M1220.7 696.8Q1222.4 693.8 1224.2 690.7M1222 697.5Q1223.6 696.7 1223.7 695.1M1199 676.7Q1201.9 678.5 1205.6 678.5M1206.8 679.6Q1209.8 681.1 1213.4 681.1M1206.8 679.5Q1208.2 676.7 1208.6 673.5M1209.5 677.8Q1209.6 683.8 1213.7 680M1210 680.7Q1211.2 678.1 1211.5 675.3M1214.8 682.2Q1218.9 687.1 1225.2 688.9M1214.7 682.4Q1216.1 681.9 1216.3 680.7M1216.4 683.6Q1220.4 681.9 1218.4 681.2Q1216.1 681.6 1216.4 683.6M1225.3 689.7Q1225.9 692.2 1228.4 691.9M1226.5 688Q1225.2 693.3 1229.7 690.9M1226.2 690.5Q1230.1 688.8 1228.2 688.1Q1225.8 688.5 1226.2 690.5M1200.8 668.8Q1203.8 671.4 1207.8 671.2M1200.8 668.7Q1202.2 667.8 1202 666.4M1202.8 669.4Q1203.4 666.6 1204.6 664M1206.9 671Q1210.8 667.9 1208.4 667.8Q1206 668.9 1206.9 671M1208.3 671.4Q1212.6 673.7 1217.8 674M1209.1 669Q1209.2 675.2 1213.4 671.3M1211.5 672.6Q1213.1 670.6 1213.6 668.3M1212.8 673.1Q1213.9 671 1215.1 669M1216.5 674.5Q1217.5 671.4 1219.4 668.5M1218.3 675.4Q1220 678.3 1223.9 678.1M1223.8 675.9Q1222.3 681.7 1227.2 679.1M1224.7 679.8Q1228.9 683.6 1234.2 685.6M1226.3 677.7Q1224.8 683.4 1229.7 680.8M1228.5 682.3Q1230.5 680.6 1231.8 678.5M1232 681.8Q1230.6 687.5 1235.4 684.9M1233.7 682.9Q1232.2 688.7 1237.1 686.1M1233.9 686.1Q1238.2 684.2 1236.1 683.5Q1233.5 683.9 1233.9 686.1M1202.7 660.4Q1208.1 664.1 1214.6 664.9M1202.6 660.8Q1203.9 659.9 1203.8 658.5M1204.1 661.4Q1205.4 660.5 1205.2 659.1M1205.8 662Q1207.1 659 1208.4 655.9M1208.9 663.1Q1212.7 660.1 1210.4 659.9Q1207.9 661.1 1208.9 663.1M1210.9 663.9Q1214.7 660.9 1212.4 660.7Q1210 661.8 1210.9 663.9M1212.6 664.5Q1216.4 661.5 1214.1 661.3Q1211.6 662.4 1212.6 664.5M1216.5 665.4Q1218.9 668.2 1222.5 667.4M1219.1 664.2Q1219.2 670.3 1223.4 666.4M1221.5 665Q1221.6 671.2 1225.8 667.3M1222.3 668Q1225.5 672 1230.9 672.9M1222.3 668Q1227 666 1224.7 665.2Q1221.9 665.7 1222.3 668M1225.2 666.9Q1223.7 673.1 1229 670.3M1225.6 670.4Q1228 668.1 1229.4 665.1M1227.9 672Q1229.5 671.5 1229.7 670M1231.7 671.4Q1230.1 677.7 1235.4 674.9M1231 673.6Q1232.9 677.2 1236.9 677.8M1230.7 674Q1235.4 672 1233.1 671.2Q1230.3 671.7 1230.7 674M1234.3 673.2Q1232.7 679.5 1238 676.7M1234.6 676.8Q1239.3 674.8 1237 674Q1234.2 674.4 1234.6 676.8M1236.4 678Q1241.1 676 1238.8 675.2Q1236 675.7 1236.4 678M1238.2 679.5Q1238.1 680.8 1239.4 680.1M1239.8 677.2Q1238.3 683.5 1243.6 680.6M1221.2 709Q1225 707.3 1226.5 703.1M1221 708.8Q1220 704 1218.8 706Q1218.7 708.7 1221 708.8M1224.2 705.7Q1223.2 700.9 1222 703Q1221.9 705.7 1224.2 705.7M1225.8 704.2Q1224.8 699.4 1223.6 701.5Q1223.5 704.2 1225.8 704.2M1227.6 702.6Q1232.4 699 1235.9 694M1228.9 701.3Q1227.9 696.5 1226.7 698.5Q1226.6 701.2 1228.9 701.3M1230.3 696.4Q1235.9 699 1234.2 693.5M1233 697.3Q1232.8 695.7 1231.5 695.2M1234.7 695.7Q1233.1 692.7 1230.5 690.6M1236.7 693.4Q1241.2 690.5 1244.3 686.2M1235.1 691.8Q1240.7 694.4 1239 688.9M1236.4 690.6Q1242 693.2 1240.3 687.7M1238.3 688.7Q1243.9 691.4 1242.2 685.9M1242 688.7Q1241.8 687.1 1240.5 686.7M1243.2 687.6Q1241.4 685.9 1239.5 684.4M1245.1 685.1Q1248.4 683.6 1249.7 680.2M1243.7 683.6Q1249.3 686.2 1247.6 680.7M1246.7 684.2Q1244.8 682.3 1242.9 680.2M1246.1 681.3Q1251.7 683.9 1250 678.4M1248.9 682.1Q1248.8 680.5 1247.4 680M1224.3 713.2Q1230.5 711.3 1233.8 705.3M1224.1 710Q1230 713.7 1228.8 707.4M1228 710.7Q1225.5 708 1224.2 704.4M1230.1 709.1Q1230.1 707.3 1228.7 706.6M1230.4 705.3Q1236.3 709 1235.1 702.7M1233.8 706.3Q1233.8 704.5 1232.4 703.8M1235.6 704.7Q1240.6 702.7 1243.6 698.1M1235.7 704.9Q1235.3 699.5 1233.7 701.6Q1233.2 704.5 1235.7 704.9M1237.5 703.6Q1236 700.8 1234.1 698.4M1239.3 702.3Q1239.3 700.5 1237.8 699.8M1240.8 701.1Q1239 698.2 1237 695.5M1242.4 700Q1241.9 694.6 1240.3 696.6Q1239.9 699.6 1242.4 700M1243.7 699Q1243.2 693.6 1241.6 695.7Q1241.2 698.6 1243.7 699M1245.2 697.6Q1251.6 694.2 1256.3 688.4M1245.3 697.8Q1245.3 696 1243.9 695.3M1246.8 696.7Q1246.8 694.9 1245.4 694.1M1248.8 695.2Q1246.9 692 1243.9 689.6M1250.1 694.2Q1248.4 691 1246.4 688.2M1253.6 691.6Q1253.6 689.8 1252.2 689.1M1226.8 717.7Q1234.4 716.3 1239.8 711.1M1225.8 715.9Q1231.1 720.2 1230.7 713.9M1229.3 717.1Q1229.5 715.4 1228.2 714.5M1231.8 715.7Q1230 713.3 1228.5 710.7M1233.1 715Q1233.3 709.6 1231.5 711.4Q1230.7 714.3 1233.1 715M1235 713.9Q1234 710.2 1231.5 707.4M1235 710.6Q1240.3 714.9 1240 708.6M1240.5 710.5Q1244.1 709.5 1246.8 706.9M1242.7 709.5Q1242.9 704.1 1241.1 706Q1240.3 708.9 1242.7 709.5M1244.7 708.3Q1244.9 702.9 1243.1 704.8Q1242.3 707.7 1244.7 708.3M1246.2 707.5Q1244.6 705.2 1243.6 702.6M1247.2 706.9Q1253.7 705 1258.1 699.5M1245.8 704.5Q1251.1 708.8 1250.8 702.5M1251.8 704.3Q1250.2 702.1 1249.5 699.4M1253.5 703.4Q1253.7 698 1251.9 699.8Q1251.1 702.7 1253.5 703.4M1255.1 702.4Q1253.7 699.7 1252.4 696.8M1256.7 701.5Q1256.9 696.1 1255.1 698Q1254.3 700.8 1256.7 701.5M1258 700.8Q1257.4 697.7 1255.4 695.5M1260.2 698.9Q1261.8 699.5 1262.1 697.8M1259.1 696.9Q1264.4 701.2 1264 694.9M1262.3 698.3Q1261.5 695 1259 692.5M1226.8 717.6Q1230.5 714.6 1235.5 714.7M1227 717.9Q1231.5 721.2 1228.9 721.5Q1226 720.3 1227 717.9M1229.1 717.1Q1233.6 720.3 1231 720.6Q1228.1 719.5 1229.1 717.1M1231.6 716Q1232.4 718.8 1234.3 721M1233.2 715.3Q1237.8 718.6 1235.1 718.9Q1232.2 717.7 1233.2 715.3M1236.3 714.1Q1242.7 709.1 1250.7 708.4M1244.8 713.7Q1244.7 706.7 1249.6 711M1245.2 710.4Q1246.6 713.1 1247.9 715.9M1252 707.7Q1257.6 704.6 1264 703.4M1252 707.6Q1253 711 1254.8 714M1254.1 706.7Q1256.1 710.1 1257.7 713.5M1256.3 705.8Q1260.8 709.1 1258.2 709.4Q1255.3 708.2 1256.3 705.8M1257.7 705.2Q1258.9 708.7 1260.2 712.1M1260.6 707.2Q1260.5 700.1 1265.4 704.4M1262.7 706.3Q1262.6 699.3 1267.5 703.6M1263.3 702.9Q1264.9 703.9 1264.8 705.5M1230.9 729.5Q1234.2 730 1236.6 727.3M1230.9 729.6Q1231.6 727.9 1230.5 726.8M1233 729Q1234.6 723.9 1232.4 725.2Q1230.9 727.8 1233 729M1234.7 728.6Q1236.2 723.4 1234 724.8Q1232.5 727.3 1234.7 728.6M1238.8 727.8Q1244.6 727.6 1249.3 723.9M1238.8 727.5Q1240.3 722.3 1238.1 723.7Q1236.6 726.2 1238.8 727.5M1240.9 726.9Q1242.4 721.8 1240.2 723.1Q1238.7 725.7 1240.9 726.9M1243.9 726.1Q1245.4 721 1243.2 722.3Q1241.8 724.8 1243.9 726.1M1248.6 724.8Q1250.2 719.7 1248 721Q1246.5 723.6 1248.6 724.8M1251.6 723.6Q1255.8 724.4 1259 721.4M1251 721.3Q1255 726.7 1256.2 720.6M1254.1 723.3Q1254 720.8 1253.6 718.3M1255.6 722.9Q1254.8 720.4 1254.4 717.8M1257.1 722.5Q1256.3 719.9 1256.3 717M1258.2 719.3Q1262.2 724.8 1263.5 718.6M1259.9 721.8Q1264.4 721.2 1268.5 718.9M1259.9 721.8Q1258.7 718.6 1257.9 715.2M1262.4 721.1Q1261.9 718.5 1261.7 715.8M1269.2 719.3Q1270.1 720.9 1269.8 718.2M1269.2 719.3Q1267.8 716.1 1268.1 712.4M1230.8 729Q1238.1 727.4 1245.7 728.3M1230.9 729.3Q1230.9 732.4 1232 735.4M1232.9 729Q1234.2 730.4 1233.7 732M1237.9 728.3Q1238.2 731.1 1239.4 733.8M1240.9 731Q1242.6 723.9 1246.4 729.5M1242 727.8Q1243.4 729.1 1242.8 730.7M1247.1 727.3Q1254.8 724.1 1263.1 725.5M1250 729.8Q1251.7 722.7 1255.5 728.3M1252.6 729.4Q1254.4 722.3 1258.2 727.9M1254.2 726.2Q1254.8 728.8 1255.1 731.6M1262.7 725Q1266.3 729.5 1263.6 729.1Q1261.1 727.2 1262.7 725M1263.9 725.2Q1267.3 723.7 1271.2 725M1264.3 727.9Q1266 720.8 1269.8 726.4M1266 724.6Q1269.7 729.1 1267 728.7Q1264.4 726.7 1266 724.6M1268.8 724.2Q1269.6 727.5 1270.4 730.7M1231.7 736.1Q1236.2 734.8 1240.8 736M1231.7 735.7Q1231.6 739 1231.2 742.3M1234.6 735.7Q1233.9 738.9 1234.5 742.1M1236.2 735.7Q1239 740.2 1236.5 739.5Q1234.5 737.4 1236.2 735.7M1239.1 735.7Q1240.1 737.1 1239.4 738.5M1241.2 736.1Q1247.5 734 1253.7 736.1M1241.2 735.7Q1240.6 739.2 1241.6 742.6M1243.8 735.8Q1246.6 740.3 1244.2 739.6Q1242.1 737.5 1243.8 735.8M1245.9 735.8Q1248.7 740.3 1246.3 739.6Q1244.2 737.5 1245.9 735.8M1248.6 735.8Q1251.4 740.3 1249 739.6Q1246.9 737.5 1248.6 735.8M1253.2 735.8Q1254.2 737.2 1253.5 738.6M1255.9 736.2Q1263.5 734 1271.1 736.7M1260.2 735.8Q1263 740.3 1260.5 739.6Q1258.5 737.6 1260.2 735.8M1263.1 735.9Q1263.2 739.2 1263.3 742.5M1267.5 735.9Q1267.4 739 1268 742.1M1270.5 735.9Q1271.5 737.3 1270.8 738.7M1230.7 748.5Q1233.8 750.1 1237.3 749.5M1231.1 745.9Q1232.7 752.9 1236.5 747.4M1233 749.2Q1233.6 746.6 1234.3 744.1M1236.1 746.6Q1237.6 753.7 1241.5 748.2M1239.1 750.4Q1245.4 751.6 1252 751.4M1239.1 750.1Q1242.8 745.8 1240.1 746.1Q1237.5 748 1239.1 750.1M1242.1 747.6Q1243.7 754.6 1247.5 749.1M1245.9 751.2Q1247.2 749.9 1246.7 748.3M1251.6 752Q1253 750.7 1252.4 749.2M1253.2 752.5Q1258.7 754.3 1264.7 753.7M1253.2 752.3Q1253.8 748.5 1255 744.7M1255.5 752.6Q1259.2 748.3 1256.5 748.6Q1253.9 750.5 1255.5 752.6M1257.1 752.9Q1258.4 751.6 1257.9 750M1259 753.2Q1260.4 749.6 1260.7 745.9M1264.3 754Q1264.7 751.1 1265.2 748.3M1266.2 753.8Q1268.2 756.3 1270.8 754.5M1266.2 754.3Q1269.8 750 1267.1 750.3Q1264.6 752.2 1266.2 754.3M1268.1 751.6Q1269.7 758.6 1273.5 753.2"/><path stroke-width="1.6" d="M1271.6 745.2L1272.1 745.5M1244.6 748L1245.1 747.9M1264.5 751.4L1265 751.2M1266.4 751.7L1266.9 751.5M1228.3 762.4L1229 762.3M1243.4 759.7L1244.1 759.6M1247.4 787.2L1247.7 787.7M1238.4 795.7L1238.8 795.9M1233.2 796L1233.7 796.2M1234.5 797.5L1235 797.7M1237.8 801.5L1238.3 801.7M1240.3 804.6L1240.8 804.8M1214.4 811.1L1214.8 811.4M1198.7 783.1L1198.6 783.7M1202.6 790.9L1202.6 791.4M1201.9 792.5L1201.8 793.1M1184.6 783.4L1184.2 783.7M1197.6 805.8L1197 806.2M1195 806.1L1194.5 806.4M1180.7 793L1180.9 793.7M1168.2 791L1167.8 791.3M1173.6 795.5L1173.3 795.9M1164.3 808L1163.9 808.4M1161.7 812.7L1161.3 813.1M1164.7 785.4L1164 785.4M1157.2 782.9L1156.6 782.8M1150.4 797.8L1149.7 797.8M1146.2 795.4L1145.7 795.3M1141.9 800.5L1141.3 800.5M1142.8 793.4L1142.3 793.4M1154.1 817.5L1153.5 817.4M1134 804.3L1133.5 804.3M1141.1 795.2L1140.4 795.4M1127 776.6L1126.5 776.7M1139.5 764L1139.1 764.5M1137.2 765.2L1136.9 765.7M1129.3 770.9L1128.9 771.4M1121.4 773.5L1121 774M1125.1 755.9L1124.7 756.3M1111.9 759.4L1111.5 759.7M1139 744.1L1138.5 743.9M1130.2 744L1129.6 743.8M1125.5 752.3L1125 752.1M1111.7 754.2L1111.2 754M1114.6 738L1114.1 737.7M1121.8 735L1121.3 734.7M1113.3 727.4L1112.8 727M1126.7 719.7L1126.3 719.3M1138.4 720.4L1137.8 720.5M1111.4 710.8L1110.8 710.8M1106.6 707.2L1106 707.3M1132.4 706.9L1132 706.4M1127.8 705.7L1127.4 705.3M1119.7 708.1L1119.4 707.7M1119.6 699.7L1119.3 699.3M1119 693.8L1118.4 693.7M1143.8 694.3L1144.1 693.7M1151.6 687.6L1151.9 687M1147.7 680.9L1148 680.3M1122.9 682.5L1123.1 682M1161.2 685.7L1160.7 685.3M1170.1 666.3L1169.7 665.8M1177.3 678.6L1177.5 678M1168.2 674.6L1168.3 674M1182.6 668.4L1182.8 667.9M1181.8 655.7L1182 655.2M1194.3 674.5L1194 673.9M1201.8 680.3L1202.4 680.3M1210.9 685.1L1211.6 685.1M1215.1 696.8L1215.8 696.8M1220.1 691.6L1220.8 691.6M1200.3 673.1L1200.9 673M1202.6 673.9L1203.2 673.9M1202.6 680.2L1203.1 680.2M1216.6 686.2L1217.1 686.2M1223 684L1223.5 684.1M1224 684.8L1224.5 684.9M1206.1 666.6L1206.7 666.5M1213.3 675.7L1213.8 675.6M1220.6 672.2L1221.2 672.3M1222.5 673.5L1223 673.6M1206.4 664.6L1207 664.5M1215.6 668L1216.2 667.9M1218.8 703.8L1219 703.3M1221 708.8L1221.3 708.2M1247.9 688.8L1248.1 688.2M1251.9 685.8L1252.2 685.2M1238.6 707L1238.9 706.4M1235.3 711.7L1236 711.8M1240.1 709.8L1240.7 709.8M1248.3 713.9L1249 713.9M1246.7 727.9L1247.1 727.5M1263.5 715L1264 714.6M1265.7 714.4L1266.1 714M1235.6 734.8L1236.2 735M1244.6 733.6L1245.2 733.8M1247.9 733.1L1248.6 733.3M1256.9 723.1L1257.5 723.3M1255.9 733.4L1256.5 733.7M1258.7 733.4L1259.2 733.7M1264.6 740L1265.2 740.3M1244.1 746.4L1244.8 746.2M1269 757.4L1269.7 757.2"/></g><g fill="none" stroke="#161716" stroke-linecap="round" stroke-linejoin="round" clip-path="url(#ftb)"><path stroke-width="2.7" d="M1221.6 742.8q6.2 -12.4 12.4 0q-6.2 12.4 -12.4 0M1171.7 706.2q4.3 -8.6 8.6 0q-4.3 8.6 -8.6 0M1193.1 767.5q4 -8 8 0q-4 8 -8 0M1214.9 729.3q5.4 -10.7 10.7 0q-5.4 10.7 -10.7 0M1194.5 709.7q6 -12.1 12.1 0q-6 12.1 -12.1 0M1160.1 737.9q5.1 -10.3 10.3 0q-5.1 10.3 -10.3 0M1180.7 745.4q4.1 -8.3 8.3 0q-4.1 8.3 -8.3 0M1210 722.3q4.1 -8.2 8.2 0q-4.1 8.2 -8.2 0M1192.3 721.2q4 -8.1 8.1 0q-4 8.1 -8.1 0M1209.1 747.9q6.1 -12.1 12.1 0q-6.1 12.1 -12.1 0M1176.4 722.6q3.3 -6.5 6.5 0q-3.3 6.5 -6.5 0M1179.1 745.3q5.9 -11.8 11.8 0q-5.9 11.8 -11.8 0M1205.6 751.2q4.7 -9.5 9.5 0q-4.7 9.5 -9.5 0"/><path stroke-width="3" d="M1150.2 733.6Q1155.2 750.6 1170.2 748.6Q1185.2 746.6 1190.2 718.6M1150.2 763.6Q1185.2 773.6 1220.2 758.6M1213 747.1L1214.7 727.7M1208.3 716.4c-6.3 7.5 7.5 10 12.5 -2.5M1175.2 712.6Q1186.6 722.7 1197.9 711.2M1155.2 758.8L1156.3 733.4M1164.9 725.2Q1175.8 730.8 1186.7 723.7M1164.2 714.9c-5.5 6.6 6.6 8.8 11 -2.2M1180.2 745Q1189.5 755.2 1198.8 744.9M1181.3 750.1L1182.8 725.7M1189.3 773.2L1191.2 755.7M1160.1 757.4L1158.8 739M1172.5 765.3Q1183.4 776.3 1194.3 761.5M1178.3 762.6c-5.1 6.2 6.2 8.2 10.3 -2.1M1170 768.2Q1177.4 774.4 1184.9 765.3M1193.6 730.2c-4.4 5.3 5.3 7 8.8 -1.8M1169.3 704.5L1169.8 687.7M1191.4 758.1c-5.4 6.4 6.4 8.6 10.7 -2.1M1157.6 716.2L1158.9 697.1M1155.2 742.8L1156.1 718.1M1186.2 756.2c-5.8 7 7 9.3 11.6 -2.3M1193 716.8L1192.8 696.8M1207.7 760L1208.2 738.3M1188.9 700.6Q1197.8 706.3 1206.6 696.7M1147.4 737.4Q1158.8 746.8 1170.3 733.6M1168.4 713.4Q1175.5 722.7 1182.5 709.2M1215.2 756.7Q1222.3 765.9 1229.5 756.6M1207.9 718.9L1208.8 703M1213.2 722.7c-5.1 6.2 6.2 8.2 10.3 -2.1M1157.3 711.5L1158.9 693.4"/><path stroke-width="3.2" d="M1195.2 703.6V753.6M1200.2 705.6V753.6M1205.2 707.6V753.6M1210.2 709.6V753.6M1215.2 711.6V753.6M1220.2 713.6V753.6"/><path stroke-width="3.6" d="M1212.8 734.6l1.6 -1.6M1188.5 742.2l1.6 -1.6M1205.2 713.1l1.6 -1.6"/></g><rect x="50.1" y="686.5" width="129.6" height="129.7" fill="none" stroke="#161716" stroke-width="9.3"/><rect x="206.3" y="689.1" width="129.4" height="129.1" fill="none" stroke="#161716" stroke-width="9.8"/><rect x="358.2" y="689.1" width="129.4" height="129.1" fill="none" stroke="#161716" stroke-width="9.8"/><g fill="none" stroke="#161716" stroke-linecap="round" stroke-linejoin="round"><path d="M57 777Q60 791 84 788Q125 784 174 781" stroke-width="8.8"/><path d="M58 768Q72 752 92 744" stroke-width="6.1"/><path d="M68 778Q70 762 86 757" stroke-width="4.7"/><path d="M167 748L169 797" stroke-width="6.8"/><path d="M156 745L157.5 792" stroke-width="5.4"/><path d="M165 745L172 752" stroke-width="4.1"/><path d="M80 742Q80 770 106 769Q136 769 140 740" stroke-width="8.1"/><path d="M106 769Q130 772 150 766Q158 760 156 748" stroke-width="6.8"/><path d="M99 716L132 701" stroke-width="8.1"/><path d="M112 692Q118 700 113 708L117 745" stroke-width="6.1"/><path d="M105 738V766M112 733V764M124 736V766M132 733V764" stroke-width="5.4"/><path d="M90 735Q95 727 104 725M140 720L145 712M148 714L150 722M123 719V731M128 712V724" stroke-width="4.3"/><path d="M122 790Q140 796 162 789" stroke-width="5.4"/><path d="M99 724l3 -4" stroke-width="4.1"/><path d="M260 697Q269 707 280 697" stroke-width="4.3"/><path d="M270 693V702L274 762" stroke-width="6.1"/><path d="M266 702l-2 6M275 703l2 6" stroke-width="3.4"/><path d="M244 735Q242 762 256 762Q266 762 263 733" stroke-width="7.4"/><path d="M263 733Q262 764 278 764Q294 764 290 727" stroke-width="8.1"/><path d="M287 725L293 737" stroke-width="6.8"/><path d="M249 733L270 724" stroke-width="3.4"/><path d="M250 742V728M256 744V736" stroke-width="4.1"/><path d="M212 800Q232 812 256 798Q282 789 332 790" stroke-width="8.8"/><path d="M214 784Q238 772 264 779" stroke-width="6.8"/><path d="M232 771L257 764" stroke-width="6.1"/><path d="M309 760V813" stroke-width="5.4"/><path d="M303 757L312 754M305 750L313 748" stroke-width="4.7"/><path d="M270 768Q258 786 294 792" stroke-width="6.8"/><path d="M213 791L219 784M290 772l3 5" stroke-width="5.4"/><path d="M414 697Q423 707 434 697" stroke-width="4.3"/><path d="M424 693V813" stroke-width="6.1"/><path d="M420 702l-2 6M429 703l2 6" stroke-width="3.4"/><path d="M397 736Q395 764 409 764Q419 764 417 732" stroke-width="7.4"/><path d="M417 732Q416 766 434 766Q452 766 448 727" stroke-width="8.1"/><path d="M445 725L451 737" stroke-width="6.8"/><path d="M402 731L423 723" stroke-width="3.4"/><path d="M403 742V728M409 744V736" stroke-width="4.1"/><path d="M364 784Q394 802 424 791Q446 785 484 787" stroke-width="8.8"/><path d="M388 781L414 770" stroke-width="6.1"/><path d="M440 788V779M452 788V777M463 788V779M474 787V775M482 787V778" stroke-width="5.4"/><path d="M455 796L461 798M444 769L450 771M437 770l4 -6" stroke-width="4.1"/><path d="M404 768L428 776" stroke-width="5.4"/></g></svg>
</body></html>
